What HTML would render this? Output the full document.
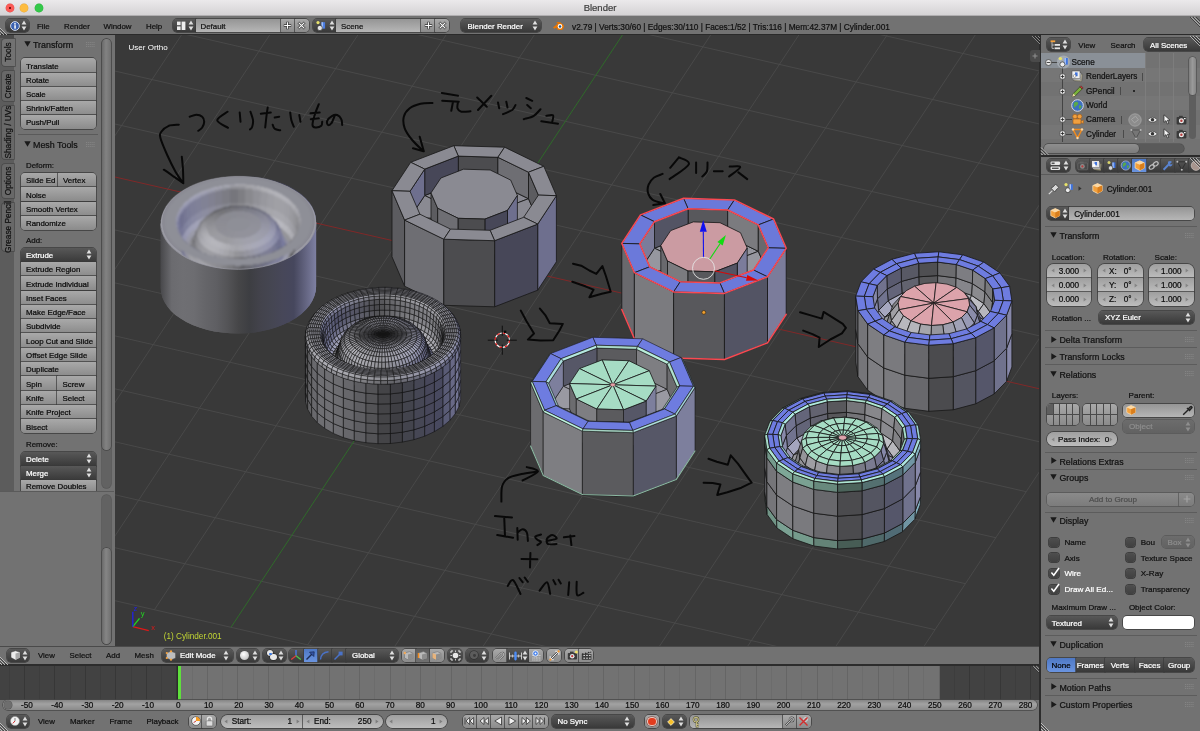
<!DOCTYPE html>
<html><head><meta charset="utf-8"><title>Blender</title>
<style>
html,body{margin:0;padding:0;}
body{width:1200px;height:731px;position:relative;overflow:hidden;background:#727272;font-family:"Liberation Sans", sans-serif;font-size:7.9px;-webkit-text-stroke:0.22px;}
div,svg{position:absolute;box-sizing:border-box;}
svg{overflow:visible;}
</style></head><body><div id="root" style="left:0;top:0;width:1200px;height:731px;will-change:transform;">
<div style="left:0px;top:0px;width:1200px;height:16px;background:linear-gradient(#ebe9eb,#d5d3d5);border-bottom:1px solid #b0aeb0;"></div>
<div style="left:5.9px;top:4.1px;width:8.2px;height:8.2px;background:#fc5b57;border-radius:50%;box-shadow:0 0 0 0.4px #df4744;"></div>
<div style="left:20.299999999999997px;top:4.1px;width:8.2px;height:8.2px;background:#fdbc40;border-radius:50%;box-shadow:0 0 0 0.4px #de9f34;"></div>
<div style="left:34.5px;top:4.1px;width:8.2px;height:8.2px;background:#34c84a;border-radius:50%;box-shadow:0 0 0 0.4px #27aa35;"></div>
<div style="left:8.7px;top:6.8999999999999995px;width:2.6px;height:2.6px;background:#4d0000;border-radius:50%;"></div>
<div style="left:0px;top:2.4000000000000004px;height:12px;line-height:12px;font-size:9.5px;color:#3e3e3e;white-space:pre;width:1200px;text-align:center;">Blender</div>
<div style="left:0px;top:16px;width:1200px;height:19px;background:#727272;border-bottom:1px solid #2a2a2a;"></div>
<div style="left:6.2px;top:19.1px;width:22.4px;height:13.4px;background:linear-gradient(#585858,#393939);box-shadow:0 0 0 0.7px #3a3a3a;border-radius:4px 4px 4px 4px;"></div>
<svg style="left:9.5px;top:20.8px" width="10" height="10" viewBox="0 0 10 10"><circle cx="5" cy="5" r="4.4" fill="#3b62b0" stroke="#dfe6f5" stroke-width="0.9"/><rect x="4.3" y="4.2" width="1.5" height="3.5" fill="#fff"/><circle cx="5" cy="2.8" r="0.9" fill="#fff"/></svg>
<svg style="left:21px;top:20.3px" width="6" height="11" viewBox="0 0 6 11"><path d="M3 0.6 L5.4 4.4 H0.6Z M3 10.4 L5.4 6.6 H0.6Z" fill="#ddd"/></svg>
<div style="left:37px;top:21.0px;height:12px;line-height:12px;font-size:7.9px;color:#111;white-space:pre;">File</div>
<div style="left:64px;top:21.0px;height:12px;line-height:12px;font-size:7.9px;color:#111;white-space:pre;">Render</div>
<div style="left:103.5px;top:21.0px;height:12px;line-height:12px;font-size:7.9px;color:#111;white-space:pre;">Window</div>
<div style="left:146px;top:21.0px;height:12px;line-height:12px;font-size:7.9px;color:#111;white-space:pre;">Help</div>
<div style="left:172.5px;top:19.1px;width:23px;height:13.4px;background:linear-gradient(#585858,#393939);box-shadow:0 0 0 0.7px #3a3a3a;border-radius:4px 0px 0px 4px;"></div>
<div style="left:195.5px;top:19.1px;width:85px;height:13.4px;background:linear-gradient(#959595,#b6b6b6);box-shadow:0 0 0 0.7px #3a3a3a;"></div>
<div style="left:280.5px;top:19.1px;width:14px;height:13.4px;background:linear-gradient(#a9a9a9,#8b8b8b);box-shadow:0 0 0 0.7px #3a3a3a;"></div>
<div style="left:294.5px;top:19.1px;width:14px;height:13.4px;background:linear-gradient(#a9a9a9,#8b8b8b);box-shadow:0 0 0 0.7px #3a3a3a;border-radius:0px 4px 4px 0px;"></div>
<svg style="left:188.0px;top:20.3px" width="6" height="11" viewBox="0 0 6 11"><path d="M3 0.6 L5.4 4.4 H0.6Z M3 10.4 L5.4 6.6 H0.6Z" fill="#ddd"/></svg>
<div style="left:200.5px;top:21.0px;height:12px;line-height:12px;font-size:7.9px;color:#111;white-space:pre;">Default</div>
<svg style="left:283.0px;top:21.3px" width="9" height="9" viewBox="0 0 9 9"><path d="M4.5 0.8V8.2M0.8 4.5H8.2" stroke="#333" stroke-width="2.4"/><path d="M4.5 1.2V7.8M1.2 4.5H7.8" stroke="#fff" stroke-width="1.1"/></svg>
<svg style="left:297.0px;top:21.3px" width="9" height="9" viewBox="0 0 9 9"><path d="M1.3 1.3L7.7 7.7M7.7 1.3L1.3 7.7" stroke="#333" stroke-width="2.4"/><path d="M1.6 1.6L7.4 7.4M7.4 1.6L1.6 7.4" stroke="#fff" stroke-width="1.1"/></svg>
<svg style="left:172.5px;top:19.1px" width="23" height="14" viewBox="0 0 23 14"><rect x="4" y="2.6" width="3.6" height="3.6" fill="#eee"/><rect x="4" y="7.4" width="3.6" height="3.6" fill="#eee"/><rect x="8.6" y="2.6" width="3.8" height="8.4" fill="#eee"/></svg>
<div style="left:313px;top:19.1px;width:23px;height:13.4px;background:linear-gradient(#585858,#393939);box-shadow:0 0 0 0.7px #3a3a3a;border-radius:4px 0px 0px 4px;"></div>
<div style="left:336px;top:19.1px;width:85px;height:13.4px;background:linear-gradient(#959595,#b6b6b6);box-shadow:0 0 0 0.7px #3a3a3a;"></div>
<div style="left:421px;top:19.1px;width:14px;height:13.4px;background:linear-gradient(#a9a9a9,#8b8b8b);box-shadow:0 0 0 0.7px #3a3a3a;"></div>
<div style="left:435px;top:19.1px;width:14px;height:13.4px;background:linear-gradient(#a9a9a9,#8b8b8b);box-shadow:0 0 0 0.7px #3a3a3a;border-radius:0px 4px 4px 0px;"></div>
<svg style="left:328.5px;top:20.3px" width="6" height="11" viewBox="0 0 6 11"><path d="M3 0.6 L5.4 4.4 H0.6Z M3 10.4 L5.4 6.6 H0.6Z" fill="#ddd"/></svg>
<div style="left:341px;top:21.0px;height:12px;line-height:12px;font-size:7.9px;color:#111;white-space:pre;">Scene</div>
<svg style="left:423.5px;top:21.3px" width="9" height="9" viewBox="0 0 9 9"><path d="M4.5 0.8V8.2M0.8 4.5H8.2" stroke="#333" stroke-width="2.4"/><path d="M4.5 1.2V7.8M1.2 4.5H7.8" stroke="#fff" stroke-width="1.1"/></svg>
<svg style="left:437.5px;top:21.3px" width="9" height="9" viewBox="0 0 9 9"><path d="M1.3 1.3L7.7 7.7M7.7 1.3L1.3 7.7" stroke="#333" stroke-width="2.4"/><path d="M1.6 1.6L7.4 7.4M7.4 1.6L1.6 7.4" stroke="#fff" stroke-width="1.1"/></svg>
<svg style="left:313px;top:19.1px" width="23" height="14" viewBox="0 0 23 14"><circle cx="5" cy="3.6" r="1.6" fill="#e8e36a"/><path d="M8.5 3.2h3.6v6.4h-3.6z" fill="#4a7be0"/><path d="M8.5 3.2h1.6v6.4h-1.6z" fill="#9dbcf5"/><circle cx="6.8" cy="9" r="2.6" fill="#e6e6e6" stroke="#222" stroke-width="0.6"/></svg>
<div style="left:461px;top:19.1px;width:80px;height:13.4px;background:linear-gradient(#585858,#393939);box-shadow:0 0 0 0.7px #3a3a3a;border-radius:4px 4px 4px 4px;"></div>
<div style="left:467.5px;top:20.8px;height:12px;line-height:12px;font-size:7.9px;color:#fff;white-space:pre;">Blender Render</div>
<svg style="left:531.5px;top:20.3px" width="6" height="11" viewBox="0 0 6 11"><path d="M3 0.6 L5.4 4.4 H0.6Z M3 10.4 L5.4 6.6 H0.6Z" fill="#e0e0e0"/></svg>
<svg style="left:552px;top:20px" width="13" height="12" viewBox="0 0 13 12"><path d="M1 7.5 L6.2 3.2 L4.2 3.2 L5.2 2 L8.2 2.2 L11.8 5.2 Q12.6 7.6 10.6 9.4 Q8 10.8 5.4 9.4 L4.4 7.5 L2.4 8.8Z" fill="#ea7600"/><circle cx="8" cy="6.4" r="2.3" fill="#fff"/><circle cx="8" cy="6.4" r="1.25" fill="#265787"/></svg>
<div style="left:572px;top:21.0px;height:12px;line-height:12px;font-size:8.3px;color:#111;white-space:pre;">v2.79 | Verts:30/60 | Edges:30/110 | Faces:1/52 | Tris:116 | Mem:42.37M | Cylinder.001</div>
<svg style="left:0px;top:26px" width="10" height="10" viewBox="0 0 10 10"><path d="M0 2L8 10M0 5L5 10M0 8L2 10" stroke="#c8c8c8" stroke-width="0.8"/><path d="M0 3.2L6.8 10M0 6.2L3.8 10" stroke="#333" stroke-width="0.8"/></svg>
<svg style="left:1188px;top:17px" width="12" height="10" viewBox="0 0 12 10"><path d="M2 0L12 10M5 0L12 7M8 0L12 4" stroke="#333" stroke-width="0.8"/><path d="M3.2 0L12 8.8M6.2 0L12 5.8" stroke="#c8c8c8" stroke-width="0.8"/></svg>
<div style="left:0px;top:35px;width:114px;height:611px;background:#727272;"></div>
<div style="left:0px;top:35px;width:14px;height:456px;background:#5c5c5c;"></div>
<div style="left:0px;top:35px;width:14px;height:3px;background:#4a4a4a;"></div>
<div style="left:2px;top:39px;width:13px;height:26.5px;background:#727272;border-radius:3px 0 0 3px;box-shadow:0 0 0 0.7px #474747;"></div>
<div style="left:12px;top:39px;width:3px;height:26.5px;background:#727272;"></div>
<div style="left:-32px;top:46.25px;width:80px;height:12px;line-height:12px;text-align:center;font-size:8.3px;color:#111;transform:rotate(-90deg);white-space:pre;">Tools</div>
<div style="left:2px;top:70.5px;width:12px;height:30.0px;background:#686868;border-radius:3px 0 0 3px;box-shadow:0 0 0 0.7px #474747;"></div>
<div style="left:-32px;top:79.5px;width:80px;height:12px;line-height:12px;text-align:center;font-size:8.3px;color:#111;transform:rotate(-90deg);white-space:pre;">Create</div>
<div style="left:2px;top:105.5px;width:12px;height:53.0px;background:#686868;border-radius:3px 0 0 3px;box-shadow:0 0 0 0.7px #474747;"></div>
<div style="left:-32px;top:126.0px;width:80px;height:12px;line-height:12px;text-align:center;font-size:8.3px;color:#111;transform:rotate(-90deg);white-space:pre;">Shading / UVs</div>
<div style="left:2px;top:164px;width:12px;height:33.5px;background:#686868;border-radius:3px 0 0 3px;box-shadow:0 0 0 0.7px #474747;"></div>
<div style="left:-32px;top:174.75px;width:80px;height:12px;line-height:12px;text-align:center;font-size:8.3px;color:#111;transform:rotate(-90deg);white-space:pre;">Options</div>
<div style="left:2px;top:203px;width:12px;height:48px;background:#686868;border-radius:3px 0 0 3px;box-shadow:0 0 0 0.7px #474747;"></div>
<div style="left:-32px;top:221.0px;width:80px;height:12px;line-height:12px;text-align:center;font-size:8.3px;color:#111;transform:rotate(-90deg);white-space:pre;">Grease Pencil</div>
<svg style="left:23.5px;top:41px" width="7" height="6" viewBox="0 0 7 6"><path d="M0.3 0.3H6.7L3.5 5.7Z" fill="#1a1a1a"/></svg>
<div style="left:33.0px;top:38.900000000000006px;height:12px;line-height:12px;font-size:8.9px;color:#111;white-space:pre;">Transform</div>
<svg style="left:85.5px;top:41.5px" width="9" height="5" viewBox="0 0 9 5"><path d="M0 0.5H9M0 2.5H9M0 4.5H9" stroke="#8c8c8c" stroke-width="0.7" stroke-dasharray="1.2 0.9"/></svg>
<div style="left:20.5px;top:58.4px;width:75px;height:14.15px;background:linear-gradient(#a9a9a9,#8b8b8b);box-shadow:0 0 0 0.7px #3a3a3a;border-radius:4px 4px 0px 0px;"></div>
<div style="left:26.0px;top:60.675px;height:12px;line-height:12px;font-size:7.9px;color:#0a0a0a;white-space:pre;">Translate</div>
<div style="left:20.5px;top:72.55px;width:75px;height:14.15px;background:linear-gradient(#a9a9a9,#8b8b8b);box-shadow:0 0 0 0.7px #3a3a3a;border-radius:0px 0px 0px 0px;"></div>
<div style="left:26.0px;top:74.825px;height:12px;line-height:12px;font-size:7.9px;color:#0a0a0a;white-space:pre;">Rotate</div>
<div style="left:20.5px;top:86.7px;width:75px;height:14.15px;background:linear-gradient(#a9a9a9,#8b8b8b);box-shadow:0 0 0 0.7px #3a3a3a;border-radius:0px 0px 0px 0px;"></div>
<div style="left:26.0px;top:88.97500000000001px;height:12px;line-height:12px;font-size:7.9px;color:#0a0a0a;white-space:pre;">Scale</div>
<div style="left:20.5px;top:100.85px;width:75px;height:14.15px;background:linear-gradient(#a9a9a9,#8b8b8b);box-shadow:0 0 0 0.7px #3a3a3a;border-radius:0px 0px 0px 0px;"></div>
<div style="left:26.0px;top:103.125px;height:12px;line-height:12px;font-size:7.9px;color:#0a0a0a;white-space:pre;">Shrink/Fatten</div>
<div style="left:20.5px;top:115.0px;width:75px;height:14.15px;background:linear-gradient(#a9a9a9,#8b8b8b);box-shadow:0 0 0 0.7px #3a3a3a;border-radius:0px 0px 4px 4px;"></div>
<div style="left:26.0px;top:117.275px;height:12px;line-height:12px;font-size:7.9px;color:#0a0a0a;white-space:pre;">Push/Pull</div>
<div style="left:18px;top:134.4px;width:80px;height:0.8px;background:#5a5a5a;"></div>
<svg style="left:23.5px;top:141px" width="7" height="6" viewBox="0 0 7 6"><path d="M0.3 0.3H6.7L3.5 5.7Z" fill="#1a1a1a"/></svg>
<div style="left:33.0px;top:138.89999999999998px;height:12px;line-height:12px;font-size:8.9px;color:#111;white-space:pre;">Mesh Tools</div>
<svg style="left:85.5px;top:141.5px" width="9" height="5" viewBox="0 0 9 5"><path d="M0 0.5H9M0 2.5H9M0 4.5H9" stroke="#8c8c8c" stroke-width="0.7" stroke-dasharray="1.2 0.9"/></svg>
<div style="left:26px;top:160.2px;height:12px;line-height:12px;font-size:7.9px;color:#111;white-space:pre;">Deform:</div>
<div style="left:20.5px;top:173.2px;width:37px;height:14.15px;background:linear-gradient(#a9a9a9,#8b8b8b);box-shadow:0 0 0 0.7px #3a3a3a;border-radius:4px 0px 0px 0px;"></div>
<div style="left:26.0px;top:175.47499999999997px;height:12px;line-height:12px;font-size:7.9px;color:#0a0a0a;white-space:pre;">Slide Ed</div>
<div style="left:57.5px;top:173.2px;width:38px;height:14.15px;background:linear-gradient(#a9a9a9,#8b8b8b);box-shadow:0 0 0 0.7px #3a3a3a;border-radius:0px 4px 0px 0px;"></div>
<div style="left:63.0px;top:175.47499999999997px;height:12px;line-height:12px;font-size:7.9px;color:#0a0a0a;white-space:pre;">Vertex</div>
<div style="left:20.5px;top:187.35px;width:75px;height:14.15px;background:linear-gradient(#a9a9a9,#8b8b8b);box-shadow:0 0 0 0.7px #3a3a3a;border-radius:0px 0px 0px 0px;"></div>
<div style="left:26.0px;top:189.62499999999997px;height:12px;line-height:12px;font-size:7.9px;color:#0a0a0a;white-space:pre;">Noise</div>
<div style="left:20.5px;top:201.5px;width:75px;height:14.15px;background:linear-gradient(#a9a9a9,#8b8b8b);box-shadow:0 0 0 0.7px #3a3a3a;border-radius:0px 0px 0px 0px;"></div>
<div style="left:26.0px;top:203.77499999999998px;height:12px;line-height:12px;font-size:7.9px;color:#0a0a0a;white-space:pre;">Smooth Vertex</div>
<div style="left:20.5px;top:215.64999999999998px;width:75px;height:14.15px;background:linear-gradient(#a9a9a9,#8b8b8b);box-shadow:0 0 0 0.7px #3a3a3a;border-radius:0px 0px 4px 4px;"></div>
<div style="left:26.0px;top:217.92499999999995px;height:12px;line-height:12px;font-size:7.9px;color:#0a0a0a;white-space:pre;">Randomize</div>
<div style="left:26px;top:235.2px;height:12px;line-height:12px;font-size:7.9px;color:#111;white-space:pre;">Add:</div>
<div style="left:20.5px;top:248px;width:75px;height:13.6px;background:linear-gradient(#585858,#393939);box-shadow:0 0 0 0.7px #3a3a3a;border-radius:4px 4px 0px 0px;"></div>
<div style="left:26.0px;top:249.8px;height:12px;line-height:12px;font-size:7.9px;color:#fff;white-space:pre;">Extrude</div>
<svg style="left:86.0px;top:249.3px" width="6" height="11" viewBox="0 0 6 11"><path d="M3 0.6 L5.4 4.4 H0.6Z M3 10.4 L5.4 6.6 H0.6Z" fill="#e0e0e0"/></svg>
<div style="left:20.5px;top:261.9px;width:75px;height:14.3px;background:linear-gradient(#a9a9a9,#8b8b8b);box-shadow:0 0 0 0.7px #3a3a3a;border-radius:0px 0px 0px 0px;"></div>
<div style="left:26.0px;top:264.24999999999994px;height:12px;line-height:12px;font-size:7.9px;color:#0a0a0a;white-space:pre;">Extrude Region</div>
<div style="left:20.5px;top:276.2px;width:75px;height:14.3px;background:linear-gradient(#a9a9a9,#8b8b8b);box-shadow:0 0 0 0.7px #3a3a3a;border-radius:0px 0px 0px 0px;"></div>
<div style="left:26.0px;top:278.54999999999995px;height:12px;line-height:12px;font-size:7.9px;color:#0a0a0a;white-space:pre;">Extrude Individual</div>
<div style="left:20.5px;top:290.5px;width:75px;height:14.3px;background:linear-gradient(#a9a9a9,#8b8b8b);box-shadow:0 0 0 0.7px #3a3a3a;border-radius:0px 0px 0px 0px;"></div>
<div style="left:26.0px;top:292.84999999999997px;height:12px;line-height:12px;font-size:7.9px;color:#0a0a0a;white-space:pre;">Inset Faces</div>
<div style="left:20.5px;top:304.79999999999995px;width:75px;height:14.3px;background:linear-gradient(#a9a9a9,#8b8b8b);box-shadow:0 0 0 0.7px #3a3a3a;border-radius:0px 0px 0px 0px;"></div>
<div style="left:26.0px;top:307.1499999999999px;height:12px;line-height:12px;font-size:7.9px;color:#0a0a0a;white-space:pre;">Make Edge/Face</div>
<div style="left:20.5px;top:319.09999999999997px;width:75px;height:14.3px;background:linear-gradient(#a9a9a9,#8b8b8b);box-shadow:0 0 0 0.7px #3a3a3a;border-radius:0px 0px 0px 0px;"></div>
<div style="left:26.0px;top:321.44999999999993px;height:12px;line-height:12px;font-size:7.9px;color:#0a0a0a;white-space:pre;">Subdivide</div>
<div style="left:20.5px;top:333.4px;width:75px;height:14.3px;background:linear-gradient(#a9a9a9,#8b8b8b);box-shadow:0 0 0 0.7px #3a3a3a;border-radius:0px 0px 0px 0px;"></div>
<div style="left:26.0px;top:335.74999999999994px;height:12px;line-height:12px;font-size:7.9px;color:#0a0a0a;white-space:pre;">Loop Cut and Slide</div>
<div style="left:20.5px;top:347.7px;width:75px;height:14.3px;background:linear-gradient(#a9a9a9,#8b8b8b);box-shadow:0 0 0 0.7px #3a3a3a;border-radius:0px 0px 0px 0px;"></div>
<div style="left:26.0px;top:350.04999999999995px;height:12px;line-height:12px;font-size:7.9px;color:#0a0a0a;white-space:pre;">Offset Edge Slide</div>
<div style="left:20.5px;top:362.0px;width:75px;height:14.3px;background:linear-gradient(#a9a9a9,#8b8b8b);box-shadow:0 0 0 0.7px #3a3a3a;border-radius:0px 0px 0px 0px;"></div>
<div style="left:26.0px;top:364.34999999999997px;height:12px;line-height:12px;font-size:7.9px;color:#0a0a0a;white-space:pre;">Duplicate</div>
<div style="left:20.5px;top:376.29999999999995px;width:36.5px;height:14.3px;background:linear-gradient(#a9a9a9,#8b8b8b);box-shadow:0 0 0 0.7px #3a3a3a;border-radius:0px 0px 0px 0px;"></div>
<div style="left:26.0px;top:378.6499999999999px;height:12px;line-height:12px;font-size:7.9px;color:#0a0a0a;white-space:pre;">Spin</div>
<div style="left:57.0px;top:376.29999999999995px;width:38.5px;height:14.3px;background:linear-gradient(#a9a9a9,#8b8b8b);box-shadow:0 0 0 0.7px #3a3a3a;border-radius:0px 0px 0px 0px;"></div>
<div style="left:62.5px;top:378.6499999999999px;height:12px;line-height:12px;font-size:7.9px;color:#0a0a0a;white-space:pre;">Screw</div>
<div style="left:20.5px;top:390.59999999999997px;width:36.5px;height:14.3px;background:linear-gradient(#a9a9a9,#8b8b8b);box-shadow:0 0 0 0.7px #3a3a3a;border-radius:0px 0px 0px 0px;"></div>
<div style="left:26.0px;top:392.94999999999993px;height:12px;line-height:12px;font-size:7.9px;color:#0a0a0a;white-space:pre;">Knife</div>
<div style="left:57.0px;top:390.59999999999997px;width:38.5px;height:14.3px;background:linear-gradient(#a9a9a9,#8b8b8b);box-shadow:0 0 0 0.7px #3a3a3a;border-radius:0px 0px 0px 0px;"></div>
<div style="left:62.5px;top:392.94999999999993px;height:12px;line-height:12px;font-size:7.9px;color:#0a0a0a;white-space:pre;">Select</div>
<div style="left:20.5px;top:404.9px;width:75px;height:14.3px;background:linear-gradient(#a9a9a9,#8b8b8b);box-shadow:0 0 0 0.7px #3a3a3a;border-radius:0px 0px 0px 0px;"></div>
<div style="left:26.0px;top:407.24999999999994px;height:12px;line-height:12px;font-size:7.9px;color:#0a0a0a;white-space:pre;">Knife Project</div>
<div style="left:20.5px;top:419.19999999999993px;width:75px;height:14.3px;background:linear-gradient(#a9a9a9,#8b8b8b);box-shadow:0 0 0 0.7px #3a3a3a;border-radius:0px 0px 4px 4px;"></div>
<div style="left:26.0px;top:421.5499999999999px;height:12px;line-height:12px;font-size:7.9px;color:#0a0a0a;white-space:pre;">Bisect</div>
<div style="left:26px;top:438.7px;height:12px;line-height:12px;font-size:7.9px;color:#111;white-space:pre;">Remove:</div>
<div style="left:20.5px;top:451.5px;width:75px;height:14px;background:linear-gradient(#585858,#393939);box-shadow:0 0 0 0.7px #3a3a3a;border-radius:4px 4px 0px 0px;"></div>
<div style="left:26.0px;top:453.5px;height:12px;line-height:12px;font-size:7.9px;color:#fff;white-space:pre;">Delete</div>
<svg style="left:86.0px;top:453.0px" width="6" height="11" viewBox="0 0 6 11"><path d="M3 0.6 L5.4 4.4 H0.6Z M3 10.4 L5.4 6.6 H0.6Z" fill="#e0e0e0"/></svg>
<div style="left:20.5px;top:465.8px;width:75px;height:14px;background:linear-gradient(#585858,#393939);box-shadow:0 0 0 0.7px #3a3a3a;border-radius:0px 0px 0px 0px;"></div>
<div style="left:26.0px;top:467.8px;height:12px;line-height:12px;font-size:7.9px;color:#fff;white-space:pre;">Merge</div>
<svg style="left:86.0px;top:467.3px" width="6" height="11" viewBox="0 0 6 11"><path d="M3 0.6 L5.4 4.4 H0.6Z M3 10.4 L5.4 6.6 H0.6Z" fill="#e0e0e0"/></svg>
<div style="left:20.5px;top:480px;width:75px;height:11.5px;background:linear-gradient(#a9a9a9,#8b8b8b);box-shadow:0 0 0 0.7px #3a3a3a;border-radius:0px 0px 0px 0px;"></div>
<div style="left:26.0px;top:480.95px;height:12px;line-height:12px;font-size:7.9px;color:#0a0a0a;white-space:pre;">Remove Doubles</div>
<div style="left:0px;top:491px;width:114px;height:155px;background:#727272;"></div>
<div style="left:0px;top:490.6px;width:114px;height:1px;background:#5a5a5a;"></div>
<div style="left:101.5px;top:39px;width:9.4px;height:449px;background:#626262;border-radius:4.7px;box-shadow:0 0 0 0.7px #575757;"></div>
<div style="left:101.5px;top:39px;width:9.4px;height:411px;background:linear-gradient(90deg,#6a6a6a,#828282 45%,#707070);border-radius:4.7px;box-shadow:0 0 0 0.7px #454545;"></div>
<div style="left:101.5px;top:495px;width:9.4px;height:149px;background:#626262;border-radius:4.7px;box-shadow:0 0 0 0.7px #575757;"></div>
<div style="left:101.5px;top:548px;width:9.4px;height:96px;background:linear-gradient(90deg,#6a6a6a,#858585 45%,#707070);border-radius:4.7px;box-shadow:0 0 0 0.7px #454545;"></div>
<svg style="left:114.5px;top:35px;overflow:hidden" width="925" height="611" viewBox="0 0 925 611"><rect x="0" y="0" width="925" height="611" fill="#393939"/><path d="M-496.8 451.9L-10.4 -284.1M-496.8 451.9L728.8 732.7M-420.2 469.4L66.2 -266.6M-466.4 405.9L759.2 686.7M-343.6 487.0L142.8 -249.0M-436.0 359.9L789.6 640.7M-267.0 504.5L219.4 -231.4M-405.6 313.9L820.0 594.7M-190.4 522.1L296.0 -213.9M-375.2 267.9L850.4 548.7M-113.8 539.6L372.6 -196.3M-344.8 221.9L880.8 502.7M-37.2 557.2L449.2 -178.8M-314.4 175.9L911.2 456.7M39.4 574.8L525.8 -161.2M-284.0 129.9L941.6 410.7M192.6 609.9L679.0 -126.1M-223.2 37.9L1002.4 318.7M269.2 627.4L755.6 -108.6M-192.8 -8.1L1032.8 272.7M345.8 645.0L832.2 -91.0M-162.4 -54.1L1063.2 226.7M422.4 662.5L908.8 -73.5M-132.0 -100.1L1093.6 180.7M499.0 680.0L985.4 -55.9M-101.6 -146.1L1124.0 134.7M575.6 697.6L1062.0 -38.4M-71.2 -192.1L1154.4 88.7M652.2 715.2L1138.6 -20.8M-40.8 -238.1L1184.8 42.7M728.8 732.7L1215.2 -3.3M-10.4 -284.1L1215.2 -3.3" stroke="#4c4c4c" stroke-width="0.85" fill="none"/><path d="M-253.6 83.9L972.0 364.7" stroke="#802828" stroke-width="1"/><path d="M116.0 592.3L602.4 -143.7" stroke="#2f6a2a" stroke-width="1"/><linearGradient id="gw1" gradientUnits="userSpaceOnUse" x1="45.7" y1="0" x2="201.1" y2="0"><stop offset="0.000" stop-color="#48484b"/><stop offset="0.071" stop-color="#6b6b6f"/><stop offset="0.143" stop-color="#6f6f73"/><stop offset="0.214" stop-color="#6d6d71"/><stop offset="0.286" stop-color="#656569"/><stop offset="0.357" stop-color="#5f5f63"/><stop offset="0.429" stop-color="#545457"/><stop offset="0.500" stop-color="#464648"/><stop offset="0.571" stop-color="#3d3e42"/><stop offset="0.643" stop-color="#43434c"/><stop offset="0.714" stop-color="#454652"/><stop offset="0.786" stop-color="#474759"/><stop offset="0.857" stop-color="#46475d"/><stop offset="0.929" stop-color="#62637f"/><stop offset="1.000" stop-color="#7e80a2"/></linearGradient><polygon points="201.1,186.4 200.7,181.5 199.4,176.7 197.3,172.0 194.4,167.5 190.7,163.2 186.3,159.2 181.1,155.5 175.4,152.1 169.1,149.1 162.2,146.5 155.0,144.3 147.4,142.6 139.5,141.5 131.5,140.8 123.4,140.6 115.3,140.9 107.2,141.7 99.4,143.0 91.8,144.8 84.5,147.1 77.7,149.8 71.4,152.9 65.6,156.4 60.5,160.2 56.1,164.3 52.4,168.7 49.5,173.2 47.4,178.0 46.1,182.8 45.7,187.6 45.7,252.7 46.1,257.6 47.4,262.4 49.5,267.0 52.4,271.6 56.1,275.9 60.5,279.9 65.7,283.6 71.4,287.0 77.7,290.0 84.6,292.6 91.8,294.8 99.4,296.4 107.3,297.6 115.3,298.3 123.4,298.5 131.5,298.2 139.6,297.4 147.4,296.1 155.0,294.3 162.3,292.0 169.1,289.3 175.4,286.2 181.2,282.7 186.3,278.9 190.7,274.8 194.4,270.4 197.3,265.8 199.4,261.1 200.7,256.3 201.1,251.5" fill="url(#gw1)"/><polygon points="152.1,144.5 159.5,146.4 166.5,148.9 173.0,151.7 179.0,155.0 184.3,158.6 189.1,162.5 193.0,166.7 196.3,171.1 198.7,175.7 200.3,180.5 201.0,185.3 201.0,190.2 200.0,195.0 198.2,199.8 195.6,204.4 192.2,208.8 188.1,213.1 183.2,217.0 177.7,220.6 171.6,223.9 165.0,226.7 157.9,229.2 150.4,231.2 142.7,232.7 134.7,233.7 126.6,234.2 118.5,234.2 110.4,233.7 102.4,232.7 94.7,231.2 87.3,229.3 80.3,226.8 73.8,224.0 67.8,220.7 62.5,217.1 57.7,213.2 53.8,209.0 50.5,204.6 48.1,200.0 46.5,195.2 45.8,190.4 45.8,185.5 46.8,180.7 48.6,175.9 51.2,171.3 54.6,166.9 58.7,162.6 63.6,158.7 69.1,155.1 75.2,151.8 81.8,149.0 88.9,146.5 96.4,144.5 104.1,143.0 112.1,142.0 120.2,141.5 128.3,141.5 136.4,142.0 144.4,143.0 152.1,144.5" fill="#9a9aa3"/><polygon points="151.5,144.1 158.8,146.0 165.6,148.4 172.0,151.2 177.9,154.4 183.2,157.9 187.8,161.8 191.7,165.9 194.9,170.3 197.3,174.8 198.8,179.4 199.6,184.2 199.5,189.0 198.6,193.7 196.8,198.4 194.3,202.9 190.9,207.3 186.9,211.4 182.1,215.2 176.7,218.8 170.7,222.0 164.2,224.8 157.2,227.2 149.9,229.1 142.3,230.6 134.5,231.6 126.5,232.1 118.6,232.1 110.6,231.7 102.8,230.7 95.3,229.2 88.0,227.3 81.2,224.9 74.8,222.1 68.9,218.9 63.6,215.4 59.0,211.5 55.1,207.4 51.9,203.1 49.5,198.5 48.0,193.9 47.2,189.1 47.3,184.4 48.2,179.6 50.0,175.0 52.5,170.4 55.9,166.1 59.9,161.9 64.7,158.1 70.1,154.5 76.1,151.3 82.6,148.5 89.6,146.1 96.9,144.2 104.5,142.7 112.3,141.7 120.3,141.2 128.2,141.2 136.2,141.7 144.0,142.6 151.5,144.1" fill="#8a8a93"/><filter id="bl" x="-5%" y="-5%" width="110%" height="110%"><feGaussianBlur stdDeviation="0.8"/></filter><g filter="url(#bl)"><g shape-rendering="crispEdges"><g stroke-linejoin="round"><path d="M122.5 175.3l7.6 0.2l-0.4 5.7l-7.1-0.2z" fill="#9f9fa5"/><path d="M115 175.8l7.5-0.5l0.1 5.7l-7.2 0.4z" fill="#a1a1a9"/><path d="M122.6 181l7.1 0.2l-0.4 3.5l-6.7-0.1z" fill="#9d9da5"/><path d="M130.1 175.5l7.4 0.8l-0.7 5.6l-7.1-0.7z" fill="#a8a8ad"/><path d="M115.4 181.4l7.2-0.4l0 3.6l-6.6 0.3z" fill="#9e9ea7"/><path d="M107.6 176.8l7.4-1l0.4 5.6l-7 1z" fill="#a3a4ae"/><path d="M129.7 181.2l7.1 0.7l-0.9 3.5l-6.6-0.7z" fill="#9c9ca3"/><path d="M108.4 182.4l7-1l0.6 3.5l-6.6 0.9z" fill="#9e9ea8"/><path d="M137.5 176.3l7.2 1.3l-1.1 5.6l-6.8-1.3z" fill="#afafb4"/><path d="M122.5 167.9l7.7 0.2l-0.1 7.4l-7.6-0.2z" fill="#88888d"/><path d="M114.8 168.3l7.7-0.4l0 7.4l-7.5 0.5z" fill="#828288"/><path d="M100.5 178.3l7.1-1.5l0.8 5.6l-6.7 1.5z" fill="#a5a5b2"/><path d="M136.8 181.9l6.8 1.3l-1.4 3.4l-6.3-1.2z" fill="#9b9ba1"/><path d="M130.2 168.1l7.6 0.7l-0.3 7.5l-7.4-0.8z" fill="#929297"/><path d="M101.7 183.9l6.7-1.5l1 3.4l-6.3 1.4z" fill="#9e9fa9"/><path d="M107.3 169.4l7.5-1.1l0.2 7.5l-7.4 1z" fill="#868790"/><path d="M122.6 184.6l6.7 0.1l-0.4 0.3l-6.2-0.1z" fill="#6a6a73"/><path d="M116 184.9l6.6-0.3l0.1 0.3l-6.2 0.3z" fill="#686870"/><path d="M129.3 184.7l6.6 0.7l-0.8 0.3l-6.2-0.7z" fill="#6d6d77"/><path d="M144.7 177.6l6.8 1.9l-1.4 5.5l-6.5-1.8z" fill="#b4b4ba"/><path d="M109.4 185.8l6.6-0.9l0.5 0.3l-6.2 0.9z" fill="#66666d"/><path d="M137.8 168.8l7.4 1.4l-0.5 7.4l-7.2-1.3z" fill="#9a9aa0"/><path d="M143.6 183.2l6.5 1.8l-1.8 3.2l-6.1-1.6z" fill="#99999f"/><path d="M100 171l7.3-1.6l0.3 7.4l-7.1 1.5z" fill="#8a8a97"/><path d="M93.8 180.4l6.7-2.1l1.2 5.6l-6.4 2z" fill="#a5a6b5"/><path d="M95.3 185.9l6.4-2l1.4 3.3l-5.9 1.9z" fill="#9e9ea9"/><path d="M135.9 185.4l6.3 1.2l-1.2 0.2l-5.9-1.1z" fill="#6f707b"/><path d="M103.1 187.2l6.3-1.4l0.9 0.3l-5.8 1.3z" fill="#65656a"/><path d="M122.5 160.2l7.8 0.2l-0.1 7.7l-7.7-0.2z" fill="#7e7e83"/><path d="M114.7 160.6l7.8-0.4l0 7.7l-7.7 0.4z" fill="#76767b"/><path d="M145.2 170.2l7 1.9l-0.7 7.4l-6.8-1.9z" fill="#a1a1a7"/><path d="M151.5 179.5l6.3 2.4l-1.7 5.3l-6-2.2z" fill="#b7b7bd"/><path d="M130.3 160.4l7.7 0.7l-0.2 7.7l-7.6-0.7z" fill="#89898e"/><path d="M93.1 173.1l6.9-2.1l0.5 7.3l-6.7 2.1z" fill="#8c8c9c"/><path d="M142.2 186.6l6.1 1.6l-1.6 0.1l-5.7-1.5z" fill="#73737f"/><path d="M150.1 185l6 2.2l-2.2 3.2l-5.6-2.2z" fill="#97979c"/><path d="M107.1 161.7l7.6-1.1l0.1 7.7l-7.5 1.1z" fill="#7b7b84"/><path d="M97.2 189.1l5.9-1.9l1.4 0.2l-5.6 1.7z" fill="#666669"/><path d="M87.6 183.1l6.2-2.7l1.5 5.5l-5.9 2.5z" fill="#a5a5b7"/><path d="M89.4 188.4l5.9-2.5l1.9 3.2l-5.5 2.3z" fill="#9e9ea9"/><path d="M138 161.1l7.5 1.4l-0.3 7.7l-7.4-1.4z" fill="#919197"/><path d="M99.7 163.3l7.4-1.6l0.2 7.7l-7.3 1.6z" fill="#7f7f8b"/><path d="M122.3 142.7l9.6 0.2l-1.3 6.6l-8.1-0.1z" fill="#8e8f97"/><path d="M112.7 143.3l9.6-0.6l0.2 6.7l-8.2 0.4z" fill="#8e8f97"/><path d="M152.2 172.1l6.5 2.5l-0.9 7.3l-6.3-2.4z" fill="#a6a6ab"/><path d="M148.3 188.2l5.6 2.2l-2-0.1l-5.2-2z" fill="#767784"/><path d="M131.9 142.9l9.5 1l-2.7 6.5l-8.1-0.9z" fill="#8e8f97"/><path d="M86.7 175.8l6.4-2.7l0.7 7.3l-6.2 2.7z" fill="#8c8da0"/><path d="M103.3 144.5l9.4-1.2l1.6 6.5l-8 1.1z" fill="#8e8f97"/><path d="M91.7 191.4l5.5-2.3l1.7 0l-5.2 2.2z" fill="#6b6b6f"/><path d="M157.8 181.9l5.8 2.8l-2 5.3l-5.5-2.8z" fill="#b9b9bf"/><path d="M156.1 187.2l5.5 2.8l-2.6 2.9l-5.1-2.5z" fill="#97979c"/><path d="M145.5 162.5l7 2l-0.3 7.6l-7-1.9z" fill="#98989e"/><path d="M122.5 153.7l7.9 0.1l-0.1 6.6l-7.8-0.2z" fill="#7e7e83"/><path d="M114.6 154.1l7.9-0.4l0 6.5l-7.8 0.4z" fill="#76767b"/><path d="M84.1 191.3l5.3-2.9l2.3 3l-5 2.7z" fill="#9d9da9"/><path d="M82 186.1l5.6-3l1.8 5.3l-5.3 2.9z" fill="#a3a4b7"/><path d="M92.7 165.5l7-2.2l0.3 7.7l-6.9 2.1z" fill="#818191"/><path d="M130.4 153.8l7.7 0.8l-0.1 6.5l-7.7-0.7z" fill="#89898e"/><path d="M141.4 143.9l9.1 1.7l-4.1 6.2l-7.7-1.4z" fill="#8e8f97"/><path d="M106.9 155.1l7.7-1l0.1 6.5l-7.6 1.1z" fill="#7b7b84"/><path d="M94.2 146.5l9.1-2l3 6.4l-7.7 1.7z" fill="#8e8f97"/><path d="M153.9 190.4l5.1 2.5l-2.3-0.2l-4.8-2.4z" fill="#7a7b89"/><path d="M158.7 174.6l5.9 2.9l-1 7.2l-5.8-2.8z" fill="#a8a8ae"/><path d="M138.1 154.6l7.5 1.4l-0.1 6.5l-7.5-1.4z" fill="#919197"/><path d="M86.7 194.1l5-2.7l2-0.1l-4.6 2.5z" fill="#717175"/><path d="M122.5 151.1l8 0.2l-0.1 2.5l-7.9-0.1z" fill="#929298"/><path d="M99.5 156.8l7.4-1.7l0.2 6.6l-7.4 1.6z" fill="#7f7f8b"/><path d="M114.5 151.5l8-0.4l0 2.6l-7.9 0.4z" fill="#909096"/><path d="M122.5 149.4l8.1 0.1l-0.1 1.8l-8-0.2z" fill="#a5a5ac"/><path d="M152.5 164.5l6.6 2.5l-0.4 7.6l-6.5-2.5z" fill="#9d9da3"/><path d="M114.3 149.8l8.2-0.4l0 1.7l-8 0.4z" fill="#a7a7b0"/><path d="M81 178.9l5.7-3.1l0.9 7.3l-5.6 3z" fill="#8b8ca2"/><path d="M150.5 145.6l8.7 2.4l-5.4 5.8l-7.4-2z" fill="#8e8f97"/><path d="M130.5 151.3l7.8 0.8l-0.2 2.5l-7.7-0.8z" fill="#9c9ca2"/><path d="M161.6 190l4.8 3.1l-2.9 2.7l-4.5-2.9z" fill="#97979c"/><path d="M163.6 184.7l5 3.4l-2.2 5l-4.8-3.1z" fill="#b8b8bf"/><path d="M130.6 149.5l8.1 0.9l-0.4 1.7l-7.8-0.8z" fill="#a8a8ad"/><path d="M106.7 152.6l7.8-1.1l0.1 2.6l-7.7 1z" fill="#93949d"/><path d="M86.3 168.2l6.4-2.7l0.4 7.6l-6.4 2.7z" fill="#818295"/><path d="M106.3 150.9l8-1.1l0.2 1.7l-7.8 1.1z" fill="#a8a9b3"/><path d="M85.7 149.2l8.5-2.7l4.4 6.1l-7.2 2.3z" fill="#8e8f97"/><path d="M79.4 194.6l4.7-3.3l2.6 2.8l-4.3 3.1z" fill="#9c9ca9"/><path d="M145.6 156l7.1 2l-0.2 6.5l-7-2z" fill="#98989e"/><path d="M77.1 189.6l4.9-3.5l2.1 5.2l-4.7 3.3z" fill="#a1a2b7"/><path d="M138.3 152.1l7.6 1.4l-0.3 2.5l-7.5-1.4z" fill="#a4a4aa"/><path d="M138.7 150.4l7.7 1.4l-0.5 1.7l-7.6-1.4z" fill="#adadb3"/><path d="M92.5 159l7-2.2l0.2 6.5l-7 2.2z" fill="#818191"/><path d="M159 192.9l4.5 2.9l-2.6-0.4l-4.2-2.7z" fill="#7e7e8e"/><path d="M99.2 154.3l7.5-1.7l0.2 2.5l-7.4 1.7z" fill="#9696a3"/><path d="M98.6 152.6l7.7-1.7l0.4 1.7l-7.5 1.7z" fill="#a9a9b5"/><path d="M82.4 197.2l4.3-3.1l2.4-0.3l-4.1 2.9z" fill="#77777c"/><path d="M164.6 177.5l5.1 3.4l-1.1 7.2l-5-3.4z" fill="#a8a8ae"/><path d="M159.1 167l6 2.9l-0.5 7.6l-5.9-2.9z" fill="#a0a0a5"/><path d="M159.2 148l8.1 3l-6.6 5.4l-6.9-2.6z" fill="#8e8f97"/><path d="M145.9 153.5l7.2 2l-0.4 2.5l-7.1-2z" fill="#ababb0"/><path d="M76 182.5l5-3.6l1 7.2l-4.9 3.5z" fill="#898aa3"/><path d="M146.4 151.8l7.4 2l-0.7 1.7l-7.2-2z" fill="#b2b2b7"/><path d="M152.7 158l6.7 2.5l-0.3 6.5l-6.6-2.5z" fill="#9d9da3"/><path d="M80.5 171.4l5.8-3.2l0.4 7.6l-5.7 3.1z" fill="#808198"/><path d="M77.7 152.5l8-3.3l5.7 5.7l-6.8 2.8z" fill="#8e8f97"/><path d="M166.4 193.1l4 3.5l-3.1 2.5l-3.8-3.3z" fill="#96969c"/><path d="M92.1 156.5l7.1-2.2l0.3 2.5l-7 2.2z" fill="#9798a8"/><path d="M168.6 188.1l4.3 3.6l-2.5 4.9l-4-3.5z" fill="#b6b6bc"/><path d="M91.4 154.9l7.2-2.3l0.6 1.7l-7.1 2.2z" fill="#a8a9b7"/><path d="M86 161.7l6.5-2.7l0.2 6.5l-6.4 2.7z" fill="#818295"/><path d="M75.5 198.2l3.9-3.6l3 2.6l-3.6 3.4z" fill="#9b9ba8"/><path d="M73 193.4l4.1-3.8l2.3 5l-3.9 3.6z" fill="#9fa0b6"/><path d="M163.5 195.8l3.8 3.3l-2.9-0.6l-3.5-3.1z" fill="#828393"/><path d="M153.1 155.5l6.7 2.5l-0.4 2.5l-6.7-2.5z" fill="#afafb5"/><path d="M78.8 200.6l3.6-3.4l2.6-0.5l-3.3 3.2z" fill="#7d7d82"/><path d="M153.8 153.8l6.9 2.6l-0.9 1.6l-6.7-2.5z" fill="#b4b4ba"/><path d="M165.1 169.9l5.2 3.5l-0.6 7.5l-5.1-3.4z" fill="#a0a0a6"/><path d="M167.3 151l7.4 3.7l-7.8 4.8l-6.2-3.1z" fill="#8e8f97"/><path d="M85.6 159.3l6.5-2.8l0.4 2.5l-6.5 2.7z" fill="#9899ab"/><path d="M169.7 180.9l4.4 3.8l-1.2 7l-4.3-3.6z" fill="#a6a6ac"/><path d="M159.4 160.5l6 3l-0.3 6.4l-6-2.9z" fill="#a0a0a5"/><path d="M84.6 157.7l6.8-2.8l0.7 1.6l-6.5 2.8z" fill="#a8a8b8"/><path d="M75.4 175l5.1-3.6l0.5 7.5l-5 3.6z" fill="#7e7f98"/><path d="M70.6 156.5l7.1-4l6.9 5.2l-6 3.3z" fill="#8e8f97"/><path d="M80.2 164.9l5.8-3.2l0.3 6.5l-5.8 3.2z" fill="#808198"/><path d="M71.8 186.4l4.2-3.9l1.1 7.1l-4.1 3.8z" fill="#8587a1"/><path d="M170.4 196.6l3.3 3.8l-3.4 2.2l-3-3.5z" fill="#95959a"/><path d="M172.9 191.7l3.5 4l-2.7 4.7l-3.3-3.8z" fill="#b2b2b8"/><path d="M72.5 202.1l3-3.9l3.3 2.4l-2.9 3.6z" fill="#999aa7"/><path d="M167.3 199.1l3 3.5l-3-0.8l-2.9-3.3z" fill="#868797"/><path d="M159.8 158l6.1 3l-0.5 2.5l-6-3z" fill="#b1b1b7"/><path d="M69.8 197.5l3.2-4.1l2.5 4.8l-3 3.9z" fill="#9b9cb4"/><path d="M160.7 156.4l6.2 3.1l-1 1.5l-6.1-3z" fill="#b5b5bb"/><path d="M75.9 204.2l2.9-3.6l2.9-0.7l-2.7 3.4z" fill="#838388"/><path d="M79.6 162.5l6-3.2l0.4 2.4l-5.8 3.2z" fill="#9798ad"/><path d="M78.6 161l6-3.3l1 1.6l-6 3.2z" fill="#a6a7b8"/><path d="M165.4 163.5l5.2 3.4l-0.3 6.5l-5.2-3.5z" fill="#a0a0a6"/><path d="M170.3 173.4l4.5 3.8l-0.7 7.5l-4.4-3.8z" fill="#9e9ea4"/><path d="M174.7 154.7l6.4 4.2l-8.7 4.2l-5.5-3.6z" fill="#8e8f97"/><path d="M174.1 184.7l3.5 4.1l-1.2 6.9l-3.5-4z" fill="#a2a2a8"/><path d="M75.1 168.5l5.1-3.6l0.3 6.5l-5.1 3.6z" fill="#7e7f98"/><path d="M71.1 178.9l4.3-3.9l0.6 7.5l-4.2 3.9z" fill="#7a7b97"/><path d="M64.4 160.9l6.2-4.4l8 4.5l-5.3 3.8z" fill="#8e8f97"/><path d="M173.7 200.4l2.4 4l-3.5 2l-2.3-3.8z" fill="#949499"/><path d="M68.5 190.6l3.3-4.2l1.2 7l-3.2 4.1z" fill="#80829e"/><path d="M165.9 161l5.3 3.5l-0.6 2.4l-5.2-3.4z" fill="#b1b1b7"/><path d="M170.3 202.6l2.3 3.8l-3.2-1.1l-2.1-3.5z" fill="#8a8b9c"/><path d="M176.4 195.7l2.5 4.2l-2.8 4.5l-2.4-4z" fill="#adadb3"/><path d="M70.3 206.2l2.2-4.1l3.4 2.1l-2 3.8z" fill="#9898a6"/><path d="M166.9 159.5l5.5 3.6l-1.2 1.4l-5.3-3.5z" fill="#b5b5bb"/><path d="M74.5 166.2l5.1-3.7l0.6 2.4l-5.1 3.6z" fill="#9596ad"/><path d="M73.9 208l2-3.8l3.1-0.9l-1.9 3.5z" fill="#89898e"/><path d="M67.5 201.8l2.3-4.3l2.7 4.6l-2.2 4.1z" fill="#9697b0"/><path d="M73.3 164.8l5.3-3.8l1 1.5l-5.1 3.7z" fill="#a4a5b8"/><path d="M122.8 170.6l5 0.1l-0.7 1.2l-4.2-0.1z" fill="#4f4f58"/><path d="M117.9 170.9l4.9-0.3l0.1 1.2l-4.2 0.2z" fill="#4c4c52"/><path d="M170.6 166.9l4.5 3.9l-0.3 6.4l-4.5-3.8z" fill="#9e9ea4"/><path d="M127.8 170.7l4.9 0.5l-1.4 1.1l-4.2-0.4z" fill="#53535e"/><path d="M113 171.6l4.9-0.7l0.8 1.1l-4.1 0.6z" fill="#49494d"/><path d="M174.8 177.2l3.5 4.1l-0.7 7.5l-3.5-4.1z" fill="#9a9a9f"/><path d="M167.3 201.8l2.1 3.5l-2-4l-2-3.3z" fill="#727393"/><path d="M181.1 158.9l5.5 4.7l-9.6 3.5l-4.6-4z" fill="#8e8f97"/><path d="M132.7 171.2l4.7 0.9l-2.1 0.9l-4-0.7z" fill="#585864"/><path d="M70.8 172.5l4.3-4l0.3 6.5l-4.3 3.9z" fill="#7a7b97"/><path d="M177.6 188.8l2.6 4.3l-1.3 6.8l-2.5-4.2z" fill="#9c9ca2"/><path d="M108.4 172.6l4.6-1l1.6 1l-3.9 0.8z" fill="#4a4a4d"/><path d="M67.8 183.2l3.3-4.3l0.7 7.5l-3.3 4.2z" fill="#757693"/><path d="M77.1 206.8l1.9-3.5l1.9-3.9l-1.9 3.4z" fill="#626266"/><path d="M176.1 204.4l1.5 4.2l-3.6 1.6l-1.4-3.8z" fill="#929297"/><path d="M59.1 165.8l5.3-4.9l8.9 3.9l-4.5 4.1z" fill="#8e8f97"/><path d="M137.4 172.1l4.5 1.2l-2.8 0.8l-3.8-1.1z" fill="#5d5d6b"/><path d="M66.1 195l2.4-4.4l1.3 6.9l-2.3 4.3z" fill="#7a7b99"/><path d="M104 174l4.4-1.4l2.3 0.8l-3.8 1.2z" fill="#525255"/><path d="M171.2 164.5l4.6 3.9l-0.7 2.4l-4.5-3.9z" fill="#afafb5"/><path d="M172.6 206.4l1.4 3.8l-3.3-1.3l-1.3-3.6z" fill="#8e8ea0"/><path d="M172.4 163.1l4.6 4l-1.2 1.3l-4.6-3.9z" fill="#b3b3b9"/><path d="M69 210.4l1.3-4.2l3.6 1.8l-1.3 4z" fill="#9696a4"/><path d="M178.9 199.9l1.6 4.4l-2.9 4.3l-1.5-4.2z" fill="#a6a6ac"/><path d="M70.1 170.2l4.4-4l0.6 2.3l-4.3 4z" fill="#9193ac"/><path d="M72.6 212l1.3-4l3.2-1.2l-1.2 3.7z" fill="#8f8f94"/><path d="M141.9 173.3l4.1 1.6l-3.4 0.5l-3.5-1.3z" fill="#626373"/><path d="M68.8 168.9l4.5-4.1l1.2 1.4l-4.4 4z" fill="#a2a3b6"/><path d="M99.9 175.7l4.1-1.7l2.9 0.6l-3.4 1.5z" fill="#5b5b5e"/><path d="M66.1 206.3l1.4-4.5l2.8 4.4l-1.3 4.2z" fill="#9192ac"/><path d="M175.1 170.8l3.6 4.1l-0.4 6.4l-3.5-4.1z" fill="#9a9a9f"/><path d="M169.4 205.3l1.3 3.6l-2-4.1l-1.3-3.5z" fill="#757797"/><path d="M178.3 181.3l2.7 4.4l-0.8 7.4l-2.6-4.3z" fill="#949499"/><path d="M146 174.9l3.8 1.9l-4 0.2l-3.2-1.6z" fill="#68697a"/><path d="M67.4 176.8l3.4-4.3l0.3 6.4l-3.3 4.3z" fill="#757693"/><path d="M75.9 210.5l1.2-3.7l1.9-4l-1 3.5z" fill="#707074"/><path d="M96.2 177.7l3.7-2l3.6 0.4l-3.2 1.7z" fill="#646467"/><path d="M186.6 163.6l4.4 5.1l-10.2 2.7l-3.8-4.3z" fill="#8e8f97"/><path d="M122.9 171.8l4.2 0.1l-1 4l-3 0z" fill="#777780"/><path d="M118.7 172l4.2-0.2l0.2 4.1l-3.1 0.1z" fill="#75757d"/><path d="M180.2 193.1l1.7 4.5l-1.4 6.7l-1.6-4.4z" fill="#94949a"/><path d="M156 181.6l3.1 2.6l-3.2-2.8l-2.8-2.4z" fill="#585a74"/><path d="M127.1 171.9l4.2 0.4l-2.3 3.9l-2.9-0.3z" fill="#787982"/><path d="M114.6 172.6l4.1-0.6l1.3 4l-2.9 0.4z" fill="#74747b"/><path d="M65.4 187.6l2.4-4.4l0.7 7.4l-2.4 4.4z" fill="#6e708e"/><path d="M177.6 208.6l0.6 4.2l-3.7 1.4l-0.5-4z" fill="#8f8f94"/><path d="M174 210.2l0.5 4l-3.3-1.6l-0.5-3.7z" fill="#9192a4"/><path d="M131.3 172.3l4 0.7l-3.4 3.8l-2.9-0.6z" fill="#7a7b85"/><path d="M87.1 185.4l2.9-2.7l3-2.7l-2.7 2.5z" fill="#5a5a5d"/><path d="M175.8 168.4l3.6 4.2l-0.7 2.3l-3.6-4.1z" fill="#ababb1"/><path d="M110.7 173.4l3.9-0.8l2.5 3.8l-2.8 0.7z" fill="#74747a"/><path d="M55 171l4.1-5.2l9.7 3.1l-3.5 4.5z" fill="#8e8f97"/><path d="M64.7 199.6l1.4-4.6l1.4 6.8l-1.4 4.5z" fill="#737493"/><path d="M149.8 176.8l3.3 2.2l-4.5-0.2l-2.8-1.8z" fill="#6e6f82"/><path d="M177 167.1l3.8 4.3l-1.4 1.2l-3.6-4.2z" fill="#b0b0b5"/><path d="M68.6 214.7l0.4-4.3l3.6 1.6l-0.3 3.9z" fill="#9494a2"/><path d="M135.3 173l3.8 1.1l-4.5 3.4l-2.7-0.7z" fill="#7c7d88"/><path d="M72.3 215.9l0.3-3.9l3.3-1.5l-0.3 3.7z" fill="#949499"/><path d="M106.9 174.6l3.8-1.2l3.6 3.7l-2.7 0.8z" fill="#737379"/><path d="M180.5 204.3l0.6 4.5l-2.9 4l-0.6-4.2z" fill="#9e9ea4"/><path d="M93 180l3.2-2.3l4.1 0.1l-2.7 1.9z" fill="#6d6d71"/><path d="M66.7 174.5l3.4-4.3l0.7 2.3l-3.4 4.3z" fill="#8d8ea9"/><path d="M167.4 201.3l1.3 3.5l-1.7-6.4l-1.2-3.4z" fill="#7d7fa1"/><path d="M65.3 173.4l3.5-4.5l1.3 1.3l-3.4 4.3z" fill="#9fa0b4"/><path d="M170.7 208.9l0.5 3.7l-2.1-4.2l-0.4-3.6z" fill="#767798"/><path d="M139.1 174.1l3.5 1.3l-5.4 3.1l-2.6-1z" fill="#7f7f8b"/><path d="M65.7 210.8l0.4-4.5l2.9 4.1l-0.4 4.3z" fill="#8b8ca6"/><path d="M159.1 184.2l2.5 2.9l-3.4-3.1l-2.3-2.6z" fill="#5f617c"/><path d="M103.5 176.1l3.4-1.5l4.7 3.3l-2.5 1z" fill="#747478"/><path d="M78 206.3l1-3.5l1.6-6.4l-1 3.4z" fill="#5a5a5e"/><path d="M178.7 174.9l2.7 4.4l-0.4 6.4l-2.7-4.4z" fill="#949499"/><path d="M75.6 214.2l0.3-3.7l2.1-4.2l-0.3 3.6z" fill="#7c7c81"/><path d="M84.7 188.4l2.4-3l3.2-2.9l-2.1 2.7z" fill="#67676b"/><path d="M153.1 179l2.8 2.4l-4.9-0.5l-2.4-2.1z" fill="#747589"/><path d="M181 185.7l1.6 4.6l-0.7 7.3l-1.7-4.5z" fill="#8c8c91"/><path d="M142.6 175.4l3.2 1.6l-6.3 2.6l-2.3-1.1z" fill="#81828f"/><path d="M65 181.3l2.4-4.5l0.4 6.4l-2.4 4.4z" fill="#6e708e"/><path d="M90.3 182.5l2.7-2.5l4.6-0.3l-2.3 2.1z" fill="#76767a"/><path d="M100.3 177.8l3.2-1.7l5.6 2.8l-2.3 1.3z" fill="#76767b"/><path d="M174.5 214.2l-0.3 4l-3.3-1.8l0.3-3.8z" fill="#9596a7"/><path d="M178.2 212.8l-0.4 4.3l-3.6 1.1l0.3-4z" fill="#8c8c91"/><path d="M181.9 197.6l0.6 4.6l-1.4 6.6l-0.6-4.5z" fill="#8b8b90"/><path d="M191 168.7l3.2 5.4l-10.7 1.9l-2.7-4.6z" fill="#8e8f97"/><path d="M64 192.3l1.4-4.7l0.7 7.4l-1.4 4.6z" fill="#737595"/><path d="M179.4 172.6l2.7 4.5l-0.7 2.2l-2.7-4.4z" fill="#a5a5ab"/><path d="M145.8 177l2.8 1.8l-7.1 2.1l-2-1.3z" fill="#848592"/><path d="M72.8 219.9l-0.5-4l3.3-1.7l0.5 3.8z" fill="#99999e"/><path d="M69.2 218.9l-0.6-4.2l3.7 1.2l0.5 4z" fill="#9292a0"/><path d="M168.7 204.8l0.4 3.6l-1.6-6.6l-0.5-3.4z" fill="#7e80a2"/><path d="M64.3 204.2l0.4-4.6l1.4 6.7l-0.4 4.5z" fill="#727393"/><path d="M161.6 187.1l1.8 3l-3.5-3.3l-1.7-2.8z" fill="#646582"/><path d="M165.8 195l1.2 3.4l-2.4-5.1l-1.2-3.2z" fill="#797b9c"/><path d="M97.6 179.7l2.7-1.9l6.5 2.4l-1.9 1.4z" fill="#7b7b7f"/><path d="M180.8 171.4l2.7 4.6l-1.4 1.1l-2.7-4.5z" fill="#ababb1"/><path d="M155.9 181.4l2.3 2.6l-5.3-0.9l-1.9-2.2z" fill="#7b7c91"/><path d="M52 176.5l3-5.5l10.3 2.4l-2.5 4.6z" fill="#8e8f97"/><path d="M171.2 212.6l-0.3 3.8l-2.1-4.5l0.3-3.5z" fill="#747696"/><path d="M181.1 208.8l-0.4 4.5l-2.9 3.8l0.4-4.3z" fill="#95959b"/><path d="M64.3 179.1l2.4-4.6l0.7 2.3l-2.4 4.5z" fill="#8788a5"/><path d="M83 191.5l1.7-3.1l3.5-3.2l-1.6 2.8z" fill="#747479"/><path d="M77.7 209.9l0.3-3.6l1.6-6.5l-0.3 3.5z" fill="#68686c"/><path d="M88.2 185.2l2.1-2.7l5-0.7l-1.8 2.3z" fill="#7f7f83"/><path d="M79.6 199.8l1-3.4l2.4-4.9l-0.9 3.2z" fill="#66666a"/><path d="M123.1 175.9l3 0l-1.4 6.5l-1.5 0z" fill="#8b8b93"/><path d="M120 176l3.1-0.1l0.1 6.5l-1.5 0.1z" fill="#8b8b93"/><path d="M126.1 175.9l2.9 0.3l-2.8 6.4l-1.5-0.2z" fill="#8b8b94"/><path d="M117.1 176.4l2.9-0.4l1.7 6.5l-1.5 0.2z" fill="#8a8b93"/><path d="M62.8 178l2.5-4.6l1.4 1.1l-2.4 4.6z" fill="#9b9cb1"/><path d="M76.1 218l-0.5-3.8l2.1-4.3l0.4 3.6z" fill="#87878c"/><path d="M129 176.2l2.9 0.6l-4.2 6.1l-1.5-0.3z" fill="#8b8c94"/><path d="M148.6 178.8l2.4 2.1l-7.8 1.5l-1.7-1.5z" fill="#878795"/><path d="M114.3 177.1l2.8-0.7l3.1 6.3l-1.4 0.3z" fill="#8a8b93"/><path d="M66.3 215.3l-0.6-4.5l2.9 3.9l0.6 4.2z" fill="#84869f"/><path d="M95.3 181.8l2.3-2.1l7.3 1.9l-1.7 1.5z" fill="#7f7f84"/><path d="M181.4 179.3l1.6 4.6l-0.4 6.4l-1.6-4.6z" fill="#8c8c91"/><path d="M131.9 176.8l2.7 0.7l-5.6 5.7l-1.3-0.3z" fill="#8c8c95"/><path d="M111.6 177.9l2.7-0.8l4.5 5.9l-1.3 0.4z" fill="#8a8b92"/><path d="M134.6 177.5l2.6 1l-6.9 5.2l-1.3-0.5z" fill="#8c8c95"/><path d="M109.1 178.9l2.5-1l5.9 5.5l-1.3 0.6z" fill="#8a8b92"/><path d="M158.2 184l1.7 2.8l-5.6-1.3l-1.4-2.4z" fill="#818298"/><path d="M174.2 218.2l-1.3 3.9l-3.2-2.1l1.2-3.6z" fill="#9899aa"/><path d="M182.6 190.3l0.6 4.6l-0.7 7.3l-0.6-4.6z" fill="#828287"/><path d="M63.6 185.9l1.4-4.6l0.4 6.3l-1.4 4.7z" fill="#737595"/><path d="M163.4 190.1l1.2 3.2l-3.7-3.6l-1-2.9z" fill="#6a6b88"/><path d="M177.8 217.1l-1.3 4.2l-3.6 0.8l1.3-3.9z" fill="#89898e"/><path d="M151 180.9l1.9 2.2l-8.3 0.9l-1.4-1.6z" fill="#8a8a98"/><path d="M86.6 188l1.6-2.8l5.3-1.1l-1.3 2.4z" fill="#87878c"/><path d="M137.2 178.5l2.3 1.1l-8.1 4.7l-1.1-0.6z" fill="#8d8d96"/><path d="M167 198.4l0.5 3.4l-2.5-5.3l-0.4-3.2z" fill="#7a7c9d"/><path d="M169.1 208.4l-0.3 3.5l-1.6-6.7l0.3-3.4z" fill="#7c7ea0"/><path d="M182.5 202.2l-0.4 4.6l-1.4 6.5l0.4-4.5z" fill="#808085"/><path d="M106.8 180.2l2.3-1.3l7.1 5.1l-1.1 0.6z" fill="#8b8b92"/><path d="M74.2 223.8l-1.4-3.9l3.3-1.9l1.3 3.6z" fill="#9e9ea3"/><path d="M93.5 184.1l1.8-2.3l7.9 1.3l-1.2 1.6z" fill="#838388"/><path d="M82.1 194.7l0.9-3.2l3.6-3.5l-0.9 2.9z" fill="#808085"/><path d="M63.6 196.9l0.4-4.6l0.7 7.3l-0.4 4.6z" fill="#77799a"/><path d="M70.7 223.1l-1.5-4.2l3.6 1l1.4 3.9z" fill="#90909e"/><path d="M170.9 216.4l-1.2 3.6l-1.9-4.5l1-3.6z" fill="#707291"/><path d="M182.1 177.1l1.6 4.6l-0.7 2.2l-1.6-4.6z" fill="#9d9da3"/><path d="M79.3 203.3l0.3-3.5l2.5-5.1l-0.3 3.2z" fill="#747478"/><path d="M194.2 174.1l2 5.6l-11 1l-1.7-4.7z" fill="#8e8f97"/><path d="M78.1 213.5l-0.4-3.6l1.6-6.6l0.5 3.4z" fill="#747478"/><path d="M139.5 179.6l2 1.3l-9.1 4.1l-1-0.7z" fill="#8d8d96"/><path d="M104.9 181.6l1.9-1.4l8.3 4.4l-1 0.7z" fill="#8b8b92"/><path d="M64.9 208.8l-0.6-4.6l1.4 6.6l0.6 4.5z" fill="#737595"/><path d="M183.5 176l1.7 4.7l-1.5 1l-1.6-4.6z" fill="#a5a5ab"/><path d="M180.7 213.3l-1.4 4.5l-2.8 3.5l1.3-4.2z" fill="#8c8c91"/><path d="M77.4 221.6l-1.3-3.6l2-4.5l1.3 3.4z" fill="#919196"/><path d="M62.8 183.8l1.5-4.7l0.7 2.2l-1.4 4.6z" fill="#80829f"/><path d="M152.9 183.1l1.4 2.4l-8.7 0.2l-1-1.7z" fill="#8d8d9c"/><path d="M141.5 180.9l1.7 1.5l-9.9 3.3l-0.9-0.7z" fill="#8d8e97"/><path d="M159.9 186.8l1 2.9l-5.7-1.8l-0.9-2.4z" fill="#87889e"/><path d="M50.3 182.2l1.7-5.7l10.8 1.5l-1.4 4.8z" fill="#8e8f97"/><path d="M103.2 183.1l1.7-1.5l9.2 3.7l-0.8 0.7z" fill="#8b8b93"/><path d="M92.2 186.5l1.3-2.4l8.5 0.6l-1 1.7z" fill="#87878c"/><path d="M67.9 219.7l-1.6-4.4l2.9 3.6l1.5 4.2z" fill="#7d7e98"/><path d="M61.4 182.8l1.4-4.8l1.5 1.1l-1.5 4.7z" fill="#9798ae"/><path d="M85.7 190.9l0.9-2.9l5.6-1.5l-0.7 2.5z" fill="#909095"/><path d="M164.6 193.3l0.4 3.2l-3.7-3.9l-0.4-2.9z" fill="#727491"/><path d="M172.9 222.1l-2 3.9l-3.1-2.4l1.9-3.6z" fill="#9b9cad"/><path d="M183 183.9l0.6 4.7l-0.4 6.3l-0.6-4.6z" fill="#828287"/><path d="M143.2 182.4l1.4 1.6l-10.6 2.5l-0.7-0.8z" fill="#8e8e98"/><path d="M167.5 201.8l-0.3 3.4l-2.5-5.4l0.3-3.3z" fill="#797a9b"/><path d="M123.2 182.4l1.5 0l-1.3 6.9z" fill="#8e8f97"/><path d="M121.7 182.5l1.5-0.1l0.2 6.9z" fill="#8e8f97"/><path d="M102 184.7l1.2-1.6l10.1 2.9l-0.6 0.8z" fill="#8b8b93"/><path d="M124.7 182.4l1.5 0.2l-2.8 6.7z" fill="#8e8f97"/><path d="M81.8 197.9l0.3-3.2l3.6-3.8l-0.2 3z" fill="#8b8b91"/><path d="M120.2 182.7l1.5-0.2l1.7 6.8z" fill="#8e8f97"/><path d="M126.2 182.6l1.5 0.3l-4.3 6.4z" fill="#8e8f97"/><path d="M168.8 211.9l-1 3.6l-1.6-6.9l1-3.4z" fill="#787a9b"/><path d="M118.8 183l1.4-0.3l3.2 6.6z" fill="#8e8f97"/><path d="M176.5 221.3l-2.2 4.1l-3.4 0.6l2-3.9z" fill="#86868b"/><path d="M127.7 182.9l1.3 0.3l-5.6 6.1z" fill="#8e8f97"/><path d="M117.5 183.4l1.3-0.4l4.6 6.3z" fill="#8e8f97"/><path d="M154.3 185.5l0.9 2.4l-9-0.4l-0.6-1.8z" fill="#8f909f"/><path d="M76.5 227.6l-2.3-3.8l3.2-2.2l2.1 3.5z" fill="#a1a1a7"/><path d="M183.2 194.9l-0.4 4.7l-0.7 7.2l0.4-4.6z" fill="#76767b"/><path d="M129 183.2l1.3 0.5l-6.9 5.6z" fill="#8e8f97"/><path d="M79.8 206.7l-0.5-3.4l2.5-5.4l0.4 3.3z" fill="#7f7f84"/><path d="M116.2 184l1.3-0.6l5.9 5.9z" fill="#8e8f97"/><path d="M63.2 190.7l0.4-4.8l0.4 6.4l-0.4 4.6z" fill="#77799a"/><path d="M169.7 220l-1.9 3.6l-1.9-4.7l1.9-3.4z" fill="#757795"/><path d="M79.4 216.9l-1.3-3.4l1.7-6.8l1.2 3.4z" fill="#7e7e83"/><path d="M144.6 184l1 1.7l-11.1 1.6l-0.5-0.8z" fill="#8e8f98"/><path d="M91.5 189l0.7-2.5l8.8-0.1l-0.5 1.8z" fill="#8b8b90"/><path d="M130.3 183.7l1.1 0.6l-8 5z" fill="#8e8f97"/><path d="M115.1 184.6l1.1-0.6l7.2 5.3z" fill="#8e8f97"/><path d="M73.1 227.1l-2.4-4l3.5 0.7l2.3 3.8z" fill="#8d8e9b"/><path d="M182.1 206.8l-1.4 4.6l-1.4 6.4l1.4-4.5z" fill="#747478"/><path d="M101 186.4l1-1.7l10.7 2.1l-0.5 0.9z" fill="#8c8c93"/><path d="M160.9 189.7l0.4 2.9l-5.8-2.2l-0.3-2.5z" fill="#8c8da4"/><path d="M131.4 184.3l1 0.7l-9 4.3z" fill="#8e8f97"/><path d="M114.1 185.3l1-0.7l8.3 4.7z" fill="#8e8f97"/><path d="M79.5 225.1l-2.1-3.5l2-4.7l2 3.4z" fill="#99999e"/><path d="M64.2 201.6l-0.6-4.7l0.7 7.3l0.6 4.6z" fill="#797b9c"/><path d="M85.5 193.9l0.2-3l5.8-1.9l-0.2 2.5z" fill="#98989d"/><path d="M132.4 185l0.9 0.7l-9.9 3.6z" fill="#8e8f97"/><path d="M183.7 181.7l0.7 4.8l-0.8 2.1l-0.6-4.7z" fill="#94949a"/><path d="M113.3 186l0.8-0.7l9.3 4z" fill="#8e8f97"/><path d="M145.6 185.7l0.6 1.8l-11.4 0.7l-0.3-0.9z" fill="#8f8f99"/><path d="M66.6 213.3l-1.7-4.5l1.4 6.5l1.6 4.4z" fill="#727494"/><path d="M179.3 217.8l-2.3 4.3l-2.7 3.3l2.2-4.1z" fill="#828286"/><path d="M165 196.5l-0.3 3.3l-3.6-4.2l0.2-3z" fill="#7b7c9a"/><path d="M133.3 185.7l0.7 0.8l-10.6 2.8z" fill="#8e8f97"/><path d="M112.7 186.8l0.6-0.8l10.1 3.3z" fill="#8e8f97"/><path d="M100.5 188.2l0.5-1.8l11.2 1.3l-0.3 0.9z" fill="#8c8c94"/><path d="M155.2 187.9l0.3 2.5l-9-1.2l-0.3-1.7z" fill="#9293a1"/><path d="M196.2 179.7l0.8 5.7l-11.1 0.2l-0.7-4.9z" fill="#8e8f97"/><path d="M185.2 180.7l0.7 4.9l-1.5 0.9l-0.7-4.8z" fill="#9f9fa4"/><path d="M134 186.5l0.5 0.8l-11.1 2z" fill="#8e8f97"/><path d="M62.4 188.5l0.4-4.7l0.8 2.1l-0.4 4.8z" fill="#797a98"/><path d="M112.2 187.7l0.5-0.9l10.7 2.5z" fill="#8e8f97"/><path d="M82.2 201.2l-0.4-3.3l3.7-4l0.4 3z" fill="#96969b"/><path d="M91.3 191.5l0.2-2.5l9-0.8l-0.2 1.8z" fill="#8f8f94"/><path d="M167.2 205.2l-1 3.4l-2.4-5.6l0.9-3.2z" fill="#757696"/><path d="M170.9 226l-2.9 3.6l-2.9-2.6l2.7-3.4z" fill="#9e9faf"/><path d="M70.4 223.9l-2.5-4.2l2.8 3.4l2.4 4z" fill="#767790"/><path d="M134.5 187.3l0.3 0.9l-11.4 1.1z" fill="#8e8f97"/><path d="M167.8 215.5l-1.9 3.4l-1.5-7l1.8-3.3z" fill="#717392"/><path d="M146.2 187.5l0.3 1.7l-11.6-0.1l-0.1-0.9z" fill="#8f9099"/><path d="M111.9 188.6l0.3-0.9l11.2 1.6z" fill="#8e8f97"/><path d="M60.9 187.7l0.5-4.9l1.4 1l-0.4 4.7z" fill="#9293a9"/><path d="M100.3 190l0.2-1.8l11.4 0.4l0 0.9z" fill="#8d8d94"/><path d="M49.8 187.9l0.5-5.7l11.1 0.6l-0.5 4.9z" fill="#8e8f97"/><path d="M81 210.1l-1.2-3.4l2.4-5.5l1.2 3.1z" fill="#89898e"/><path d="M161.3 192.6l-0.2 3l-5.8-2.7l0.2-2.5z" fill="#9293a9"/><path d="M79.5 231.1l-3-3.5l3-2.5l2.9 3.3z" fill="#a4a4aa"/><path d="M174.3 225.4l-3 3.9l-3.3 0.3l2.9-3.6z" fill="#838387"/><path d="M134.8 188.2l0.1 0.9l-11.5 0.2z" fill="#8e8f97"/><path d="M167.8 223.6l-2.7 3.4l-1.8-4.9l2.6-3.2z" fill="#7c7d9a"/><path d="M111.9 189.5l0-0.9l11.5 0.7z" fill="#8e8f97"/><path d="M81.4 220.3l-2-3.4l1.6-6.8l1.9 3.2z" fill="#86868b"/><path d="M183.6 188.6l-0.4 4.7l-0.4 6.3l0.4-4.7z" fill="#76767b"/><path d="M85.9 196.9l-0.4-3l5.8-2.4l0.3 2.5z" fill="#9f9fa5"/><path d="M134.9 189.1l0 0.9l-11.5-0.7z" fill="#8e8f97"/><path d="M155.5 190.4l-0.2 2.5l-9-1.9l0.2-1.8z" fill="#9495a4"/><path d="M112 190.4l-0.1-0.9l11.5-0.2z" fill="#8e8f97"/><path d="M146.5 189.2l-0.2 1.8l-11.4-1l0-0.9z" fill="#90909a"/><path d="M76.4 230.9l-3.3-3.8l3.4 0.5l3 3.5z" fill="#8b8b99"/><path d="M82.4 228.4l-2.9-3.3l1.9-4.8l2.7 3.2z" fill="#9f9fa5"/><path d="M182.8 199.6l-1.4 4.6l-0.7 7.2l1.4-4.6z" fill="#6a6a6e"/><path d="M100.6 191.8l-0.3-1.8l11.6-0.5l0.1 0.9z" fill="#8d8d94"/><path d="M91.6 194l-0.3-2.5l9-1.5l0.3 1.8z" fill="#939398"/><path d="M134.9 190l-0.3 0.9l-11.2-1.6z" fill="#8e8f97"/><path d="M63.8 195.3l-0.6-4.6l0.4 6.2l0.6 4.7z" fill="#797b9c"/><path d="M112.3 191.3l-0.3-0.9l11.4-1.1z" fill="#8e8f97"/><path d="M164.7 199.8l-0.9 3.2l-3.6-4.5l0.9-2.9z" fill="#8284a1"/><path d="M180.7 211.4l-2.4 4.4l-1.3 6.3l2.3-4.3z" fill="#66666a"/><path d="M134.6 190.9l-0.5 0.9l-10.7-2.5z" fill="#8e8f97"/><path d="M112.8 192.1l-0.5-0.8l11.1-2z" fill="#8e8f97"/><path d="M83.4 204.3l-1.2-3.1l3.7-4.3l1 2.8z" fill="#9e9ea4"/><path d="M65.8 206.1l-1.6-4.5l0.7 7.2l1.7 4.5z" fill="#787a9b"/><path d="M146.3 191l-0.5 1.8l-11.2-1.9l0.3-0.9z" fill="#90919a"/><path d="M177 222.1l-3.2 4.1l-2.5 3.1l3-3.9z" fill="#77777c"/><path d="M134.1 191.8l-0.6 0.8l-10.1-3.3z" fill="#8e8f97"/><path d="M166.2 208.6l-1.8 3.3l-2.3-5.8l1.7-3.1z" fill="#6e708e"/><path d="M101.2 193.6l-0.6-1.8l11.4-1.4l0.3 0.9z" fill="#8e8e95"/><path d="M113.5 192.9l-0.7-0.8l10.6-2.8z" fill="#8e8f97"/><path d="M69.2 217.6l-2.6-4.3l1.3 6.4l2.5 4.2z" fill="#6f7190"/><path d="M168 229.6l-3.6 3.4l-2.6-2.8l3.3-3.2z" fill="#a0a1b1"/><path d="M161.1 195.6l-0.9 2.9l-5.6-3.1l0.7-2.5z" fill="#9798ae"/><path d="M184.4 186.5l-0.4 4.8l-0.8 2l0.4-4.7z" fill="#8a8a8f"/><path d="M165.9 218.9l-2.6 3.2l-1.4-7.1l2.5-3.1z" fill="#686a87"/><path d="M155.3 192.9l-0.7 2.5l-8.8-2.6l0.5-1.8z" fill="#9797a6"/><path d="M133.5 192.6l-0.8 0.7l-9.3-4z" fill="#8e8f97"/><path d="M114.4 193.7l-0.9-0.8l9.9-3.6z" fill="#8e8f97"/><path d="M82.9 213.3l-1.9-3.2l2.4-5.8l1.8 3.1z" fill="#919196"/><path d="M73.9 227.9l-3.5-4l2.7 3.2l3.3 3.8z" fill="#6e6f87"/><path d="M86.9 199.7l-1-2.8l5.7-2.9l0.9 2.4z" fill="#a6a6ab"/><path d="M83.3 234.3l-3.8-3.2l2.9-2.7l3.5 3z" fill="#a7a7ac"/><path d="M92.5 196.4l-0.9-2.4l9-2.2l0.6 1.8z" fill="#96969b"/><path d="M165.1 227l-3.3 3.2l-1.7-5l3.2-3.1z" fill="#81829d"/><path d="M132.7 193.3l-1 0.7l-8.3-4.7z" fill="#8e8f97"/><path d="M84.1 223.5l-2.7-3.2l1.5-7l2.6 3z" fill="#8d8d92"/><path d="M115.4 194.3l-1-0.6l9-4.4z" fill="#8e8f97"/><path d="M145.8 192.8l-1 1.7l-10.7-2.7l0.5-0.9z" fill="#91919a"/><path d="M185.9 185.6l-0.5 4.9l-1.4 0.8l0.4-4.8z" fill="#98989d"/><path d="M171.3 229.3l-3.9 3.7l-3 0l3.6-3.4z" fill="#7f7f84"/><path d="M63.1 193.3l-0.7-4.8l0.8 2.2l0.6 4.6z" fill="#70728f"/><path d="M102.2 195.3l-1-1.7l11.1-2.3l0.5 0.8z" fill="#8e8e95"/><path d="M131.7 194l-1.1 0.7l-7.2-5.4z" fill="#8e8f97"/><path d="M116.5 194.9l-1.1-0.6l8-5z" fill="#8e8f97"/><path d="M197 185.4l-0.5 5.8l-11.1-0.7l0.5-4.9z" fill="#8e8f97"/><path d="M85.9 231.4l-3.5-3l1.7-4.9l3.4 2.9z" fill="#a3a3a9"/><path d="M130.6 194.7l-1.3 0.5l-5.9-5.9z" fill="#8e8f97"/><path d="M117.8 195.4l-1.3-0.5l6.9-5.6z" fill="#8e8f97"/><path d="M163.8 203l-1.7 3.1l-3.5-4.8l1.6-2.8z" fill="#898aa6"/><path d="M80.4 234.4l-4-3.5l3.1 0.2l3.8 3.2z" fill="#898996"/><path d="M129.3 195.2l-1.3 0.4l-4.6-6.3z" fill="#8e8f97"/><path d="M119.1 195.7l-1.3-0.3l5.6-6.1z" fill="#8e8f97"/><path d="M61.6 192.6l-0.7-4.9l1.5 0.8l0.7 4.8z" fill="#8d8ea4"/><path d="M128 195.6l-1.4 0.3l-3.2-6.6z" fill="#8e8f97"/><path d="M144.8 194.5l-1.2 1.7l-10.1-3.6l0.6-0.8z" fill="#91919b"/><path d="M120.6 196l-1.5-0.3l4.3-6.4z" fill="#8e8f97"/><path d="M126.6 195.9l-1.5 0.2l-1.7-6.8z" fill="#8e8f97"/><path d="M154.6 195.4l-1.3 2.4l-8.5-3.3l1-1.7z" fill="#999aa8"/><path d="M122.1 196.2l-1.5-0.2l2.8-6.7z" fill="#8e8f97"/><path d="M183.2 193.3l-1.4 4.7l-0.4 6.2l1.4-4.6z" fill="#6a6a6e"/><path d="M125.1 196.1l-1.5 0.1l-0.2-6.9z" fill="#8e8f97"/><path d="M123.6 196.2l-1.5 0l1.3-6.9z" fill="#8e8f97"/><path d="M103.6 196.9l-1.4-1.6l10.6-3.2l0.7 0.8z" fill="#8f8f96"/><path d="M85.2 207.4l-1.8-3.1l3.5-4.6l1.7 2.8z" fill="#a6a6ac"/><path d="M50.6 193.6l-0.8-5.7l11.1-0.2l0.7 4.9z" fill="#8e8f97"/><path d="M160.2 198.5l-1.6 2.8l-5.3-3.5l1.3-2.4z" fill="#9b9cb2"/><path d="M93.9 198.8l-1.4-2.4l8.7-2.8l1 1.7z" fill="#98989d"/><path d="M164.4 211.9l-2.5 3.1l-2.2-5.9l2.4-3z" fill="#717390"/><path d="M181.4 204.2l-2.4 4.5l-0.7 7.1l2.4-4.4z" fill="#5b5b5f"/><path d="M164.4 233l-4.3 3.1l-2.4-3.1l4.1-2.8z" fill="#a2a3b2"/><path d="M163.3 222.1l-3.2 3.1l-1.3-7.2l3.1-3z" fill="#696a86"/><path d="M178.3 215.8l-3.3 4.2l-1.2 6.2l3.2-4.1z" fill="#58585b"/><path d="M88.6 202.5l-1.7-2.8l5.6-3.3l1.4 2.4z" fill="#acacb1"/><path d="M143.6 196.2l-1.7 1.5l-9.2-4.4l0.8-0.7z" fill="#91929b"/><path d="M65.4 199.9l-1.6-4.6l0.4 6.3l1.6 4.5z" fill="#787a9b"/><path d="M173.8 226.2l-4.1 3.8l-2.3 3l3.9-3.7z" fill="#6c6c70"/><path d="M105.3 198.3l-1.7-1.4l9.9-4l0.9 0.8z" fill="#8f8f97"/><path d="M85.5 216.3l-2.6-3l2.3-5.9l2.5 2.9z" fill="#97979d"/><path d="M161.8 230.2l-4.1 2.8l-1.5-5.1l3.9-2.7z" fill="#85869e"/><path d="M87.8 237.3l-4.5-3l2.6-2.9l4.2 2.8z" fill="#a8a8ad"/><path d="M87.5 226.4l-3.4-2.9l1.4-7.2l3.3 2.8z" fill="#919196"/><path d="M90.1 234.2l-4.2-2.8l1.6-5l4 2.6z" fill="#a5a5ab"/><path d="M167.4 233l-4.7 3.3l-2.6-0.2l4.3-3.1z" fill="#7c7c80"/><path d="M153.3 197.8l-1.8 2.3l-7.9-3.9l1.2-1.7z" fill="#9b9caa"/><path d="M78.2 231.5l-4.3-3.6l2.5 3l4 3.5z" fill="#66677e"/><path d="M141.9 197.7l-1.9 1.4l-8.3-5.1l1-0.7z" fill="#92929b"/><path d="M107.3 199.7l-2-1.4l9.1-4.6l1 0.6z" fill="#909097"/><path d="M162.1 206.1l-2.4 3l-3.2-5.1l2.1-2.7z" fill="#8e90ab"/><path d="M184 191.3l-1.5 4.7l-0.7 2l1.4-4.7z" fill="#7f7f83"/><path d="M95.8 201l-1.9-2.2l8.3-3.5l1.4 1.6z" fill="#9a9a9f"/><path d="M85.2 237.6l-4.8-3.2l2.9-0.1l4.5 3z" fill="#868793"/><path d="M158.6 201.3l-2.1 2.7l-5-3.9l1.8-2.3z" fill="#9fa0b4"/><path d="M87.7 210.3l-2.5-2.9l3.4-4.9l2.3 2.6z" fill="#acacb2"/><path d="M140 199.1l-2.3 1.2l-7.1-5.6l1.1-0.7z" fill="#92929b"/><path d="M109.6 200.8l-2.3-1.1l8.1-5.4l1.1 0.6z" fill="#909098"/><path d="M185.4 190.5l-1.4 4.8l-1.5 0.7l1.5-4.7z" fill="#909095"/><path d="M90.9 205.1l-2.3-2.6l5.3-3.7l1.9 2.2z" fill="#b0b0b6"/><path d="M64.7 197.9l-1.6-4.6l0.7 2l1.6 4.6z" fill="#686a87"/><path d="M161.9 215l-3.1 3l-2-6.2l2.9-2.7z" fill="#777893"/><path d="M160.1 236.1l-5 2.7l-2-3.2l4.6-2.6z" fill="#a4a4b3"/><path d="M160.1 225.2l-3.9 2.7l-1.2-7.3l3.8-2.6z" fill="#6d6e87"/><path d="M151.5 200.1l-2.3 2.1l-7.3-4.5l1.7-1.5z" fill="#9d9dab"/><path d="M137.7 200.3l-2.5 1.1l-5.9-6.2l1.3-0.5z" fill="#92929b"/><path d="M157.7 233l-4.6 2.6l-1.3-5.3l4.4-2.4z" fill="#87889e"/><path d="M112.2 201.8l-2.6-1l6.9-5.9l1.3 0.5z" fill="#909198"/><path d="M92.9 239.8l-5.1-2.5l2.3-3.1l4.8 2.4z" fill="#a8a8ae"/><path d="M88.8 219.1l-3.3-2.8l2.2-6l3.1 2.6z" fill="#9b9ba1"/><path d="M91.5 229l-4-2.6l1.3-7.3l3.9 2.6z" fill="#939398"/><path d="M196.5 191.2l-1.7 5.6l-10.8-1.5l1.4-4.8z" fill="#8e8f97"/><path d="M98.2 203.1l-2.4-2.1l7.8-4.1l1.7 1.4z" fill="#9b9ba1"/><path d="M63.3 197.3l-1.7-4.7l1.5 0.7l1.6 4.6z" fill="#88899e"/><path d="M94.9 236.6l-4.8-2.4l1.4-5.2l4.6 2.3z" fill="#a5a5ab"/><path d="M181.8 198l-2.4 4.5l-0.4 6.2l2.4-4.5z" fill="#5b5b5f"/><path d="M135.2 201.4l-2.7 0.8l-4.5-6.6l1.3-0.4z" fill="#92929b"/><path d="M114.9 202.5l-2.7-0.7l5.6-6.4l1.3 0.3z" fill="#919199"/><path d="M169.7 230l-4.9 3.5l-2.1 2.8l4.7-3.3z" fill="#616165"/><path d="M162.7 236.3l-5.3 2.9l-2.3-0.4l5-2.7z" fill="#7a7a7e"/><path d="M159.7 209.1l-2.9 2.7l-3-5.3l2.7-2.5z" fill="#9394ae"/><path d="M132.5 202.2l-2.8 0.6l-3.1-6.9l1.4-0.3z" fill="#92929b"/><path d="M117.8 203l-2.9-0.5l4.2-6.8l1.5 0.3z" fill="#919199"/><path d="M156.5 204l-2.7 2.5l-4.6-4.3l2.3-2.1z" fill="#a2a3b7"/><path d="M52.6 199.2l-2-5.6l11-1l1.7 4.7z" fill="#8e8f97"/><path d="M129.7 202.8l-2.9 0.4l-1.7-7.1l1.5-0.2z" fill="#92929b"/><path d="M83.2 234.8l-5-3.3l2.2 2.9l4.8 3.2z" fill="#5e5f74"/><path d="M120.7 203.3l-2.9-0.3l2.8-7l1.5 0.2z" fill="#92929a"/><path d="M90.7 240.3l-5.5-2.7l2.6-0.3l5.1 2.5z" fill="#848590"/><path d="M149.2 202.2l-2.7 1.9l-6.5-5l1.9-1.4z" fill="#9e9fac"/><path d="M90.8 212.9l-3.1-2.6l3.2-5.2l2.8 2.5z" fill="#b0b0b6"/><path d="M126.8 203.2l-3.1 0.2l-0.1-7.2l1.5-0.1z" fill="#92929b"/><path d="M123.7 203.4l-3-0.1l1.4-7.1l1.5 0z" fill="#92929a"/><path d="M93.7 207.6l-2.8-2.5l4.9-4.1l2.4 2.1z" fill="#b4b4ba"/><path d="M155.1 238.8l-5.5 2.3l-1.7-3.4l5.2-2.1z" fill="#a5a5b3"/><path d="M101 204.9l-2.8-1.8l7.1-4.8l2 1.4z" fill="#9c9ca2"/><path d="M158.8 218l-3.8 2.6l-1.7-6.3l3.5-2.5z" fill="#7b7c95"/><path d="M156.2 227.9l-4.4 2.4l-1-7.3l4.2-2.4z" fill="#6f7187"/><path d="M153.1 235.6l-5.2 2.1l-1-5.3l4.9-2.1z" fill="#88899c"/><path d="M98.5 241.9l-5.6-2.1l2-3.2l5.2 2z" fill="#a7a7ad"/><path d="M100.1 238.6l-5.2-2l1.2-5.3l5 1.9z" fill="#a2a2a8"/><path d="M96.1 231.3l-4.6-2.3l1.2-7.3l4.4 2.2z" fill="#929297"/><path d="M92.7 221.7l-3.9-2.6l2-6.2l3.6 2.4z" fill="#9d9da3"/><path d="M182.5 196l-2.4 4.5l-0.7 2l2.4-4.5z" fill="#727277"/><path d="M146.5 204.1l-3.2 1.8l-5.6-5.6l2.3-1.2z" fill="#9fa0ac"/><path d="M153.8 206.5l-3.2 2.3l-4.1-4.7l2.7-1.9z" fill="#a4a5b8"/><path d="M104.2 206.5l-3.2-1.6l6.3-5.2l2.3 1.1z" fill="#9c9ca2"/><path d="M157.4 239.2l-5.9 2.4l-1.9-0.5l5.5-2.3z" fill="#79797e"/><path d="M156.8 211.8l-3.5 2.5l-2.7-5.5l3.2-2.3z" fill="#9697af"/><path d="M149.6 241.1l-5.9 1.8l-1.4-3.4l5.6-1.8z" fill="#a6a6b2"/><path d="M164.8 233.5l-5.6 3l-1.8 2.7l5.3-2.9z" fill="#565659"/><path d="M97 209.7l-3.3-2.1l4.5-4.5l2.8 1.8z" fill="#b6b6bc"/><path d="M184 195.3l-2.5 4.7l-1.4 0.5l2.4-4.5z" fill="#88888d"/><path d="M67.4 202.4l-2.7-4.5l0.7 2l2.7 4.4z" fill="#666784"/><path d="M96.7 242.6l-6-2.3l2.2-0.5l5.6 2.1z" fill="#82828e"/><path d="M94.4 215.3l-3.6-2.4l2.9-5.3l3.3 2.1z" fill="#b2b2b8"/><path d="M147.9 237.7l-5.6 1.8l-0.8-5.4l5.4-1.7z" fill="#878898"/><path d="M104.6 243.6l-6.1-1.7l1.6-3.3l5.7 1.5z" fill="#a6a6ab"/><path d="M151.8 230.3l-4.9 2.1l-0.9-7.4l4.8-2z" fill="#707184"/><path d="M105.8 240.1l-5.7-1.5l1-5.4l5.4 1.5z" fill="#9e9ea3"/><path d="M143.3 205.9l-3.4 1.4l-4.7-5.9l2.5-1.1z" fill="#a0a1ac"/><path d="M89 237.7l-5.8-2.9l2 2.8l5.5 2.7z" fill="#57576b"/><path d="M155 220.6l-4.2 2.4l-1.6-6.5l4.1-2.2z" fill="#7d7e94"/><path d="M107.7 207.9l-3.5-1.4l5.4-5.7l2.6 1z" fill="#9c9ca1"/><path d="M101.1 233.2l-5-1.9l1-7.4l4.8 1.8z" fill="#8f8f95"/><path d="M97.1 223.9l-4.4-2.2l1.7-6.4l4.2 2.1z" fill="#9d9da3"/><path d="M66 201.9l-2.7-4.6l1.4 0.6l2.7 4.5z" fill="#828398"/><path d="M143.7 242.9l-6.3 1.4l-0.9-3.5l5.8-1.3z" fill="#a6a6b1"/><path d="M194.8 196.8l-3 5.5l-10.3-2.3l2.5-4.7z" fill="#8e8f97"/><path d="M150.6 208.8l-3.7 2l-3.6-4.9l3.2-1.8z" fill="#a6a7b8"/><path d="M142.3 239.5l-5.8 1.3l-0.6-5.5l5.6-1.2z" fill="#858692"/><path d="M139.9 207.3l-3.8 1.2l-3.6-6.3l2.7-0.8z" fill="#a1a1ac"/><path d="M151.5 241.6l-6.4 2l-1.4-0.7l5.9-1.8z" fill="#79797f"/><path d="M110.9 244.8l-6.3-1.2l1.2-3.5l5.9 1.1z" fill="#a3a3a8"/><path d="M153.3 214.3l-4.1 2.2l-2.3-5.7l3.7-2z" fill="#9899af"/><path d="M111.5 208.9l-3.8-1l4.5-6.1l2.7 0.7z" fill="#9b9ba0"/><path d="M111.7 241.2l-5.9-1.1l0.7-5.4l5.7 1z" fill="#97979c"/><path d="M100.8 211.6l-3.8-1.9l4-4.8l3.2 1.6z" fill="#b6b6bc"/><path d="M103.2 244.4l-6.5-1.8l1.8-0.7l6.1 1.7z" fill="#80808b"/><path d="M146.9 232.4l-5.4 1.7l-0.6-7.5l5.1-1.6z" fill="#707080"/><path d="M98.6 217.4l-4.2-2.1l2.6-5.6l3.8 1.9z" fill="#b2b2b8"/><path d="M136.1 208.5l-3.9 0.9l-2.5-6.6l2.8-0.6z" fill="#a1a1ac"/><path d="M137.4 244.3l-6.6 0.9l-0.5-3.6l6.2-0.8z" fill="#a6a6b0"/><path d="M106.5 234.7l-5.4-1.5l0.8-7.5l5.2 1.4z" fill="#8b8b90"/><path d="M136.5 240.8l-6.2 0.8l-0.3-5.5l5.9-0.8z" fill="#82828b"/><path d="M55.8 204.6l-3.2-5.4l10.7-1.9l2.7 4.6z" fill="#8e8f97"/><path d="M159.2 236.5l-6.2 2.6l-1.5 2.5l5.9-2.4z" fill="#4b4b4e"/><path d="M115.5 209.6l-4-0.7l3.4-6.4l2.9 0.5z" fill="#9d9da3"/><path d="M117.5 245.4l-6.6-0.6l0.8-3.6l6.2 0.6z" fill="#a2a2a9"/><path d="M150.8 223l-4.8 2l-1.3-6.6l4.5-1.9z" fill="#7e7f92"/><path d="M117.9 241.8l-6.2-0.6l0.5-5.5l5.9 0.6z" fill="#8e8e93"/><path d="M130.8 245.2l-6.6 0.4l-0.1-3.6l6.2-0.4z" fill="#a5a5ae"/><path d="M132.2 209.4l-4.1 0.5l-1.3-6.7l2.9-0.4z" fill="#a1a1ab"/><path d="M124.2 245.6l-6.7-0.2l0.4-3.6l6.2 0.2z" fill="#a4a4ac"/><path d="M101.9 225.7l-4.8-1.8l1.5-6.5l4.5 1.7z" fill="#9a9aa0"/><path d="M130.3 241.6l-6.2 0.4l0-5.6l5.9-0.3z" fill="#7d7d83"/><path d="M146.9 210.8l-4.1 1.8l-2.9-5.3l3.4-1.4z" fill="#a8a8b8"/><path d="M124.1 242l-6.2-0.2l0.2-5.5l6 0.1z" fill="#848489"/><path d="M119.7 210.1l-4.2-0.5l2.3-6.6l2.9 0.3z" fill="#9e9ea5"/><path d="M95.3 240.1l-6.3-2.4l1.7 2.6l6 2.3z" fill="#4f5061"/><path d="M145.1 243.6l-6.7 1.5l-1-0.8l6.3-1.4z" fill="#797980"/><path d="M128.1 209.9l-4.2 0.3l-0.2-6.8l3.1-0.2z" fill="#a0a1a9"/><path d="M123.9 210.2l-4.2-0.1l1-6.8l3 0.1z" fill="#a0a0a7"/><path d="M180.1 200.5l-3.4 4.3l-0.7 1.9l3.4-4.2z" fill="#656569"/><path d="M104.9 213.2l-4.1-1.6l3.4-5.1l3.5 1.4z" fill="#b5b5bb"/><path d="M141.5 234.1l-5.6 1.2l-0.5-7.5l5.5-1.2z" fill="#6d6e7a"/><path d="M110 245.6l-6.8-1.2l1.4-0.8l6.3 1.2z" fill="#7e7f89"/><path d="M149.2 216.5l-4.5 1.9l-1.9-5.8l4.1-1.8z" fill="#999aad"/><path d="M112.2 235.7l-5.7-1l0.6-7.6l5.5 1.1z" fill="#838388"/><path d="M103.1 219.1l-4.5-1.7l2.2-5.8l4.1 1.6z" fill="#b0b0b6"/><path d="M146 225l-5.1 1.6l-1-6.7l4.8-1.5z" fill="#7d7e8e"/><path d="M71 206.6l-3.6-4.2l0.7 1.9l3.6 4.2z" fill="#61627e"/><path d="M138.4 245.1l-7 1l-0.6-0.9l6.6-0.9z" fill="#7a7a81"/><path d="M135.9 235.3l-5.9 0.8l-0.2-7.6l5.6-0.7z" fill="#6a6a72"/><path d="M181.5 200l-3.5 4.4l-1.3 0.4l3.4-4.3z" fill="#7f7f84"/><path d="M142.8 212.6l-4.4 1.3l-2.3-5.4l3.8-1.2z" fill="#a8a9b7"/><path d="M117.1 246.3l-7.1-0.7l0.9-0.8l6.6 0.6z" fill="#7d7d86"/><path d="M118.1 236.3l-5.9-0.6l0.4-7.5l5.7 0.5z" fill="#7a7a7f"/><path d="M107.1 227.1l-5.2-1.4l1.2-6.6l4.9 1.4z" fill="#96969b"/><path d="M109.4 214.4l-4.5-1.2l2.8-5.3l3.8 1z" fill="#b2b2b8"/><path d="M153 239.1l-6.7 2.2l-1.2 2.3l6.4-2z" fill="#404042"/><path d="M130 236.1l-5.9 0.3l0-7.5l5.7-0.4z" fill="#646469"/><path d="M131.4 246.1l-7.2 0.4l0-0.9l6.6-0.4z" fill="#7a7b82"/><path d="M124.1 236.4l-6-0.1l0.2-7.6l5.8 0.2z" fill="#6f6f74"/><path d="M124.2 246.5l-7.1-0.2l0.4-0.9l6.7 0.2z" fill="#7b7c84"/><path d="M144.7 218.4l-4.8 1.5l-1.5-6l4.4-1.3z" fill="#999aaa"/><path d="M102.1 242l-6.8-1.9l1.4 2.5l6.5 1.8z" fill="#484958"/><path d="M69.8 206.2l-3.8-4.3l1.4 0.5l3.6 4.2z" fill="#7c7d92"/><path d="M138.4 213.9l-4.6 1.1l-1.6-5.6l3.9-0.9z" fill="#a9a9b5"/><path d="M108 220.5l-4.9-1.4l1.8-5.9l4.5 1.2z" fill="#acacb2"/><path d="M140.9 226.6l-5.5 1.2l-0.6-6.7l5.1-1.2z" fill="#7b7c88"/><path d="M114.1 215.3l-4.7-0.9l2.1-5.5l4 0.7z" fill="#aeaeb4"/><path d="M112.6 228.2l-5.5-1.1l0.9-6.6l5.2 0.9z" fill="#8f8f94"/><path d="M191.8 202.3l-4.1 5.3l-9.7-3.2l3.5-4.4z" fill="#8e8f97"/><path d="M133.8 215l-4.9 0.6l-0.8-5.7l4.1-0.5z" fill="#a8a8b3"/><path d="M119 215.8l-4.9-0.5l1.4-5.7l4.2 0.5z" fill="#a8a8ae"/><path d="M139.9 219.9l-5.1 1.2l-1-6.1l4.6-1.1z" fill="#9898a5"/><path d="M146.3 241.3l-7.1 1.5l-0.8 2.3l6.7-1.5z" fill="#353538"/><path d="M135.4 227.8l-5.6 0.7l-0.4-6.7l5.4-0.7z" fill="#777880"/><path d="M128.9 215.6l-4.9 0.3l-0.1-5.7l4.2-0.3z" fill="#a7a7af"/><path d="M118.3 228.7l-5.7-0.5l0.6-6.8l5.4 0.6z" fill="#86868b"/><path d="M113.2 221.4l-5.2-0.9l1.4-6.1l4.7 0.9z" fill="#a6a6ab"/><path d="M124 215.9l-5-0.1l0.7-5.7l4.2 0.1z" fill="#a5a5ab"/><path d="M109.3 243.3l-7.2-1.3l1.1 2.4l6.8 1.2z" fill="#42424f"/><path d="M129.8 228.5l-5.7 0.4l-0.1-6.8l5.4-0.3z" fill="#727277"/><path d="M124.1 228.9l-5.8-0.2l0.3-6.7l5.4 0.1z" fill="#7b7b80"/><path d="M134.8 221.1l-5.4 0.7l-0.5-6.2l4.9-0.6z" fill="#95959f"/><path d="M60.2 209.7l-4.4-5.1l10.2-2.7l3.8 4.3z" fill="#8e8f97"/><path d="M118.6 222l-5.4-0.6l0.9-6.1l4.9 0.5z" fill="#9e9ea3"/><path d="M176.7 204.8l-4.4 4.1l-0.6 1.8l4.3-4z" fill="#58585b"/><path d="M129.4 221.8l-5.4 0.3l0-6.2l4.9-0.3z" fill="#929299"/><path d="M124 222.1l-5.4-0.1l0.4-6.2l5 0.1z" fill="#949499"/><path d="M75.6 210.5l-4.6-3.9l0.7 1.9l4.5 3.8z" fill="#5a5c76"/><path d="M178 204.4l-4.5 4.1l-1.2 0.4l4.4-4.1z" fill="#77777b"/><path d="M74.4 210.2l-4.6-4l1.2 0.4l4.6 3.9z" fill="#76778a"/><path d="M187.7 207.6l-5.3 4.8l-8.9-3.9l4.5-4.1z" fill="#8e8f97"/><path d="M65.7 214.4l-5.5-4.7l9.6-3.5l4.6 4z" fill="#8e8f97"/><path d="M173.5 208.5l-5.3 3.8l-1 0.2l5.1-3.6z" fill="#6e6e72"/><path d="M79.9 213.8l-5.5-3.6l1.2 0.3l5.3 3.5z" fill="#707183"/><path d="M182.4 212.4l-6.2 4.5l-8-4.6l5.3-3.8z" fill="#8e8f97"/><path d="M168.2 212.3l-6 3.3l-1 0.2l6-3.3z" fill="#656569"/><path d="M72.1 218.6l-6.4-4.2l8.7-4.2l5.5 3.6z" fill="#8e8f97"/><path d="M86.1 216.9l-6.2-3.1l1 0.2l6.1 3z" fill="#6a6b7c"/><path d="M162.2 215.6l-6.8 2.8l-0.7 0.1l6.5-2.7z" fill="#5c5c60"/><path d="M176.2 216.9l-7.1 3.9l-6.9-5.2l6-3.3z" fill="#8e8f97"/><path d="M93 219.5l-6.9-2.6l0.9 0.1l6.7 2.6z" fill="#646575"/><path d="M79.5 222.3l-7.4-3.7l7.8-4.8l6.2 3.1z" fill="#8e8f97"/><path d="M155.4 218.4l-7.2 2.3l-0.6 0.1l7.1-2.3z" fill="#545457"/><path d="M100.4 221.5l-7.4-2l0.7 0.1l7.2 2z" fill="#5f606e"/><path d="M169.1 220.8l-8 3.3l-5.7-5.7l6.8-2.8z" fill="#8e8f97"/><path d="M87.6 225.3l-8.1-3l6.6-5.4l6.9 2.6z" fill="#8e8f97"/><path d="M148.2 220.7l-7.7 1.7l-0.4 0l7.5-1.6z" fill="#4c4c4f"/><path d="M108.1 223l-7.7-1.5l0.5 0.1l7.6 1.4z" fill="#5a5b67"/><path d="M140.5 222.4l-8 1.1l-0.2 0l7.8-1.1z" fill="#4c4c51"/><path d="M116.2 223.8l-8.1-0.8l0.4 0l7.8 0.8z" fill="#565660"/><path d="M161.1 224.1l-8.5 2.7l-4.4-6.1l7.2-2.3z" fill="#8e8f97"/><path d="M132.5 223.5l-8.2 0.5l0-0.1l8-0.4z" fill="#4e4f55"/><path d="M124.3 224l-8.1-0.2l0.1 0l8 0.1z" fill="#52525a"/><path d="M96.3 227.7l-8.7-2.4l5.4-5.8l7.4 2z" fill="#8e8f97"/><path d="M152.6 226.8l-9.1 2l-3-6.4l7.7-1.7z" fill="#8e8f97"/><path d="M105.4 229.4l-9.1-1.7l4.1-6.2l7.7 1.5z" fill="#8e8f97"/><path d="M143.5 228.8l-9.4 1.3l-1.6-6.6l8-1.1z" fill="#8e8f97"/><path d="M114.9 230.4l-9.5-1l2.7-6.4l8.1 0.8z" fill="#8e8f97"/><path d="M134.1 230.1l-9.6 0.5l-0.2-6.6l8.2-0.5z" fill="#8e8f97"/><path d="M124.5 230.6l-9.6-0.2l1.3-6.6l8.1 0.2z" fill="#8e8f97"/></g></g></g><polygon points="45.7,188.5 46.1,193.3 47.4,198.1 49.5,202.8 52.4,207.3 56.1,211.6 60.5,215.6 65.7,219.4 71.4,222.8 77.7,225.8 84.6,228.4 91.8,230.5 99.4,232.2 107.3,233.4 115.3,234.1 123.4,234.3 131.5,234.0 139.6,233.1 147.4,231.8 155.0,230.0 162.3,227.7 169.1,225.0 175.4,221.9 181.2,218.4 186.3,214.6 190.7,210.5 194.4,206.2 197.3,201.6 199.4,196.9 200.7,192.1 201.1,187.2 201.1,251.5 200.7,256.3 199.4,261.1 197.3,265.8 194.4,270.4 190.7,274.8 186.3,278.9 181.2,282.7 175.4,286.2 169.1,289.3 162.3,292.0 155.0,294.3 147.4,296.1 139.6,297.4 131.5,298.2 123.4,298.5 115.3,298.3 107.3,297.6 99.4,296.4 91.8,294.8 84.6,292.6 77.7,290.0 71.4,287.0 65.7,283.6 60.5,279.9 56.1,275.9 52.4,271.6 49.5,267.0 47.4,262.4 46.1,257.6 45.7,252.7" fill="url(#gw1)"/><polyline points="45.7,188.5 46.1,193.3 47.4,198.1 49.5,202.8 52.4,207.3 56.1,211.6 60.5,215.6 65.7,219.4 71.4,222.8 77.7,225.8 84.6,228.4 91.8,230.5 99.4,232.2 107.3,233.4 115.3,234.1 123.4,234.3 131.5,234.0 139.6,233.1 147.4,231.8 155.0,230.0 162.3,227.7 169.1,225.0 175.4,221.9 181.2,218.4 186.3,214.6 190.7,210.5 194.4,206.2 197.3,201.6 199.4,196.9 200.7,192.1 201.1,187.2" fill="none" stroke="#9a9aa4" stroke-width="1" opacity="0.7"/><g stroke-linejoin="round" stroke="#161616" stroke-width="0.8"><path d="M343.3 147.6l39.6 1.2l-7.7 11.7l-26.7-0.8z" fill="#8a8a92"/><path d="M343.3 121.1l39.6 1.2l0 26.5l-39.6-1.2z" fill="#4c4c4f"/><path d="M338.8 110.7l50.8 1.5l-6.7 10.1l-39.6-1.2z" fill="#8a8a92"/><path d="M309.7 160.5l33.6-12.9l5.2 12.1l-22.6 8.7z" fill="#8a8a92"/><path d="M382.9 148.8l30.6 14.9l-17.8 6.8l-20.5-10z" fill="#8a8a92"/><path d="M309.7 134.1l33.6-13l0 26.5l-33.6 12.9z" fill="#474758"/><path d="M382.9 122.3l30.6 14.9l0 26.5l-30.6-14.9z" fill="#6e6e73"/><path d="M295.7 127.3l43.1-16.6l4.5 10.4l-33.6 13z" fill="#8a8a92"/><path d="M389.6 112.2l39.2 19.1l-15.3 5.9l-30.6-14.9z" fill="#8a8a92"/><path d="M295 182.7l14.7-22.2l16.2 7.9l-9.9 14.9z" fill="#8a8a92"/><path d="M413.5 163.7l9.9 22.9l-21-0.7l-6.7-15.4z" fill="#8a8a92"/><path d="M295 156.3l14.7-22.2l0 26.4l-14.7 22.2z" fill="#6e6f8e"/><path d="M413.5 137.2l9.9 22.9l0 26.5l-9.9-22.9z" fill="#5c5c60"/><path d="M277 155.7l18.7-28.4l14 6.8l-14.7 22.2z" fill="#8a8a92"/><path d="M428.8 131.3l12.6 29.4l-18-0.6l-9.9-22.9z" fill="#8a8a92"/><path d="M304.9 205.6l-9.9-22.9l21 0.6l6.7 15.5z" fill="#8a8a92"/><path d="M289.6 251.2l-12.6-29.4l0-66.1l12.6 29.4z" fill="#5c5c60"/><path d="M423.4 186.6l-14.7 22.1l-16.2-7.8l9.9-15z" fill="#8a8a92"/><path d="M322.7 198.8l-6.7-15.5l0-25.4l6.7 15.4z" fill="#5c5c60"/><path d="M441.4 226.8l-18.7 28.4l0-66.1l18.7-28.4z" fill="#6e6f8e"/><path d="M375.2 135l20.5 10.1l6.7 15.4l-9.9 14.9l-22.6 8.7l-26.7-0.8l-20.5-10l-6.7-15.4l9.9-14.9l22.6-8.8z" fill="#8a8a92"/><path d="M402.4 185.9l-9.9 15l0-25.5l9.9-14.9z" fill="#6e6f8e"/><path d="M335.5 220.5l-30.6-14.9l17.8-6.8l20.5 10z" fill="#8a8a92"/><path d="M289.6 185.1l-12.6-29.4l18 0.6l9.9 22.9z" fill="#8a8a92"/><path d="M408.7 208.7l-33.6 13l-5.2-12.1l22.6-8.7z" fill="#8a8a92"/><path d="M343.2 208.8l-20.5-10l0-25.5l20.5 10z" fill="#6e6e73"/><path d="M392.5 200.9l-22.6 8.7l0-25.5l22.6-8.7z" fill="#474758"/><path d="M441.4 160.7l-18.7 28.4l-14-6.8l14.7-22.2z" fill="#8a8a92"/><path d="M375.1 221.7l-39.6-1.2l7.7-11.7l26.7 0.8z" fill="#8a8a92"/><path d="M369.9 209.6l-26.7-0.8l0-25.5l26.7 0.8z" fill="#4c4c4f"/><path d="M328.8 270.3l-39.2-19.1l0-66.1l39.2 19.1z" fill="#6e6e73"/><path d="M422.7 255.2l-43.1 16.6l0-66.1l43.1-16.6z" fill="#474758"/><path d="M379.6 271.8l-50.8-1.5l0-66.1l50.8 1.5z" fill="#4c4c4f"/><path d="M328.8 204.2l-39.2-19.1l15.3-5.9l30.6 14.9z" fill="#8a8a92"/><path d="M422.7 189.1l-43.1 16.6l-4.5-10.4l33.6-13z" fill="#8a8a92"/><path d="M379.6 205.7l-50.8-1.5l6.7-10.1l39.6 1.2z" fill="#8a8a92"/></g><g stroke-linejoin="round" stroke="#161616" stroke-width="0.8"><path d="M573.1 200.2l39.6 1.2l-7.7 11.7l-26.7-0.8z" fill="#96979f"/><path d="M573.1 173.8l39.6 1.2l0 26.4l-39.6-1.2z" fill="#58585c"/><path d="M568.6 163.3l50.8 1.5l-6.7 10.2l-39.6-1.2z" fill="#6b79da"/><path d="M539.5 213.2l33.6-13l5.2 12.1l-22.6 8.8z" fill="#96979f"/><path d="M612.7 201.4l30.6 14.9l-17.8 6.9l-20.5-10.1z" fill="#96979f"/><path d="M539.5 186.7l33.6-12.9l0 26.4l-33.6 13z" fill="#535464"/><path d="M612.7 175l30.6 14.9l0 26.4l-30.6-14.9z" fill="#7b7b7f"/><path d="M525.5 179.9l43.1-16.6l4.5 10.5l-33.6 12.9z" fill="#6b79da"/><path d="M619.4 164.9l39.2 19.1l-15.3 5.9l-30.6-14.9z" fill="#6b79da"/><path d="M524.8 235.4l14.7-22.2l16.2 7.9l-9.9 14.9z" fill="#96979f"/><path d="M643.3 216.3l9.9 22.9l-21-0.6l-6.7-15.4z" fill="#96979f"/><path d="M524.8 208.9l14.7-22.2l0 26.5l-14.7 22.2z" fill="#7b7c9b"/><path d="M643.3 189.9l9.9 22.9l0 26.4l-9.9-22.9z" fill="#69696d"/><path d="M506.8 208.4l18.7-28.5l14 6.8l-14.7 22.2z" fill="#6b79da"/><path d="M658.6 184l12.6 29.3l-18-0.5l-9.9-22.9z" fill="#6b79da"/><path d="M534.7 258.3l-9.9-22.9l21 0.6l6.7 15.4z" fill="#96979f"/><path d="M519.4 303.8l-12.6-29.3l0-66.1l12.6 29.3z" fill="#69696d"/><path d="M653.2 239.2l-14.7 22.2l-16.2-7.9l9.9-14.9z" fill="#96979f"/><path d="M552.5 251.4l-6.7-15.4l0-25.5l6.7 15.5z" fill="#69696d"/><path d="M671.2 279.4l-18.7 28.5l0-66.1l18.7-28.5z" fill="#7b7c9b"/><path d="M605 187.7l20.5 10l6.7 15.4l-9.9 15l-22.6 8.7l-26.7-0.8l-20.5-10l-6.7-15.5l9.9-14.9l22.6-8.7z" fill="#cb9ba2"/><path d="M632.2 238.6l-9.9 14.9l0-25.4l9.9-15z" fill="#7b7c9b"/><path d="M565.3 273.2l-30.6-14.9l17.8-6.9l20.5 10z" fill="#96979f"/><path d="M519.4 237.7l-12.6-29.3l18 0.5l9.9 22.9z" fill="#6b79da"/><path d="M638.5 261.4l-33.6 13l-5.2-12.2l22.6-8.7z" fill="#96979f"/><path d="M573 261.4l-20.5-10l0-25.4l20.5 10z" fill="#7b7b7f"/><path d="M622.3 253.5l-22.6 8.7l0-25.4l22.6-8.7z" fill="#535464"/><path d="M671.2 213.3l-18.7 28.5l-14-6.8l14.7-22.2z" fill="#6b79da"/><path d="M604.9 274.4l-39.6-1.2l7.7-11.8l26.7 0.8z" fill="#96979f"/><path d="M599.7 262.2l-26.7-0.8l0-25.4l26.7 0.8z" fill="#58585c"/><path d="M558.6 323l-39.2-19.2l0-66.1l39.2 19.2z" fill="#7b7b7f"/><path d="M652.5 307.9l-43.1 16.6l0-66.1l43.1-16.6z" fill="#535464"/><path d="M609.4 324.5l-50.8-1.5l0-66.1l50.8 1.5z" fill="#58585c"/><path d="M558.6 256.9l-39.2-19.2l15.3-5.9l30.6 14.9z" fill="#6b79da"/><path d="M652.5 241.8l-43.1 16.6l-4.5-10.5l33.6-12.9z" fill="#6b79da"/><path d="M609.4 258.4l-50.8-1.5l6.7-10.2l39.6 1.2z" fill="#6b79da"/></g><polygon points="619.4,164.9 658.6,184.0 671.2,213.3 652.5,241.8 609.4,258.4 558.6,256.9 519.4,237.7 506.8,208.4 525.5,179.9 568.6,163.3" fill="none" stroke="#fa4a52" stroke-width="1.5" stroke-linejoin="round"/><polygon points="612.7,175.0 643.3,189.9 653.2,212.8 638.5,235.0 604.9,247.9 565.3,246.7 534.7,231.8 524.8,208.9 539.5,186.7 573.1,173.8" fill="none" stroke="#fa4a52" stroke-width="1.5" stroke-linejoin="round"/><path d="M671.2 279.4L652.5 307.9M652.5 307.9L609.4 324.5M609.4 324.5L558.6 323.0M558.6 323.0L519.4 303.8M519.4 303.8L506.8 274.5" stroke="#fa4a52" stroke-width="1.5" fill="none" stroke-linecap="round"/><g stroke-linejoin="round" stroke="#161616" stroke-width="0.8"><path d="M804.1 253.7l18.5-1.1l-0.4 9.5l-16.5 1.1z" fill="#a4a4ab"/><path d="M822.6 252.6l18.1 2.2l-2.4 9.3l-16.1-2z" fill="#aeaeb3"/><path d="M803.8 241.8l18.9-1.2l-0.1 12l-18.5 1.1z" fill="#58585b"/><path d="M787 258.3l17.1-4.6l1.6 9.5l-15.1 4z" fill="#abacba"/><path d="M822.7 240.6l18.4 2.3l-0.4 11.9l-18.1-2.2z" fill="#757579"/><path d="M840.7 254.8l16 5.6l-4.2 8.6l-14.2-4.9z" fill="#babac0"/><path d="M799.4 218.3l24.4-1.5l-0.6 5.1l-21.7 1.4z" fill="#6e7ce0"/><path d="M786.4 246.4l17.4-4.6l0.3 11.9l-17.1 4.6z" fill="#62636f"/><path d="M823.8 216.8l23.9 3l-3.2 4.8l-21.3-2.7z" fill="#6e7ce0"/><path d="M838.3 264.1l14.2 4.9l-3.5-1.1l-12.7-4.4z" fill="#575869"/><path d="M841.1 242.9l16.3 5.7l-0.7 11.8l-16-5.6z" fill="#86868b"/><path d="M776.9 224.3l22.5-6l2.1 5l-20 5.4z" fill="#6e7ce0"/><path d="M773.1 265.7l13.9-7.4l3.6 8.9l-12.4 6.6z" fill="#acadc1"/><path d="M803.7 228.3l19-1.2l0 13.5l-18.9 1.2z" fill="#4f4f52"/><path d="M822.7 227.1l18.6 2.4l-0.2 13.4l-18.4-2.3z" fill="#6c6c6f"/><path d="M801.5 223.3l21.7-1.4l-0.5 5.2l-19 1.2z" fill="#6e7ce0"/><path d="M778.2 273.8l12.4-6.6l2.8-1l-11.1 6z" fill="#606063"/><path d="M823.2 221.9l21.3 2.7l-3.2 4.9l-18.6-2.4z" fill="#6e7ce0"/><path d="M847.7 219.8l21.1 7.3l-5.6 4l-18.7-6.5z" fill="#6e7ce0"/><path d="M772.2 254l14.2-7.6l0.6 11.9l-13.9 7.4z" fill="#636479"/><path d="M856.7 260.4l12.2 8.2l-5.5 7.8l-10.9-7.4z" fill="#bebec4"/><path d="M786.2 233l17.5-4.7l0.1 13.5l-17.4 4.6z" fill="#585965"/><path d="M781.5 228.7l20-5.4l2.2 5l-17.5 4.7z" fill="#6e7ce0"/><path d="M852.5 269l10.9 7.4l-4.6-1.9l-9.8-6.6z" fill="#6a6b81"/><path d="M841.3 229.5l16.4 5.6l-0.3 13.5l-16.3-5.7z" fill="#7d7d82"/><path d="M857.4 248.6l12.6 8.3l-1.1 11.7l-12.2-8.2z" fill="#8b8b8f"/><path d="M844.5 224.6l18.7 6.5l-5.5 4l-16.4-5.6z" fill="#6e7ce0"/><path d="M758.5 234.1l18.4-9.8l4.6 4.4l-16.3 8.7z" fill="#6e7ce0"/><path d="M763.6 275.3l9.5-9.6l5.1 8.1l-8.4 8.5z" fill="#a6a7c0"/><path d="M769.8 282.3l8.4-8.5l4.1-1.6l-7.5 7.6z" fill="#7c7c80"/><path d="M771.8 240.6l14.4-7.6l0.2 13.4l-14.2 7.6z" fill="#595a6f"/><path d="M765.2 237.4l16.3-8.7l4.7 4.3l-14.4 7.6z" fill="#6e7ce0"/><path d="M868.8 227.1l16.1 10.8l-7.3 2.9l-14.4-9.7z" fill="#6e7ce0"/><path d="M762.5 263.8l9.7-9.8l0.9 11.7l-9.5 9.6z" fill="#71738f"/><path d="M868.9 268.6l7.4 10.1l-6.4 6.7l-6.5-9z" fill="#b7b7bd"/><path d="M863.4 276.4l6.5 9l-5.2-2.8l-5.9-8.1z" fill="#7e7f98"/><path d="M857.7 235.1l12.6 8.5l-0.3 13.3l-12.6-8.3z" fill="#828286"/><path d="M863.2 231.1l14.4 9.7l-7.3 2.8l-12.6-8.5z" fill="#6e7ce0"/><path d="M870 256.9l7.5 10.4l-1.2 11.4l-7.4-10.1z" fill="#828286"/><path d="M743 341.8l-2.3-14.6l0-33l2.3 14.5z" fill="#5f5f63"/><path d="M759.6 286.2l4-10.9l6.2 7l-3.6 9.7z" fill="#999ab6"/><path d="M746 246.8l12.5-12.7l6.7 3.3l-11.1 11.3z" fill="#6e7ce0"/><path d="M766.2 292l3.6-9.7l5-2.5l-3.3 8.7z" fill="#95959a"/><path d="M762.1 250.5l9.7-9.9l0.4 13.4l-9.7 9.8z" fill="#71728e"/><path d="M754.1 248.7l11.1-11.3l6.6 3.2l-9.7 9.9z" fill="#6e7ce0"/><path d="M869.9 285.4l1.5 9.8l-5.3-3.8l-1.4-8.8z" fill="#9092ac"/><path d="M876.3 278.7l1.7 11l-6.6 5.5l-1.5-9.8z" fill="#a7a7ad"/><path d="M758.3 274.9l4.2-11.1l1.1 11.5l-4 10.9z" fill="#8789aa"/><path d="M818.8 268.1l-19.2-16.9l10.3-2.8l11.2-0.7z" fill="#dca3ab"/><path d="M870.3 243.6l7.6 10.4l-0.4 13.3l-7.5-10.4z" fill="#79797d"/><path d="M896.9 332l-5.3 14.3l0-33.1l5.3-14.3z" fill="#8788a9"/><path d="M818.8 268.1l2.3-20.4l10.9 1.4l9.7 3.3z" fill="#dca3ab"/><path d="M884.9 237.9l9.7 13.4l-8.3 1.4l-8.7-11.9z" fill="#6e7ce0"/><path d="M877.6 240.8l8.7 11.9l-8.4 1.3l-7.6-10.4z" fill="#6e7ce0"/><path d="M855.7 264.4l5.4 7.5l-7.6-8.4l-4.4-6.1z" fill="#797a98"/><path d="M864.7 282.6l1.4 8.8l-3.7-11.4l-1.3-8.1z" fill="#8e90b2"/><path d="M877.5 267.3l1.8 11.2l-1.3 11.2l-1.7-11z" fill="#6c6c70"/><path d="M767.7 301.8l-1.5-9.8l5.3-3.5l1.4 8.8z" fill="#aaaab0"/><path d="M818.8 268.1l-33.3-6.6l5.7-5.8l8.4-4.5z" fill="#dca3ab"/><path d="M761.3 297.2l-1.7-11l6.6 5.8l1.5 9.8z" fill="#8789a5"/><path d="M757.9 261.7l4.2-11.2l0.4 13.3l-4.2 11.1z" fill="#8789a9"/><path d="M818.8 268.1l22.9-15.7l7.4 5l4.4 6.1z" fill="#dca3ab"/><path d="M775.2 277.4l3-8l7.3-7.9l-2.5 6.5z" fill="#848488"/><path d="M740.7 261.1l5.3-14.3l8.1 1.9l-4.8 12.7z" fill="#6e7ce0"/><path d="M871.4 295.2l-3.6 9.6l-5-4.8l3.3-8.6z" fill="#a0a1bb"/><path d="M752.7 355.2l-9.7-13.4l0-33.1l9.7 13.4z" fill="#757579"/><path d="M772.9 297.3l-1.4-8.8l3.7-11.1l1.3 8.1z" fill="#828286"/><path d="M749.3 261.4l4.8-12.7l8 1.8l-4.2 11.2z" fill="#6e7ce0"/><path d="M861.1 271.9l1.3 8.1l-7.8-9.8l-1.1-6.7z" fill="#7f809f"/><path d="M878 289.7l-4 10.9l-6.2 4.2l3.6-9.6z" fill="#909095"/><path d="M877.9 254l1.8 11.3l-0.4 13.2l-1.8-11.2z" fill="#636367"/><path d="M866.1 291.4l-3.3 8.6l-3.4-12l3-8z" fill="#8688a8"/><path d="M743 308.7l-2.3-14.5l0-33.1l2.3 14.6z" fill="#5f5f63"/><path d="M894.6 251.3l2.3 14.6l-8.6-0.3l-2-12.9z" fill="#6e7ce0"/><path d="M891.6 346.3l-12.5 12.7l0-33.1l12.5-12.7z" fill="#70728d"/><path d="M774.2 310.8l-6.5-9l5.2-4.5l5.9 8.1z" fill="#b8b8be"/><path d="M818.8 268.1l-34.7 6.6l-1.1-6.7l2.5-6.5z" fill="#dca3ab"/><path d="M886.3 252.7l2 12.9l-8.6-0.3l-1.8-11.3z" fill="#6e7ce0"/><path d="M776.5 285.5l-1.3-8.1l7.8-9.4l1.1 6.7z" fill="#9f9fa4"/><path d="M768.7 307.3l-7.4-10.1l6.4 4.6l6.5 9z" fill="#72748e"/><path d="M818.8 268.1l34.7-4.6l1.1 6.7l-2.5 6.6z" fill="#dca3ab"/><path d="M778.8 305.4l-5.9-8.1l3.6-11.8l5.4 7.5z" fill="#97979c"/><path d="M862.4 280l-3 8l-7.3-11.2l2.5-6.6z" fill="#8a8caa"/><path d="M867.8 304.8l-8.4 8.6l-4.1-5.7l7.5-7.7z" fill="#abacc4"/><path d="M896.9 298.9l-5.3 14.3l0-33l5.3-14.3z" fill="#8788a9"/><path d="M874 300.6l-9.5 9.6l-5.1 3.2l8.4-8.6z" fill="#737377"/><path d="M862.8 300l-7.5 7.7l-2.9-12.6l7-7.1z" fill="#747591"/><path d="M768.8 366l-16.1-10.8l0-33.1l16.1 10.9z" fill="#7e7e82"/><path d="M781.9 293l-5.4-7.5l7.6-10.8l4.4 6.1z" fill="#b1b1b7"/><path d="M751.3 274.3l-2-12.9l8.6 0.3l1.8 11.3z" fill="#6e7ce0"/><path d="M785.1 318.1l-10.9-7.3l4.6-5.4l9.8 6.6z" fill="#bebec4"/><path d="M743 275.7l-2.3-14.6l8.6 0.3l2 12.9z" fill="#6e7ce0"/><path d="M818.8 268.1l-22.9 17.7l-7.4-5l-4.4-6.1z" fill="#dca3ab"/><path d="M859.4 288l-7 7.1l-6-12.5l5.7-5.8z" fill="#989ab5"/><path d="M788.6 312l-9.8-6.6l3.1-12.4l9 6z" fill="#9f9fa5"/><path d="M859.4 313.4l-12.4 6.6l-2.8-6.3l11.1-6z" fill="#b1b1c5"/><path d="M780.9 315.6l-12.2-8.3l5.5 3.5l10.9 7.3z" fill="#5c5d74"/><path d="M818.8 268.1l33.3 8.7l-5.7 5.8l-8.4 4.5z" fill="#dca3ab"/><path d="M879.1 359l-18.4 9.8l0-33.1l18.4-9.8z" fill="#55566a"/><path d="M888.3 265.6l-4.8 12.7l-8-1.8l4.2-11.2z" fill="#6e7ce0"/><path d="M855.3 307.7l-11.1 6l-2-13.1l10.2-5.5z" fill="#7c7d93"/><path d="M752.7 322.1l-9.7-13.4l0-33l9.7 13.4z" fill="#757579"/><path d="M896.9 265.9l-5.3 14.3l-8.1-1.9l4.8-12.7z" fill="#6e7ce0"/><path d="M799.3 323l-14.2-4.9l3.5-6.1l12.7 4.4z" fill="#bbbbc1"/><path d="M790.9 299l-9-6l6.6-12.2l7.4 5z" fill="#b8b8be"/><path d="M847 320l-15.1 4l-1.4-6.7l13.7-3.6z" fill="#b0b1bf"/><path d="M818.8 268.1l-2.3 22.4l-10.9-1.4l-9.7-3.3z" fill="#dca3ab"/><path d="M801.3 316.4l-12.7-4.4l2.3-13l11.8 4.1z" fill="#9b9ba0"/><path d="M852.4 295.1l-10.2 5.5l-4.2-13.5l8.4-4.5z" fill="#a0a1b6"/><path d="M818.8 268.1l19.2 19l-10.3 2.7l-11.2 0.7z" fill="#dca3ab"/><path d="M789.9 373.3l-21.1-7.3l0-33l21.1 7.2z" fill="#7a7a7e"/><path d="M844.2 313.7l-13.7 3.6l-0.9-13.4l12.6-3.3z" fill="#7b7c89"/><path d="M815.4 325l-16.1-2l2-6.6l14.5 1.8z" fill="#b0b0b5"/><path d="M831.9 324l-16.5 1l0.4-6.8l14.7-0.9z" fill="#a9aab1"/><path d="M891.6 313.2l-12.5 12.7l0-33l12.5-12.7z" fill="#70728d"/><path d="M802.7 303.1l-11.8-4.1l5-13.2l9.7 3.3z" fill="#b5b5bb"/><path d="M815.8 318.2l-14.5-1.8l1.4-13.3l13.3 1.7z" fill="#8a8a8f"/><path d="M860.7 368.8l-22.5 6l0-33.1l22.5-6z" fill="#545561"/><path d="M830.5 317.3l-14.7 0.9l0.2-13.4l13.6-0.9z" fill="#717176"/><path d="M760 286.2l-8.7-11.9l8.4-1.3l7.6 10.4z" fill="#6e7ce0"/><path d="M842.2 300.6l-12.6 3.3l-1.9-14.1l10.3-2.7z" fill="#9f9fae"/><path d="M816 304.8l-13.3-1.7l2.9-14l10.9 1.4z" fill="#a6a6ab"/><path d="M752.7 289.1l-9.7-13.4l8.3-1.4l8.7 11.9z" fill="#6e7ce0"/><path d="M813.8 376.3l-23.9-3l0-33.1l23.9 3.1z" fill="#68686c"/><path d="M829.6 303.9l-13.6 0.9l0.5-14.3l11.2-0.7z" fill="#96969d"/><path d="M838.2 374.8l-24.4 1.5l0-33l24.4-1.6z" fill="#4b4b4e"/><path d="M883.5 278.3l-11.1 11.3l-6.6-3.2l9.7-9.9z" fill="#6e7ce0"/><path d="M768.8 333l-16.1-10.9l0-33l16.1 10.8z" fill="#7e7e82"/><path d="M891.6 280.2l-12.5 12.7l-6.7-3.3l11.1-11.3z" fill="#6e7ce0"/><path d="M774.4 295.9l-14.4-9.7l7.3-2.8l12.6 8.5z" fill="#6e7ce0"/><path d="M879.1 325.9l-18.4 9.8l0-33l18.4-9.8z" fill="#55566a"/><path d="M768.8 299.9l-16.1-10.8l7.3-2.9l14.4 9.7z" fill="#6e7ce0"/><path d="M872.4 289.6l-16.3 8.7l-4.7-4.3l14.4-7.6z" fill="#6e7ce0"/><path d="M789.9 340.2l-21.1-7.2l0-33.1l21.1 7.3z" fill="#7a7a7e"/><path d="M879.1 292.9l-18.4 9.8l-4.6-4.4l16.3-8.7z" fill="#6e7ce0"/><path d="M793.1 302.4l-18.7-6.5l5.5-4l16.4 5.6z" fill="#6e7ce0"/><path d="M860.7 335.7l-22.5 6l0-33l22.5-6z" fill="#545561"/><path d="M856.1 298.3l-20 5.4l-2.2-5l17.5-4.7z" fill="#6e7ce0"/><path d="M813.8 343.3l-23.9-3.1l0-33l23.9 3z" fill="#68686c"/><path d="M838.2 341.7l-24.4 1.6l0-33.1l24.4-1.5z" fill="#4b4b4e"/><path d="M789.9 307.2l-21.1-7.3l5.6-4l18.7 6.5z" fill="#6e7ce0"/><path d="M814.4 305.1l-21.3-2.7l3.2-4.9l18.6 2.4z" fill="#6e7ce0"/><path d="M836.1 303.7l-21.7 1.4l0.5-5.2l19-1.2z" fill="#6e7ce0"/><path d="M860.7 302.7l-22.5 6l-2.1-5l20-5.4z" fill="#6e7ce0"/><path d="M813.8 310.2l-23.9-3l3.2-4.8l21.3 2.7z" fill="#6e7ce0"/><path d="M838.2 308.7l-24.4 1.5l0.6-5.1l21.7-1.4z" fill="#6e7ce0"/></g><g stroke-linejoin="round" stroke="#0c0c0c" stroke-width="0.5"><path d="M264.6 286.5l5-0.1l0 4.5l-4.8 0.1z" fill="#89898e"/><path d="M269.6 286.4l5 0.2l-0.3 4.5l-4.7-0.2z" fill="#909095"/><path d="M259.7 286.9l4.9-0.4l0.2 4.5l-4.8 0.3z" fill="#8c8c93"/><path d="M274.6 286.6l5 0.5l-0.5 4.4l-4.8-0.4z" fill="#96969b"/><path d="M264.8 291l4.8-0.1l-0.1 3.7l-4.5 0.1z" fill="#9a9aa1"/><path d="M254.8 287.5l4.9-0.6l0.3 4.4l-4.7 0.6z" fill="#8f8f98"/><path d="M269.6 290.9l4.7 0.2l-0.4 3.7l-4.4-0.2z" fill="#99999e"/><path d="M260 291.3l4.8-0.3l0.2 3.7l-4.4 0.3z" fill="#9d9da5"/><path d="M264.6 281l5.1-0.1l-0.1 5.5l-5 0.1z" fill="#6d6d71"/><path d="M274.3 291.1l4.8 0.4l-0.8 3.7l-4.4-0.4z" fill="#9d9da3"/><path d="M269.7 280.9l5.1 0.2l-0.2 5.5l-5-0.2z" fill="#757579"/><path d="M279.6 287.1l4.8 0.6l-0.7 4.4l-4.6-0.6z" fill="#9b9ba1"/><path d="M259.5 281.3l5.1-0.3l0 5.5l-4.9 0.4z" fill="#6a6a6f"/><path d="M255.3 291.9l4.7-0.6l0.6 3.7l-4.4 0.5z" fill="#9f9fa9"/><path d="M250 288.3l4.8-0.8l0.5 4.4l-4.6 0.8z" fill="#91929d"/><path d="M274.8 281.1l5.1 0.4l-0.3 5.6l-5-0.5z" fill="#7c7c81"/><path d="M254.4 281.9l5.1-0.6l0.2 5.6l-4.9 0.6z" fill="#6d6d75"/><path d="M279.1 291.5l4.6 0.6l-1.1 3.7l-4.3-0.6z" fill="#a2a2a7"/><path d="M250.7 292.7l4.6-0.8l0.9 3.6l-4.3 0.8z" fill="#a1a1ac"/><path d="M284.4 287.7l4.7 1l-0.9 4.3l-4.5-0.9z" fill="#a0a0a6"/><path d="M279.9 281.5l5 0.7l-0.5 5.5l-4.8-0.6z" fill="#828287"/><path d="M245.3 289.4l4.7-1.1l0.7 4.4l-4.4 1z" fill="#9394a1"/><path d="M249.5 282.8l4.9-0.9l0.4 5.6l-4.8 0.8z" fill="#70707b"/><path d="M283.7 292.1l4.5 0.9l-1.4 3.6l-4.2-0.8z" fill="#a5a5ab"/><path d="M246.3 293.7l4.4-1l1.2 3.6l-4.2 1z" fill="#a2a2af"/><path d="M284.9 282.2l4.8 1l-0.6 5.5l-4.7-1z" fill="#88888d"/><path d="M289.1 288.7l4.6 1.2l-1.1 4.3l-4.4-1.2z" fill="#a4a4aa"/><path d="M264.5 275.1l5.2 0l0 5.8l-5.1 0.1z" fill="#5a5a5d"/><path d="M269.7 275.1l5.2 0.1l-0.1 5.9l-5.1-0.2z" fill="#626266"/><path d="M259.3 275.5l5.2-0.4l0.1 5.9l-5.1 0.3z" fill="#545458"/><path d="M263.6 252.4l6.6-0.2l-0.1 0.9l-6.4 0.2z" fill="#66666e"/><path d="M244.7 283.9l4.8-1.1l0.5 5.5l-4.7 1.1z" fill="#72737f"/><path d="M270.2 252.2l6.5 0.3l-0.2 0.9l-6.4-0.3z" fill="#686871"/><path d="M257.1 252.8l6.5-0.4l0.1 0.9l-6.3 0.4z" fill="#64656c"/><path d="M240.8 290.8l4.5-1.4l1 4.3l-4.3 1.3z" fill="#9495a5"/><path d="M288.2 293l4.4 1.2l-1.7 3.5l-4.1-1.1z" fill="#a8a8ae"/><path d="M274.9 275.2l5.2 0.5l-0.2 5.8l-5.1-0.4z" fill="#6a6a6e"/><path d="M254.2 276.1l5.1-0.6l0.2 5.8l-5.1 0.6z" fill="#57575e"/><path d="M276.7 252.5l6.5 0.5l-0.4 0.9l-6.3-0.5z" fill="#696a73"/><path d="M242 295l4.3-1.3l1.4 3.6l-4 1.2z" fill="#a3a3b2"/><path d="M250.6 253.6l6.5-0.8l0.3 0.9l-6.3 0.8z" fill="#63636a"/><path d="M289.7 283.2l4.7 1.2l-0.7 5.5l-4.6-1.2z" fill="#8d8d92"/><path d="M280.1 275.7l5 0.7l-0.2 5.8l-5-0.7z" fill="#707075"/><path d="M293.7 289.9l4.4 1.4l-1.3 4.2l-4.2-1.3z" fill="#a7a7ad"/><path d="M249.2 277l5-0.9l0.2 5.8l-4.9 0.9z" fill="#5a5b64"/><path d="M240.1 285.3l4.6-1.4l0.6 5.5l-4.5 1.4z" fill="#747483"/><path d="M263.7 253.3l6.4-0.2l-0.1 1.2l-6.2 0.1z" fill="#8a8a92"/><path d="M283.2 253l6.4 1l-0.6 0.8l-6.2-0.9z" fill="#6b6c76"/><path d="M270.1 253.1l6.4 0.3l-0.3 1.1l-6.2-0.2z" fill="#8a8a92"/><path d="M292.6 294.2l4.2 1.3l-2 3.5l-3.9-1.3z" fill="#aaaab0"/><path d="M257.4 253.7l6.3-0.4l0.1 1.1l-6.1 0.5z" fill="#8a8a92"/><path d="M236.5 292.3l4.3-1.5l1.2 4.2l-4.1 1.5z" fill="#9596a7"/><path d="M244.3 254.7l6.3-1.1l0.5 0.9l-6.1 1.1z" fill="#626268"/><path d="M285.1 276.4l4.9 1l-0.3 5.8l-4.8-1z" fill="#76767a"/><path d="M276.5 253.4l6.3 0.5l-0.4 1.2l-6.2-0.6z" fill="#8a8a92"/><path d="M237.9 296.5l4.1-1.5l1.7 3.5l-3.8 1.4z" fill="#a3a4b4"/><path d="M251.1 254.5l6.3-0.8l0.3 1.2l-6.1 0.7z" fill="#8a8a92"/><path d="M244.3 278.2l4.9-1.2l0.3 5.8l-4.8 1.1z" fill="#5d5d69"/><path d="M294.4 284.4l4.5 1.5l-0.8 5.4l-4.4-1.4z" fill="#909096"/><path d="M264.5 269.5l5.2-0.1l0 5.7l-5.2 0z" fill="#525255"/><path d="M269.7 269.4l5.3 0.2l-0.1 5.6l-5.2-0.1z" fill="#5a5a5d"/><path d="M289.6 254l6.2 1.2l-0.8 0.8l-6-1.2z" fill="#6d6e79"/><path d="M263.8 254.4l6.2-0.1l0 1.2l-6 0.1z" fill="#8a8a92"/><path d="M259.2 269.9l5.3-0.4l0 5.6l-5.2 0.4z" fill="#4a4a4e"/><path d="M270 254.3l6.2 0.2l-0.2 1.2l-6-0.2z" fill="#8a8a92"/><path d="M282.8 253.9l6.2 0.9l-0.6 1.1l-6-0.8z" fill="#8a8a92"/><path d="M298.1 291.3l4.1 1.6l-1.5 4.2l-3.9-1.6z" fill="#a9a9af"/><path d="M257.7 254.9l6.1-0.5l0.2 1.2l-6.1 0.4z" fill="#8a8a92"/><path d="M235.6 286.9l4.5-1.6l0.7 5.5l-4.3 1.5z" fill="#757587"/><path d="M275 269.6l5.2 0.5l-0.1 5.6l-5.2-0.5z" fill="#616165"/><path d="M238.2 256.2l6.1-1.5l0.7 0.9l-6 1.4z" fill="#626266"/><path d="M290 277.4l4.8 1.2l-0.4 5.8l-4.7-1.2z" fill="#7b7b7f"/><path d="M296.8 295.5l3.9 1.6l-2.2 3.3l-3.7-1.4z" fill="#acacb2"/><path d="M245 255.6l6.1-1.1l0.5 1.1l-6 1.1z" fill="#8a8a92"/><path d="M254.1 270.5l5.1-0.6l0.1 5.6l-5.1 0.6z" fill="#4e4e54"/><path d="M276.2 254.5l6.2 0.6l-0.4 1.1l-6-0.5z" fill="#8a8a92"/><path d="M251.6 255.6l6.1-0.7l0.2 1.1l-5.9 0.8z" fill="#8a8a92"/><path d="M232.5 294.1l4-1.8l1.4 4.2l-3.9 1.7z" fill="#9596a9"/><path d="M239.6 279.6l4.7-1.4l0.4 5.7l-4.6 1.4z" fill="#5e5f6d"/><path d="M280.2 270.1l5.1 0.7l-0.2 5.6l-5-0.7z" fill="#68686c"/><path d="M234 298.2l3.9-1.7l2 3.4l-3.6 1.6z" fill="#a3a4b6"/><path d="M264 255.6l6-0.1l-0.1 1.2l-5.8 0.1z" fill="#8a8a92"/><path d="M249 271.4l5.1-0.9l0.1 5.6l-5 0.9z" fill="#51515a"/><path d="M289 254.8l6 1.2l-0.7 1.1l-5.9-1.2z" fill="#8a8a92"/><path d="M282.4 255.1l6 0.8l-0.6 1.2l-5.8-0.9z" fill="#8a8a92"/><path d="M270 255.5l6 0.2l-0.2 1.2l-5.9-0.2z" fill="#8a8a92"/><path d="M298.9 285.9l4.2 1.6l-0.9 5.4l-4.1-1.6z" fill="#939398"/><path d="M295.8 255.2l5.9 1.5l-0.9 0.8l-5.8-1.5z" fill="#70707d"/><path d="M257.9 256l6.1-0.4l0.1 1.2l-5.9 0.4z" fill="#8a8a92"/><path d="M245.6 256.7l6-1.1l0.4 1.2l-5.8 1z" fill="#8a8a92"/><path d="M239 257l6-1.4l0.6 1.1l-5.8 1.3z" fill="#8a8a92"/><path d="M276 255.7l6 0.5l-0.4 1.2l-5.8-0.5z" fill="#8a8a92"/><path d="M285.3 270.8l5 1l-0.3 5.6l-4.9-1z" fill="#6e6e72"/><path d="M294.8 278.6l4.5 1.5l-0.4 5.8l-4.5-1.5z" fill="#7f7f83"/><path d="M231.5 288.8l4.1-1.9l0.9 5.4l-4 1.8z" fill="#757689"/><path d="M252 256.8l5.9-0.8l0.3 1.2l-5.7 0.7z" fill="#8a8a92"/><path d="M302.2 292.9l3.9 1.9l-1.7 4.1l-3.7-1.8z" fill="#ababb1"/><path d="M232.3 257.9l5.9-1.7l0.8 0.8l-5.8 1.7z" fill="#626266"/><path d="M300.7 297.1l3.7 1.8l-2.4 3.2l-3.5-1.7z" fill="#adadb3"/><path d="M244.1 272.6l4.9-1.2l0.2 5.6l-4.9 1.2z" fill="#53545f"/><path d="M288.4 255.9l5.9 1.2l-0.8 1.1l-5.7-1.1z" fill="#8a8a92"/><path d="M235.2 281.2l4.4-1.6l0.5 5.7l-4.5 1.6z" fill="#5f6070"/><path d="M264.1 256.8l5.8-0.1l0 1.2l-5.7 0.1z" fill="#8a8a92"/><path d="M264.4 264.3l5.3-0.1l0 5.2l-5.2 0.1z" fill="#58585c"/><path d="M282 256.2l5.8 0.9l-0.5 1.1l-5.7-0.8z" fill="#8a8a92"/><path d="M269.9 256.7l5.9 0.2l-0.2 1.2l-5.7-0.2z" fill="#8a8a92"/><path d="M269.7 264.2l5.3 0.2l0 5.2l-5.3-0.2z" fill="#616164"/><path d="M228.7 296.1l3.8-2l1.5 4.1l-3.6 1.9z" fill="#9596ab"/><path d="M258.2 257.2l5.9-0.4l0.1 1.2l-5.7 0.4z" fill="#8a8a92"/><path d="M259.2 264.7l5.2-0.4l0.1 5.2l-5.3 0.4z" fill="#525256"/><path d="M295 256l5.8 1.5l-0.9 1.1l-5.6-1.5z" fill="#8a8a92"/><path d="M230.4 300.1l3.6-1.9l2.3 3.3l-3.4 1.7z" fill="#a3a4b7"/><path d="M246.2 257.8l5.8-1l0.5 1.1l-5.7 1z" fill="#8a8a92"/><path d="M239.8 258l5.8-1.3l0.6 1.1l-5.6 1.3z" fill="#8a8a92"/><path d="M275 264.4l5.3 0.5l-0.1 5.2l-5.2-0.5z" fill="#68686c"/><path d="M275.8 256.9l5.8 0.5l-0.4 1.2l-5.6-0.5z" fill="#8a8a92"/><path d="M290.3 271.8l4.8 1.2l-0.3 5.6l-4.8-1.2z" fill="#737377"/><path d="M254 265.3l5.2-0.6l0 5.2l-5.1 0.6z" fill="#56565c"/><path d="M252.5 257.9l5.7-0.7l0.3 1.2l-5.6 0.6z" fill="#8a8a92"/><path d="M303.1 287.5l4 2l-1 5.3l-3.9-1.9z" fill="#95959a"/><path d="M301.7 256.7l5.8 1.9l-1.1 0.7l-5.6-1.8z" fill="#727380"/><path d="M233.2 258.7l5.8-1.7l0.8 1l-5.6 1.7z" fill="#8a8a92"/><path d="M239.4 274l4.7-1.4l0.2 5.6l-4.7 1.4z" fill="#555563"/><path d="M287.8 257.1l5.7 1.1l-0.7 1.1l-5.5-1.1z" fill="#8a8a92"/><path d="M299.3 280.1l4.4 1.7l-0.6 5.7l-4.2-1.6z" fill="#828286"/><path d="M280.3 264.9l5.1 0.7l-0.1 5.2l-5.1-0.7z" fill="#6f6f73"/><path d="M264.2 258l5.7-0.1l-0.1 1.2l-5.5 0z" fill="#8a8a92"/><path d="M281.6 257.4l5.7 0.8l-0.6 1.2l-5.5-0.8z" fill="#8a8a92"/><path d="M269.9 257.9l5.7 0.2l-0.3 1.1l-5.5-0.1z" fill="#8a8a92"/><path d="M294.3 257.1l5.6 1.5l-0.9 1.1l-5.5-1.5z" fill="#8a8a92"/><path d="M258.5 258.4l5.7-0.4l0.1 1.1l-5.5 0.4z" fill="#8a8a92"/><path d="M248.9 266.2l5.1-0.9l0.1 5.2l-5.1 0.9z" fill="#595962"/><path d="M227.6 290.8l3.9-2l1 5.3l-3.8 2z" fill="#74758b"/><path d="M226.6 260l5.7-2.1l0.9 0.8l-5.4 2z" fill="#666669"/><path d="M240.6 259.1l5.6-1.3l0.6 1.1l-5.5 1.3z" fill="#8a8a92"/><path d="M306.1 294.8l3.5 2l-1.8 4l-3.4-1.9z" fill="#ababb2"/><path d="M246.8 258.9l5.7-1l0.4 1.1l-5.5 1z" fill="#8a8a92"/><path d="M304.4 298.9l3.4 1.9l-2.6 3.1l-3.2-1.8z" fill="#aeaeb4"/><path d="M264.4 260.9l5.4-0.1l-0.1 3.4l-5.3 0.1z" fill="#76767a"/><path d="M275.6 258.1l5.6 0.5l-0.4 1.1l-5.5-0.5z" fill="#8a8a92"/><path d="M230.9 283l4.3-1.8l0.4 5.7l-4.1 1.9z" fill="#5f6073"/><path d="M269.8 260.8l5.4 0.2l-0.2 3.4l-5.3-0.2z" fill="#7e7e82"/><path d="M259 261.3l5.4-0.4l0 3.4l-5.2 0.4z" fill="#74747a"/><path d="M234.2 259.7l5.6-1.7l0.8 1.1l-5.5 1.6z" fill="#8a8a92"/><path d="M252.9 259l5.6-0.6l0.3 1.1l-5.4 0.7z" fill="#8a8a92"/><path d="M264.3 259.1l5.5 0l0 1.7l-5.4 0.1z" fill="#98989f"/><path d="M300.8 257.5l5.6 1.8l-1 1.1l-5.5-1.8z" fill="#8a8a92"/><path d="M269.8 259.1l5.5 0.1l-0.1 1.8l-5.4-0.2z" fill="#99999e"/><path d="M295.1 273l4.6 1.5l-0.4 5.6l-4.5-1.5z" fill="#77777b"/><path d="M285.4 265.6l5 1l-0.1 5.2l-5-1z" fill="#757579"/><path d="M258.8 259.5l5.5-0.4l0.1 1.8l-5.4 0.4z" fill="#9b9ba3"/><path d="M275.2 261l5.3 0.5l-0.2 3.4l-5.3-0.5z" fill="#858589"/><path d="M287.3 258.2l5.5 1.1l-0.7 1.1l-5.4-1z" fill="#8a8a92"/><path d="M225.2 298.3l3.5-2.2l1.7 4l-3.4 2.1z" fill="#9495ab"/><path d="M227 302.2l3.4-2.1l2.5 3.1l-3.1 2z" fill="#a2a3b7"/><path d="M253.7 261.9l5.3-0.6l0.2 3.4l-5.2 0.6z" fill="#787880"/><path d="M281.2 258.6l5.5 0.8l-0.6 1.1l-5.3-0.8z" fill="#8a8a92"/><path d="M275.3 259.2l5.5 0.5l-0.3 1.8l-5.3-0.5z" fill="#9d9da3"/><path d="M293.5 258.2l5.5 1.5l-0.8 1l-5.4-1.4z" fill="#8a8a92"/><path d="M243.9 267.4l5-1.2l0.1 5.2l-4.9 1.2z" fill="#5b5b67"/><path d="M234.8 275.6l4.6-1.6l0.2 5.6l-4.4 1.6z" fill="#565667"/><path d="M253.4 260.2l5.4-0.7l0.2 1.8l-5.3 0.6z" fill="#9d9ea7"/><path d="M227.8 260.7l5.4-2l1 1l-5.3 1.9z" fill="#8a8a92"/><path d="M241.3 260.2l5.5-1.3l0.6 1.1l-5.3 1.3z" fill="#8a8a92"/><path d="M247.4 260l5.5-1l0.5 1.2l-5.3 0.9z" fill="#8a8a92"/><path d="M307.1 289.5l3.7 2.1l-1.2 5.2l-3.5-2z" fill="#96969b"/><path d="M280.5 261.5l5.3 0.7l-0.4 3.4l-5.1-0.7z" fill="#8b8b90"/><path d="M307.5 258.6l5.4 2.2l-1.2 0.6l-5.3-2.1z" fill="#757583"/><path d="M235.1 260.7l5.5-1.6l0.7 1.1l-5.2 1.6z" fill="#8a8a92"/><path d="M303.7 281.8l4 2l-0.6 5.7l-4-2z" fill="#838388"/><path d="M299.9 258.6l5.5 1.8l-1.1 1l-5.3-1.7z" fill="#8a8a92"/><path d="M280.8 259.7l5.3 0.8l-0.3 1.7l-5.3-0.7z" fill="#a2a2a7"/><path d="M248.5 262.9l5.2-1l0.3 3.4l-5.1 0.9z" fill="#7a7b85"/><path d="M302 302.1l3.2 1.8l-2.4-0.3l-3-1.8z" fill="#4b4c61"/><path d="M290.4 266.6l4.8 1.3l-0.1 5.1l-4.8-1.2z" fill="#79797e"/><path d="M286.7 259.4l5.4 1l-0.8 1.1l-5.2-1z" fill="#8a8a92"/><path d="M248.1 261.1l5.3-0.9l0.3 1.7l-5.2 1z" fill="#9fa0ab"/><path d="M292.8 259.3l5.4 1.4l-0.9 1.1l-5.2-1.4z" fill="#8a8a92"/><path d="M224 293l3.6-2.2l1.1 5.3l-3.5 2.2z" fill="#73748b"/><path d="M221.3 262.3l5.3-2.3l1.2 0.7l-5.2 2.2z" fill="#69696d"/><path d="M307.8 300.8l3.2 2.2l-2.9 2.9l-2.9-2z" fill="#adadb4"/><path d="M228.9 261.6l5.3-1.9l0.9 1l-5.2 1.9z" fill="#8a8a92"/><path d="M227 285.1l3.9-2.1l0.6 5.8l-3.9 2z" fill="#5e5f75"/><path d="M309.6 296.8l3.3 2.3l-1.9 3.9l-3.2-2.2z" fill="#ababb1"/><path d="M239.2 268.8l4.7-1.4l0.2 5.2l-4.7 1.4z" fill="#5c5d6b"/><path d="M299.7 274.5l4.3 1.8l-0.3 5.5l-4.4-1.7z" fill="#7a7a7e"/><path d="M285.8 262.2l5.1 1.1l-0.5 3.3l-5-1z" fill="#909095"/><path d="M242.1 261.3l5.3-1.3l0.7 1.1l-5.2 1.2z" fill="#8a8a92"/><path d="M229.8 305.2l3.1-2l2.3-0.3l-2.9 1.8z" fill="#4f4f52"/><path d="M306.4 259.3l5.3 2.1l-1.2 1l-5.1-2z" fill="#8a8a92"/><path d="M286.1 260.5l5.2 1l-0.4 1.8l-5.1-1.1z" fill="#a5a5ab"/><path d="M236.1 261.8l5.2-1.6l0.8 1.1l-5.1 1.5z" fill="#8a8a92"/><path d="M299 259.7l5.3 1.7l-1 1l-5.1-1.7z" fill="#8a8a92"/><path d="M243.4 264.1l5.1-1.2l0.4 3.3l-5 1.2z" fill="#7d7d8a"/><path d="M230.6 277.5l4.2-1.9l0.4 5.6l-4.3 1.8z" fill="#565769"/><path d="M224 304.4l3-2.2l2.8 3l-2.8 2.1z" fill="#a1a2b7"/><path d="M242.9 262.3l5.2-1.2l0.4 1.8l-5.1 1.2z" fill="#a1a1ae"/><path d="M222 300.6l3.2-2.3l1.8 3.9l-3 2.2z" fill="#9293ab"/><path d="M292.1 260.4l5.2 1.4l-0.9 1l-5.1-1.3z" fill="#8a8a92"/><path d="M229.9 262.6l5.2-1.9l1 1.1l-5.1 1.8z" fill="#8a8a92"/><path d="M295.2 267.9l4.7 1.5l-0.2 5.1l-4.6-1.5z" fill="#7d7d82"/><path d="M222.6 262.9l5.2-2.2l1.1 0.9l-5.1 2.3z" fill="#8a8a92"/><path d="M290.9 263.3l4.9 1.2l-0.6 3.4l-4.8-1.3z" fill="#95959a"/><path d="M305.4 260.4l5.1 2l-1.2 1l-5-2z" fill="#8a8a92"/><path d="M310.8 291.6l3.3 2.3l-1.2 5.2l-3.3-2.3z" fill="#96969b"/><path d="M307.7 283.8l3.7 2.1l-0.6 5.7l-3.7-2.1z" fill="#848489"/><path d="M305.2 303.9l2.9 2l-2.6-0.5l-2.7-1.8z" fill="#515269"/><path d="M298.2 260.7l5.1 1.7l-1.1 1l-4.9-1.6z" fill="#8a8a92"/><path d="M237 262.8l5.1-1.5l0.8 1l-5 1.5z" fill="#8a8a92"/><path d="M312.9 260.8l5.1 2.4l-1.4 0.6l-4.9-2.4z" fill="#777886"/><path d="M234.6 270.5l4.6-1.7l0.2 5.2l-4.6 1.6z" fill="#5d5e6f"/><path d="M291.3 261.5l5.1 1.3l-0.6 1.7l-4.9-1.2z" fill="#a8a8ae"/><path d="M238.6 265.5l4.8-1.4l0.5 3.3l-4.7 1.4z" fill="#7e7f8e"/><path d="M304 276.3l4.1 1.9l-0.4 5.6l-4-2z" fill="#7c7c80"/><path d="M223.8 263.9l5.1-2.3l1 1l-4.9 2.2z" fill="#8a8a92"/><path d="M231 263.6l5.1-1.8l0.9 1l-4.9 1.8z" fill="#8a8a92"/><path d="M237.9 263.8l5-1.5l0.5 1.8l-4.8 1.4z" fill="#a2a2b1"/><path d="M227 307.3l2.8-2.1l2.5-0.5l-2.7 2z" fill="#58585b"/><path d="M223.4 287.4l3.6-2.3l0.6 5.7l-3.6 2.2z" fill="#5d5e75"/><path d="M311 303l2.8 2.3l-3.1 2.7l-2.6-2.1z" fill="#adadb3"/><path d="M220.8 295.4l3.2-2.4l1.2 5.3l-3.2 2.3z" fill="#71728b"/><path d="M304.3 261.4l5 2l-1.2 0.9l-4.8-1.9z" fill="#8a8a92"/><path d="M312.9 299.1l2.9 2.4l-2 3.8l-2.8-2.3z" fill="#aaaab0"/><path d="M216.3 264.9l5-2.6l1.3 0.6l-4.8 2.6z" fill="#6d6d71"/><path d="M297.3 261.8l4.9 1.6l-1 1l-4.8-1.6z" fill="#8a8a92"/><path d="M311.7 261.4l4.9 2.4l-1.3 0.9l-4.8-2.3z" fill="#8a8a92"/><path d="M226.6 279.6l4-2.1l0.3 5.5l-3.9 2.1z" fill="#55566b"/><path d="M299.9 269.4l4.4 1.7l-0.3 5.2l-4.3-1.8z" fill="#808085"/><path d="M295.8 264.5l4.7 1.6l-0.6 3.3l-4.7-1.5z" fill="#98989e"/><path d="M221.3 306.8l2.7-2.4l3 2.9l-2.5 2.2z" fill="#9fa0b6"/><path d="M225 264.8l4.9-2.2l1.1 1l-4.7 2.1z" fill="#8a8a92"/><path d="M232.1 264.6l4.9-1.8l0.9 1l-4.7 1.8z" fill="#8a8a92"/><path d="M296.4 262.8l4.8 1.6l-0.7 1.7l-4.7-1.6z" fill="#ababb1"/><path d="M190.6 367.2l-0.2-7.2l0-10l0.2 7.3z" fill="#49494c" stroke="#0c0c0c" stroke-width="0.55"/><path d="M219.2 303.1l2.8-2.5l2 3.8l-2.7 2.4z" fill="#9091aa"/><path d="M303.3 262.4l4.8 1.9l-1.1 1l-4.8-1.9z" fill="#8a8a92"/><path d="M233.9 267.2l4.7-1.7l0.6 3.3l-4.6 1.7z" fill="#7f8091"/><path d="M230.3 272.3l4.3-1.8l0.2 5.1l-4.2 1.9z" fill="#5d5e71"/><path d="M217.8 265.5l4.8-2.6l1.2 1l-4.7 2.4z" fill="#8a8a92"/><path d="M308.1 305.9l2.6 2.1l-2.8-0.6l-2.4-2z" fill="#575870"/><path d="M310.5 262.4l4.8 2.3l-1.3 0.9l-4.7-2.2z" fill="#8a8a92"/><path d="M233.2 265.6l4.7-1.8l0.7 1.7l-4.7 1.7z" fill="#a2a3b3"/><path d="M311.4 285.9l3.5 2.3l-0.8 5.7l-3.3-2.3z" fill="#848489"/><path d="M314.1 293.9l3.1 2.4l-1.4 5.2l-2.9-2.4z" fill="#94949a"/><path d="M226.3 265.7l4.7-2.1l1.1 1l-4.6 2z" fill="#8a8a92"/><path d="M308.1 278.2l3.8 2.2l-0.5 5.5l-3.7-2.1z" fill="#7c7c81"/><path d="M318 263.2l4.7 2.7l-1.5 0.5l-4.6-2.6z" fill="#7a7b8a"/><path d="M224.5 309.5l2.5-2.2l2.6-0.6l-2.3 2.1z" fill="#606064"/><path d="M302.2 263.4l4.8 1.9l-1.2 0.9l-4.6-1.8z" fill="#8a8a92"/><path d="M219.1 266.3l4.7-2.4l1.2 0.9l-4.5 2.4z" fill="#8a8a92"/><path d="M300.5 266.1l4.5 1.8l-0.7 3.2l-4.4-1.7z" fill="#9b9ba1"/><path d="M309.3 263.4l4.7 2.2l-1.3 0.9l-4.6-2.2z" fill="#8a8a92"/><path d="M220.1 289.8l3.3-2.4l0.6 5.6l-3.2 2.4z" fill="#5b5c75"/><path d="M313.8 305.3l2.4 2.4l-3.2 2.6l-2.3-2.3z" fill="#ababb1"/><path d="M304.3 271.1l4.1 2l-0.3 5.1l-4.1-1.9z" fill="#828287"/><path d="M217.9 298l2.9-2.6l1.2 5.2l-2.8 2.5z" fill="#6e6f8a"/><path d="M301.2 264.4l4.6 1.8l-0.8 1.7l-4.5-1.8z" fill="#adadb3"/><path d="M315.8 301.5l2.6 2.5l-2.2 3.7l-2.4-2.4z" fill="#a8a8ae"/><path d="M222.9 281.9l3.7-2.3l0.4 5.5l-3.6 2.3z" fill="#54556c"/><path d="M227.5 266.6l4.6-2l1.1 1l-4.5 1.9z" fill="#8a8a92"/><path d="M229.5 269.1l4.4-1.9l0.7 3.3l-4.3 1.8z" fill="#7f8094"/><path d="M211.8 267.8l4.5-2.9l1.5 0.6l-4.5 2.7z" fill="#717176"/><path d="M316.6 263.8l4.6 2.6l-1.4 0.8l-4.5-2.5z" fill="#8a8a92"/><path d="M220.5 267.2l4.5-2.4l1.3 0.9l-4.5 2.3z" fill="#8a8a92"/><path d="M226.3 274.4l4-2.1l0.3 5.2l-4 2.1z" fill="#5d5e73"/><path d="M219 309.3l2.3-2.5l3.2 2.7l-2.2 2.3z" fill="#9d9eb5"/><path d="M308.1 264.3l4.6 2.2l-1.3 0.9l-4.4-2.1z" fill="#8a8a92"/><path d="M228.7 267.5l4.5-1.9l0.7 1.6l-4.4 1.9z" fill="#a2a3b5"/><path d="M310.7 308l2.3 2.3l-2.9-0.8l-2.2-2.1z" fill="#5d5e77"/><path d="M216.8 305.7l2.4-2.6l2.1 3.7l-2.3 2.5z" fill="#8d8ea9"/><path d="M315.3 264.7l4.5 2.5l-1.5 0.9l-4.3-2.5z" fill="#8a8a92"/><path d="M213.3 268.2l4.5-2.7l1.3 0.8l-4.3 2.7z" fill="#8a8a92"/><path d="M314.9 288.2l3 2.5l-0.7 5.6l-3.1-2.4z" fill="#838388"/><path d="M221.8 268l4.5-2.3l1.2 0.9l-4.3 2.3z" fill="#8a8a92"/><path d="M307 265.3l4.4 2.1l-1.3 0.9l-4.3-2.1z" fill="#8a8a92"/><path d="M317.2 296.3l2.6 2.6l-1.4 5.1l-2.6-2.5z" fill="#929297"/><path d="M305 267.9l4.2 2l-0.8 3.2l-4.1-2z" fill="#9d9da2"/><path d="M311.9 280.4l3.4 2.3l-0.4 5.5l-3.5-2.3z" fill="#7c7c81"/><path d="M222.3 311.8l2.2-2.3l2.8-0.7l-2 2.2z" fill="#68686c"/><path d="M308.4 273.1l3.8 2.1l-0.3 5.2l-3.8-2.2z" fill="#838388"/><path d="M305.8 266.2l4.3 2.1l-0.9 1.6l-4.2-2z" fill="#aeaeb4"/><path d="M314 265.6l4.3 2.5l-1.4 0.8l-4.2-2.4z" fill="#8a8a92"/><path d="M214.8 269l4.3-2.7l1.4 0.9l-4.2 2.6z" fill="#8a8a92"/><path d="M316.2 307.7l2.1 2.6l-3.4 2.4l-1.9-2.4z" fill="#a9a9af"/><path d="M322.7 265.9l4.3 2.9l-1.6 0.5l-4.2-2.9z" fill="#7d7d8d"/><path d="M217.1 292.4l3-2.6l0.7 5.6l-2.9 2.6z" fill="#5c5e78"/><path d="M223.2 268.9l4.3-2.3l1.2 0.9l-4.2 2.2z" fill="#8a8a92"/><path d="M225.5 271.3l4-2.2l0.8 3.2l-4 2.1z" fill="#7e7f95"/><path d="M219.6 284.3l3.3-2.4l0.5 5.5l-3.3 2.4z" fill="#53546d"/><path d="M215.4 300.7l2.5-2.7l1.3 5.1l-2.4 2.6z" fill="#6b6c88"/><path d="M318.4 304l2.2 2.7l-2.3 3.6l-2.1-2.6z" fill="#a6a6ac"/><path d="M222.6 276.7l3.7-2.3l0.3 5.2l-3.7 2.3z" fill="#5b5c73"/><path d="M224.5 269.7l4.2-2.2l0.8 1.6l-4 2.2z" fill="#a2a3b6"/><path d="M312.7 266.5l4.2 2.4l-1.4 0.8l-4.1-2.3z" fill="#8a8a92"/><path d="M216.3 269.8l4.2-2.6l1.3 0.8l-4.1 2.6z" fill="#8a8a92"/><path d="M217.1 312l1.9-2.7l3.3 2.5l-1.8 2.5z" fill="#9b9cb3"/><path d="M321.2 266.4l4.2 2.9l-1.6 0.7l-4-2.8z" fill="#8a8a92"/><path d="M313 310.3l1.9 2.4l-3-0.9l-1.8-2.3z" fill="#63647e"/><path d="M207.6 270.8l4.2-3l1.5 0.4l-4 3z" fill="#75757a"/><path d="M214.8 308.5l2-2.8l2.2 3.6l-1.9 2.7z" fill="#898ba6"/><path d="M309.2 269.9l3.9 2.2l-0.9 3.1l-3.8-2.1z" fill="#9d9da3"/><path d="M311.4 267.4l4.1 2.3l-1.5 0.8l-3.9-2.2z" fill="#8a8a92"/><path d="M217.7 270.6l4.1-2.6l1.4 0.9l-4 2.4z" fill="#8a8a92"/><path d="M328.6 270.4l3.9 3.2l-1.7-1.6l-3.8-3.2z" fill="#595a74"/><path d="M319.8 267.2l4 2.8l-1.5 0.8l-4-2.7z" fill="#8a8a92"/><path d="M190.6 357.3l-0.2-7.3l0-9.9l0.2 7.3z" fill="#49494c" stroke="#0c0c0c" stroke-width="0.55"/><path d="M317.9 290.7l2.7 2.7l-0.8 5.5l-2.6-2.6z" fill="#818185"/><path d="M220.5 314.3l1.8-2.5l3-0.8l-1.7 2.3z" fill="#707075"/><path d="M315.3 282.7l3.1 2.5l-0.5 5.5l-3-2.5z" fill="#7b7b7f"/><path d="M209.3 271.2l4-3l1.5 0.8l-3.9 2.9z" fill="#8a8a92"/><path d="M310.1 268.3l3.9 2.2l-0.9 1.6l-3.9-2.2z" fill="#aeaeb5"/><path d="M345.6 364.6l-1.8 7.3l0-10l1.8-7.2z" fill="#7b7c9e" stroke="#0c0c0c" stroke-width="0.55"/><path d="M319.8 298.9l2.2 2.8l-1.4 5l-2.2-2.7z" fill="#8f8f94"/><path d="M312.2 275.2l3.4 2.4l-0.3 5.1l-3.4-2.3z" fill="#838387"/><path d="M221.7 273.6l3.8-2.3l0.8 3.1l-3.7 2.3z" fill="#7d7e96"/><path d="M219.2 271.3l4-2.4l1.3 0.8l-3.8 2.4z" fill="#8a8a92"/><path d="M318.3 268.1l4 2.7l-1.6 0.7l-3.8-2.6z" fill="#8a8a92"/><path d="M318.3 310.3l1.7 2.6l-3.5 2.3l-1.6-2.5z" fill="#a7a7ad"/><path d="M210.9 271.9l3.9-2.9l1.5 0.8l-3.8 2.8z" fill="#8a8a92"/><path d="M214.6 295.2l2.5-2.8l0.8 5.6l-2.5 2.7z" fill="#646682"/><path d="M202.3 275.8l3.7-3.3l1.6-1.7l-3.7 3.3z" fill="#555559"/><path d="M216.6 287l3-2.7l0.5 5.5l-3 2.6z" fill="#5c5e78"/><path d="M220.7 272.1l3.8-2.4l1 1.6l-3.8 2.3z" fill="#a1a2b6"/><path d="M219.3 279.2l3.3-2.5l0.3 5.2l-3.3 2.4z" fill="#595a73"/><path d="M213.3 303.5l2.1-2.8l1.4 5l-2 2.8z" fill="#696b88"/><path d="M327 268.8l3.8 3.2l-1.7 0.3l-3.7-3z" fill="#808091"/><path d="M320.6 306.7l1.8 2.8l-2.4 3.4l-1.7-2.6z" fill="#a2a2a8"/><path d="M316.9 268.9l3.8 2.6l-1.5 0.8l-3.7-2.6z" fill="#8a8a92"/><path d="M314.9 312.7l1.6 2.5l-3.1-1.1l-1.5-2.3z" fill="#696a85"/><path d="M212.5 272.6l3.8-2.8l1.4 0.8l-3.7 2.7z" fill="#8a8a92"/><path d="M192.7 374.4l-2.1-7.2l0-9.9l2.1 7.2z" fill="#57575a" stroke="#0c0c0c" stroke-width="0.55"/><path d="M215.5 314.7l1.6-2.7l3.4 2.3l-1.5 2.5z" fill="#9899b1"/><path d="M313.1 272.1l3.5 2.4l-1 3.1l-3.4-2.4z" fill="#9d9da3"/><path d="M325.4 269.3l3.7 3l-1.6 0.7l-3.7-3z" fill="#8a8a92"/><path d="M315.5 269.7l3.7 2.6l-1.6 0.7l-3.6-2.5z" fill="#8a8a92"/><path d="M213.1 311.3l1.7-2.8l2.3 3.5l-1.6 2.7z" fill="#8587a3"/><path d="M265.7 281.1l3.4-0.1l-0.1 0.4l-3 0.1z" fill="#3f3f46"/><path d="M214 273.3l3.7-2.7l1.5 0.7l-3.6 2.7z" fill="#8a8a92"/><path d="M203.9 274.1l3.7-3.3l1.7 0.4l-3.6 3.2z" fill="#79797e"/><path d="M269.1 281l3.4 0.1l-0.6 0.4l-2.9-0.1z" fill="#42424b"/><path d="M219 316.8l1.5-2.5l3.1-1l-1.4 2.3z" fill="#78787d"/><path d="M262.4 281.3l3.3-0.2l0.3 0.4l-2.9 0.2z" fill="#3d3d42"/><path d="M314 270.5l3.6 2.5l-1 1.5l-3.5-2.4z" fill="#aeaeb4"/><path d="M272.5 281.1l3.3 0.3l-1 0.4l-2.9-0.3z" fill="#454650"/><path d="M318.4 285.2l2.7 2.7l-0.5 5.5l-2.7-2.7z" fill="#79797d"/><path d="M320.6 293.4l2.3 2.8l-0.9 5.5l-2.2-2.8z" fill="#7d7d82"/><path d="M259.1 281.7l3.3-0.4l0.7 0.4l-2.9 0.3z" fill="#3b3b3f"/><path d="M315.6 277.6l3.1 2.5l-0.3 5.1l-3.1-2.5z" fill="#818186"/><path d="M323.8 270l3.7 3l-1.7 0.7l-3.5-2.9z" fill="#8a8a92"/><path d="M218.3 276.2l3.4-2.6l0.9 3.1l-3.3 2.5z" fill="#7b7c96"/><path d="M275.8 281.4l3.3 0.5l-1.4 0.3l-2.9-0.4z" fill="#494955"/><path d="M322 301.7l1.8 2.8l-1.4 5l-1.8-2.8z" fill="#8b8b90"/><path d="M215.6 274l3.6-2.7l1.5 0.8l-3.5 2.6z" fill="#8a8a92"/><path d="M205.7 274.4l3.6-3.2l1.6 0.7l-3.5 3.1z" fill="#8a8a92"/><path d="M332.5 273.6l3.5 3.5l-1.8-1.8l-3.4-3.3z" fill="#5e5f7a"/><path d="M255.8 282.3l3.3-0.6l1.1 0.3l-2.8 0.5z" fill="#3a3a3c"/><path d="M320 312.9l1.3 2.7l-3.6 2.1l-1.2-2.5z" fill="#a4a4a9"/><path d="M217.2 274.7l3.5-2.6l1 1.5l-3.4 2.6z" fill="#a0a1b6"/><path d="M322.3 270.8l3.5 2.9l-1.6 0.6l-3.5-2.8z" fill="#8a8a92"/><path d="M279.1 281.9l3.2 0.6l-1.8 0.3l-2.8-0.6z" fill="#4c4d5a"/><path d="M214.1 289.7l2.5-2.7l0.5 5.4l-2.5 2.8z" fill="#646682"/><path d="M216.3 281.9l3-2.7l0.3 5.1l-3 2.7z" fill="#5c5e78"/><path d="M212.5 298l2.1-2.8l0.8 5.5l-2.1 2.8z" fill="#6c6d8b"/><path d="M252.6 283l3.2-0.7l1.6 0.2l-2.8 0.7z" fill="#404042"/><path d="M207.4 275l3.5-3.1l1.6 0.7l-3.4 3z" fill="#8a8a92"/><path d="M311.9 311.8l1.5 2.3l-1.9-4.1l-1.4-2.2z" fill="#727393"/><path d="M316.5 315.2l1.2 2.5l-3.2-1.2l-1.1-2.4z" fill="#6f708b"/><path d="M211.6 306.4l1.7-2.9l1.5 5l-1.7 2.8z" fill="#6f7190"/><path d="M322.4 309.5l1.3 2.8l-2.4 3.3l-1.3-2.7z" fill="#9e9ea4"/><path d="M320.7 271.5l3.5 2.8l-1.7 0.7l-3.3-2.7z" fill="#8a8a92"/><path d="M282.3 282.5l3.1 0.8l-2.2 0.2l-2.7-0.7z" fill="#50515f"/><path d="M214.3 317.4l1.2-2.7l3.5 2.1l-1 2.6z" fill="#9596ae"/><path d="M199 279.4l3.3-3.6l1.6-1.7l-3.2 3.5z" fill="#5f5f62"/><path d="M209.1 275.6l3.4-3l1.5 0.7l-3.2 2.9z" fill="#8a8a92"/><path d="M330.8 272l3.4 3.3l-1.8 0.3l-3.3-3.3z" fill="#828394"/><path d="M249.6 283.9l3-0.9l2 0.2l-2.6 0.8z" fill="#464649"/><path d="M316.6 274.5l3.2 2.6l-1.1 3l-3.1-2.5z" fill="#9c9ca2"/><path d="M222.2 315.6l1.4-2.3l1.8-4.1l-1.3 2.3z" fill="#5e5e62"/><path d="M319.2 272.3l3.3 2.7l-1.6 0.7l-3.3-2.7z" fill="#8a8a92"/><path d="M218 319.4l1-2.6l3.2-1.2l-1 2.4z" fill="#808085"/><path d="M285.4 283.3l2.9 1l-2.6 0l-2.5-0.8z" fill="#545565"/><path d="M211.9 314.2l1.2-2.9l2.4 3.4l-1.2 2.7z" fill="#8183a0"/><path d="M210.8 276.2l3.2-2.9l1.6 0.7l-3.2 2.8z" fill="#8a8a92"/><path d="M317.6 273l3.3 2.7l-1.1 1.4l-3.2-2.6z" fill="#aeaeb4"/><path d="M329.1 272.3l3.3 3.3l-1.7 0.6l-3.2-3.2z" fill="#8a8a92"/><path d="M318.7 280.1l2.8 2.7l-0.4 5.1l-2.7-2.7z" fill="#7f7f84"/><path d="M246.7 285l2.9-1.1l2.4 0.1l-2.6 0.9z" fill="#4d4d50"/><path d="M190.6 347.4l-0.2-7.3l0-9.9l0.2 7.3z" fill="#49494c" stroke="#0c0c0c" stroke-width="0.55"/><path d="M321.1 287.9l2.3 2.8l-0.5 5.5l-2.3-2.8z" fill="#75757a"/><path d="M215.2 278.8l3.1-2.6l1 3l-3 2.7z" fill="#797a95"/><path d="M322.9 296.2l1.8 2.9l-0.9 5.4l-1.8-2.8z" fill="#79797e"/><path d="M200.7 277.6l3.2-3.5l1.8 0.3l-3.1 3.4z" fill="#7d7d82"/><path d="M345.6 354.7l-1.8 7.2l0-9.9l1.8-7.2z" fill="#7b7c9e" stroke="#0c0c0c" stroke-width="0.55"/><path d="M212.4 276.8l3.2-2.8l1.6 0.7l-3.1 2.8z" fill="#8a8a92"/><path d="M327.5 273l3.2 3.2l-1.8 0.5l-3.1-3z" fill="#8a8a92"/><path d="M323.8 304.5l1.5 3l-1.6 4.8l-1.3-2.8z" fill="#86868b"/><path d="M288.3 284.3l2.8 1.1l-2.9-0.1l-2.5-1z" fill="#595a6b"/><path d="M321.3 315.6l0.9 2.8l-3.6 1.9l-0.9-2.6z" fill="#a0a0a6"/><path d="M214.1 277.5l3.1-2.8l1.1 1.5l-3.1 2.6z" fill="#9e9fb6"/><path d="M313.4 314.1l1.1 2.4l-1.9-4.2l-1.1-2.3z" fill="#747696"/><path d="M213.7 284.7l2.6-2.8l0.3 5.1l-2.5 2.7z" fill="#646682"/><path d="M202.6 277.8l3.1-3.4l1.7 0.6l-3 3.3z" fill="#8a8a92"/><path d="M325.8 273.7l3.1 3l-1.7 0.6l-3-3z" fill="#8a8a92"/><path d="M211.9 292.6l2.2-2.9l0.5 5.5l-2.1 2.8z" fill="#6c6d8b"/><path d="M244 286.2l2.7-1.2l2.7-0.1l-2.4 1.1z" fill="#535357"/><path d="M266 281.5l3-0.1l-0.2 1.9l-2.5 0.1z" fill="#67676f"/><path d="M317.7 317.7l0.9 2.6l-3.3-1.4l-0.8-2.4z" fill="#747691"/><path d="M269 281.4l2.9 0.1l-0.6 1.9l-2.5-0.1z" fill="#686871"/><path d="M210.8 301l1.7-3l0.8 5.5l-1.7 2.9z" fill="#727393"/><path d="M263.1 281.7l2.9-0.2l0.3 1.9l-2.4 0.1z" fill="#65656c"/><path d="M336 277.1l2.9 3.6l-1.8-1.9l-2.9-3.5z" fill="#62637f"/><path d="M271.9 281.5l2.9 0.3l-1.1 1.8l-2.4-0.2z" fill="#6a6a74"/><path d="M260.2 282l2.9-0.3l0.8 1.8l-2.5 0.3z" fill="#64646a"/><path d="M204.4 278.3l3-3.3l1.7 0.6l-3 3.2z" fill="#8a8a92"/><path d="M210.4 309.4l1.2-3l1.5 4.9l-1.2 2.9z" fill="#747696"/><path d="M323.7 312.3l1 2.9l-2.5 3.2l-0.9-2.8z" fill="#99999e"/><path d="M221.2 318l1-2.4l1.9-4.1l-1 2.3z" fill="#68686c"/><path d="M213.6 320.3l0.7-2.9l3.7 2l-0.8 2.6z" fill="#9192ab"/><path d="M324.2 274.3l3 3l-1.8 0.6l-2.9-2.9z" fill="#8a8a92"/><path d="M274.8 281.8l2.9 0.4l-1.6 1.8l-2.4-0.4z" fill="#6c6c77"/><path d="M192.7 364.5l-2.1-7.2l0-9.9l2.1 7.2z" fill="#57575a" stroke="#0c0c0c" stroke-width="0.55"/><path d="M257.4 282.5l2.8-0.5l1.2 1.8l-2.4 0.4z" fill="#636368"/><path d="M291.1 285.4l2.6 1.2l-3.2-0.2l-2.3-1.1z" fill="#5d5e70"/><path d="M319.8 277.1l2.7 2.7l-1 3l-2.8-2.7z" fill="#9a9a9f"/><path d="M343.8 371.9l-3.6 6.9l0-9.9l3.6-7z" fill="#737594" stroke="#0c0c0c" stroke-width="0.55"/><path d="M217.2 322l0.8-2.6l3.2-1.4l-0.7 2.5z" fill="#87878c"/><path d="M206.1 278.8l3-3.2l1.7 0.6l-2.9 3.1z" fill="#8a8a92"/><path d="M277.7 282.2l2.8 0.6l-2 1.6l-2.4-0.4z" fill="#6e6e7a"/><path d="M241.4 287.5l2.6-1.3l3-0.2l-2.2 1.1z" fill="#5a5a5e"/><path d="M322.5 275l2.9 2.9l-1.7 0.6l-2.8-2.8z" fill="#8a8a92"/><path d="M254.6 283.2l2.8-0.7l1.6 1.7l-2.3 0.6z" fill="#626267"/><path d="M320.9 275.7l2.8 2.8l-1.2 1.3l-2.7-2.7z" fill="#acacb2"/><path d="M196.2 283.1l2.8-3.7l1.7-1.8l-2.6 3.6z" fill="#68686c"/><path d="M334.2 275.3l2.9 3.5l-1.9 0.2l-2.8-3.4z" fill="#858697"/><path d="M211.1 317.1l0.8-2.9l2.4 3.2l-0.7 2.9z" fill="#7c7e9c"/><path d="M207.9 279.3l2.9-3.1l1.6 0.6l-2.7 3z" fill="#8a8a92"/><path d="M280.5 282.8l2.7 0.7l-2.4 1.5l-2.3-0.6z" fill="#70717d"/><path d="M321.5 282.8l2.3 2.9l-0.4 5l-2.3-2.8z" fill="#7c7c80"/><path d="M212.6 281.7l2.6-2.9l1.1 3.1l-2.6 2.8z" fill="#757793"/><path d="M323.4 290.7l1.9 3l-0.6 5.4l-1.8-2.9z" fill="#717175"/><path d="M252 284l2.6-0.8l2.1 1.6l-2.2 0.7z" fill="#626266"/><path d="M293.7 286.6l2.5 1.4l-3.6-0.4l-2.1-1.2z" fill="#626376"/><path d="M324.7 299.1l1.4 2.9l-0.8 5.5l-1.5-3z" fill="#747478"/><path d="M314.5 316.5l0.8 2.4l-2-4.2l-0.7-2.4z" fill="#767898"/><path d="M332.4 275.6l2.8 3.4l-1.8 0.5l-2.7-3.3z" fill="#8a8a92"/><path d="M209.7 279.8l2.7-3l1.7 0.7l-2.7 2.9z" fill="#8a8a92"/><path d="M196.7 381.3l-4-6.9l0-9.9l4 6.9z" fill="#626265" stroke="#0c0c0c" stroke-width="0.55"/><path d="M322.2 318.4l0.5 2.9l-3.7 1.7l-0.4-2.7z" fill="#9c9ca1"/><path d="M283.2 283.5l2.5 0.8l-2.8 1.4l-2.1-0.7z" fill="#737380"/><path d="M211.4 280.4l2.7-2.9l1.1 1.3l-2.6 2.9z" fill="#9c9db4"/><path d="M325.3 307.5l0.9 3l-1.5 4.7l-1-2.9z" fill="#808085"/><path d="M239.1 289l2.3-1.5l3.4-0.4l-2 1.3z" fill="#616165"/><path d="M330.7 276.2l2.7 3.3l-1.8 0.5l-2.7-3.3z" fill="#8a8a92"/><path d="M318.6 320.3l0.4 2.7l-3.3-1.6l-0.4-2.5z" fill="#7a7b97"/><path d="M249.4 284.9l2.6-0.9l2.5 1.5l-2.1 0.7z" fill="#66666a"/><path d="M198.1 281.2l2.6-3.6l1.9 0.2l-2.6 3.5z" fill="#818185"/><path d="M211.5 287.6l2.2-2.9l0.4 5l-2.2 2.9z" fill="#6c6d8b"/><path d="M210.2 295.6l1.7-3l0.6 5.4l-1.7 3z" fill="#727393"/><path d="M220.5 320.5l0.7-2.5l1.9-4.2l-0.6 2.4z" fill="#717175"/><path d="M209.5 304l1.3-3l0.8 5.4l-1.2 3z" fill="#777999"/><path d="M328.9 276.7l2.7 3.3l-1.9 0.4l-2.5-3.1z" fill="#8a8a92"/><path d="M285.7 284.3l2.5 1l-3.2 1.2l-2.1-0.8z" fill="#757683"/><path d="M200 281.3l2.6-3.5l1.8 0.5l-2.6 3.4z" fill="#8a8a92"/><path d="M213.2 323.1l0.4-2.8l3.6 1.7l-0.3 2.7z" fill="#8d8ea8"/><path d="M303.2 294l1.9 1.8l-3-2.9l-1.7-1.7z" fill="#60617d"/><path d="M296.2 288l2.2 1.5l-3.9-0.6l-1.9-1.3z" fill="#67687c"/><path d="M324.7 315.2l0.5 3l-2.5 3.1l-0.5-2.9z" fill="#939399"/><path d="M209.6 312.4l0.8-3l1.5 4.8l-0.8 2.9z" fill="#787a9b"/><path d="M216.9 324.7l0.3-2.7l3.3-1.5l-0.3 2.5z" fill="#8e8e93"/><path d="M247 286l2.4-1.1l3 1.3l-2 0.9z" fill="#6a6a6e"/><path d="M322.5 279.8l2.4 2.9l-1.1 3l-2.3-2.9z" fill="#97979c"/><path d="M327.2 277.3l2.5 3.1l-1.8 0.5l-2.5-3z" fill="#8a8a92"/><path d="M266.3 283.4l2.5-0.1l-0.1 2.4l-2.1 0z" fill="#7a7a83"/><path d="M268.8 283.3l2.5 0.1l-0.6 2.3l-2 0z" fill="#7b7b84"/><path d="M263.9 283.5l2.4-0.1l0.3 2.3l-2 0.1z" fill="#797a82"/><path d="M201.8 281.7l2.6-3.4l1.7 0.5l-2.4 3.3z" fill="#8a8a92"/><path d="M271.3 283.4l2.4 0.2l-1 2.3l-2-0.2z" fill="#7c7c85"/><path d="M338.9 280.7l2.4 3.7l-1.9-1.9l-2.3-3.7z" fill="#656683"/><path d="M236.9 290.6l2.2-1.6l3.7-0.6l-1.9 1.4z" fill="#67676b"/><path d="M261.4 283.8l2.5-0.3l0.7 2.3l-2 0.3z" fill="#797980"/><path d="M230.3 297.1l1.8-1.9l2.9-2.9l-1.6 1.7z" fill="#5c5c5f"/><path d="M273.7 283.6l2.4 0.4l-1.4 2.2l-2-0.3z" fill="#7d7d87"/><path d="M325.4 277.9l2.5 3l-1.8 0.5l-2.4-2.9z" fill="#8a8a92"/><path d="M288.2 285.3l2.3 1.1l-3.6 1.1l-1.9-1z" fill="#787887"/><path d="M203.7 282.1l2.4-3.3l1.8 0.5l-2.4 3.2z" fill="#8a8a92"/><path d="M259 284.2l2.4-0.4l1.2 2.3l-2 0.3z" fill="#787980"/><path d="M323.7 278.5l2.4 2.9l-1.2 1.3l-2.4-2.9z" fill="#aaaab0"/><path d="M210.7 320.1l0.4-3l2.5 3.2l-0.4 2.8z" fill="#777997"/><path d="M315.3 318.9l0.4 2.5l-2-4.4l-0.4-2.3z" fill="#767899"/><path d="M276.1 284l2.4 0.4l-1.8 2.2l-2-0.4z" fill="#7e7e88"/><path d="M190.6 337.5l-0.2-7.3l0-9.9l0.2 7.3z" fill="#49494c" stroke="#0c0c0c" stroke-width="0.55"/><path d="M244.8 287.1l2.2-1.1l3.4 1.1l-1.9 1z" fill="#6e6e72"/><path d="M323.8 285.7l1.8 2.9l-0.3 5.1l-1.9-3z" fill="#77777c"/><path d="M210.4 284.7l2.2-3l1.1 3l-2.2 2.9z" fill="#717390"/><path d="M256.7 284.8l2.3-0.6l1.6 2.2l-1.9 0.5z" fill="#78787f"/><path d="M205.5 282.5l2.4-3.2l1.8 0.5l-2.4 3.2z" fill="#8a8a92"/><path d="M325.3 293.7l1.4 3l-0.6 5.3l-1.4-2.9z" fill="#6c6c70"/><path d="M345.6 344.8l-1.8 7.2l0-9.9l1.8-7.2z" fill="#7b7c9e" stroke="#0c0c0c" stroke-width="0.55"/><path d="M298.4 289.5l2 1.7l-4.2-0.9l-1.7-1.4z" fill="#6b6d82"/><path d="M278.5 284.4l2.3 0.6l-2.3 2.1l-1.8-0.5z" fill="#7f7f8a"/><path d="M337.1 278.8l2.3 3.7l-1.9 0l-2.3-3.5z" fill="#88899a"/><path d="M326.1 302l1 3.1l-0.9 5.4l-0.9-3z" fill="#6e6e72"/><path d="M312.6 312.3l0.7 2.4l-1.4-5.5l-0.8-2.3z" fill="#7e7fa2"/><path d="M322.7 321.3l0.1 2.8l-3.7 1.5l-0.1-2.6z" fill="#97979c"/><path d="M194 286.9l2.2-3.8l1.9-1.9l-2.2 3.7z" fill="#707075"/><path d="M319 323l0.1 2.6l-3.3-1.7l-0.1-2.5z" fill="#7f809c"/><path d="M254.5 285.5l2.2-0.7l2 2.1l-1.9 0.5z" fill="#78787e"/><path d="M207.3 283l2.4-3.2l1.7 0.6l-2.2 3z" fill="#8a8a92"/><path d="M305.1 295.8l1.6 2l-3.1-3.1l-1.5-1.8z" fill="#646582"/><path d="M290.5 286.4l2.1 1.2l-3.9 0.9l-1.8-1z" fill="#7a7b8a"/><path d="M209.2 283.4l2.2-3l1.2 1.3l-2.2 3z" fill="#999ab3"/><path d="M220.2 323l0.3-2.5l2-4.3l-0.3 2.4z" fill="#79797d"/><path d="M235 292.3l1.9-1.7l4-0.8l-1.7 1.5z" fill="#6e6e72"/><path d="M326.2 310.5l0.5 3l-1.5 4.7l-0.5-3z" fill="#79797e"/><path d="M335.2 279l2.3 3.5l-1.9 0.4l-2.2-3.4z" fill="#8a8a92"/><path d="M280.8 285l2.1 0.7l-2.6 2l-1.8-0.6z" fill="#80818b"/><path d="M209.8 290.6l1.7-3l0.4 5l-1.7 3z" fill="#727393"/><path d="M242.8 288.4l2-1.3l3.7 1l-1.7 1.1z" fill="#717176"/><path d="M252.4 286.2l2.1-0.7l2.3 1.9l-1.7 0.7z" fill="#78787d"/><path d="M228.8 299.1l1.5-2l3.1-3.1l-1.4 1.9z" fill="#656569"/><path d="M222.5 316.2l0.6-2.4l1.5-5.4l-0.6 2.3z" fill="#5b5b5f"/><path d="M208.9 298.6l1.3-3l0.6 5.4l-1.3 3z" fill="#777999"/><path d="M333.4 279.5l2.2 3.4l-1.9 0.4l-2.1-3.3z" fill="#8a8a92"/><path d="M213.3 326l-0.1-2.9l3.7 1.6l0.1 2.6z" fill="#898aa4"/><path d="M208.7 307.1l0.8-3.1l0.9 5.4l-0.8 3z" fill="#7b7d9e"/><path d="M217 327.3l-0.1-2.6l3.3-1.7l0.1 2.5z" fill="#949499"/><path d="M310.1 304.7l1 2.2l-2-5l-1.1-2.1z" fill="#797b9c"/><path d="M192.7 354.6l-2.1-7.2l0-9.9l2.1 7.2z" fill="#57575a" stroke="#0c0c0c" stroke-width="0.55"/><path d="M195.9 284.9l2.2-3.7l1.9 0.1l-2.1 3.6z" fill="#848489"/><path d="M282.9 285.7l2.1 0.8l-3 1.8l-1.7-0.6z" fill="#82828d"/><path d="M325.2 318.2l0.1 3l-2.5 2.9l-0.1-2.8z" fill="#8d8d92"/><path d="M331.6 280l2.1 3.3l-1.9 0.4l-2.1-3.3z" fill="#8a8a92"/><path d="M343.8 361.9l-3.6 7l0-9.9l3.6-7z" fill="#737594" stroke="#0c0c0c" stroke-width="0.55"/><path d="M300.4 291.2l1.7 1.7l-4.4-1.1l-1.5-1.5z" fill="#707187"/><path d="M209.2 315.5l0.4-3.1l1.5 4.7l-0.4 3z" fill="#7b7d9e"/><path d="M292.6 287.6l1.9 1.3l-4.2 0.7l-1.6-1.1z" fill="#7d7e8d"/><path d="M324.9 282.7l1.9 3l-1.2 2.9l-1.8-2.9z" fill="#939398"/><path d="M250.4 287.1l2-0.9l2.7 1.9l-1.7 0.7z" fill="#78787d"/><path d="M266.6 285.7l2.1 0l-0.2 2.5l-1.6 0z" fill="#84848d"/><path d="M268.7 285.7l2 0l-0.5 2.5l-1.7 0z" fill="#84858d"/><path d="M264.6 285.8l2-0.1l0.3 2.5l-1.7 0.1z" fill="#84848c"/><path d="M197.9 284.9l2.1-3.6l1.8 0.4l-2 3.5z" fill="#8a8a92"/><path d="M329.7 280.4l2.1 3.3l-1.8 0.4l-2.1-3.2z" fill="#8a8a92"/><path d="M270.7 285.7l2 0.2l-0.9 2.5l-1.6-0.2z" fill="#85858e"/><path d="M224.6 308.4l0.9-2.3l2.1-4.9l-0.9 2.1z" fill="#5c5c60"/><path d="M240.9 289.8l1.9-1.4l4 0.8l-1.6 1.1z" fill="#75757a"/><path d="M262.6 286.1l2-0.3l0.6 2.5l-1.6 0.2z" fill="#83848c"/><path d="M315.7 321.4l0.1 2.5l-2-4.5l-0.1-2.4z" fill="#767898"/><path d="M233.4 294l1.6-1.7l4.2-1l-1.4 1.5z" fill="#757579"/><path d="M272.7 285.9l2 0.3l-1.3 2.4l-1.6-0.2z" fill="#85858e"/><path d="M285 286.5l1.9 1l-3.3 1.6l-1.6-0.8z" fill="#83838f"/><path d="M306.7 297.8l1.3 2l-3.2-3.2l-1.2-1.9z" fill="#676986"/><path d="M199.8 285.2l2-3.5l1.9 0.4l-2 3.4z" fill="#8a8a92"/><path d="M260.6 286.4l2-0.3l1 2.4l-1.6 0.3z" fill="#83838b"/><path d="M327.9 280.9l2.1 3.2l-1.9 0.4l-2-3.1z" fill="#8a8a92"/><path d="M326.1 281.4l2 3.1l-1.3 1.2l-1.9-3z" fill="#a7a7ad"/><path d="M210.8 323.1l-0.1-3l2.5 3l0.1 2.9z" fill="#717391"/><path d="M313.3 314.7l0.4 2.3l-1.4-5.5l-0.4-2.3z" fill="#7e80a2"/><path d="M274.7 286.2l2 0.4l-1.7 2.3l-1.6-0.3z" fill="#86868f"/><path d="M248.5 288.1l1.9-1l3 1.7l-1.5 0.8z" fill="#78787d"/><path d="M258.7 286.9l1.9-0.5l1.4 2.4l-1.5 0.4z" fill="#83838b"/><path d="M201.7 285.5l2-3.4l1.8 0.4l-1.9 3.4z" fill="#8a8a92"/><path d="M208.6 287.7l1.8-3l1.1 2.9l-1.7 3z" fill="#6d6f8d"/><path d="M325.6 288.6l1.5 3l-0.4 5.1l-1.4-3z" fill="#727277"/><path d="M341.3 284.4l1.8 3.9l-1.9-2.1l-1.8-3.7z" fill="#676986"/><path d="M340.2 378.8l-5.3 6.6l0-9.9l5.3-6.6z" fill="#686986" stroke="#0c0c0c" stroke-width="0.55"/><path d="M294.5 288.9l1.7 1.4l-4.5 0.5l-1.4-1.2z" fill="#808191"/><path d="M196.7 371.4l-4-6.9l0-9.9l4 6.8z" fill="#626265" stroke="#0c0c0c" stroke-width="0.55"/><path d="M319.1 325.6l-0.3 2.7l-3.3-1.9l0.3-2.5z" fill="#8485a1"/><path d="M220.3 325.5l-0.1-2.5l2-4.4l0.1 2.4z" fill="#818185"/><path d="M276.7 286.6l1.8 0.5l-2 2.2l-1.5-0.4z" fill="#86868f"/><path d="M227.6 301.2l1.2-2.1l3.2-3.2l-1.1 1.9z" fill="#6e6e72"/><path d="M322.8 324.1l-0.4 2.9l-3.6 1.3l0.3-2.7z" fill="#929297"/><path d="M326.7 296.7l1 3l-0.6 5.4l-1-3.1z" fill="#656569"/><path d="M203.6 285.9l1.9-3.4l1.8 0.5l-1.8 3.2z" fill="#8a8a92"/><path d="M256.8 287.4l1.9-0.5l1.8 2.3l-1.5 0.4z" fill="#83838b"/><path d="M286.9 287.5l1.8 1l-3.6 1.4l-1.5-0.8z" fill="#848590"/><path d="M327.1 305.1l0.5 3.1l-0.9 5.3l-0.5-3z" fill="#67676b"/><path d="M302.1 292.9l1.5 1.8l-4.6-1.3l-1.3-1.6z" fill="#75768d"/><path d="M239.2 291.3l1.7-1.5l4.3 0.5l-1.4 1.3z" fill="#79797e"/><path d="M222.2 318.6l0.3-2.4l1.5-5.5l-0.3 2.3z" fill="#646468"/><path d="M278.5 287.1l1.8 0.6l-2.4 2.1l-1.4-0.5z" fill="#868790"/><path d="M311.1 306.9l0.8 2.3l-2.2-5.1l-0.6-2.2z" fill="#7b7d9e"/><path d="M205.5 286.2l1.8-3.2l1.9 0.4l-1.8 3.1z" fill="#8a8a92"/><path d="M246.8 289.2l1.7-1.1l3.4 1.5l-1.5 0.9z" fill="#78787d"/><path d="M207.4 286.5l1.8-3.1l1.2 1.3l-1.8 3z" fill="#9697b0"/><path d="M326.7 313.5l0.1 3.1l-1.5 4.6l-0.1-3z" fill="#727276"/><path d="M255.1 288.1l1.7-0.7l2.2 2.2l-1.4 0.5z" fill="#83838b"/><path d="M217.4 330l-0.4-2.7l3.3-1.8l0.4 2.5z" fill="#99999f"/><path d="M208.5 293.6l1.3-3l0.4 5l-1.3 3z" fill="#777999"/><path d="M339.4 282.5l1.8 3.7l-2 0l-1.7-3.7z" fill="#8b8b9d"/><path d="M232 295.9l1.4-1.9l4.4-1.2l-1.2 1.6z" fill="#7b7b80"/><path d="M213.8 328.8l-0.5-2.8l3.7 1.3l0.4 2.7z" fill="#85869f"/><path d="M280.3 287.7l1.7 0.6l-2.7 2l-1.4-0.5z" fill="#878791"/><path d="M202.3 387.7l-5.6-6.4l0-9.9l5.6 6.4z" fill="#69696d" stroke="#0c0c0c" stroke-width="0.55"/><path d="M192.4 290.8l1.6-3.9l1.9-2l-1.6 3.8z" fill="#79797d"/><path d="M208.1 301.8l0.8-3.2l0.6 5.4l-0.8 3.1z" fill="#7b7d9e"/><path d="M288.7 288.5l1.6 1.1l-3.9 1.3l-1.3-1z" fill="#868692"/><path d="M224 310.7l0.6-2.3l2.1-5.1l-0.6 2.2z" fill="#66666a"/><path d="M296.2 290.3l1.5 1.5l-4.7 0.2l-1.3-1.2z" fill="#838394"/><path d="M253.4 288.8l1.7-0.7l2.5 2l-1.4 0.6z" fill="#83838a"/><path d="M337.5 282.5l1.7 3.7l-1.9 0.3l-1.7-3.6z" fill="#8a8a92"/><path d="M308 299.8l1.1 2.1l-3.4-3.4l-0.9-1.9z" fill="#6a6b89"/><path d="M208.3 310.2l0.4-3.1l0.9 5.3l-0.4 3.1z" fill="#7e7fa2"/><path d="M325.3 321.2l-0.4 3l-2.5 2.8l0.4-2.9z" fill="#86868b"/><path d="M266.9 288.2l1.6 0l-0.1 2.4l-1.3 0.1z" fill="#8a8a92"/><path d="M268.5 288.2l1.7 0l-0.5 2.5l-1.3-0.1z" fill="#8a8a92"/><path d="M245.2 290.3l1.6-1.1l3.6 1.3l-1.2 1z" fill="#79797d"/><path d="M315.8 323.9l-0.3 2.5l-2-4.6l0.3-2.4z" fill="#747696"/><path d="M265.2 288.3l1.7-0.1l0.2 2.5l-1.3 0.1z" fill="#8a8a92"/><path d="M335.6 282.9l1.7 3.6l-1.9 0.3l-1.7-3.5z" fill="#8a8a92"/><path d="M270.2 288.2l1.6 0.2l-0.8 2.4l-1.3-0.1z" fill="#8a8a92"/><path d="M209.3 318.6l-0.1-3.1l1.5 4.6l0.1 3z" fill="#7d7ea0"/><path d="M263.6 288.5l1.6-0.2l0.6 2.5l-1.2 0.1z" fill="#8a8a92"/><path d="M282 288.3l1.6 0.8l-3 1.8l-1.3-0.6z" fill="#878891"/><path d="M237.8 292.8l1.4-1.5l4.6 0.3l-1.2 1.3z" fill="#7d7d82"/><path d="M326.8 285.7l1.5 3.1l-1.2 2.8l-1.5-3z" fill="#8e8e93"/><path d="M271.8 288.4l1.6 0.2l-1.2 2.4l-1.2-0.2z" fill="#8a8a92"/><path d="M262 288.8l1.6-0.3l1 2.4l-1.3 0.2z" fill="#8a8a92"/><path d="M313.7 317l0.1 2.4l-1.5-5.6l0-2.3z" fill="#7e7fa2"/><path d="M333.7 283.3l1.7 3.5l-2 0.3l-1.6-3.4z" fill="#8a8a92"/><path d="M343.6 291.5l1.3 4l-0.5-3.3l-1.3-3.9z" fill="#7d7fa1"/><path d="M251.9 289.6l1.5-0.8l2.8 1.9l-1.2 0.7z" fill="#83838a"/><path d="M303.6 294.7l1.2 1.9l-4.7-1.6l-1.1-1.6z" fill="#7a7b92"/><path d="M226.7 303.3l0.9-2.1l3.3-3.4l-0.8 2z" fill="#76767b"/><path d="M273.4 288.6l1.6 0.3l-1.5 2.3l-1.3-0.2z" fill="#8a8a92"/><path d="M194.3 288.7l1.6-3.8l2 0l-1.6 3.7z" fill="#88888d"/><path d="M260.5 289.2l1.5-0.4l1.3 2.3l-1.2 0.3z" fill="#8a8a92"/><path d="M190.6 327.6l-0.2-7.3l0-9.9l0.2 7.3z" fill="#49494c" stroke="#0c0c0c" stroke-width="0.55"/><path d="M290.3 289.6l1.4 1.2l-4.1 1l-1.2-0.9z" fill="#878794"/><path d="M331.8 283.7l1.6 3.4l-1.9 0.3l-1.5-3.3z" fill="#8a8a92"/><path d="M220.7 328l-0.4-2.5l2-4.5l0.4 2.3z" fill="#88888d"/><path d="M275 288.9l1.5 0.4l-1.8 2.2l-1.2-0.3z" fill="#8a8a92"/><path d="M211.3 326.1l-0.5-3l2.5 2.9l0.5 2.8z" fill="#6c6d8b"/><path d="M283.6 289.1l1.5 0.8l-3.3 1.7l-1.2-0.7z" fill="#888892"/><path d="M318.8 328.3l-0.8 2.6l-3.2-2.1l0.7-2.4z" fill="#888aa6"/><path d="M259 289.6l1.5-0.4l1.6 2.2l-1.1 0.4z" fill="#8a8a92"/><path d="M345.6 334.9l-1.8 7.2l0-9.9l1.8-7.2z" fill="#7b7c9e" stroke="#0c0c0c" stroke-width="0.55"/><path d="M196.3 288.6l1.6-3.7l1.9 0.3l-1.5 3.6z" fill="#8a8a92"/><path d="M328.1 284.5l1.5 3.1l-1.3 1.2l-1.5-3.1z" fill="#a4a4aa"/><path d="M330 284.1l1.5 3.3l-1.9 0.2l-1.5-3.1z" fill="#8a8a92"/><path d="M243.8 291.6l1.4-1.3l4 1.2l-1.2 1z" fill="#7b7b7f"/><path d="M230.9 297.8l1.1-1.9l4.6-1.5l-1 1.7z" fill="#818186"/><path d="M297.7 291.8l1.3 1.6l-4.9 0l-1.1-1.4z" fill="#858697"/><path d="M311.9 309.2l0.4 2.3l-2.2-5.2l-0.4-2.2z" fill="#7b7d9f"/><path d="M250.4 290.5l1.5-0.9l3.1 1.8l-1.2 0.7z" fill="#83838a"/><path d="M222.3 321l-0.1-2.4l1.5-5.6l0 2.3z" fill="#6d6d71"/><path d="M322.4 327l-0.7 2.8l-3.7 1.1l0.8-2.6z" fill="#8c8c91"/><path d="M276.5 289.3l1.4 0.5l-2.1 2.1l-1.1-0.4z" fill="#8a8a92"/><path d="M198.3 288.8l1.5-3.6l1.9 0.3l-1.5 3.6z" fill="#8a8a92"/><path d="M207.3 290.9l1.3-3.2l1.2 2.9l-1.3 3z" fill="#717392"/><path d="M327.1 291.6l1 3.1l-0.4 5l-1-3z" fill="#6c6c70"/><path d="M257.6 290.1l1.4-0.5l2 2.2l-1.2 0.4z" fill="#8a8a92"/><path d="M200.2 289.1l1.5-3.6l1.9 0.4l-1.5 3.4z" fill="#8a8a92"/><path d="M327.7 299.7l0.5 3.2l-0.6 5.3l-0.5-3.1z" fill="#5e5e62"/><path d="M236.6 294.4l1.2-1.6l4.8 0.1l-1 1.3z" fill="#818185"/><path d="M277.9 289.8l1.4 0.5l-2.4 2l-1.1-0.4z" fill="#8a8a92"/><path d="M285.1 289.9l1.3 1l-3.5 1.5l-1.1-0.8z" fill="#898993"/><path d="M190.8 298.1l1.1-4.1l0.5-3.2l-1.1 4z" fill="#5c5c60"/><path d="M327.6 308.2l0.1 3.1l-0.9 5.3l-0.1-3.1z" fill="#5f5f62"/><path d="M309.1 301.9l0.6 2.2l-3.4-3.6l-0.6-2z" fill="#6b6d8a"/><path d="M291.7 290.8l1.3 1.2l-4.3 0.9l-1.1-1.1z" fill="#888995"/><path d="M218.3 332.6l-0.9-2.6l3.3-2l0.8 2.4z" fill="#9e9ea4"/><path d="M202.1 289.3l1.5-3.4l1.9 0.3l-1.4 3.3z" fill="#8a8a92"/><path d="M256.2 290.7l1.4-0.6l2.2 2.1l-1 0.4z" fill="#8a8a92"/><path d="M223.7 313l0.3-2.3l2.1-5.2l-0.3 2.2z" fill="#6f6f73"/><path d="M249.2 291.5l1.2-1l3.4 1.6l-1 0.8z" fill="#83838a"/><path d="M326.8 316.6l-0.4 3l-1.5 4.6l0.4-3z" fill="#69696d"/><path d="M343.1 288.3l1.3 3.9l-2-2.1l-1.2-3.9z" fill="#696a88"/><path d="M206 289.7l1.4-3.2l1.2 1.2l-1.3 3.2z" fill="#9394ad"/><path d="M204.1 289.5l1.4-3.3l1.9 0.3l-1.4 3.2z" fill="#8a8a92"/><path d="M267.1 290.7l1.3-0.1l-0.1 2l-1 0z" fill="#8a8a92"/><path d="M214.7 331.6l-0.9-2.8l3.6 1.2l0.9 2.6z" fill="#80819a"/><path d="M268.4 290.6l1.3 0.1l-0.4 1.9l-1 0z" fill="#8a8a92"/><path d="M265.8 290.8l1.3-0.1l0.2 1.9l-1 0.1z" fill="#8a8a92"/><path d="M279.3 290.3l1.3 0.6l-2.7 1.9l-1-0.5z" fill="#8a8a92"/><path d="M242.6 292.9l1.2-1.3l4.2 0.9l-1 1.1z" fill="#7d7d81"/><path d="M304.8 296.6l0.9 1.9l-4.8-1.8l-0.8-1.7z" fill="#7e8097"/><path d="M269.7 290.7l1.3 0.1l-0.7 1.9l-1-0.1z" fill="#8a8a92"/><path d="M264.6 290.9l1.2-0.1l0.5 1.9l-1 0.1z" fill="#8a8a92"/><path d="M192.7 344.7l-2.1-7.2l0-9.9l2.1 7.1z" fill="#57575a" stroke="#0c0c0c" stroke-width="0.55"/><path d="M207.7 296.8l0.8-3.2l0.4 5l-0.8 3.2z" fill="#7b7d9e"/><path d="M271 290.8l1.2 0.2l-0.9 1.9l-1-0.2z" fill="#8a8a92"/><path d="M315.5 326.4l-0.7 2.4l-1.9-4.6l0.6-2.4z" fill="#727393"/><path d="M255 291.4l1.2-0.7l2.6 1.9l-1 0.5z" fill="#8a8a92"/><path d="M263.3 291.1l1.3-0.2l0.7 1.9l-0.9 0.2z" fill="#8a8a92"/><path d="M226.1 305.5l0.6-2.2l3.4-3.5l-0.6 2z" fill="#7e7e83"/><path d="M343.8 352l-3.6 7l0-9.9l3.6-7z" fill="#737594" stroke="#0c0c0c" stroke-width="0.55"/><path d="M286.4 290.9l1.2 0.9l-3.8 1.4l-0.9-0.8z" fill="#898993"/><path d="M272.2 291l1.3 0.2l-1.2 1.9l-1-0.2z" fill="#8a8a92"/><path d="M299 293.4l1.1 1.6l-5.1-0.3l-0.9-1.3z" fill="#88899a"/><path d="M207.7 304.9l0.4-3.1l0.6 5.3l-0.4 3.1z" fill="#7e80a2"/><path d="M262.1 291.4l1.2-0.3l1.1 1.9l-1 0.2z" fill="#8a8a92"/><path d="M313.8 319.4l-0.3 2.4l-1.5-5.7l0.3-2.3z" fill="#7c7e9f"/><path d="M324.9 324.2l-0.8 2.9l-2.4 2.7l0.7-2.8z" fill="#7e7e83"/><path d="M280.6 290.9l1.2 0.7l-3 1.7l-0.9-0.5z" fill="#8a8a92"/><path d="M273.5 291.2l1.2 0.3l-1.5 1.8l-0.9-0.2z" fill="#8a8a92"/><path d="M208.4 313.3l-0.1-3.1l0.9 5.3l0.1 3.1z" fill="#7f81a4"/><path d="M248 292.5l1.2-1l3.6 1.4l-0.9 0.8z" fill="#83848a"/><path d="M230.1 299.8l0.8-2l4.7-1.7l-0.7 1.7z" fill="#87878c"/><path d="M261 291.8l1.1-0.4l1.3 1.8l-0.9 0.3z" fill="#8a8a92"/><path d="M293 292l1.1 1.4l-4.5 0.6l-0.9-1.1z" fill="#8a8a97"/><path d="M253.8 292.1l1.2-0.7l2.8 1.7l-0.9 0.6z" fill="#8a8a92"/><path d="M341.2 286.2l1.2 3.9l-2-0.2l-1.2-3.7z" fill="#8d8ea0"/><path d="M209.8 321.6l-0.5-3l1.5 4.5l0.5 3z" fill="#7d7fa1"/><path d="M235.6 296.1l1-1.7l5-0.2l-0.8 1.4z" fill="#848489"/><path d="M274.7 291.5l1.1 0.4l-1.7 1.7l-0.9-0.3z" fill="#8a8a92"/><path d="M221.5 330.4l-0.8-2.4l2-4.7l0.7 2.4z" fill="#8e8e93"/><path d="M259.8 292.2l1.2-0.4l1.5 1.7l-0.8 0.3z" fill="#8a8a92"/><path d="M328.3 288.8l1 3.2l-1.2 2.7l-1-3.1z" fill="#88888d"/><path d="M339.2 286.2l1.2 3.7l-2 0.2l-1.1-3.6z" fill="#8a8a92"/><path d="M312.3 311.5l0 2.3l-2.1-5.3l-0.1-2.2z" fill="#7b7d9e"/><path d="M241.6 294.2l1-1.3l4.4 0.7l-0.8 1.1z" fill="#7e7e83"/><path d="M281.8 291.6l1.1 0.8l-3.3 1.5l-0.8-0.6z" fill="#8a8a92"/><path d="M191.3 294.8l1.1-4l1.9-2.1l-1 3.9z" fill="#808085"/><path d="M318 330.9l-1 2.6l-3.2-2.3l1-2.4z" fill="#8d8ea9"/><path d="M287.6 291.8l1.1 1.1l-4 1.1l-0.9-0.8z" fill="#8a8a94"/><path d="M222.7 323.3l-0.4-2.3l1.4-5.7l0.4 2.3z" fill="#747479"/><path d="M275.8 291.9l1.1 0.4l-2 1.6l-0.8-0.3z" fill="#8a8a92"/><path d="M337.3 286.5l1.1 3.6l-1.9 0.2l-1.1-3.5z" fill="#8a8a92"/><path d="M258.8 292.6l1-0.4l1.9 1.6l-0.9 0.4z" fill="#8a8a92"/><path d="M252.8 292.9l1-0.8l3.1 1.6l-0.8 0.6z" fill="#8a8a92"/><path d="M212.3 329l-1-2.9l2.5 2.7l0.9 2.8z" fill="#6b6d8b"/><path d="M340.2 368.9l-5.3 6.6l0-9.9l5.3-6.6z" fill="#686986" stroke="#0c0c0c" stroke-width="0.55"/><path d="M247 293.6l1-1.1l3.9 1.2l-0.8 0.9z" fill="#84848a"/><path d="M335.4 286.8l1.1 3.5l-2 0.2l-1.1-3.4z" fill="#8a8a92"/><path d="M196.7 361.4l-4-6.8l0-9.9l4 6.8z" fill="#626265" stroke="#0c0c0c" stroke-width="0.55"/><path d="M309.7 304.1l0.4 2.2l-3.4-3.8l-0.4-2z" fill="#6c6d8b"/><path d="M321.7 329.8l-1.2 2.8l-3.5 0.9l1-2.6z" fill="#86868b"/><path d="M276.9 292.3l1 0.5l-2.2 1.5l-0.8-0.4z" fill="#8a8a92"/><path d="M267.3 292.6l1 0l-0.1 1.7l-0.7 0z" fill="#8a8a92"/><path d="M268.3 292.6l1 0l-0.3 1.8l-0.8-0.1z" fill="#8a8a92"/><path d="M266.3 292.7l1-0.1l0.2 1.7l-0.8 0.1z" fill="#8a8a92"/><path d="M333.4 287.1l1.1 3.4l-1.9 0.2l-1.1-3.3z" fill="#8a8a92"/><path d="M305.7 298.5l0.6 2l-4.9-2.1l-0.5-1.7z" fill="#83849c"/><path d="M257.8 293.1l1-0.5l2 1.6l-0.7 0.4z" fill="#8a8a92"/><path d="M269.3 292.6l1 0.1l-0.6 1.7l-0.7 0z" fill="#8a8a92"/><path d="M265.3 292.8l1-0.1l0.4 1.7l-0.7 0.1z" fill="#8a8a92"/><path d="M282.9 292.4l0.9 0.8l-3.4 1.3l-0.8-0.6z" fill="#8a8a92"/><path d="M300.1 295l0.8 1.7l-5.2-0.5l-0.7-1.5z" fill="#8b8b9d"/><path d="M329.6 287.6l1 3.3l-1.3 1.1l-1-3.2z" fill="#a0a0a6"/><path d="M223.7 315.3l0-2.3l2.1-5.3l0.1 2.2z" fill="#77777b"/><path d="M270.3 292.7l1 0.2l-0.8 1.6l-0.8-0.1z" fill="#8a8a92"/><path d="M264.4 293l0.9-0.2l0.7 1.7l-0.7 0.1z" fill="#8a8a92"/><path d="M294.1 293.4l0.9 1.3l-4.7 0.4l-0.7-1.1z" fill="#8b8c99"/><path d="M331.5 287.4l1.1 3.3l-2 0.2l-1-3.3z" fill="#8a8a92"/><path d="M219.5 335.1l-1.2-2.5l3.2-2.2l1.1 2.4z" fill="#a3a3a9"/><path d="M271.3 292.9l1 0.2l-1.1 1.6l-0.7-0.2z" fill="#8a8a92"/><path d="M251.9 293.7l0.9-0.8l3.3 1.4l-0.7 0.7z" fill="#8a8a92"/><path d="M193.3 292.6l1-3.9l2-0.1l-1 3.8z" fill="#8b8b90"/><path d="M277.9 292.8l0.9 0.5l-2.4 1.4l-0.7-0.4z" fill="#8a8a92"/><path d="M344.9 295.5l0.7 4l-0.5-3.3l-0.7-4z" fill="#7e80a2"/><path d="M263.4 293.2l1-0.2l0.9 1.6l-0.7 0.2z" fill="#8a8a92"/><path d="M206.4 294.1l0.9-3.2l1.2 2.7l-0.8 3.2z" fill="#757797"/><path d="M328.1 294.7l0.5 3.2l-0.4 5l-0.5-3.2z" fill="#656569"/><path d="M288.7 292.9l0.9 1.1l-4.2 0.9l-0.7-0.9z" fill="#8a8a95"/><path d="M272.3 293.1l0.9 0.2l-1.3 1.6l-0.7-0.2z" fill="#8a8a92"/><path d="M334.9 385.4l-7.1 6l0-9.9l7.1-6z" fill="#595b75" stroke="#0c0c0c" stroke-width="0.55"/><path d="M256.9 293.7l0.9-0.6l2.3 1.5l-0.7 0.4z" fill="#8a8a92"/><path d="M262.5 293.5l0.9-0.3l1.2 1.6l-0.7 0.2z" fill="#8a8a92"/><path d="M225.8 307.7l0.3-2.2l3.4-3.7l-0.2 2z" fill="#86868b"/><path d="M195.3 292.4l1-3.8l2 0.2l-1 3.7z" fill="#8a8a92"/><path d="M240.8 295.6l0.8-1.4l4.6 0.5l-0.7 1.2z" fill="#808085"/><path d="M234.9 297.8l0.7-1.7l5.2-0.5l-0.6 1.5z" fill="#88888d"/><path d="M328.2 302.9l0.1 3.1l-0.6 5.3l-0.1-3.1z" fill="#56565a"/><path d="M229.5 301.8l0.6-2l4.8-2l-0.5 1.8z" fill="#8d8d92"/><path d="M273.2 293.3l0.9 0.3l-1.6 1.5l-0.6-0.2z" fill="#8a8a92"/><path d="M314.8 328.8l-1 2.4l-1.9-4.7l1-2.3z" fill="#707290"/><path d="M246.2 294.7l0.8-1.1l4.1 1l-0.7 0.9z" fill="#84848b"/><path d="M216 334.4l-1.3-2.8l3.6 1l1.2 2.5z" fill="#7b7c95"/><path d="M197.3 292.5l1-3.7l1.9 0.3l-1 3.5z" fill="#8a8a92"/><path d="M283.8 293.2l0.9 0.8l-3.6 1.2l-0.7-0.7z" fill="#8a8a92"/><path d="M261.7 293.8l0.8-0.3l1.4 1.5l-0.7 0.2z" fill="#8a8a92"/><path d="M327.7 311.3l-0.4 3.1l-0.9 5.2l0.4-3z" fill="#56565a"/><path d="M278.8 293.3l0.8 0.6l-2.6 1.3l-0.6-0.5z" fill="#8a8a92"/><path d="M313.5 321.8l-0.6 2.4l-1.5-5.8l0.6-2.3z" fill="#797b9c"/><path d="M199.2 292.6l1-3.5l1.9 0.2l-0.9 3.4z" fill="#8a8a92"/><path d="M202.3 377.8l-5.6-6.4l0-10l5.6 6.4z" fill="#69696d" stroke="#0c0c0c" stroke-width="0.55"/><path d="M274.1 293.6l0.8 0.3l-1.7 1.4l-0.7-0.2z" fill="#8a8a92"/><path d="M326.4 319.6l-0.8 3.1l-1.5 4.4l0.8-2.9z" fill="#606064"/><path d="M256.1 294.3l0.8-0.6l2.5 1.3l-0.7 0.5z" fill="#8a8a92"/><path d="M251.1 294.6l0.8-0.9l3.5 1.3l-0.7 0.6z" fill="#8a8a92"/><path d="M260.8 294.2l0.9-0.4l1.5 1.4l-0.6 0.3z" fill="#8a8a92"/><path d="M201.2 292.7l0.9-3.4l2 0.2l-0.9 3.4z" fill="#8a8a92"/><path d="M205.1 293l0.9-3.3l1.3 1.2l-0.9 3.2z" fill="#8f90aa"/><path d="M274.9 293.9l0.8 0.4l-1.9 1.3l-0.6-0.3z" fill="#8a8a92"/><path d="M203.2 292.9l0.9-3.4l1.9 0.2l-0.9 3.3z" fill="#8a8a92"/><path d="M279.6 293.9l0.8 0.6l-2.8 1.1l-0.6-0.4z" fill="#8a8a92"/><path d="M289.6 294l0.7 1.1l-4.3 0.7l-0.6-0.9z" fill="#8b8b95"/><path d="M260.1 294.6l0.7-0.4l1.8 1.3l-0.5 0.3z" fill="#8a8a92"/><path d="M207.3 299.9l0.4-3.1l0.4 5l-0.4 3.1z" fill="#7e80a2"/><path d="M295 294.7l0.7 1.5l-4.8 0.1l-0.6-1.2z" fill="#8c8d9a"/><path d="M267.5 294.3l0.7 0l0 1.5l-0.6 0z" fill="#8a8a92"/><path d="M222.6 332.8l-1.1-2.4l1.9-4.7l1.1 2.3z" fill="#949499"/><path d="M255.4 295l0.7-0.7l2.6 1.2l-0.5 0.5z" fill="#8a8a92"/><path d="M268.2 294.3l0.8 0.1l-0.3 1.4l-0.5 0z" fill="#8a8a92"/><path d="M324.1 327.1l-1.2 2.9l-2.4 2.6l1.2-2.8z" fill="#76767b"/><path d="M266.7 294.4l0.8-0.1l0.1 1.5l-0.5 0.1z" fill="#8a8a92"/><path d="M284.7 294l0.7 0.9l-3.8 1l-0.5-0.7z" fill="#8a8a92"/><path d="M312.3 313.8l-0.3 2.3l-2.1-5.4l0.3-2.2z" fill="#797b9c"/><path d="M269 294.4l0.7 0l-0.5 1.5l-0.5-0.1z" fill="#8a8a92"/><path d="M209.7 393.4l-7.4-5.7l0-9.9l7.4 5.7z" fill="#6e6e72" stroke="#0c0c0c" stroke-width="0.55"/><path d="M266 294.5l0.7-0.1l0.4 1.5l-0.5 0z" fill="#8a8a92"/><path d="M275.7 294.3l0.7 0.4l-2.1 1.2l-0.5-0.3z" fill="#8a8a92"/><path d="M300.9 296.7l0.5 1.7l-5.3-0.8l-0.4-1.4z" fill="#8d8ea0"/><path d="M269.7 294.4l0.8 0.1l-0.7 1.5l-0.6-0.1z" fill="#8a8a92"/><path d="M265.3 294.6l0.7-0.1l0.6 1.4l-0.5 0.1z" fill="#8a8a92"/><path d="M190.3 302.1l0.5-4l0.5-3.3l-0.5 4z" fill="#656569"/><path d="M207.8 308l-0.1-3.1l0.6 5.3l0.1 3.1z" fill="#8081a4"/><path d="M245.5 295.9l0.7-1.2l4.2 0.8l-0.6 0.9z" fill="#84848b"/><path d="M223.4 325.7l-0.7-2.4l1.4-5.7l0.8 2.2z" fill="#7b7b80"/><path d="M259.4 295l0.7-0.4l2 1.2l-0.6 0.3z" fill="#8a8a92"/><path d="M270.5 294.5l0.7 0.2l-0.9 1.4l-0.5-0.1z" fill="#8a8a92"/><path d="M264.6 294.8l0.7-0.2l0.8 1.4l-0.6 0.1z" fill="#8a8a92"/><path d="M250.4 295.5l0.7-0.9l3.6 1l-0.5 0.7z" fill="#8a8a92"/><path d="M317 333.5l-1.5 2.5l-3.1-2.4l1.4-2.4z" fill="#9192ad"/><path d="M208.9 316.4l-0.5-3.1l0.9 5.3l0.5 3z" fill="#8082a4"/><path d="M306.3 300.5l0.4 2l-5-2.3l-0.3-1.8z" fill="#8788a1"/><path d="M240.2 297.1l0.6-1.5l4.7 0.3l-0.5 1.2z" fill="#828287"/><path d="M271.2 294.7l0.7 0.2l-1.1 1.3l-0.5-0.1z" fill="#8a8a92"/><path d="M310.1 306.3l0.1 2.2l-3.5-4l0-2z" fill="#727391"/><path d="M280.4 294.5l0.7 0.7l-2.9 1l-0.6-0.6z" fill="#8a8a92"/><path d="M344.4 292.2l0.7 4l-2-2.2l-0.7-3.9z" fill="#6f718e"/><path d="M263.9 295l0.7-0.2l0.9 1.3l-0.4 0.2z" fill="#8a8a92"/><path d="M276.4 294.7l0.6 0.5l-2.2 1l-0.5-0.3z" fill="#8a8a92"/><path d="M210.7 324.6l-0.9-3l1.5 4.5l1 2.9z" fill="#7c7ea0"/><path d="M190.6 317.7l-0.2-7.3l0-9.9l0.2 7.3z" fill="#49494c" stroke="#0c0c0c" stroke-width="0.55"/><path d="M271.9 294.9l0.6 0.2l-1.3 1.2l-0.4-0.1z" fill="#8a8a92"/><path d="M254.7 295.6l0.7-0.6l2.8 1l-0.5 0.5z" fill="#8a8a92"/><path d="M258.7 295.5l0.7-0.5l2.1 1.1l-0.4 0.4z" fill="#8a8a92"/><path d="M263.2 295.2l0.7-0.2l1.2 1.3l-0.5 0.1z" fill="#8a8a92"/><path d="M234.4 299.6l0.5-1.8l5.3-0.7l-0.4 1.5z" fill="#8b8b90"/><path d="M272.5 295.1l0.7 0.2l-1.5 1.2l-0.5-0.2z" fill="#8a8a92"/><path d="M224.1 317.6l-0.4-2.3l2.2-5.4l0.4 2.2z" fill="#7e7e83"/><path d="M285.4 294.9l0.6 0.9l-3.9 0.8l-0.5-0.7z" fill="#8a8a92"/><path d="M262.6 295.5l0.6-0.3l1.4 1.2l-0.4 0.2z" fill="#8a8a92"/><path d="M329.3 292l0.6 3.2l-1.3 2.7l-0.5-3.2z" fill="#828287"/><path d="M345.6 325l-1.8 7.2l0-9.9l1.8-7.2z" fill="#7b7c9e" stroke="#0c0c0c" stroke-width="0.55"/><path d="M277 295.2l0.6 0.4l-2.4 1l-0.4-0.4z" fill="#8a8a92"/><path d="M290.3 295.1l0.6 1.2l-4.5 0.4l-0.4-0.9z" fill="#8b8c96"/><path d="M320.5 332.6l-1.6 2.7l-3.4 0.7l1.5-2.5z" fill="#808085"/><path d="M273.2 295.3l0.6 0.3l-1.7 1.1l-0.4-0.2z" fill="#8a8a92"/><path d="M281.1 295.2l0.5 0.7l-3 0.8l-0.4-0.5z" fill="#8a8a92"/><path d="M229.3 303.8l0.2-2l4.9-2.2l-0.2 1.7z" fill="#929297"/><path d="M213.6 331.9l-1.3-2.9l2.4 2.6l1.3 2.8z" fill="#6a6b89"/><path d="M258.2 296l0.5-0.5l2.4 1l-0.5 0.4z" fill="#8a8a92"/><path d="M262.1 295.8l0.5-0.3l1.6 1.1l-0.4 0.3z" fill="#8a8a92"/><path d="M225.9 309.9l-0.1-2.2l3.5-3.9l0 2z" fill="#8d8d92"/><path d="M249.8 296.4l0.6-0.9l3.8 0.8l-0.4 0.8z" fill="#8a8a92"/><path d="M221.1 337.6l-1.6-2.5l3.1-2.3l1.5 2.3z" fill="#a7a7ad"/><path d="M254.2 296.3l0.5-0.7l3 0.9l-0.4 0.5z" fill="#8a8a92"/><path d="M295.7 296.2l0.4 1.4l-4.9-0.1l-0.3-1.2z" fill="#8e8e9b"/><path d="M273.8 295.6l0.5 0.3l-1.8 1l-0.4-0.2z" fill="#8a8a92"/><path d="M342.4 290.1l0.7 3.9l-2-0.3l-0.7-3.8z" fill="#9090a3"/><path d="M245 297.1l0.5-1.2l4.3 0.5l-0.4 1z" fill="#85858b"/><path d="M277.6 295.6l0.6 0.6l-2.6 0.8l-0.4-0.4z" fill="#8a8a92"/><path d="M261.5 296.1l0.6-0.3l1.7 1.1l-0.4 0.2z" fill="#8a8a92"/><path d="M267.6 295.8l0.6 0l-0.1 1.5l-0.3 0z" fill="#8a8a92"/><path d="M268.2 295.8l0.5 0l-0.3 1.5l-0.3 0z" fill="#8a8a92"/><path d="M340.4 289.9l0.7 3.8l-2 0.1l-0.7-3.7z" fill="#8a8a92"/><path d="M267.1 295.9l0.5-0.1l0.2 1.5l-0.3 0z" fill="#8a8a92"/><path d="M257.7 296.5l0.5-0.5l2.4 0.9l-0.3 0.3z" fill="#8a8a92"/><path d="M268.7 295.8l0.5 0.1l-0.5 1.4l-0.3 0z" fill="#8a8a92"/><path d="M313.8 331.2l-1.4 2.4l-1.8-4.8l1.3-2.3z" fill="#757795"/><path d="M266.6 295.9l0.5 0l0.4 1.4l-0.4 0.1z" fill="#8a8a92"/><path d="M274.3 295.9l0.5 0.3l-2 1l-0.3-0.3z" fill="#8a8a92"/><path d="M269.2 295.9l0.6 0.1l-0.7 1.4l-0.4-0.1z" fill="#8a8a92"/><path d="M266.1 296l0.5-0.1l0.5 1.5l-0.3 0z" fill="#8a8a92"/><path d="M338.4 290.1l0.7 3.7l-2 0.1l-0.6-3.6z" fill="#8a8a92"/><path d="M281.6 295.9l0.5 0.7l-3.1 0.6l-0.4-0.5z" fill="#8a8a92"/><path d="M261.1 296.5l0.4-0.4l1.9 1l-0.4 0.2z" fill="#8a8a92"/><path d="M269.8 296l0.5 0.1l-0.9 1.3l-0.3 0z" fill="#8a8a92"/><path d="M265.5 296.1l0.6-0.1l0.7 1.4l-0.3 0.1z" fill="#8a8a92"/><path d="M286 295.8l0.4 0.9l-4 0.6l-0.3-0.7z" fill="#8a8a92"/><path d="M239.8 298.6l0.4-1.5l4.8 0l-0.3 1.2z" fill="#848488"/><path d="M301.4 298.4l0.3 1.8l-5.3-1.1l-0.3-1.5z" fill="#9091a2"/><path d="M312.9 324.2l-1 2.3l-1.4-5.9l0.9-2.2z" fill="#757797"/><path d="M336.5 290.3l0.6 3.6l-2 0.1l-0.6-3.5z" fill="#8a8a92"/><path d="M270.3 296.1l0.5 0.1l-1.1 1.3l-0.3-0.1z" fill="#8a8a92"/><path d="M265.1 296.3l0.4-0.2l1 1.4l-0.3 0.1z" fill="#8a8a92"/><path d="M190.8 298.8l0.5-4l2-2.2l-0.5 3.9z" fill="#88888d"/><path d="M330.6 290.9l0.6 3.2l-1.3 1.1l-0.6-3.2z" fill="#9b9ba1"/><path d="M278.2 296.2l0.4 0.5l-2.7 0.7l-0.3-0.4z" fill="#8a8a92"/><path d="M274.8 296.2l0.4 0.4l-2 0.8l-0.4-0.2z" fill="#8a8a92"/><path d="M253.8 297.1l0.4-0.8l3.1 0.7l-0.4 0.6z" fill="#8a8a92"/><path d="M270.8 296.2l0.4 0.1l-1.3 1.3l-0.2-0.1z" fill="#8a8a92"/><path d="M334.5 290.5l0.6 3.5l-1.9 0.1l-0.6-3.4z" fill="#8a8a92"/><path d="M217.7 337l-1.7-2.6l3.5 0.7l1.6 2.5z" fill="#767790"/><path d="M264.6 296.4l0.5-0.1l1.1 1.3l-0.2 0.1z" fill="#8a8a92"/><path d="M260.6 296.9l0.5-0.4l1.9 0.8l-0.3 0.3z" fill="#8a8a92"/><path d="M328.6 297.9l0.1 3.2l-0.4 4.9l-0.1-3.1z" fill="#5d5d61"/><path d="M257.3 297l0.4-0.5l2.6 0.7l-0.3 0.5z" fill="#8a8a92"/><path d="M249.4 297.4l0.4-1l4 0.7l-0.3 0.7z" fill="#8a8a92"/><path d="M206.1 297.3l0.3-3.2l1.3 2.7l-0.4 3.1z" fill="#78799a"/><path d="M332.6 290.7l0.6 3.4l-2 0l-0.6-3.2z" fill="#8a8a92"/><path d="M290.9 296.3l0.3 1.2l-4.4 0.2l-0.4-1z" fill="#8c8c96"/><path d="M271.2 296.3l0.5 0.2l-1.5 1.2l-0.3-0.1z" fill="#8a8a92"/><path d="M264.2 296.6l0.4-0.2l1.4 1.3l-0.3 0.1z" fill="#8a8a92"/><path d="M271.7 296.5l0.4 0.2l-1.6 1.1l-0.3-0.1z" fill="#8a8a92"/><path d="M275.2 296.6l0.4 0.4l-2.2 0.7l-0.2-0.3z" fill="#8a8a92"/><path d="M263.8 296.9l0.4-0.3l1.5 1.2l-0.2 0.1z" fill="#8a8a92"/><path d="M306.7 302.5l0 2l-4.9-2.6l-0.1-1.7z" fill="#8b8ca5"/><path d="M192.7 334.7l-2.1-7.1l0-9.9l2.1 7.1z" fill="#57575a" stroke="#0c0c0c" stroke-width="0.55"/><path d="M260.3 297.2l0.3-0.3l2.1 0.7l-0.2 0.3z" fill="#8a8a92"/><path d="M282.1 296.6l0.3 0.7l-3.2 0.5l-0.2-0.6z" fill="#8a8a92"/><path d="M278.6 296.7l0.4 0.5l-2.8 0.6l-0.3-0.4z" fill="#8a8a92"/><path d="M234.2 301.3l0.2-1.7l5.4-1l-0.2 1.4z" fill="#8e8e93"/><path d="M312 316.1l-0.6 2.3l-2.1-5.5l0.6-2.2z" fill="#767899"/><path d="M272.1 296.7l0.4 0.2l-1.8 1.1l-0.2-0.2z" fill="#8a8a92"/><path d="M224.1 335.1l-1.5-2.3l1.9-4.8l1.4 2.2z" fill="#98989e"/><path d="M244.7 298.3l0.3-1.2l4.4 0.3l-0.2 0.9z" fill="#85858b"/><path d="M263.4 297.1l0.4-0.2l1.7 1l-0.3 0.2z" fill="#8a8a92"/><path d="M256.9 297.6l0.4-0.6l2.7 0.7l-0.3 0.4z" fill="#8a8a92"/><path d="M343.8 342.1l-3.6 7l0-9.9l3.6-7z" fill="#737594" stroke="#0c0c0c" stroke-width="0.55"/><path d="M310.2 308.5l-0.3 2.2l-3.4-4.2l0.2-2z" fill="#777997"/><path d="M275.6 297l0.3 0.4l-2.2 0.6l-0.3-0.3z" fill="#8a8a92"/><path d="M272.5 296.9l0.3 0.3l-1.9 0.9l-0.2-0.1z" fill="#8a8a92"/><path d="M253.5 297.8l0.3-0.7l3.1 0.5l-0.2 0.6z" fill="#8a8a92"/><path d="M224.5 328l-1.1-2.3l1.5-5.9l1 2.3z" fill="#818186"/><path d="M286.4 296.7l0.4 1l-4.1 0.4l-0.3-0.8z" fill="#8a8a92"/><path d="M263 297.3l0.4-0.2l1.8 1l-0.2 0.1z" fill="#8a8a92"/><path d="M296.1 297.6l0.3 1.5l-5-0.4l-0.2-1.2z" fill="#8f8f9d"/><path d="M192.8 296.5l0.5-3.9l2-0.2l-0.5 3.8z" fill="#8e8e93"/><path d="M260 297.7l0.3-0.5l2.2 0.7l-0.2 0.3z" fill="#8a8a92"/><path d="M272.8 297.2l0.4 0.2l-2.1 0.9l-0.2-0.2z" fill="#8a8a92"/><path d="M315.5 336l-1.8 2.5l-3-2.6l1.7-2.3z" fill="#9495af"/><path d="M262.7 297.6l0.3-0.3l2 0.9l-0.2 0.2z" fill="#8a8a92"/><path d="M279 297.2l0.2 0.6l-2.8 0.4l-0.2-0.4z" fill="#8a8a92"/><path d="M194.8 296.2l0.5-3.8l2 0.1l-0.5 3.7z" fill="#8a8a92"/><path d="M345.6 299.5l0.1 4l-0.5-3.3l-0.1-4z" fill="#7d7fa1"/><path d="M322.9 330l-1.7 2.9l-2.3 2.4l1.6-2.7z" fill="#6e6e72"/><path d="M249.2 298.3l0.2-0.9l4.1 0.4l-0.2 0.8z" fill="#8a8a92"/><path d="M275.9 297.4l0.3 0.4l-2.3 0.5l-0.2-0.3z" fill="#8a8a92"/><path d="M196.8 296.2l0.5-3.7l1.9 0.1l-0.4 3.6z" fill="#8a8a92"/><path d="M229.3 305.8l0-2l4.9-2.5l0.1 1.8z" fill="#97979c"/><path d="M273.2 297.4l0.2 0.3l-2.1 0.7l-0.2-0.1z" fill="#8a8a92"/><path d="M204.7 296.3l0.4-3.3l1.3 1.1l-0.3 3.2z" fill="#8b8ca6"/><path d="M282.4 297.3l0.3 0.8l-3.3 0.3l-0.2-0.6z" fill="#8a8a92"/><path d="M267.8 297.3l0.3 0l-0.1 2.2z" fill="#8a8a92"/><path d="M268.1 297.3l0.3 0l-0.4 2.2z" fill="#8a8a92"/><path d="M256.7 298.2l0.2-0.6l2.8 0.5l-0.2 0.4z" fill="#8a8a92"/><path d="M267.5 297.3l0.3 0l0.2 2.2z" fill="#8a8a92"/><path d="M198.8 296.2l0.4-3.6l2 0.1l-0.4 3.5z" fill="#8a8a92"/><path d="M268.4 297.3l0.3 0l-0.7 2.2z" fill="#8a8a92"/><path d="M259.7 298.1l0.3-0.4l2.3 0.5l-0.2 0.3z" fill="#8a8a92"/><path d="M267.1 297.4l0.4-0.1l0.5 2.2z" fill="#8a8a92"/><path d="M262.5 297.9l0.2-0.3l2.1 0.8l-0.1 0.1z" fill="#8a8a92"/><path d="M268.7 297.3l0.4 0.1l-1.1 2.1z" fill="#8a8a92"/><path d="M266.8 297.4l0.3 0l0.9 2.1z" fill="#8a8a92"/><path d="M269.1 297.4l0.3 0l-1.4 2.1z" fill="#8a8a92"/><path d="M239.6 300l0.2-1.4l4.9-0.3l-0.2 1.2z" fill="#85858a"/><path d="M207.4 303.1l-0.1-3.2l0.4 5l0.1 3.1z" fill="#8081a4"/><path d="M200.8 296.2l0.4-3.5l2 0.2l-0.4 3.4z" fill="#8a8a92"/><path d="M266.5 297.5l0.3-0.1l1.2 2.1z" fill="#8a8a92"/><path d="M224.9 319.8l-0.8-2.2l2.2-5.5l0.6 2.1z" fill="#85858a"/><path d="M291.2 297.5l0.2 1.2l-4.5 0l-0.1-1z" fill="#8c8d97"/><path d="M269.4 297.4l0.3 0.1l-1.7 2z" fill="#8a8a92"/><path d="M266.2 297.6l0.3-0.1l1.5 2z" fill="#8a8a92"/><path d="M202.8 296.3l0.4-3.4l1.9 0.1l-0.4 3.3z" fill="#8a8a92"/><path d="M269.7 297.5l0.2 0.1l-1.9 1.9z" fill="#8a8a92"/><path d="M273.4 297.7l0.3 0.3l-2.3 0.6l-0.1-0.2z" fill="#8a8a92"/><path d="M266 297.7l0.2-0.1l1.8 1.9z" fill="#8a8a92"/><path d="M253.3 298.6l0.2-0.8l3.2 0.4l-0.2 0.6z" fill="#8a8a92"/><path d="M269.9 297.6l0.3 0.1l-2.2 1.8z" fill="#8a8a92"/><path d="M276.2 297.8l0.2 0.4l-2.4 0.4l-0.1-0.3z" fill="#8a8a92"/><path d="M262.3 298.2l0.2-0.3l2.2 0.6l-0.1 0.2z" fill="#8a8a92"/><path d="M226.3 312.1l-0.4-2.2l3.4-4.1l0.4 2z" fill="#939399"/><path d="M265.7 297.8l0.3-0.1l2 1.8z" fill="#8a8a92"/><path d="M270.2 297.7l0.3 0.1l-2.5 1.7z" fill="#8a8a92"/><path d="M279.2 297.8l0.2 0.6l-2.8 0.3l-0.2-0.5z" fill="#8a8a92"/><path d="M265.5 297.9l0.2-0.1l2.3 1.7z" fill="#8a8a92"/><path d="M301.7 300.2l0.1 1.7l-5.4-1.3l0-1.5z" fill="#9293a5"/><path d="M259.5 298.5l0.2-0.4l2.4 0.4l-0.2 0.3z" fill="#8a8a92"/><path d="M270.5 297.8l0.2 0.2l-2.7 1.5z" fill="#8a8a92"/><path d="M273.7 298l0.2 0.3l-2.4 0.5l-0.1-0.2z" fill="#8a8a92"/><path d="M286.8 297.7l0.1 1l-4.1 0.2l-0.1-0.8z" fill="#8a8a92"/><path d="M265.2 298.1l0.3-0.2l2.5 1.6z" fill="#8a8a92"/><path d="M244.5 299.5l0.2-1.2l4.5 0l-0.1 1z" fill="#85858c"/><path d="M262.1 298.5l0.2-0.3l2.3 0.5l-0.2 0.2z" fill="#8a8a92"/><path d="M270.7 298l0.2 0.1l-2.9 1.4z" fill="#8a8a92"/><path d="M256.5 298.8l0.2-0.6l2.8 0.3l-0.1 0.5z" fill="#8a8a92"/><path d="M265 298.2l0.2-0.1l2.8 1.4z" fill="#8a8a92"/><path d="M318.9 335.3l-1.9 2.6l-3.3 0.6l1.8-2.5z" fill="#79797e"/><path d="M223 340l-1.9-2.4l3-2.5l1.8 2.2z" fill="#aaaab0"/><path d="M270.9 298.1l0.2 0.2l-3.1 1.2z" fill="#8a8a92"/><path d="M276.4 298.2l0.2 0.5l-2.5 0.2l-0.1-0.3z" fill="#8a8a92"/><path d="M264.8 298.4l0.2-0.2l3 1.3z" fill="#8a8a92"/><path d="M273.9 298.3l0.1 0.3l-2.4 0.4l-0.1-0.2z" fill="#8a8a92"/><path d="M282.7 298.1l0.1 0.8l-3.3 0.1l-0.1-0.6z" fill="#8a8a92"/><path d="M271.1 298.3l0.2 0.1l-3.3 1.1z" fill="#8a8a92"/><path d="M340.2 359l-5.3 6.6l0-9.9l5.3-6.6z" fill="#686986" stroke="#0c0c0c" stroke-width="0.55"/><path d="M249.1 299.3l0.1-1l4.1 0.3l-0.1 0.8z" fill="#8a8a92"/><path d="M261.9 298.8l0.2-0.3l2.3 0.4l0 0.2z" fill="#8a8a92"/><path d="M264.7 298.5l0.1-0.1l3.2 1.1z" fill="#8a8a92"/><path d="M259.4 299l0.1-0.5l2.4 0.3l0 0.3z" fill="#8a8a92"/><path d="M215.4 334.6l-1.8-2.7l2.4 2.5l1.7 2.6z" fill="#676986"/><path d="M271.3 298.4l0.1 0.2l-3.4 0.9z" fill="#8a8a92"/><path d="M312.4 333.6l-1.7 2.3l-1.7-4.9l1.6-2.2z" fill="#797b98"/><path d="M196.7 351.5l-4-6.8l0-10l4 6.9z" fill="#626265" stroke="#0c0c0c" stroke-width="0.55"/><path d="M279.4 298.4l0.1 0.6l-2.9 0.1l0-0.4z" fill="#8a8a92"/><path d="M264.6 298.7l0.1-0.2l3.3 1z" fill="#8a8a92"/><path d="M253.2 299.4l0.1-0.8l3.2 0.2l0 0.6z" fill="#8a8a92"/><path d="M274 298.6l0.1 0.3l-2.4 0.3l-0.1-0.2z" fill="#8a8a92"/><path d="M234.3 303.1l-0.1-1.8l5.4-1.3l0 1.5z" fill="#919196"/><path d="M271.4 298.6l0.1 0.2l-3.5 0.7z" fill="#8a8a92"/><path d="M296.4 299.1l0 1.5l-4.9-0.7l-0.1-1.2z" fill="#90919e"/><path d="M264.4 298.9l0.2-0.2l3.4 0.8z" fill="#8a8a92"/><path d="M261.9 299.1l0-0.3l2.5 0.3l-0.1 0.2z" fill="#8a8a92"/><path d="M311.9 326.5l-1.3 2.3l-1.4-6l1.3-2.2z" fill="#707291"/><path d="M276.6 298.7l0 0.4l-2.4 0.1l-0.1-0.3z" fill="#8a8a92"/><path d="M256.5 299.4l0-0.6l2.9 0.2l0 0.4z" fill="#8a8a92"/><path d="M271.5 298.8l0.1 0.2l-3.6 0.5z" fill="#8a8a92"/><path d="M329.9 295.2l0 3.2l-1.2 2.7l-0.1-3.2z" fill="#7a7a7f"/><path d="M264.4 299.1l0-0.2l3.6 0.6z" fill="#8a8a92"/><path d="M259.4 299.4l0-0.4l2.5 0.1l-0.1 0.3z" fill="#8a8a92"/><path d="M306.7 304.5l-0.2 2l-4.9-2.8l0.2-1.8z" fill="#8f90a9"/><path d="M274.1 298.9l0.1 0.3l-2.5 0.1l0-0.1z" fill="#8a8a92"/><path d="M271.6 299l0.1 0.2l-3.7 0.3z" fill="#8a8a92"/><path d="M291.4 298.7l0.1 1.2l-4.6-0.2l0-1z" fill="#8d8d97"/><path d="M264.3 299.3l0.1-0.2l3.6 0.4z" fill="#8a8a92"/><path d="M190.4 306.1l-0.1-4l0.5-3.3l0.1 4z" fill="#6e6e72"/><path d="M261.8 299.4l0.1-0.3l2.4 0.2l0 0.2z" fill="#8a8a92"/><path d="M286.9 298.7l0 1l-4.1-0.1l0-0.7z" fill="#8a8a92"/><path d="M271.7 299.2l0 0.1l-3.7 0.2z" fill="#8a8a92"/><path d="M282.8 298.9l0 0.7l-3.3 0l0-0.6z" fill="#8a8a92"/><path d="M264.3 299.5l0-0.2l3.7 0.2z" fill="#8a8a92"/><path d="M279.5 299l0 0.6l-2.9 0l0-0.5z" fill="#8a8a92"/><path d="M276.6 299.1l0 0.5l-2.4 0l0-0.4z" fill="#8a8a92"/><path d="M345.1 296.2l0.1 4l-2-2.3l-0.1-3.9z" fill="#757694"/><path d="M274.2 299.2l0 0.4l-2.5-0.1l0-0.2z" fill="#8a8a92"/><path d="M239.6 301.5l0-1.5l4.9-0.5l0.1 1.2z" fill="#86868b"/><path d="M219.8 339.6l-2.1-2.6l3.4 0.6l1.9 2.4z" fill="#71728a"/><path d="M271.7 299.3l0 0.2l-3.7 0z" fill="#8a8a92"/><path d="M334.9 375.5l-7.1 6l0-9.9l7.1-6z" fill="#595b75" stroke="#0c0c0c" stroke-width="0.55"/><path d="M264.3 299.7l0-0.2l3.7 0z" fill="#8a8a92"/><path d="M261.8 299.8l0-0.4l2.5 0.1l0 0.2z" fill="#8a8a92"/><path d="M311.4 318.4l-0.9 2.2l-2.1-5.6l0.9-2.1z" fill="#737494"/><path d="M259.4 299.9l0-0.5l2.4 0l0 0.4z" fill="#8a8a92"/><path d="M256.5 300l0-0.6l2.9 0l0 0.5z" fill="#8a8a92"/><path d="M327.8 391.4l-8.5 5.3l0-9.9l8.5-5.3z" fill="#48495f" stroke="#0c0c0c" stroke-width="0.55"/><path d="M271.7 299.5l0 0.2l-3.7-0.2z" fill="#8a8a92"/><path d="M253.2 300.1l0-0.7l3.3 0l0 0.6z" fill="#8a8a92"/><path d="M225.9 337.3l-1.8-2.2l1.8-4.9l1.8 2.1z" fill="#9c9ca2"/><path d="M244.6 300.7l-0.1-1.2l4.6-0.2l0 1z" fill="#86868c"/><path d="M264.3 299.9l0-0.2l3.7-0.2z" fill="#8a8a92"/><path d="M249.1 300.3l0-1l4.1 0.1l0 0.7z" fill="#8a8a92"/><path d="M309.9 310.7l-0.6 2.2l-3.4-4.4l0.6-2z" fill="#7c7e9c"/><path d="M274.2 299.6l-0.1 0.3l-2.4-0.2l0-0.2z" fill="#8a8a92"/><path d="M271.7 299.7l-0.1 0.2l-3.6-0.4z" fill="#8a8a92"/><path d="M264.4 300l-0.1-0.1l3.7-0.4z" fill="#8a8a92"/><path d="M261.9 300.1l-0.1-0.3l2.5-0.1l0 0.2z" fill="#8a8a92"/><path d="M225.9 330.2l-1.4-2.2l1.4-5.9l1.4 2.1z" fill="#86868b"/><path d="M276.6 299.6l0 0.4l-2.5-0.1l0.1-0.3z" fill="#8a8a92"/><path d="M229.7 307.8l-0.4-2l5-2.7l0.3 1.7z" fill="#9c9ca1"/><path d="M271.6 299.9l0 0.2l-3.6-0.6z" fill="#8a8a92"/><path d="M264.5 300.2l-0.1-0.2l3.6-0.5z" fill="#8a8a92"/><path d="M279.5 299.6l0 0.6l-2.9-0.2l0-0.4z" fill="#8a8a92"/><path d="M259.4 300.3l0-0.4l2.4-0.1l0.1 0.3z" fill="#8a8a92"/><path d="M274.1 299.9l0 0.3l-2.5-0.3l0.1-0.2z" fill="#8a8a92"/><path d="M271.6 300.1l-0.2 0.2l-3.4-0.8z" fill="#8a8a92"/><path d="M202.3 367.8l-5.6-6.4l0-9.9l5.6 6.4z" fill="#69696d" stroke="#0c0c0c" stroke-width="0.55"/><path d="M264.6 300.4l-0.1-0.2l3.5-0.7z" fill="#8a8a92"/><path d="M301.8 301.9l-0.2 1.8l-5.4-1.7l0.2-1.4z" fill="#9495a7"/><path d="M262 300.4l-0.1-0.3l2.4-0.2l0.1 0.1z" fill="#8a8a92"/><path d="M282.8 299.6l-0.1 0.8l-3.2-0.2l0-0.6z" fill="#8a8a92"/><path d="M313.7 338.5l-2.2 2.3l-2.8-2.7l2-2.2z" fill="#9798b1"/><path d="M271.4 300.3l-0.1 0.2l-3.3-1z" fill="#8a8a92"/><path d="M256.6 300.6l-0.1-0.6l2.9-0.1l0 0.4z" fill="#8a8a92"/><path d="M331.2 294.1l0.1 3.3l-1.4 1l0-3.2z" fill="#96969c"/><path d="M264.7 300.6l-0.1-0.2l3.4-0.9z" fill="#8a8a92"/><path d="M328.7 301.1l-0.4 3.1l-0.4 4.9l0.4-3.1z" fill="#555558"/><path d="M276.6 300l-0.1 0.5l-2.4-0.3l0-0.3z" fill="#8a8a92"/><path d="M343.1 294l0.1 3.9l-2-0.4l-0.1-3.8z" fill="#9293a5"/><path d="M271.3 300.5l-0.1 0.1l-3.2-1.1z" fill="#8a8a92"/><path d="M274.1 300.2l-0.2 0.3l-2.3-0.4l0-0.2z" fill="#8a8a92"/><path d="M286.9 299.7l-0.1 1l-4.1-0.3l0.1-0.8z" fill="#8a8a92"/><path d="M206.1 300.5l0-3.2l1.2 2.6l0.1 3.2z" fill="#797b9c"/><path d="M264.9 300.7l-0.2-0.1l3.3-1.1z" fill="#8a8a92"/><path d="M253.3 300.9l-0.1-0.8l3.3-0.1l0.1 0.6z" fill="#8a8a92"/><path d="M262.1 300.7l-0.1-0.3l2.4-0.4l0.1 0.2z" fill="#8a8a92"/><path d="M341.1 293.7l0.1 3.8l-2 0l-0.1-3.7z" fill="#8a8a92"/><path d="M225.9 322.1l-1-2.3l2-5.6l1.1 2.2z" fill="#8b8b90"/><path d="M271.2 300.6l-0.2 0.2l-3-1.3z" fill="#8a8a92"/><path d="M339.1 293.8l0.1 3.7l-2 0l-0.1-3.6z" fill="#8a8a92"/><path d="M259.6 300.8l-0.2-0.5l2.5-0.2l0.1 0.3z" fill="#8a8a92"/><path d="M296.4 300.6l-0.2 1.4l-4.9-0.9l0.2-1.2z" fill="#91929f"/><path d="M337.1 293.9l0.1 3.6l-2 0l-0.1-3.5z" fill="#8a8a92"/><path d="M291.5 299.9l-0.2 1.2l-4.5-0.4l0.1-1z" fill="#8d8e98"/><path d="M265.1 300.9l-0.2-0.2l3.1-1.2z" fill="#8a8a92"/><path d="M335.1 294l0.1 3.5l-2 0l0-3.4z" fill="#8a8a92"/><path d="M226.9 314.2l-0.6-2.1l3.4-4.3l0.6 2z" fill="#99999f"/><path d="M333.2 294.1l0 3.4l-1.9-0.1l-0.1-3.3z" fill="#8a8a92"/><path d="M271 300.8l-0.2 0.2l-2.8-1.5z" fill="#8a8a92"/><path d="M279.5 300.2l-0.2 0.6l-2.8-0.3l0.1-0.5z" fill="#8a8a92"/><path d="M265.3 301l-0.2-0.1l2.9-1.4z" fill="#8a8a92"/><path d="M273.9 300.5l-0.2 0.3l-2.3-0.5l0.2-0.2z" fill="#8a8a92"/><path d="M270.8 301l-0.3 0.1l-2.5-1.6z" fill="#8a8a92"/><path d="M249.2 301.3l-0.1-1l4.1-0.2l0.1 0.8z" fill="#8a8a92"/><path d="M262.3 301l-0.2-0.3l2.4-0.5l0.1 0.2z" fill="#8a8a92"/><path d="M265.5 301.2l-0.2-0.2l2.7-1.5z" fill="#8a8a92"/><path d="M276.5 300.5l-0.2 0.4l-2.4-0.4l0.2-0.3z" fill="#8a8a92"/><path d="M218.4 398.4l-8.7-5l0-9.9l8.7 5z" fill="#6f6f73" stroke="#0c0c0c" stroke-width="0.55"/><path d="M234.6 304.8l-0.3-1.7l5.3-1.6l0.3 1.5z" fill="#939398"/><path d="M321.2 332.9l-2 2.7l-2.2 2.3l1.9-2.6z" fill="#656569"/><path d="M270.5 301.1l-0.2 0.1l-2.3-1.7z" fill="#8a8a92"/><path d="M256.8 301.2l-0.2-0.6l2.8-0.3l0.2 0.5z" fill="#8a8a92"/><path d="M265.8 301.3l-0.3-0.1l2.5-1.7z" fill="#8a8a92"/><path d="M209.7 383.5l-7.4-5.7l0-10l7.4 5.8z" fill="#6e6e72" stroke="#0c0c0c" stroke-width="0.55"/><path d="M270.3 301.2l-0.3 0.1l-2-1.8z" fill="#8a8a92"/><path d="M273.7 300.8l-0.2 0.3l-2.2-0.6l0.1-0.2z" fill="#8a8a92"/><path d="M259.8 301.2l-0.2-0.4l2.4-0.4l0.1 0.3z" fill="#8a8a92"/><path d="M266.1 301.4l-0.3-0.1l2.2-1.8z" fill="#8a8a92"/><path d="M244.8 301.9l-0.2-1.2l4.5-0.4l0.1 1z" fill="#86868d"/><path d="M282.7 300.4l-0.2 0.8l-3.2-0.4l0.2-0.6z" fill="#8a8a92"/><path d="M270 301.3l-0.2 0.1l-1.8-1.9z" fill="#8a8a92"/><path d="M262.6 301.3l-0.3-0.3l2.3-0.6l0.1 0.2z" fill="#8a8a92"/><path d="M266.3 301.5l-0.2-0.1l1.9-1.9z" fill="#8a8a92"/><path d="M239.9 303l-0.3-1.5l5-0.8l0.2 1.2z" fill="#88888d"/><path d="M269.8 301.4l-0.3 0.1l-1.5-2z" fill="#8a8a92"/><path d="M190.9 302.8l-0.1-4l2-2.3l0.1 3.9z" fill="#8f8f94"/><path d="M266.6 301.6l-0.3-0.1l1.7-2z" fill="#8a8a92"/><path d="M225.3 342.3l-2.3-2.3l2.9-2.7l2.2 2.1z" fill="#acacb2"/><path d="M269.5 301.5l-0.3 0.1l-1.2-2.1z" fill="#8a8a92"/><path d="M266.9 301.6l-0.3 0l1.4-2.1z" fill="#8a8a92"/><path d="M269.2 301.6l-0.3 0.1l-0.9-2.2z" fill="#8a8a92"/><path d="M267.3 301.7l-0.4-0.1l1.1-2.1z" fill="#8a8a92"/><path d="M273.5 301.1l-0.2 0.3l-2.1-0.8l0.1-0.1z" fill="#8a8a92"/><path d="M268.9 301.7l-0.4 0l-0.5-2.2z" fill="#8a8a92"/><path d="M276.3 300.9l-0.3 0.4l-2.3-0.5l0.2-0.3z" fill="#8a8a92"/><path d="M267.6 301.7l-0.3 0l0.7-2.2z" fill="#8a8a92"/><path d="M268.5 301.7l-0.3 0l-0.2-2.2z" fill="#8a8a92"/><path d="M279.3 300.8l-0.2 0.6l-2.8-0.5l0.2-0.4z" fill="#8a8a92"/><path d="M267.9 301.7l-0.3 0l0.4-2.2z" fill="#8a8a92"/><path d="M268.2 301.7l-0.3 0l0.1-2.2z" fill="#8a8a92"/><path d="M253.6 301.7l-0.3-0.8l3.3-0.3l0.2 0.6z" fill="#8a8a92"/><path d="M262.8 301.6l-0.2-0.3l2.1-0.7l0.2 0.1z" fill="#8a8a92"/><path d="M310.7 335.9l-2 2.2l-1.7-5l2-2.1z" fill="#7d7e9a"/><path d="M317 337.9l-2.3 2.5l-3.2 0.4l2.2-2.3z" fill="#727277"/><path d="M306.5 306.5l-0.6 2l-4.8-3.1l0.5-1.7z" fill="#9394ac"/><path d="M260.1 301.6l-0.3-0.4l2.3-0.5l0.2 0.3z" fill="#8a8a92"/><path d="M286.8 300.7l-0.2 0.9l-4.1-0.4l0.2-0.8z" fill="#8a8a92"/><path d="M257 301.8l-0.2-0.6l2.8-0.4l0.2 0.4z" fill="#8a8a92"/><path d="M273.3 301.4l-0.3 0.3l-2-0.9l0.2-0.2z" fill="#8a8a92"/><path d="M310.6 328.8l-1.6 2.2l-1.4-6.1l1.6-2.1z" fill="#6a6c8a"/><path d="M263.2 301.8l-0.4-0.2l2.1-0.9l0.2 0.2z" fill="#8a8a92"/><path d="M204.8 299.6l-0.1-3.3l1.4 1l0 3.2z" fill="#8688a2"/><path d="M207.9 306.2l-0.5-3.1l0.4 4.9l0.5 3.2z" fill="#8082a5"/><path d="M276 301.3l-0.3 0.5l-2.2-0.7l0.2-0.3z" fill="#8a8a92"/><path d="M273 301.7l-0.4 0.2l-1.8-0.9l0.2-0.2z" fill="#8a8a92"/><path d="M249.6 302.3l-0.4-1l4.1-0.4l0.3 0.8z" fill="#8a8a92"/><path d="M282.5 301.2l-0.3 0.7l-3.1-0.5l0.2-0.6z" fill="#8a8a92"/><path d="M263.5 302.1l-0.3-0.3l1.9-0.9l0.2 0.1z" fill="#8a8a92"/><path d="M260.4 302l-0.3-0.4l2.2-0.6l0.3 0.3z" fill="#8a8a92"/><path d="M291.3 301.1l-0.3 1.3l-4.4-0.8l0.2-0.9z" fill="#8e8e98"/><path d="M345.6 315.1l-1.8 7.2l0-9.9l1.8-7.3z" fill="#7b7c9e" stroke="#0c0c0c" stroke-width="0.55"/><path d="M279.1 301.4l-0.4 0.6l-2.7-0.7l0.3-0.4z" fill="#8a8a92"/><path d="M217.6 337.3l-2.2-2.7l2.3 2.4l2.1 2.6z" fill="#646682"/><path d="M192.9 300.4l-0.1-3.9l2-0.3l0.1 3.8z" fill="#919196"/><path d="M202.8 299.7l0-3.4l1.9 0l0.1 3.3z" fill="#8a8a92"/><path d="M272.6 301.9l-0.4 0.3l-1.7-1.1l0.3-0.1z" fill="#8a8a92"/><path d="M200.9 299.7l-0.1-3.5l2 0.1l0 3.4z" fill="#8a8a92"/><path d="M198.9 299.8l-0.1-3.6l2 0l0.1 3.5z" fill="#8a8a92"/><path d="M196.9 299.9l-0.1-3.7l2 0l0.1 3.6z" fill="#8a8a92"/><path d="M263.9 302.3l-0.4-0.2l1.8-1.1l0.2 0.2z" fill="#8a8a92"/><path d="M194.9 300l-0.1-3.8l2 0l0.1 3.7z" fill="#8a8a92"/><path d="M301.6 303.7l-0.5 1.7l-5.3-1.9l0.4-1.5z" fill="#9697a9"/><path d="M257.4 302.3l-0.4-0.5l2.8-0.6l0.3 0.4z" fill="#8a8a92"/><path d="M253.9 302.4l-0.3-0.7l3.2-0.5l0.2 0.6z" fill="#8a8a92"/><path d="M275.7 301.8l-0.3 0.4l-2.1-0.8l0.2-0.3z" fill="#8a8a92"/><path d="M296.2 302l-0.4 1.5l-4.8-1.1l0.3-1.3z" fill="#9293a0"/><path d="M230.3 309.8l-0.6-2l4.9-3l0.5 1.7z" fill="#9f9fa5"/><path d="M310.5 320.6l-1.3 2.2l-2-5.7l1.2-2.1z" fill="#6e6f8e"/><path d="M309.3 312.9l-0.9 2.1l-3.3-4.5l0.8-2z" fill="#8183a0"/><path d="M272.2 302.2l-0.4 0.2l-1.5-1.2l0.2-0.1z" fill="#8a8a92"/><path d="M228.1 339.4l-2.2-2.1l1.8-5l2 2.1z" fill="#9f9fa5"/><path d="M260.8 302.4l-0.4-0.4l2.2-0.7l0.2 0.3z" fill="#8a8a92"/><path d="M264.3 302.5l-0.4-0.2l1.6-1.1l0.3 0.1z" fill="#8a8a92"/><path d="M245.1 303.1l-0.3-1.2l4.4-0.6l0.4 1z" fill="#87878d"/><path d="M222.2 342l-2.4-2.4l3.2 0.4l2.3 2.3z" fill="#6c6d84"/><path d="M271.8 302.4l-0.4 0.2l-1.4-1.3l0.3-0.1z" fill="#8a8a92"/><path d="M345.7 303.5l-0.5 4.1l-0.5-3.4l0.5-4z" fill="#7c7e9f"/><path d="M264.8 302.7l-0.5-0.2l1.5-1.2l0.3 0.1z" fill="#8a8a92"/><path d="M286.6 301.6l-0.4 1l-4-0.7l0.3-0.7z" fill="#8a8a92"/><path d="M278.7 302l-0.4 0.5l-2.6-0.7l0.3-0.5z" fill="#8a8a92"/><path d="M227.7 332.3l-1.8-2.1l1.4-6l1.7 2.1z" fill="#8a8a8f"/><path d="M275.4 302.2l-0.5 0.3l-1.9-0.8l0.3-0.3z" fill="#8a8a92"/><path d="M271.4 302.6l-0.5 0.1l-1.1-1.3l0.2-0.1z" fill="#8a8a92"/><path d="M265.2 302.8l-0.4-0.1l1.3-1.3l0.2 0.1z" fill="#8a8a92"/><path d="M282.2 301.9l-0.4 0.8l-3.1-0.7l0.4-0.6z" fill="#8a8a92"/><path d="M261.2 302.8l-0.4-0.4l2-0.8l0.4 0.2z" fill="#8a8a92"/><path d="M257.8 302.9l-0.4-0.6l2.7-0.7l0.3 0.4z" fill="#8a8a92"/><path d="M240.3 304.4l-0.4-1.4l4.9-1.1l0.3 1.2z" fill="#89898e"/><path d="M270.9 302.7l-0.4 0.2l-1-1.4l0.3-0.1z" fill="#8a8a92"/><path d="M265.7 303l-0.5-0.2l1.1-1.3l0.3 0.1z" fill="#8a8a92"/><path d="M235.1 306.5l-0.5-1.7l5.3-1.8l0.4 1.4z" fill="#95959b"/><path d="M250 303.2l-0.4-0.9l4-0.6l0.3 0.7z" fill="#8a8a92"/><path d="M270.5 302.9l-0.6 0.1l-0.7-1.4l0.3-0.1z" fill="#8a8a92"/><path d="M311.5 340.8l-2.5 2.2l-2.6-2.8l2.3-2.1z" fill="#999bb3"/><path d="M266.2 303.1l-0.5-0.1l0.9-1.4l0.3 0z" fill="#8a8a92"/><path d="M274.9 302.5l-0.4 0.4l-1.9-1l0.4-0.2z" fill="#8a8a92"/><path d="M254.4 303.1l-0.5-0.7l3.1-0.6l0.4 0.5z" fill="#8a8a92"/><path d="M329.9 298.4l-0.3 3.2l-1.3 2.6l0.4-3.1z" fill="#727277"/><path d="M269.9 303l-0.5 0.1l-0.5-1.4l0.3-0.1z" fill="#8a8a92"/><path d="M266.8 303.1l-0.6 0l0.7-1.5l0.4 0.1z" fill="#8a8a92"/><path d="M261.7 303.1l-0.5-0.3l2-1l0.3 0.3z" fill="#8a8a92"/><path d="M269.4 303.1l-0.5 0.1l-0.4-1.5l0.4 0z" fill="#8a8a92"/><path d="M267.3 303.2l-0.5-0.1l0.5-1.4l0.3 0z" fill="#8a8a92"/><path d="M228 316.4l-1.1-2.2l3.4-4.4l0.9 1.9z" fill="#9e9ea4"/><path d="M278.3 302.5l-0.5 0.5l-2.4-0.8l0.3-0.4z" fill="#8a8a92"/><path d="M268.9 303.2l-0.5 0l-0.2-1.5l0.3 0z" fill="#8a8a92"/><path d="M267.8 303.2l-0.5 0l0.3-1.5l0.3 0z" fill="#8a8a92"/><path d="M268.4 303.2l-0.6 0l0.1-1.5l0.3 0z" fill="#8a8a92"/><path d="M227.3 324.2l-1.4-2.1l2.1-5.7l1.3 2z" fill="#909095"/><path d="M291 302.4l-0.5 1.1l-4.3-0.9l0.4-1z" fill="#8e8e99"/><path d="M274.5 302.9l-0.6 0.3l-1.7-1l0.4-0.3z" fill="#8a8a92"/><path d="M258.4 303.4l-0.6-0.5l2.6-0.9l0.4 0.4z" fill="#8a8a92"/><path d="M262.2 303.4l-0.5-0.3l1.8-1l0.4 0.2z" fill="#8a8a92"/><path d="M281.8 302.7l-0.5 0.7l-3-0.9l0.4-0.5z" fill="#8a8a92"/><path d="M286.2 302.6l-0.6 0.9l-3.8-0.8l0.4-0.8z" fill="#8a8a92"/><path d="M192.7 324.8l-2.1-7.1l0-9.9l2.1 7.1z" fill="#57575a" stroke="#0c0c0c" stroke-width="0.55"/><path d="M273.9 303.2l-0.5 0.3l-1.6-1.1l0.4-0.2z" fill="#8a8a92"/><path d="M277.8 303l-0.5 0.5l-2.4-1l0.5-0.3z" fill="#8a8a92"/><path d="M245.7 304.3l-0.6-1.2l4.5-0.8l0.4 0.9z" fill="#87878e"/><path d="M305.9 308.5l-0.8 2l-4.7-3.4l0.7-1.7z" fill="#9697af"/><path d="M254.9 303.8l-0.5-0.7l3-0.8l0.4 0.6z" fill="#8a8a92"/><path d="M262.8 303.7l-0.6-0.3l1.7-1.1l0.4 0.2z" fill="#8a8a92"/><path d="M295.8 303.5l-0.6 1.4l-4.7-1.4l0.5-1.1z" fill="#9394a1"/><path d="M227.9 344.4l-2.6-2.1l2.8-2.9l2.4 2z" fill="#aeaeb4"/><path d="M259 303.9l-0.6-0.5l2.4-1l0.4 0.4z" fill="#8a8a92"/><path d="M343.8 332.2l-3.6 7l0-9.9l3.6-7z" fill="#737594" stroke="#0c0c0c" stroke-width="0.55"/><path d="M273.4 303.5l-0.6 0.3l-1.4-1.2l0.4-0.2z" fill="#8a8a92"/><path d="M250.6 304.1l-0.6-0.9l3.9-0.8l0.5 0.7z" fill="#8a8a92"/><path d="M308.7 338.1l-2.3 2.1l-1.6-5.2l2.2-1.9z" fill="#80829c"/><path d="M263.5 303.9l-0.7-0.2l1.5-1.2l0.5 0.2z" fill="#8a8a92"/><path d="M319.2 335.6l-2.4 2.6l-2.1 2.2l2.3-2.5z" fill="#5c5c5f"/><path d="M301.1 305.4l-0.7 1.7l-5.2-2.2l0.6-1.4z" fill="#9899ab"/><path d="M272.8 303.8l-0.7 0.2l-1.2-1.3l0.5-0.1z" fill="#8a8a92"/><path d="M277.3 303.5l-0.7 0.5l-2.1-1.1l0.4-0.4z" fill="#8a8a92"/><path d="M191.1 310.2l-0.7-4.1l0.5-3.3l0.7 4z" fill="#75757a"/><path d="M309 331l-2 2.1l-1.3-6.1l1.9-2.1z" fill="#656683"/><path d="M281.3 303.4l-0.7 0.7l-2.8-1.1l0.5-0.5z" fill="#8a8a92"/><path d="M264.1 304.2l-0.6-0.3l1.3-1.2l0.4 0.1z" fill="#8a8a92"/><path d="M331.3 297.4l-0.4 3.3l-1.3 0.9l0.3-3.2z" fill="#919196"/><path d="M314.7 340.4l-2.7 2.4l-3 0.2l2.5-2.2z" fill="#6b6b6f"/><path d="M345.2 300.2l-0.5 4l-2-2.4l0.5-3.9z" fill="#7a7c99"/><path d="M206.7 303.7l-0.6-3.2l1.3 2.6l0.5 3.1z" fill="#7a7c9d"/><path d="M259.6 304.3l-0.6-0.4l2.2-1.1l0.5 0.3z" fill="#8a8a92"/><path d="M241 305.9l-0.7-1.5l4.8-1.3l0.6 1.2z" fill="#8a8a8f"/><path d="M272.1 304l-0.7 0.2l-0.9-1.3l0.4-0.2z" fill="#8a8a92"/><path d="M255.6 304.5l-0.7-0.7l2.9-0.9l0.6 0.5z" fill="#8a8a92"/><path d="M264.8 304.3l-0.7-0.1l1.1-1.4l0.5 0.2z" fill="#8a8a92"/><path d="M231.2 311.7l-0.9-1.9l4.8-3.3l0.8 1.7z" fill="#a3a3a9"/><path d="M290.5 303.5l-0.7 1.2l-4.2-1.2l0.6-0.9z" fill="#8e8f99"/><path d="M285.6 303.5l-0.7 0.9l-3.6-1l0.5-0.7z" fill="#8a8a92"/><path d="M271.4 304.2l-0.7 0.2l-0.8-1.4l0.6-0.1z" fill="#8a8a92"/><path d="M265.5 304.5l-0.7-0.2l0.9-1.3l0.5 0.1z" fill="#8a8a92"/><path d="M276.6 304l-0.7 0.5l-2-1.3l0.6-0.3z" fill="#8a8a92"/><path d="M333.2 297.5l-0.4 3.4l-1.9-0.2l0.4-3.3z" fill="#8a8a92"/><path d="M308.4 315l-1.2 2.1l-3.2-4.7l1.1-1.9z" fill="#8687a4"/><path d="M270.7 304.4l-0.7 0.1l-0.6-1.4l0.5-0.1z" fill="#8a8a92"/><path d="M235.9 308.2l-0.8-1.7l5.2-2.1l0.7 1.5z" fill="#97979d"/><path d="M266.3 304.6l-0.8-0.1l0.7-1.4l0.6 0z" fill="#8a8a92"/><path d="M230.5 341.4l-2.4-2l1.6-5l2.4 1.9z" fill="#a1a1a7"/><path d="M309.2 322.8l-1.6 2.1l-1.9-5.8l1.5-2z" fill="#6d6e8c"/><path d="M335.2 297.5l-0.4 3.5l-2-0.1l0.4-3.4z" fill="#8a8a92"/><path d="M260.3 304.7l-0.7-0.4l2.1-1.2l0.5 0.3z" fill="#8a8a92"/><path d="M270 304.5l-0.7 0.1l-0.4-1.4l0.5-0.1z" fill="#8a8a92"/><path d="M267 304.6l-0.7 0l0.5-1.5l0.5 0.1z" fill="#8a8a92"/><path d="M251.3 305l-0.7-0.9l3.8-1l0.5 0.7z" fill="#8a8a92"/><path d="M337.2 297.5l-0.4 3.6l-2-0.1l0.4-3.5z" fill="#8a8a92"/><path d="M269.3 304.6l-0.8 0.1l-0.1-1.5l0.5 0z" fill="#8a8a92"/><path d="M267.8 304.7l-0.8-0.1l0.3-1.4l0.5 0z" fill="#8a8a92"/><path d="M280.6 304.1l-0.7 0.6l-2.6-1.2l0.5-0.5z" fill="#8a8a92"/><path d="M268.5 304.7l-0.7 0l0-1.5l0.6 0z" fill="#8a8a92"/><path d="M246.4 305.4l-0.7-1.1l4.3-1.1l0.6 0.9z" fill="#88888e"/><path d="M339.2 297.5l-0.5 3.7l-1.9-0.1l0.4-3.6z" fill="#8a8a92"/><path d="M229.7 334.4l-2-2.1l1.3-6l2 1.9z" fill="#8e8e93"/><path d="M275.9 304.5l-0.7 0.4l-1.8-1.4l0.5-0.3z" fill="#8a8a92"/><path d="M343.2 297.9l-0.5 3.9l-2-0.5l0.5-3.8z" fill="#9495a7"/><path d="M341.2 297.5l-0.5 3.8l-2-0.1l0.5-3.7z" fill="#8a8a92"/><path d="M220.2 339.8l-2.6-2.5l2.2 2.3l2.4 2.4z" fill="#60617d"/><path d="M256.4 305.1l-0.8-0.6l2.8-1.1l0.6 0.5z" fill="#8a8a92"/><path d="M261.1 305.1l-0.8-0.4l1.9-1.3l0.6 0.3z" fill="#8a8a92"/><path d="M225 344.3l-2.8-2.3l3.1 0.3l2.6 2.1z" fill="#67687e"/><path d="M340.2 349.1l-5.3 6.6l0-9.9l5.3-6.6z" fill="#686986" stroke="#0c0c0c" stroke-width="0.55"/><path d="M295.2 304.9l-0.8 1.5l-4.6-1.7l0.7-1.2z" fill="#9495a2"/><path d="M309 343l-2.8 2.1l-2.5-3l2.7-1.9z" fill="#9b9cb3"/><path d="M196.7 341.6l-4-6.9l0-9.9l4 6.9z" fill="#626265" stroke="#0c0c0c" stroke-width="0.55"/><path d="M275.2 304.9l-0.9 0.3l-1.5-1.4l0.6-0.3z" fill="#8a8a92"/><path d="M319.3 396.7l-9.7 4.5l0-9.9l9.7-4.5z" fill="#47475a" stroke="#0c0c0c" stroke-width="0.55"/><path d="M284.9 304.4l-0.8 0.9l-3.5-1.2l0.7-0.7z" fill="#8a8a92"/><path d="M229.3 318.4l-1.3-2l3.2-4.7l1.2 1.9z" fill="#a2a2a8"/><path d="M279.9 304.7l-0.8 0.6l-2.5-1.3l0.7-0.5z" fill="#8a8a92"/><path d="M261.9 305.4l-0.8-0.3l1.7-1.4l0.7 0.2z" fill="#8a8a92"/><path d="M205.4 302.9l-0.6-3.3l1.3 0.9l0.6 3.2z" fill="#82839d"/><path d="M229 326.3l-1.7-2.1l2-5.8l1.6 2z" fill="#949499"/><path d="M289.8 304.7l-0.8 1.1l-4.1-1.4l0.7-0.9z" fill="#8f8f99"/><path d="M257.2 305.7l-0.8-0.6l2.6-1.2l0.6 0.4z" fill="#8a8a92"/><path d="M274.3 305.2l-0.8 0.3l-1.4-1.5l0.7-0.2z" fill="#8a8a92"/><path d="M252.2 305.9l-0.9-0.9l3.6-1.2l0.7 0.7z" fill="#8a8a92"/><path d="M305.1 310.5l-1.1 1.9l-4.6-3.6l1-1.7z" fill="#999ab2"/><path d="M241.9 307.2l-0.9-1.3l4.7-1.6l0.7 1.1z" fill="#8b8b90"/><path d="M262.8 305.7l-0.9-0.3l1.6-1.5l0.6 0.3z" fill="#8a8a92"/><path d="M300.4 307.1l-1 1.7l-5-2.4l0.8-1.5z" fill="#9a9bac"/><path d="M191.6 306.8l-0.7-4l2-2.4l0.7 3.9z" fill="#95959a"/><path d="M203.4 303l-0.6-3.3l2-0.1l0.6 3.3z" fill="#8a8a92"/><path d="M273.5 305.5l-0.9 0.3l-1.2-1.6l0.7-0.2z" fill="#8a8a92"/><path d="M247.3 306.5l-0.9-1.1l4.2-1.3l0.7 0.9z" fill="#88888f"/><path d="M279.1 305.3l-0.9 0.6l-2.3-1.4l0.7-0.5z" fill="#8a8a92"/><path d="M263.7 305.9l-0.9-0.2l1.3-1.5l0.7 0.1z" fill="#8a8a92"/><path d="M201.5 303.2l-0.6-3.5l1.9 0l0.6 3.3z" fill="#8a8a92"/><path d="M334.9 365.6l-7.1 6l0-9.9l7.1-6z" fill="#595b75" stroke="#0c0c0c" stroke-width="0.55"/><path d="M230.8 346.4l-2.9-2l2.6-3l2.7 1.9z" fill="#afafb5"/><path d="M306.4 340.2l-2.7 1.9l-1.5-5.2l2.6-1.9z" fill="#83849d"/><path d="M327.8 381.5l-8.5 5.3l0-9.9l8.5-5.3z" fill="#48495f" stroke="#0c0c0c" stroke-width="0.55"/><path d="M272.6 305.8l-1 0.2l-0.9-1.6l0.7-0.2z" fill="#8a8a92"/><path d="M199.5 303.4l-0.6-3.6l2-0.1l0.6 3.5z" fill="#8a8a92"/><path d="M258.1 306.2l-0.9-0.5l2.4-1.4l0.7 0.4z" fill="#8a8a92"/><path d="M284.1 305.3l-0.9 0.8l-3.3-1.4l0.7-0.6z" fill="#8a8a92"/><path d="M264.7 306.1l-1-0.2l1.1-1.6l0.7 0.2z" fill="#8a8a92"/><path d="M228.4 402.6l-10-4.2l0-9.9l10 4.1z" fill="#6d6d71" stroke="#0c0c0c" stroke-width="0.55"/><path d="M197.6 303.6l-0.7-3.7l2-0.1l0.6 3.6z" fill="#8a8a92"/><path d="M271.6 306l-0.9 0.2l-0.7-1.7l0.7-0.1z" fill="#8a8a92"/><path d="M237 309.9l-1.1-1.7l5.1-2.3l0.9 1.3z" fill="#99999f"/><path d="M307 333.1l-2.2 1.9l-1.2-6.1l2.1-1.9z" fill="#686a84"/><path d="M232.4 313.6l-1.2-1.9l4.7-3.5l1.1 1.7z" fill="#a6a6ac"/><path d="M265.7 306.3l-1-0.2l0.8-1.6l0.8 0.1z" fill="#8a8a92"/><path d="M195.6 303.8l-0.7-3.8l2-0.1l0.7 3.7z" fill="#8a8a92"/><path d="M193.6 304.3l-0.7-3.9l2-0.4l0.7 3.8z" fill="#939399"/><path d="M253.1 306.6l-0.9-0.7l3.4-1.4l0.8 0.6z" fill="#8a8a92"/><path d="M270.7 306.2l-1 0.1l-0.4-1.7l0.7-0.1z" fill="#8a8a92"/><path d="M266.7 306.4l-1-0.1l0.6-1.7l0.7 0z" fill="#8a8a92"/><path d="M278.2 305.9l-1 0.5l-2-1.5l0.7-0.4z" fill="#8a8a92"/><path d="M269.7 306.3l-1 0.1l-0.2-1.7l0.8-0.1z" fill="#8a8a92"/><path d="M329.6 301.6l-0.9 3.2l-1.2 2.5l0.8-3.1z" fill="#6a6a6e"/><path d="M267.7 306.4l-1 0l0.3-1.8l0.8 0.1z" fill="#8a8a92"/><path d="M268.7 306.4l-1 0l0.1-1.7l0.7 0z" fill="#8a8a92"/><path d="M202.3 357.9l-5.6-6.4l0-9.9l5.6 6.4z" fill="#69696d" stroke="#0c0c0c" stroke-width="0.55"/><path d="M294.4 306.4l-1 1.3l-4.4-1.9l0.8-1.1z" fill="#9595a2"/><path d="M259.1 306.7l-1-0.5l2.2-1.5l0.8 0.4z" fill="#8a8a92"/><path d="M289 305.8l-1 1.1l-3.9-1.6l0.8-0.9z" fill="#8f8f99"/><path d="M312 342.8l-3 2.3l-2.8 0l2.8-2.1z" fill="#646468"/><path d="M307.2 317.1l-1.5 2l-3.1-4.9l1.4-1.8z" fill="#8a8ba7"/><path d="M233.2 343.3l-2.7-1.9l1.6-5.1l2.6 1.8z" fill="#a2a2a8"/><path d="M307.6 324.9l-1.9 2.1l-1.8-6l1.8-1.9z" fill="#71728e"/><path d="M283.2 306.1l-1 0.8l-3.1-1.6l0.8-0.6z" fill="#8a8a92"/><path d="M277.2 306.4l-1 0.4l-1.9-1.6l0.9-0.3z" fill="#8a8a92"/><path d="M345.2 307.6l-1.1 4l-0.5-3.4l1.1-4z" fill="#797b9c"/><path d="M248.4 307.6l-1.1-1.1l4-1.5l0.9 0.9z" fill="#898990"/><path d="M243 308.6l-1.1-1.4l4.5-1.8l0.9 1.1z" fill="#8b8b91"/><path d="M232.1 336.3l-2.4-1.9l1.3-6.2l2.2 1.9z" fill="#909095"/><path d="M260.2 307.1l-1.1-0.4l2-1.6l0.8 0.3z" fill="#8a8a92"/><path d="M218.4 388.5l-8.7-5l0-9.9l8.7 5z" fill="#6f6f73" stroke="#0c0c0c" stroke-width="0.55"/><path d="M254.2 307.4l-1.1-0.8l3.3-1.5l0.8 0.6z" fill="#8a8a92"/><path d="M209.7 373.6l-7.4-5.8l0-9.9l7.4 5.8z" fill="#6e6e72" stroke="#0c0c0c" stroke-width="0.55"/><path d="M276.2 306.8l-1.2 0.4l-1.5-1.7l0.8-0.3z" fill="#8a8a92"/><path d="M306.2 345.1l-3.1 2l-2.3-3.2l2.9-1.8z" fill="#9d9eb3"/><path d="M299.4 308.8l-1.2 1.6l-4.8-2.7l1-1.3z" fill="#9c9cad"/><path d="M228.2 346.4l-3.2-2.1l2.9 0.1l2.9 2z" fill="#626378"/><path d="M230.9 320.4l-1.6-2l3.1-4.8l1.5 1.8z" fill="#a6a6ac"/><path d="M261.3 307.5l-1.1-0.4l1.7-1.7l0.9 0.3z" fill="#8a8a92"/><path d="M304 312.4l-1.4 1.8l-4.4-3.8l1.2-1.6z" fill="#9c9db4"/><path d="M231 328.2l-2-1.9l1.9-5.9l1.9 1.8z" fill="#97979c"/><path d="M282.2 306.9l-1.2 0.7l-2.8-1.7l0.9-0.6z" fill="#8a8a92"/><path d="M288 306.9l-1.2 1l-3.6-1.8l0.9-0.8z" fill="#8f8f99"/><path d="M275 307.2l-1.1 0.4l-1.3-1.8l0.9-0.3z" fill="#8a8a92"/><path d="M207.7 306.9l-1-3.2l1.2 2.5l1 3.1z" fill="#797b9c"/><path d="M330.9 300.7l-0.9 3.3l-1.3 0.8l0.9-3.2z" fill="#8b8b90"/><path d="M262.5 307.8l-1.2-0.3l1.5-1.8l0.9 0.2z" fill="#8a8a92"/><path d="M255.4 308.1l-1.2-0.7l3-1.7l0.9 0.5z" fill="#8a8a92"/><path d="M293.4 307.7l-1.2 1.3l-4.2-2.1l1-1.1z" fill="#9696a3"/><path d="M238.3 311.4l-1.3-1.5l4.9-2.7l1.1 1.4z" fill="#9b9ba0"/><path d="M273.9 307.6l-1.2 0.3l-1.1-1.9l1-0.2z" fill="#8a8a92"/><path d="M249.6 308.6l-1.2-1l3.8-1.7l0.9 0.7z" fill="#898a90"/><path d="M303.7 342.1l-2.9 1.8l-1.3-5.2l2.7-1.8z" fill="#85869d"/><path d="M234 348.2l-3.2-1.8l2.4-3.1l3 1.7z" fill="#afafb5"/><path d="M263.8 308l-1.3-0.2l1.2-1.9l1 0.2z" fill="#8a8a92"/><path d="M332.8 300.9l-0.9 3.3l-1.9-0.2l0.9-3.3z" fill="#8a8a92"/><path d="M272.7 307.9l-1.3 0.2l-0.7-1.9l0.9-0.2z" fill="#8a8a92"/><path d="M233.9 315.4l-1.5-1.8l4.6-3.7l1.3 1.5z" fill="#a8a8ae"/><path d="M281 307.6l-1.2 0.7l-2.6-1.9l1-0.5z" fill="#8a8a92"/><path d="M265 308.2l-1.2-0.2l0.9-1.9l1 0.2z" fill="#8a8a92"/><path d="M244.3 309.8l-1.3-1.2l4.3-2.1l1.1 1.1z" fill="#8c8c91"/><path d="M304.8 335l-2.6 1.9l-1.1-6.2l2.5-1.8z" fill="#6b6c85"/><path d="M271.4 308.1l-1.2 0.2l-0.5-2l1-0.1z" fill="#8a8a92"/><path d="M334.8 301l-0.9 3.4l-2-0.2l0.9-3.3z" fill="#8a8a92"/><path d="M266.3 308.3l-1.3-0.1l0.7-1.9l1 0.1z" fill="#8a8a92"/><path d="M192.4 314.1l-1.3-3.9l0.5-3.4l1.3 4z" fill="#7c7c81"/><path d="M256.7 308.7l-1.3-0.6l2.7-1.9l1 0.5z" fill="#8a8a92"/><path d="M270.2 308.3l-1.3 0l-0.2-1.9l1-0.1z" fill="#8a8a92"/><path d="M267.6 308.4l-1.3-0.1l0.4-1.9l1 0z" fill="#8a8a92"/><path d="M344.7 304.2l-1.1 4l-1.9-2.5l1-3.9z" fill="#7f819e"/><path d="M268.9 308.3l-1.3 0.1l0.1-2l1 0z" fill="#8a8a92"/><path d="M336.8 301.1l-1 3.6l-1.9-0.3l0.9-3.4z" fill="#8a8a92"/><path d="M286.8 307.9l-1.2 1l-3.4-2l1-0.8z" fill="#8f909a"/><path d="M236.2 345l-3-1.7l1.5-5.2l2.9 1.6z" fill="#a3a3a8"/><path d="M305.7 319.1l-1.8 1.9l-2.9-5l1.6-1.8z" fill="#8d8ea9"/><path d="M338.7 301.2l-1 3.7l-1.9-0.2l1-3.6z" fill="#8a8a92"/><path d="M279.8 308.3l-1.4 0.6l-2.2-2.1l1-0.4z" fill="#8a8a92"/><path d="M309 345.1l-3.4 2l-2.5 0l3.1-2z" fill="#5d5d61"/><path d="M298.2 310.4l-1.4 1.6l-4.6-3l1.2-1.3z" fill="#9d9eae"/><path d="M250.9 309.5l-1.3-0.9l3.5-2l1.1 0.8z" fill="#8a8a91"/><path d="M206.4 306.1l-1-3.2l1.3 0.8l1 3.2z" fill="#7d7e98"/><path d="M305.7 327l-2.1 1.9l-1.7-6l2-1.9z" fill="#747590"/><path d="M340.7 301.3l-1 3.8l-2-0.2l1-3.7z" fill="#8a8a92"/><path d="M234.7 338.1l-2.6-1.8l1.1-6.2l2.6 1.7z" fill="#919196"/><path d="M258.1 309.2l-1.4-0.5l2.4-2l1.1 0.4z" fill="#8a8a92"/><path d="M342.7 301.8l-1 3.9l-2-0.6l1-3.8z" fill="#9697a9"/><path d="M292.2 309l-1.4 1.3l-4-2.4l1.2-1z" fill="#9697a3"/><path d="M303.1 347.1l-3.4 1.7l-2-3.2l3.1-1.7z" fill="#9e9fb3"/><path d="M278.4 308.9l-1.4 0.5l-2-2.2l1.2-0.4z" fill="#8a8a92"/><path d="M302.6 314.2l-1.6 1.8l-4.2-4l1.4-1.6z" fill="#9e9fb5"/><path d="M204.5 306.4l-1.1-3.4l2-0.1l1 3.2z" fill="#8a8a92"/><path d="M239.8 312.9l-1.5-1.5l4.7-2.8l1.3 1.2z" fill="#9c9ca1"/><path d="M232.8 322.2l-1.9-1.8l3-5l1.7 1.7z" fill="#a8a8ae"/><path d="M285.6 308.9l-1.5 0.9l-3.1-2.2l1.2-0.7z" fill="#8f909a"/><path d="M309.6 401.2l-10.8 3.5l0-9.9l10.8-3.5z" fill="#464755" stroke="#0c0c0c" stroke-width="0.55"/><path d="M245.7 311l-1.4-1.2l4.1-2.2l1.2 1z" fill="#8c8c92"/><path d="M259.5 309.7l-1.4-0.5l2.1-2.1l1.1 0.4z" fill="#8a8a92"/><path d="M231.6 348.4l-3.4-2l2.6 0l3.2 1.8z" fill="#5d5e72"/><path d="M233.2 330.1l-2.2-1.9l1.8-6l2.1 1.8z" fill="#99999e"/><path d="M202.6 306.7l-1.1-3.5l1.9-0.2l1.1 3.4z" fill="#8a8a92"/><path d="M252.4 310.3l-1.5-0.8l3.3-2.1l1.2 0.7z" fill="#8b8b92"/><path d="M343.8 322.3l-3.6 7l0-9.9l3.6-7z" fill="#737594" stroke="#0c0c0c" stroke-width="0.55"/><path d="M300.8 343.9l-3.1 1.7l-1.3-5.4l3.1-1.5z" fill="#86879c"/><path d="M277 309.4l-1.5 0.4l-1.6-2.2l1.1-0.4z" fill="#8a8a92"/><path d="M237.5 349.9l-3.5-1.7l2.2-3.2l3.3 1.6z" fill="#aeaeb4"/><path d="M328.7 304.8l-1.3 3.2l-1.2 2.4l1.3-3.1z" fill="#616164"/><path d="M200.6 306.9l-1.1-3.5l2-0.2l1.1 3.5z" fill="#8a8a92"/><path d="M261 310.1l-1.5-0.4l1.8-2.2l1.2 0.3z" fill="#8a8a92"/><path d="M192.9 310.8l-1.3-4l2-2.5l1.2 3.9z" fill="#9b9ba0"/><path d="M235.6 317.1l-1.7-1.7l4.4-4l1.5 1.5z" fill="#aaaab0"/><path d="M198.7 307.2l-1.1-3.6l1.9-0.2l1.1 3.5z" fill="#8a8a92"/><path d="M239.3 405.7l-10.9-3.1l0-10l10.9 3.2z" fill="#67676b" stroke="#0c0c0c" stroke-width="0.55"/><path d="M275.5 309.8l-1.5 0.4l-1.3-2.3l1.2-0.3z" fill="#8a8a92"/><path d="M302.2 336.9l-2.7 1.8l-1.1-6.3l2.7-1.7z" fill="#6d6e86"/><path d="M290.8 310.3l-1.6 1.1l-3.6-2.5l1.2-1z" fill="#9797a3"/><path d="M284.1 309.8l-1.5 0.8l-2.8-2.3l1.2-0.7z" fill="#909099"/><path d="M262.6 310.4l-1.6-0.3l1.5-2.3l1.3 0.2z" fill="#8a8a92"/><path d="M196.8 307.5l-1.2-3.7l2-0.2l1.1 3.6z" fill="#8a8a92"/><path d="M239.5 346.6l-3.3-1.6l1.4-5.3l3.1 1.5z" fill="#a2a2a8"/><path d="M296.8 312l-1.7 1.5l-4.3-3.2l1.4-1.3z" fill="#9e9faf"/><path d="M274 310.2l-1.6 0.3l-1-2.4l1.3-0.2z" fill="#8a8a92"/><path d="M194.8 308.2l-1.2-3.9l2-0.5l1.2 3.7z" fill="#96969b"/><path d="M254 311.1l-1.6-0.8l3-2.2l1.3 0.6z" fill="#8b8b92"/><path d="M264.2 310.6l-1.6-0.2l1.2-2.4l1.2 0.2z" fill="#8a8a92"/><path d="M247.3 312.1l-1.6-1.1l3.9-2.4l1.3 0.9z" fill="#8d8d92"/><path d="M303.9 321l-2 1.9l-2.8-5.2l1.9-1.7z" fill="#9091aa"/><path d="M272.4 310.5l-1.6 0.2l-0.6-2.4l1.2-0.2z" fill="#8a8a92"/><path d="M265.8 310.8l-1.6-0.2l0.8-2.4l1.3 0.1z" fill="#8a8a92"/><path d="M270.8 310.7l-1.7 0.1l-0.2-2.5l1.3 0z" fill="#8a8a92"/><path d="M237.6 339.7l-2.9-1.6l1.1-6.3l2.7 1.6z" fill="#919197"/><path d="M303.6 328.9l-2.5 1.8l-1.6-6.1l2.4-1.7z" fill="#777891"/><path d="M267.5 310.8l-1.7 0l0.5-2.5l1.3 0.1z" fill="#8a8a92"/><path d="M241.5 314.4l-1.7-1.5l4.5-3.1l1.4 1.2z" fill="#9c9ca2"/><path d="M305.6 347.1l-3.6 1.9l-2.3-0.2l3.4-1.7z" fill="#565659"/><path d="M269.1 310.8l-1.6 0l0.1-2.4l1.3-0.1z" fill="#8a8a92"/><path d="M299.7 348.8l-3.6 1.6l-1.8-3.3l3.4-1.5z" fill="#9e9fb2"/><path d="M209.2 310l-1.5-3.1l1.2 2.4l1.5 3.1z" fill="#78799a"/><path d="M282.6 310.6l-1.7 0.7l-2.5-2.4l1.4-0.6z" fill="#909099"/><path d="M301 316l-1.9 1.7l-4-4.2l1.7-1.5z" fill="#a0a1b6"/><path d="M340.2 339.2l-5.3 6.6l0-9.9l5.3-6.6z" fill="#686986" stroke="#0c0c0c" stroke-width="0.55"/><path d="M330 304l-1.4 3.2l-1.2 0.8l1.3-3.2z" fill="#858589"/><path d="M344.1 311.6l-1.6 3.9l-0.5-3.4l1.6-3.9z" fill="#757797"/><path d="M196.7 331.7l-4-6.9l0-9.9l4 6.9z" fill="#626265" stroke="#0c0c0c" stroke-width="0.55"/><path d="M319.3 386.8l-9.7 4.5l0-9.9l9.7-4.5z" fill="#47475a" stroke="#0c0c0c" stroke-width="0.55"/><path d="M255.7 311.7l-1.7-0.6l2.7-2.4l1.4 0.5z" fill="#8c8c93"/><path d="M234.9 324l-2.1-1.8l2.8-5.1l2 1.6z" fill="#aaaab0"/><path d="M289.2 311.4l-1.7 1.1l-3.4-2.7l1.5-0.9z" fill="#9797a3"/><path d="M297.7 345.6l-3.4 1.5l-1.1-5.4l3.2-1.5z" fill="#86879b"/><path d="M235.8 331.8l-2.6-1.7l1.7-6.1l2.4 1.6z" fill="#9a9aa0"/><path d="M241.2 351.3l-3.7-1.4l2-3.3l3.4 1.3z" fill="#adadb3"/><path d="M235.3 350.2l-3.7-1.8l2.4-0.2l3.5 1.7z" fill="#58596c"/><path d="M237.6 318.7l-2-1.6l4.2-4.2l1.7 1.5z" fill="#acacb2"/><path d="M280.9 311.3l-1.7 0.7l-2.2-2.6l1.4-0.5z" fill="#909099"/><path d="M331.9 304.2l-1.4 3.3l-1.9-0.3l1.4-3.2z" fill="#8a8a92"/><path d="M249.1 313.1l-1.8-1l3.6-2.6l1.5 0.8z" fill="#8d8d92"/><path d="M295.1 313.5l-1.9 1.3l-4-3.4l1.6-1.1z" fill="#9fa0af"/><path d="M257.5 312.3l-1.8-0.6l2.4-2.5l1.4 0.5z" fill="#8c8c94"/><path d="M334.9 355.7l-7.1 6l0-9.9l7.1-6z" fill="#595b75" stroke="#0c0c0c" stroke-width="0.55"/><path d="M242.9 347.9l-3.4-1.3l1.2-5.4l3.3 1.3z" fill="#a0a0a6"/><path d="M299.5 338.7l-3.1 1.5l-0.9-6.3l2.9-1.5z" fill="#6e6f85"/><path d="M327.8 371.6l-8.5 5.3l0-9.9l8.5-5.3z" fill="#48495f" stroke="#0c0c0c" stroke-width="0.55"/><path d="M333.9 304.4l-1.5 3.5l-1.9-0.4l1.4-3.3z" fill="#8a8a92"/><path d="M228.4 392.6l-10-4.1l0-9.9l10 4.1z" fill="#6d6d71" stroke="#0c0c0c" stroke-width="0.55"/><path d="M279.2 312l-1.9 0.5l-1.8-2.7l1.5-0.4z" fill="#909099"/><path d="M243.4 315.7l-1.9-1.3l4.2-3.4l1.6 1.1z" fill="#9d9da2"/><path d="M335.8 304.7l-1.5 3.5l-1.9-0.3l1.5-3.5z" fill="#8a8a92"/><path d="M207.9 309.2l-1.5-3.1l1.3 0.8l1.5 3.1z" fill="#787993"/><path d="M287.5 312.5l-1.9 1l-3-2.9l1.5-0.8z" fill="#9798a3"/><path d="M259.3 312.8l-1.8-0.5l2-2.6l1.5 0.4z" fill="#8d8d94"/><path d="M202.3 348l-5.6-6.4l0-9.9l5.6 6.4z" fill="#69696d" stroke="#0c0c0c" stroke-width="0.55"/><path d="M296.1 350.4l-3.8 1.4l-1.6-3.4l3.6-1.3z" fill="#9e9fb0"/><path d="M301.9 322.9l-2.4 1.7l-2.6-5.3l2.2-1.6z" fill="#9293ab"/><path d="M240.7 341.2l-3.1-1.5l0.9-6.3l3 1.4z" fill="#909096"/><path d="M298.8 404.7l-11.5 2.4l0-9.9l11.5-2.4z" fill="#43444d" stroke="#0c0c0c" stroke-width="0.55"/><path d="M337.7 304.9l-1.5 3.6l-1.9-0.3l1.5-3.5z" fill="#8a8a92"/><path d="M194.2 318l-1.8-3.9l0.5-3.3l1.8 3.8z" fill="#828287"/><path d="M301.1 330.7l-2.7 1.7l-1.4-6.2l2.5-1.6z" fill="#797a91"/><path d="M251 314.1l-1.9-1l3.3-2.8l1.6 0.8z" fill="#8d8d92"/><path d="M343.6 308.2l-1.6 3.9l-1.9-2.6l1.6-3.8z" fill="#8485a2"/><path d="M277.3 312.5l-1.9 0.5l-1.4-2.8l1.5-0.4z" fill="#8f9099"/><path d="M302 349l-3.9 1.7l-2-0.3l3.6-1.6z" fill="#4f4f52"/><path d="M299.1 317.7l-2.2 1.6l-3.7-4.5l1.9-1.3z" fill="#a2a3b7"/><path d="M261.3 313.2l-2-0.4l1.7-2.7l1.6 0.3z" fill="#8d8d95"/><path d="M294.3 347.1l-3.6 1.3l-0.9-5.5l3.4-1.2z" fill="#868799"/><path d="M206 309.6l-1.5-3.2l1.9-0.3l1.5 3.1z" fill="#8a8a92"/><path d="M339.7 305.1l-1.6 3.7l-1.9-0.3l1.5-3.6z" fill="#8a8a92"/><path d="M245.1 352.6l-3.9-1.3l1.7-3.4l3.7 1.2z" fill="#ababb1"/><path d="M251 407.7l-11.7-2l0-9.9l11.7 2z" fill="#5e5e62" stroke="#0c0c0c" stroke-width="0.55"/><path d="M218.4 378.6l-8.7-5l0-9.9l8.7 5z" fill="#6f6f73" stroke="#0c0c0c" stroke-width="0.55"/><path d="M293.2 314.8l-2 1.3l-3.7-3.6l1.7-1.1z" fill="#a0a0af"/><path d="M275.4 313l-2 0.3l-1-2.8l1.6-0.3z" fill="#8f9098"/><path d="M237.3 325.6l-2.4-1.6l2.7-5.3l2.2 1.5z" fill="#ababb1"/><path d="M209.7 363.7l-7.4-5.8l0-9.9l7.4 5.8z" fill="#6e6e72" stroke="#0c0c0c" stroke-width="0.55"/><path d="M341.7 305.7l-1.6 3.8l-2-0.7l1.6-3.7z" fill="#9899ab"/><path d="M263.3 313.5l-2-0.3l1.3-2.8l1.6 0.2z" fill="#8d8e96"/><path d="M285.6 313.5l-2 0.9l-2.7-3.1l1.7-0.7z" fill="#9798a3"/><path d="M204.2 310l-1.6-3.3l1.9-0.3l1.5 3.2z" fill="#8a8a92"/><path d="M239.8 320.2l-2.2-1.5l3.9-4.3l1.9 1.3z" fill="#acacb2"/><path d="M238.5 333.4l-2.7-1.6l1.5-6.2l2.7 1.6z" fill="#9a9aa0"/><path d="M239.2 351.7l-3.9-1.5l2.2-0.3l3.7 1.4z" fill="#535465"/><path d="M246.6 349.1l-3.7-1.2l1.1-5.4l3.4 1.1z" fill="#9e9ea3"/><path d="M273.4 313.3l-2 0.3l-0.6-2.9l1.6-0.2z" fill="#8f8f98"/><path d="M265.3 313.7l-2-0.2l0.9-2.9l1.6 0.2z" fill="#8e8e96"/><path d="M245.5 316.9l-2.1-1.2l3.9-3.6l1.8 1z" fill="#9d9da2"/><path d="M296.4 340.2l-3.2 1.5l-0.8-6.4l3.1-1.4z" fill="#6f7083"/><path d="M271.4 313.6l-2 0.1l-0.3-2.9l1.7-0.1z" fill="#8f8f98"/><path d="M253.1 314.9l-2.1-0.8l3-3l1.7 0.6z" fill="#8d8d93"/><path d="M267.3 313.7l-2 0l0.5-2.9l1.7 0z" fill="#8e8e97"/><path d="M202.3 310.4l-1.7-3.5l2-0.2l1.6 3.3z" fill="#8a8a92"/><path d="M269.4 313.7l-2.1 0l0.2-2.9l1.6 0z" fill="#8f8f97"/><path d="M292.3 351.8l-4 1.2l-1.4-3.5l3.8-1.1z" fill="#9e9ead"/><path d="M200.4 310.8l-1.7-3.6l1.9-0.3l1.7 3.5z" fill="#8a8a92"/><path d="M244 342.5l-3.3-1.3l0.8-6.4l3.2 1.3z" fill="#8f8f94"/><path d="M283.6 314.4l-2.1 0.7l-2.3-3.1l1.7-0.7z" fill="#9798a2"/><path d="M290.7 348.4l-3.8 1.1l-0.7-5.5l3.6-1.1z" fill="#868696"/><path d="M194.7 314.6l-1.8-3.8l1.9-2.6l1.8 3.7z" fill="#9f9fa5"/><path d="M299.5 324.6l-2.5 1.6l-2.4-5.5l2.3-1.4z" fill="#9495ab"/><path d="M249.2 353.7l-4.1-1.1l1.5-3.5l3.8 1z" fill="#a8a8ae"/><path d="M296.9 319.3l-2.3 1.4l-3.4-4.6l2-1.3z" fill="#a3a4b7"/><path d="M291.2 316.1l-2.2 1.2l-3.4-3.8l1.9-1z" fill="#a0a1af"/><path d="M198.5 311.2l-1.7-3.7l1.9-0.3l1.7 3.6z" fill="#8a8a92"/><path d="M255.2 315.6l-2.1-0.7l2.6-3.2l1.8 0.6z" fill="#8f8f94"/><path d="M298.4 332.4l-2.9 1.5l-1.3-6.2l2.8-1.5z" fill="#7a7b91"/><path d="M298.1 350.7l-4.1 1.5l-1.7-0.4l3.8-1.4z" fill="#48484b"/><path d="M250.4 350.1l-3.8-1l0.8-5.5l3.7 1z" fill="#9a9aa0"/><path d="M328.6 307.2l-1.8 3.1l-1.2 0.8l1.8-3.1z" fill="#7e7e83"/><path d="M287.3 407.1l-12 1.4l0-10l12-1.3z" fill="#3e3e43" stroke="#0c0c0c" stroke-width="0.55"/><path d="M196.6 311.9l-1.8-3.7l2-0.7l1.7 3.7z" fill="#98989d"/><path d="M247.8 318l-2.3-1.1l3.6-3.8l1.9 1z" fill="#9d9da2"/><path d="M242.3 321.6l-2.5-1.4l3.6-4.5l2.1 1.2z" fill="#acacb3"/><path d="M240 327.2l-2.7-1.6l2.5-5.4l2.5 1.4z" fill="#acacb2"/><path d="M281.5 315.1l-2.2 0.7l-2-3.3l1.9-0.5z" fill="#9797a2"/><path d="M263.1 408.7l-12.1-1l0-9.9l12.1 1z" fill="#535356" stroke="#0c0c0c" stroke-width="0.55"/><path d="M243.4 353.1l-4.2-1.4l2-0.4l3.9 1.3z" fill="#4f4f5f"/><path d="M241.5 334.8l-3-1.4l1.5-6.2l2.8 1.3z" fill="#99999f"/><path d="M288.3 353l-4.2 1l-1-3.6l3.8-0.9z" fill="#9d9daa"/><path d="M293.2 341.7l-3.4 1.2l-0.7-6.4l3.3-1.2z" fill="#6f7081"/><path d="M257.5 316.2l-2.3-0.6l2.3-3.3l1.8 0.5z" fill="#909096"/><path d="M286.9 349.5l-3.8 0.9l-0.7-5.5l3.8-0.9z" fill="#848592"/><path d="M330.5 307.5l-1.8 3.3l-1.9-0.5l1.8-3.1z" fill="#8a8a92"/><path d="M253.4 354.5l-4.2-0.8l1.2-3.6l3.9 0.8z" fill="#a5a5aa"/><path d="M275.3 408.5l-12.2 0.2l0-9.9l12.2-0.3z" fill="#444447" stroke="#0c0c0c" stroke-width="0.55"/><path d="M279.3 315.8l-2.3 0.5l-1.6-3.3l1.9-0.5z" fill="#9797a1"/><path d="M247.4 343.6l-3.4-1.1l0.7-6.4l3.4 1.1z" fill="#8c8c91"/><path d="M342.5 315.5l-2.3 3.9l-0.4-3.5l2.2-3.8z" fill="#707291"/><path d="M289 317.3l-2.4 1l-3-3.9l2-0.9z" fill="#a0a1af"/><path d="M309.6 391.3l-10.8 3.5l0-10l10.8-3.4z" fill="#464755" stroke="#0c0c0c" stroke-width="0.55"/><path d="M254.3 350.9l-3.9-0.8l0.7-5.5l3.8 0.7z" fill="#96969b"/><path d="M259.9 316.6l-2.4-0.4l1.8-3.4l2 0.4z" fill="#919198"/><path d="M332.4 307.9l-1.9 3.3l-1.8-0.4l1.8-3.3z" fill="#8a8a92"/><path d="M294.6 320.7l-2.6 1.4l-3-4.8l2.2-1.2z" fill="#a4a5b7"/><path d="M209.9 312.3l-2-3.1l1.3 0.8l1.9 3z" fill="#72748d"/><path d="M250.3 318.9l-2.5-0.9l3.2-3.9l2.1 0.8z" fill="#9c9ca2"/><path d="M297 326.2l-2.8 1.5l-2.2-5.6l2.6-1.4z" fill="#9596ab"/><path d="M294 352.2l-4.3 1.3l-1.4-0.5l4-1.2z" fill="#414143"/><path d="M284.1 354l-4.3 0.8l-0.8-3.7l4.1-0.7z" fill="#9b9ba7"/><path d="M277 316.3l-2.4 0.5l-1.2-3.5l2-0.3z" fill="#9797a0"/><path d="M295.5 333.9l-3.1 1.4l-1.2-6.3l3-1.3z" fill="#7b7b8f"/><path d="M262.3 317l-2.4-0.4l1.4-3.4l2 0.3z" fill="#929299"/><path d="M283.1 350.4l-4.1 0.7l-0.4-5.5l3.8-0.7z" fill="#82828d"/><path d="M334.3 308.2l-2 3.4l-1.8-0.4l1.9-3.3z" fill="#8a8a92"/><path d="M257.7 355.1l-4.3-0.6l0.9-3.6l4.1 0.6z" fill="#a0a0a6"/><path d="M244.9 322.9l-2.6-1.3l3.2-4.7l2.3 1.1z" fill="#acacb2"/><path d="M239.3 395.8l-10.9-3.2l0-9.9l10.9 3.1z" fill="#67676b" stroke="#0c0c0c" stroke-width="0.55"/><path d="M289.8 342.9l-3.6 1.1l-0.6-6.4l3.5-1.1z" fill="#6e6f7d"/><path d="M274.6 316.8l-2.5 0.3l-0.7-3.5l2-0.3z" fill="#96969f"/><path d="M247.8 354.2l-4.4-1.1l1.7-0.5l4.1 1.1z" fill="#4a4b59"/><path d="M264.7 317.2l-2.4-0.2l1-3.5l2 0.2z" fill="#93939b"/><path d="M258.4 351.5l-4.1-0.6l0.6-5.6l3.8 0.6z" fill="#919196"/><path d="M242.8 328.5l-2.8-1.3l2.3-5.6l2.6 1.3z" fill="#ababb1"/><path d="M286.6 318.3l-2.6 1l-2.5-4.2l2.1-0.7z" fill="#a0a1ae"/><path d="M244.7 336.1l-3.2-1.3l1.3-6.3l3.1 1.2z" fill="#98989d"/><path d="M208.1 312.8l-2.1-3.2l1.9-0.4l2 3.1z" fill="#8a8a92"/><path d="M272.1 317.1l-2.4 0.1l-0.3-3.5l2-0.1z" fill="#95969e"/><path d="M267.2 317.3l-2.5-0.1l0.6-3.5l2 0z" fill="#94949c"/><path d="M336.2 308.5l-2 3.5l-1.9-0.4l2-3.4z" fill="#8a8a92"/><path d="M279.8 354.8l-4.4 0.5l-0.5-3.7l4.1-0.5z" fill="#9999a3"/><path d="M269.7 317.2l-2.5 0.1l0.1-3.6l2.1 0z" fill="#95959d"/><path d="M251.1 344.6l-3.7-1l0.7-6.4l3.5 0.9z" fill="#88888d"/><path d="M262.1 355.5l-4.4-0.4l0.7-3.6l4.1 0.3z" fill="#9c9ca1"/><path d="M279 351.1l-4.1 0.5l-0.2-5.6l3.9-0.4z" fill="#7f8088"/><path d="M252.8 319.8l-2.5-0.9l2.8-4l2.1 0.7z" fill="#9b9ba1"/><path d="M262.5 351.8l-4.1-0.3l0.3-5.6l4 0.3z" fill="#8b8b90"/><path d="M196.7 321.8l-2.5-3.8l0.5-3.4l2.4 3.8z" fill="#87878c"/><path d="M342 312.1l-2.2 3.8l-1.9-2.7l2.2-3.7z" fill="#888aa6"/><path d="M206.3 313.3l-2.1-3.3l1.8-0.4l2.1 3.2z" fill="#8a8a92"/><path d="M275.4 355.3l-4.4 0.3l-0.2-3.7l4.1-0.3z" fill="#96969e"/><path d="M338.1 308.8l-2.1 3.6l-1.8-0.4l2-3.5z" fill="#8a8a92"/><path d="M266.5 355.7l-4.4-0.2l0.4-3.7l4.1 0.2z" fill="#96969c"/><path d="M292 322.1l-2.7 1.2l-2.7-5l2.4-1z" fill="#a4a5b6"/><path d="M289.7 353.5l-4.4 1.1l-1.2-0.6l4.2-1z" fill="#3a3a3c"/><path d="M274.9 351.6l-4.1 0.3l-0.1-5.6l4-0.3z" fill="#7c7c82"/><path d="M271 355.6l-4.5 0.1l0.1-3.7l4.2-0.1z" fill="#939399"/><path d="M340.2 329.3l-5.3 6.6l0-10l5.3-6.5z" fill="#686986" stroke="#0c0c0c" stroke-width="0.55"/><path d="M266.6 352l-4.1-0.2l0.2-5.6l4 0.2z" fill="#848489"/><path d="M286.2 344l-3.8 0.9l-0.4-6.5l3.6-0.8z" fill="#6c6d79"/><path d="M270.8 351.9l-4.2 0.1l0.1-5.6l4-0.1z" fill="#7c7c81"/><path d="M340.1 309.5l-2.2 3.7l-1.9-0.8l2.1-3.6z" fill="#9a9bac"/><path d="M294.2 327.7l-3 1.3l-1.9-5.7l2.7-1.2z" fill="#9596a9"/><path d="M284 319.3l-2.6 0.7l-2.1-4.2l2.2-0.7z" fill="#a0a0ad"/><path d="M319.3 376.9l-9.7 4.5l0-10l9.7-4.4z" fill="#47475a" stroke="#0c0c0c" stroke-width="0.55"/><path d="M292.4 335.3l-3.3 1.2l-1.1-6.4l3.2-1.1z" fill="#7a7b8d"/><path d="M204.4 313.8l-2.1-3.4l1.9-0.4l2.1 3.3z" fill="#8a8a92"/><path d="M252.3 355.1l-4.5-0.9l1.4-0.5l4.2 0.8z" fill="#464654"/><path d="M247.7 324l-2.8-1.1l2.9-4.9l2.5 0.9z" fill="#ababb1"/><path d="M255.5 320.5l-2.7-0.7l2.4-4.2l2.3 0.6z" fill="#9a9a9f"/><path d="M254.9 345.3l-3.8-0.7l0.5-6.5l3.7 0.8z" fill="#838388"/><path d="M248.1 337.2l-3.4-1.1l1.2-6.4l3.2 1.1z" fill="#95959a"/><path d="M245.9 329.7l-3.1-1.2l2.1-5.6l2.8 1.1z" fill="#a9a9af"/><path d="M202.6 314.2l-2.2-3.4l1.9-0.4l2.1 3.4z" fill="#8a8a92"/><path d="M326.8 310.3l-2.2 3.1l-1.2 0.6l2.2-2.9z" fill="#77777b"/><path d="M334.9 345.8l-7.1 6l0-9.9l7.1-6z" fill="#595b75" stroke="#0c0c0c" stroke-width="0.55"/><path d="M281.4 320l-2.8 0.7l-1.6-4.4l2.3-0.5z" fill="#a0a0ab"/><path d="M285.3 354.6l-4.6 0.8l-0.9-0.6l4.3-0.8z" fill="#333336"/><path d="M282.4 344.9l-3.8 0.7l-0.4-6.5l3.8-0.7z" fill="#6a6b75"/><path d="M327.8 361.7l-8.5 5.3l0-9.9l8.5-5.3z" fill="#48495f" stroke="#0c0c0c" stroke-width="0.55"/><path d="M289.3 323.3l-2.9 1l-2.4-5l2.6-1z" fill="#a4a5b4"/><path d="M258.3 321l-2.8-0.5l2-4.3l2.4 0.4z" fill="#98989e"/><path d="M228.4 382.7l-10-4.1l0-9.9l10 4.1z" fill="#6d6d71" stroke="#0c0c0c" stroke-width="0.55"/><path d="M200.8 314.7l-2.3-3.5l1.9-0.4l2.2 3.4z" fill="#8a8a92"/><path d="M258.7 345.9l-3.8-0.6l0.4-6.4l3.7 0.5z" fill="#7e7e82"/><path d="M256.9 355.8l-4.6-0.7l1.1-0.6l4.3 0.6z" fill="#42424e"/><path d="M197.1 318.4l-2.4-3.8l1.9-2.7l2.3 3.7z" fill="#a4a4a9"/><path d="M289.1 336.5l-3.5 1.1l-0.9-6.5l3.3-1z" fill="#7a7a8a"/><path d="M250.6 325l-2.9-1l2.6-5.1l2.5 0.9z" fill="#a9a9af"/><path d="M202.3 338.1l-5.6-6.4l0-9.9l5.6 6.4z" fill="#69696d" stroke="#0c0c0c" stroke-width="0.55"/><path d="M278.6 320.7l-2.8 0.5l-1.2-4.4l2.4-0.5z" fill="#9f9faa"/><path d="M291.2 329l-3.2 1.1l-1.6-5.8l2.9-1z" fill="#9596a7"/><path d="M278.6 345.6l-3.9 0.4l-0.3-6.5l3.8-0.4z" fill="#67686f"/><path d="M328.7 310.8l-2.4 3.1l-1.7-0.5l2.2-3.1z" fill="#8a8a92"/><path d="M198.9 315.6l-2.3-3.7l1.9-0.7l2.3 3.5z" fill="#99999f"/><path d="M298.8 394.8l-11.5 2.4l0-9.9l11.5-2.5z" fill="#43444d" stroke="#0c0c0c" stroke-width="0.55"/><path d="M261.2 321.4l-2.9-0.4l1.6-4.4l2.4 0.4z" fill="#96969c"/><path d="M280.7 355.4l-4.7 0.6l-0.6-0.7l4.4-0.5z" fill="#333337"/><path d="M262.7 346.2l-4-0.3l0.3-6.5l3.9 0.3z" fill="#77777c"/><path d="M251.6 338.1l-3.5-0.9l1-6.4l3.3 0.8z" fill="#919197"/><path d="M261.7 356.2l-4.8-0.4l0.8-0.7l4.4 0.4z" fill="#3e3f49"/><path d="M249.1 330.8l-3.2-1.1l1.8-5.7l2.9 1z" fill="#a7a7ad"/><path d="M275.8 321.2l-2.9 0.4l-0.8-4.5l2.5-0.3z" fill="#9e9ea8"/><path d="M274.7 346l-4 0.3l-0.1-6.5l3.8-0.3z" fill="#646469"/><path d="M212.3 315.3l-2.4-3l1.2 0.7l2.4 2.9z" fill="#6d6e87"/><path d="M264.1 321.7l-2.9-0.3l1.1-4.4l2.4 0.2z" fill="#98989e"/><path d="M266.7 346.4l-4-0.2l0.2-6.5l3.8 0.2z" fill="#707074"/><path d="M286.4 324.3l-3 1l-2-5.3l2.6-0.7z" fill="#a4a4b2"/><path d="M251 397.8l-11.7-2l0-10l11.7 2.1z" fill="#5e5e62" stroke="#0c0c0c" stroke-width="0.55"/><path d="M276 356l-4.8 0.3l-0.2-0.7l4.4-0.3z" fill="#35353b"/><path d="M218.4 368.7l-8.7-5l0-9.9l8.7 5z" fill="#6f6f73" stroke="#0c0c0c" stroke-width="0.55"/><path d="M270.7 346.3l-4 0.1l0-6.5l3.9-0.1z" fill="#68686c"/><path d="M330.5 311.2l-2.4 3.2l-1.8-0.5l2.4-3.1z" fill="#8a8a92"/><path d="M272.9 321.6l-2.9 0.2l-0.3-4.6l2.4-0.1z" fill="#9d9da6"/><path d="M209.7 353.8l-7.4-5.8l0-9.9l7.4 5.8z" fill="#6e6e72" stroke="#0c0c0c" stroke-width="0.55"/><path d="M266.4 356.4l-4.7-0.2l0.4-0.7l4.4 0.2z" fill="#3b3b44"/><path d="M267 321.8l-2.9-0.1l0.6-4.5l2.5 0.1z" fill="#9a9aa1"/><path d="M270 321.8l-3 0l0.2-4.5l2.5-0.1z" fill="#9b9ba3"/><path d="M253.7 325.8l-3.1-0.8l2.2-5.2l2.7 0.7z" fill="#a7a7ad"/><path d="M285.6 337.6l-3.6 0.8l-0.7-6.5l3.4-0.8z" fill="#787986"/><path d="M340.2 319.4l-2.7 3.7l-0.5-3.5l2.8-3.7z" fill="#6a6c89"/><path d="M288 330.1l-3.3 1l-1.3-5.8l3-1z" fill="#9595a5"/><path d="M332.3 311.6l-2.4 3.3l-1.8-0.5l2.4-3.2z" fill="#8a8a92"/><path d="M255.3 338.9l-3.7-0.8l0.8-6.5l3.5 0.7z" fill="#8d8d92"/><path d="M210.6 315.8l-2.5-3l1.8-0.5l2.4 3z" fill="#8a8a92"/><path d="M283.4 325.3l-3.2 0.7l-1.6-5.3l2.8-0.7z" fill="#a3a3b0"/><path d="M252.4 331.6l-3.3-0.8l1.5-5.8l3.1 0.8z" fill="#a4a4aa"/><path d="M256.9 326.4l-3.2-0.6l1.8-5.3l2.8 0.5z" fill="#a4a4aa"/><path d="M282 338.4l-3.8 0.7l-0.5-6.6l3.6-0.6z" fill="#767681"/><path d="M334.2 312l-2.6 3.4l-1.7-0.5l2.4-3.3z" fill="#8a8a92"/><path d="M208.8 316.4l-2.5-3.1l1.8-0.5l2.5 3z" fill="#8a8a92"/><path d="M259 339.4l-3.7-0.5l0.6-6.6l3.6 0.6z" fill="#87878c"/><path d="M284.7 331.1l-3.4 0.8l-1.1-5.9l3.2-0.7z" fill="#9394a1"/><path d="M280.2 326l-3.3 0.6l-1.1-5.4l2.8-0.5z" fill="#a1a2ad"/><path d="M287.3 397.2l-12 1.3l0-9.9l12-1.3z" fill="#3e3e43" stroke="#0c0c0c" stroke-width="0.55"/><path d="M336 312.4l-2.6 3.5l-1.8-0.5l2.6-3.4z" fill="#8a8a92"/><path d="M260.2 326.9l-3.3-0.5l1.4-5.4l2.9 0.4z" fill="#a1a1a7"/><path d="M278.2 339.1l-3.8 0.4l-0.3-6.5l3.6-0.5z" fill="#73737b"/><path d="M255.9 332.3l-3.5-0.7l1.3-5.8l3.2 0.6z" fill="#a0a0a6"/><path d="M263.1 398.8l-12.1-1l0-9.9l12.1 0.9z" fill="#535356" stroke="#0c0c0c" stroke-width="0.55"/><path d="M207.1 317l-2.7-3.2l1.9-0.5l2.5 3.1z" fill="#8a8a92"/><path d="M339.8 315.9l-2.8 3.7l-1.7-2.8l2.6-3.6z" fill="#8c8da9"/><path d="M262.9 339.7l-3.9-0.3l0.5-6.5l3.6 0.3z" fill="#818186"/><path d="M199.6 325.4l-2.9-3.6l0.4-3.4l2.9 3.6z" fill="#8b8b90"/><path d="M276.9 326.6l-3.3 0.4l-0.7-5.4l2.9-0.4z" fill="#a0a0aa"/><path d="M324.6 313.4l-2.7 2.9l-1.1 0.6l2.6-2.9z" fill="#707074"/><path d="M274.4 339.5l-3.8 0.3l-0.1-6.6l3.6-0.2z" fill="#707075"/><path d="M337.9 313.2l-2.6 3.6l-1.9-0.9l2.6-3.5z" fill="#9c9cae"/><path d="M263.5 327.2l-3.3-0.3l1-5.5l2.9 0.3z" fill="#9d9da3"/><path d="M266.7 339.9l-3.8-0.2l0.2-6.5l3.7 0.1z" fill="#7a7a7e"/><path d="M281.3 331.9l-3.6 0.6l-0.8-5.9l3.3-0.6z" fill="#91929d"/><path d="M270.6 339.8l-3.9 0.1l0.1-6.6l3.7-0.1z" fill="#727276"/><path d="M275.3 398.5l-12.2 0.3l0-10l12.2-0.2z" fill="#444447" stroke="#0c0c0c" stroke-width="0.55"/><path d="M273.6 327l-3.3 0.2l-0.3-5.4l2.9-0.2z" fill="#9e9ea6"/><path d="M266.9 327.3l-3.4-0.1l0.6-5.5l2.9 0.1z" fill="#99999e"/><path d="M259.5 332.9l-3.6-0.6l1-5.9l3.3 0.5z" fill="#9b9ba1"/><path d="M205.3 317.6l-2.7-3.4l1.8-0.4l2.7 3.2z" fill="#8a8a92"/><path d="M270.3 327.2l-3.4 0.1l0.1-5.5l3 0z" fill="#9b9ba2"/><path d="M309.6 381.4l-10.8 3.4l0-9.9l10.8-3.5z" fill="#464755" stroke="#0c0c0c" stroke-width="0.55"/><path d="M277.7 332.5l-3.6 0.5l-0.5-6l3.3-0.4z" fill="#8f8f99"/><path d="M326.3 313.9l-2.7 3l-1.7-0.6l2.7-2.9z" fill="#8a8a92"/><path d="M263.1 333.2l-3.6-0.3l0.7-6l3.3 0.3z" fill="#96969b"/><path d="M203.6 318.1l-2.8-3.4l1.8-0.5l2.7 3.4z" fill="#8a8a92"/><path d="M274.1 333l-3.6 0.2l-0.2-6l3.3-0.2z" fill="#8c8c93"/><path d="M215.1 318.1l-2.8-2.8l1.2 0.6l2.7 2.7z" fill="#686981"/><path d="M266.8 333.3l-3.7-0.1l0.4-6l3.4 0.1z" fill="#909095"/><path d="M239.3 385.8l-10.9-3.1l0-9.9l10.9 3.1z" fill="#67676b" stroke="#0c0c0c" stroke-width="0.55"/><path d="M270.5 333.2l-3.7 0.1l0.1-6l3.4-0.1z" fill="#89898e"/><path d="M200 322l-2.9-3.6l1.8-2.8l2.9 3.5z" fill="#a7a7ad"/><path d="M201.8 319.1l-2.9-3.5l1.9-0.9l2.8 3.4z" fill="#9b9ba0"/><path d="M328.1 314.4l-2.9 3.1l-1.6-0.6l2.7-3z" fill="#8a8a92"/><path d="M213.5 318.7l-2.9-2.9l1.7-0.5l2.8 2.8z" fill="#8a8a92"/><path d="M329.9 314.9l-3 3.2l-1.7-0.6l2.9-3.1z" fill="#8a8a92"/><path d="M319.3 367l-9.7 4.4l0-9.9l9.7-4.4z" fill="#47475a" stroke="#0c0c0c" stroke-width="0.55"/><path d="M337.5 323.1l-3.3 3.5l-0.5-3.4l3.3-3.6z" fill="#666884"/><path d="M211.8 319.4l-3-3l1.8-0.6l2.9 2.9z" fill="#8a8a92"/><path d="M331.6 315.4l-3 3.3l-1.7-0.6l3-3.2z" fill="#8a8a92"/><path d="M334.9 335.9l-7.1 6l0-9.9l7.1-6.1z" fill="#595b75" stroke="#0c0c0c" stroke-width="0.55"/><path d="M327.8 351.8l-8.5 5.3l0-9.9l8.5-5.3z" fill="#48495f" stroke="#0c0c0c" stroke-width="0.55"/><path d="M321.9 316.3l-3.1 2.7l-1.1 0.6l3.1-2.7z" fill="#68686c"/><path d="M228.4 372.8l-10-4.1l0-9.9l10 4.1z" fill="#6d6d71" stroke="#0c0c0c" stroke-width="0.55"/><path d="M210.2 320.1l-3.1-3.1l1.7-0.6l3 3z" fill="#8a8a92"/><path d="M333.4 315.9l-3.1 3.4l-1.7-0.6l3-3.3z" fill="#8a8a92"/><path d="M298.8 384.8l-11.5 2.5l0-9.9l11.5-2.5z" fill="#43444d" stroke="#0c0c0c" stroke-width="0.55"/><path d="M337 319.6l-3.3 3.6l-1.6-2.9l3.2-3.5z" fill="#8f91ab"/><path d="M203.1 328.9l-3.5-3.5l0.4-3.4l3.5 3.4z" fill="#8f8f94"/><path d="M335.3 316.8l-3.2 3.5l-1.8-1l3.1-3.4z" fill="#9d9eaf"/><path d="M208.5 320.7l-3.2-3.1l1.8-0.6l3.1 3.1z" fill="#8a8a92"/><path d="M323.6 316.9l-3.2 2.8l-1.6-0.7l3.1-2.7z" fill="#8a8a92"/><path d="M218.4 320.7l-3.3-2.6l1.1 0.5l3.2 2.6z" fill="#62637a"/><path d="M251 387.9l-11.7-2.1l0-9.9l11.7 2.1z" fill="#5e5e62" stroke="#0c0c0c" stroke-width="0.55"/><path d="M218.4 358.8l-8.7-5l0-9.9l8.7 5z" fill="#6f6f73" stroke="#0c0c0c" stroke-width="0.55"/><path d="M209.7 343.9l-7.4-5.8l0-9.9l7.4 5.7z" fill="#6e6e72" stroke="#0c0c0c" stroke-width="0.55"/><path d="M206.9 321.4l-3.3-3.3l1.7-0.5l3.2 3.1z" fill="#8a8a92"/><path d="M325.2 317.5l-3.2 2.9l-1.6-0.7l3.2-2.8z" fill="#8a8a92"/><path d="M216.8 321.5l-3.3-2.8l1.6-0.6l3.3 2.6z" fill="#8a8a92"/><path d="M203.5 325.4l-3.5-3.4l1.8-2.9l3.4 3.3z" fill="#aaaab0"/><path d="M205.2 322.4l-3.4-3.3l1.8-1l3.3 3.3z" fill="#9c9ca2"/><path d="M326.9 318.1l-3.4 3l-1.5-0.7l3.2-2.9z" fill="#8a8a92"/><path d="M287.3 387.3l-12 1.3l0-9.9l12-1.3z" fill="#3e3e43" stroke="#0c0c0c" stroke-width="0.55"/><path d="M215.3 322.2l-3.5-2.8l1.7-0.7l3.3 2.8z" fill="#8a8a92"/><path d="M263.1 388.8l-12.1-0.9l0-9.9l12.1 0.9z" fill="#535356" stroke="#0c0c0c" stroke-width="0.55"/><path d="M318.8 319l-3.5 2.6l-1 0.5l3.4-2.5z" fill="#616164"/><path d="M328.6 318.7l-3.5 3.1l-1.6-0.7l3.4-3z" fill="#8a8a92"/><path d="M334.2 326.6l-3.8 3.4l-0.4-3.5l3.7-3.3z" fill="#696b86"/><path d="M275.3 388.6l-12.2 0.2l0-9.9l12.2-0.2z" fill="#444447" stroke="#0c0c0c" stroke-width="0.55"/><path d="M309.6 371.4l-10.8 3.5l0-9.9l10.8-3.5z" fill="#464755" stroke="#0c0c0c" stroke-width="0.55"/><path d="M213.7 323l-3.5-2.9l1.6-0.7l3.5 2.8z" fill="#8a8a92"/><path d="M330.3 319.3l-3.6 3.2l-1.6-0.7l3.5-3.1z" fill="#8a8a92"/><path d="M222 323.2l-3.6-2.5l1 0.5l3.5 2.4z" fill="#5d5e74"/><path d="M320.4 319.7l-3.6 2.7l-1.5-0.8l3.5-2.6z" fill="#8a8a92"/><path d="M239.3 375.9l-10.9-3.1l0-9.9l10.9 3.1z" fill="#67676b" stroke="#0c0c0c" stroke-width="0.55"/><path d="M212.2 323.7l-3.7-3l1.7-0.6l3.5 2.9z" fill="#8a8a92"/><path d="M333.7 323.2l-3.7 3.3l-1.6-3l3.7-3.2z" fill="#9293ad"/><path d="M207.1 332.1l-4-3.2l0.4-3.5l3.9 3.2z" fill="#919196"/><path d="M332.1 320.3l-3.7 3.2l-1.7-1l3.6-3.2z" fill="#9e9faf"/><path d="M322 320.4l-3.7 2.8l-1.5-0.8l3.6-2.7z" fill="#8a8a92"/><path d="M220.5 324l-3.7-2.5l1.6-0.8l3.6 2.5z" fill="#8a8a92"/><path d="M210.6 324.4l-3.7-3l1.6-0.7l3.7 3z" fill="#8a8a92"/><path d="M319.3 357.1l-9.7 4.4l0-9.9l9.7-4.4z" fill="#47475a" stroke="#0c0c0c" stroke-width="0.55"/><path d="M323.5 321.1l-3.8 2.8l-1.4-0.7l3.7-2.8z" fill="#8a8a92"/><path d="M315.3 321.6l-3.8 2.4l-1 0.4l3.8-2.3z" fill="#59595d"/><path d="M207.4 328.6l-3.9-3.2l1.7-3l3.8 3.2z" fill="#ababb1"/><path d="M209 325.6l-3.8-3.2l1.7-1l3.7 3z" fill="#9d9da2"/><path d="M219.1 324.8l-3.8-2.6l1.5-0.7l3.7 2.5z" fill="#8a8a92"/><path d="M327.8 341.9l-8.5 5.3l0-10l8.5-5.2z" fill="#48495f" stroke="#0c0c0c" stroke-width="0.55"/><path d="M228.4 362.9l-10-4.1l0-9.9l10 4.1z" fill="#6d6d71" stroke="#0c0c0c" stroke-width="0.55"/><path d="M325.1 321.8l-3.9 2.9l-1.5-0.8l3.8-2.8z" fill="#8a8a92"/><path d="M225.9 325.4l-3.9-2.2l0.9 0.4l3.9 2.2z" fill="#58596d"/><path d="M217.7 325.7l-4-2.7l1.6-0.8l3.8 2.6z" fill="#8a8a92"/><path d="M316.8 322.4l-4 2.5l-1.3-0.9l3.8-2.4z" fill="#8a8a92"/><path d="M298.8 374.9l-11.5 2.5l0-9.9l11.5-2.5z" fill="#43444d" stroke="#0c0c0c" stroke-width="0.55"/><path d="M330.4 330l-4.3 3.2l-0.4-3.5l4.3-3.2z" fill="#6c6d87"/><path d="M251 378l-11.7-2.1l0-9.9l11.7 2.1z" fill="#5e5e62" stroke="#0c0c0c" stroke-width="0.55"/><path d="M218.4 348.9l-8.7-5l0-10l8.7 5.1z" fill="#6f6f73" stroke="#0c0c0c" stroke-width="0.55"/><path d="M326.7 322.5l-4 3l-1.5-0.8l3.9-2.9z" fill="#8a8a92"/><path d="M216.2 326.5l-4-2.8l1.5-0.7l4 2.7z" fill="#8a8a92"/><path d="M318.3 323.2l-4.1 2.5l-1.4-0.8l4-2.5z" fill="#8a8a92"/><path d="M224.6 326.3l-4.1-2.3l1.5-0.8l3.9 2.2z" fill="#8a8a92"/><path d="M328.4 323.5l-4.2 3.1l-1.5-1.1l4-3z" fill="#9fa0b0"/><path d="M211.5 335.1l-4.4-3l0.3-3.5l4.5 3z" fill="#929297"/><path d="M330 326.5l-4.3 3.2l-1.5-3.1l4.2-3.1z" fill="#9495ad"/><path d="M311.5 324l-4.2 2.2l-0.8 0.4l4-2.2z" fill="#515155"/><path d="M214.8 327.3l-4.2-2.9l1.6-0.7l4 2.8z" fill="#8a8a92"/><path d="M319.7 323.9l-4.2 2.7l-1.3-0.9l4.1-2.5z" fill="#8a8a92"/><path d="M223.3 327.2l-4.2-2.4l1.4-0.8l4.1 2.3z" fill="#8a8a92"/><path d="M287.3 377.4l-12 1.3l0-9.9l12-1.3z" fill="#3e3e43" stroke="#0c0c0c" stroke-width="0.55"/><path d="M230.2 327.5l-4.3-2.1l0.9 0.4l4.2 2.1z" fill="#525366"/><path d="M263.1 378.9l-12.1-0.9l0-9.9l12.1 0.9z" fill="#535356" stroke="#0c0c0c" stroke-width="0.55"/><path d="M213.3 328.5l-4.3-2.9l1.6-1.2l4.2 2.9z" fill="#9d9da3"/><path d="M211.9 331.6l-4.5-3l1.6-3l4.3 2.9z" fill="#acacb3"/><path d="M312.8 324.9l-4.3 2.2l-1.2-0.9l4.2-2.2z" fill="#8a8a92"/><path d="M321.2 324.7l-4.3 2.7l-1.4-0.8l4.2-2.7z" fill="#8a8a92"/><path d="M275.3 378.7l-12.2 0.2l0-9.9l12.2-0.2z" fill="#444447" stroke="#0c0c0c" stroke-width="0.55"/><path d="M222 328.1l-4.3-2.4l1.4-0.9l4.2 2.4z" fill="#8a8a92"/><path d="M309.6 361.5l-10.8 3.5l0-9.9l10.8-3.5z" fill="#464755" stroke="#0c0c0c" stroke-width="0.55"/><path d="M229 328.5l-4.4-2.2l1.3-0.9l4.3 2.1z" fill="#8a8a92"/><path d="M326.1 333.2l-4.7 2.9l-0.4-3.5l4.7-2.9z" fill="#6e6f87"/><path d="M314.2 325.7l-4.5 2.3l-1.2-0.9l4.3-2.2z" fill="#8a8a92"/><path d="M239.3 366l-10.9-3.1l0-9.9l10.9 3.1z" fill="#67676b" stroke="#0c0c0c" stroke-width="0.55"/><path d="M322.7 325.5l-4.5 2.7l-1.3-0.8l4.3-2.7z" fill="#8a8a92"/><path d="M307.3 326.2l-4.5 2l-0.7 0.3l4.4-1.9z" fill="#4a4a4d"/><path d="M220.7 329l-4.5-2.5l1.5-0.8l4.3 2.4z" fill="#8a8a92"/><path d="M234.8 329.3l-4.6-1.8l0.8 0.4l4.5 1.7z" fill="#4d4e60"/><path d="M227.9 329.4l-4.6-2.2l1.3-0.9l4.4 2.2z" fill="#8a8a92"/><path d="M324.2 326.6l-4.5 2.9l-1.5-1.3l4.5-2.7z" fill="#a0a0b0"/><path d="M315.5 326.6l-4.5 2.3l-1.3-0.9l4.5-2.3z" fill="#8a8a92"/><path d="M216.4 337.9l-4.9-2.8l0.4-3.5l4.8 2.8z" fill="#929298"/><path d="M325.7 329.7l-4.7 2.9l-1.3-3.1l4.5-2.9z" fill="#9697ae"/><path d="M219.4 329.9l-4.6-2.6l1.4-0.8l4.5 2.5z" fill="#8a8a92"/><path d="M319.3 347.2l-9.7 4.4l0-9.9l9.7-4.5z" fill="#47475a" stroke="#0c0c0c" stroke-width="0.55"/><path d="M308.5 327.1l-4.6 2l-1.1-0.9l4.5-2z" fill="#8a8a92"/><path d="M226.7 330.4l-4.7-2.3l1.3-0.9l4.6 2.2z" fill="#8a8a92"/><path d="M316.9 327.4l-4.7 2.5l-1.2-1l4.5-2.3z" fill="#8a8a92"/><path d="M218 331.2l-4.7-2.7l1.5-1.2l4.6 2.6z" fill="#9d9da3"/><path d="M233.8 330.3l-4.8-1.8l1.2-1l4.6 1.8z" fill="#8a8a92"/><path d="M228.4 353l-10-4.1l0-9.9l10 4.1z" fill="#6d6d71" stroke="#0c0c0c" stroke-width="0.55"/><path d="M302.8 328.2l-4.7 1.7l-0.7 0.3l4.7-1.7z" fill="#424245"/><path d="M216.7 334.4l-4.8-2.8l1.4-3.1l4.7 2.7z" fill="#adadb3"/><path d="M309.7 328l-4.7 2.1l-1.1-1l4.6-2z" fill="#8a8a92"/><path d="M298.8 365l-11.5 2.5l0-10l11.5-2.4z" fill="#43444d" stroke="#0c0c0c" stroke-width="0.55"/><path d="M239.6 330.9l-4.8-1.6l0.7 0.3l4.7 1.6z" fill="#484959"/><path d="M225.5 331.3l-4.8-2.3l1.3-0.9l4.7 2.3z" fill="#8a8a92"/><path d="M321.4 336.1l-5.2 2.7l-0.3-3.5l5.1-2.7z" fill="#707186"/><path d="M318.2 328.2l-4.8 2.6l-1.2-0.9l4.7-2.5z" fill="#8a8a92"/><path d="M251 368.1l-11.7-2.1l0-9.9l11.7 2.1z" fill="#5e5e62" stroke="#0c0c0c" stroke-width="0.55"/><path d="M232.7 331.3l-4.8-1.9l1.1-0.9l4.8 1.8z" fill="#8a8a92"/><path d="M303.9 329.1l-4.9 1.8l-0.9-1l4.7-1.7z" fill="#8a8a92"/><path d="M311 328.9l-4.9 2.2l-1.1-1l4.7-2.1z" fill="#8a8a92"/><path d="M298.1 329.9l-5 1.5l-0.5 0.2l4.8-1.4z" fill="#3b3b3d"/><path d="M319.7 329.5l-5 2.6l-1.3-1.3l4.8-2.6z" fill="#a0a1af"/><path d="M224.3 332.3l-4.9-2.4l1.3-0.9l4.8 2.3z" fill="#8a8a92"/><path d="M221.6 340.4l-5.2-2.5l0.3-3.5l5.2 2.5z" fill="#919197"/><path d="M238.7 331.9l-4.9-1.6l1-1l4.8 1.6z" fill="#8a8a92"/><path d="M321 332.6l-5.1 2.7l-1.2-3.2l5-2.6z" fill="#9798ad"/><path d="M231.7 332.4l-5-2l1.2-1l4.8 1.9z" fill="#8a8a92"/><path d="M305 330.1l-5.1 1.9l-0.9-1.1l4.9-1.8z" fill="#8a8a92"/><path d="M312.2 329.9l-5.1 2.2l-1-1l4.9-2.2z" fill="#8a8a92"/><path d="M287.3 367.5l-12 1.3l0-9.9l12-1.4z" fill="#3e3e43" stroke="#0c0c0c" stroke-width="0.55"/><path d="M263.1 369l-12.1-0.9l0-9.9l12.1 0.9z" fill="#535356" stroke="#0c0c0c" stroke-width="0.55"/><path d="M223.1 333.6l-5.1-2.4l1.4-1.3l4.9 2.4z" fill="#9d9da3"/><path d="M221.9 336.9l-5.2-2.5l1.3-3.2l5.1 2.4z" fill="#acacb2"/><path d="M299 330.9l-5.1 1.6l-0.8-1.1l5-1.5z" fill="#8a8a92"/><path d="M237.8 333l-5.1-1.7l1.1-1l4.9 1.6z" fill="#8a8a92"/><path d="M230.6 333.4l-5.1-2.1l1.2-0.9l5 2z" fill="#8a8a92"/><path d="M275.3 368.8l-12.2 0.2l0-9.9l12.2-0.2z" fill="#444447" stroke="#0c0c0c" stroke-width="0.55"/><path d="M309.6 351.6l-10.8 3.5l0-9.9l10.8-3.5z" fill="#464755" stroke="#0c0c0c" stroke-width="0.55"/><path d="M313.4 330.8l-5.2 2.3l-1.1-1l5.1-2.2z" fill="#8a8a92"/><path d="M306.1 331.1l-5.2 1.9l-1-1l5.1-1.9z" fill="#8a8a92"/><path d="M243.9 333.3l-5.2-1.4l0.9-1l5.1 1.3z" fill="#8a8a92"/><path d="M316.2 338.8l-5.5 2.4l-0.2-3.5l5.4-2.4z" fill="#707185"/><path d="M239.3 356.1l-10.9-3.1l0-9.9l10.9 3.1z" fill="#67676b" stroke="#0c0c0c" stroke-width="0.55"/><path d="M237 334.1l-5.3-1.7l1-1.1l5.1 1.7z" fill="#8a8a92"/><path d="M299.9 332l-5.2 1.5l-0.8-1l5.1-1.6z" fill="#8a8a92"/><path d="M229.6 334.4l-5.3-2.1l1.2-1l5.1 2.1z" fill="#8a8a92"/><path d="M314.7 332.1l-5.3 2.3l-1.2-1.3l5.2-2.3z" fill="#a1a1af"/><path d="M293.9 332.5l-5.3 1.2l-0.7-1.1l5.2-1.2z" fill="#8a8a92"/><path d="M227.2 342.7l-5.6-2.3l0.3-3.5l5.6 2.2z" fill="#909095"/><path d="M307.1 332.1l-5.3 1.9l-0.9-1l5.2-1.9z" fill="#8a8a92"/><path d="M315.9 335.3l-5.4 2.4l-1.1-3.3l5.3-2.3z" fill="#9898ac"/><path d="M243.2 334.4l-5.4-1.4l0.9-1.1l5.2 1.4z" fill="#8a8a92"/><path d="M249.3 334.4l-5.4-1.1l0.8-1.1l5.2 1z" fill="#8a8a92"/><path d="M228.5 335.8l-5.4-2.2l1.2-1.3l5.3 2.1z" fill="#9c9ca2"/><path d="M236.1 335.1l-5.5-1.7l1.1-1l5.3 1.7z" fill="#8a8a92"/><path d="M300.9 333l-5.5 1.6l-0.7-1.1l5.2-1.5z" fill="#8a8a92"/><path d="M227.5 339.1l-5.6-2.2l1.2-3.3l5.4 2.2z" fill="#aaaab1"/><path d="M288.6 333.7l-5.5 1l-0.5-1.2l5.3-0.9z" fill="#8a8a92"/><path d="M294.7 333.5l-5.5 1.3l-0.6-1.1l5.3-1.2z" fill="#8a8a92"/><path d="M308.2 333.1l-5.4 2l-1-1.1l5.3-1.9z" fill="#8a8a92"/><path d="M242.5 335.5l-5.5-1.4l0.8-1.1l5.4 1.4z" fill="#8a8a92"/><path d="M254.8 335.2l-5.5-0.8l0.6-1.2l5.3 0.8z" fill="#8a8a92"/><path d="M310.7 341.2l-5.8 2.2l-0.2-3.6l5.8-2.1z" fill="#707182"/><path d="M248.7 335.5l-5.5-1.1l0.7-1.1l5.4 1.1z" fill="#8a8a92"/><path d="M235.2 336.2l-5.6-1.8l1-1l5.5 1.7z" fill="#8a8a92"/><path d="M283.1 334.7l-5.6 0.7l-0.3-1.2l5.4-0.7z" fill="#8a8a92"/><path d="M301.8 334l-5.6 1.7l-0.8-1.1l5.5-1.6z" fill="#8a8a92"/><path d="M298.8 355.1l-11.5 2.4l0-9.9l11.5-2.4z" fill="#43444d" stroke="#0c0c0c" stroke-width="0.55"/><path d="M260.4 335.6l-5.6-0.4l0.4-1.2l5.5 0.5z" fill="#8a8a92"/><path d="M309.4 334.4l-5.7 2.1l-0.9-1.4l5.4-2z" fill="#a1a1ae"/><path d="M233.1 344.6l-5.9-1.9l0.3-3.6l5.9 1.9z" fill="#8d8d92"/><path d="M289.2 334.8l-5.7 1l-0.4-1.1l5.5-1z" fill="#8a8a92"/><path d="M295.4 334.6l-5.6 1.3l-0.6-1.1l5.5-1.3z" fill="#8a8a92"/><path d="M277.5 335.4l-5.7 0.4l-0.1-1.2l5.5-0.4z" fill="#8a8a92"/><path d="M251 358.2l-11.7-2.1l0-9.9l11.7 2z" fill="#5e5e62" stroke="#0c0c0c" stroke-width="0.55"/><path d="M310.5 337.7l-5.8 2.1l-1-3.3l5.7-2.1z" fill="#9798aa"/><path d="M241.7 336.6l-5.6-1.5l0.9-1l5.5 1.4z" fill="#8a8a92"/><path d="M266.1 335.8l-5.7-0.2l0.3-1.1l5.5 0.2z" fill="#8a8a92"/><path d="M254.4 336.3l-5.7-0.8l0.6-1.1l5.5 0.8z" fill="#8a8a92"/><path d="M271.8 335.8l-5.7 0l0.1-1.1l5.5-0.1z" fill="#8a8a92"/><path d="M248.2 336.6l-5.7-1.1l0.7-1.1l5.5 1.1z" fill="#8a8a92"/><path d="M234.3 337.6l-5.8-1.8l1.1-1.4l5.6 1.8z" fill="#9b9ba1"/><path d="M302.8 335.1l-5.8 1.7l-0.8-1.1l5.6-1.7z" fill="#8a8a92"/><path d="M283.5 335.8l-5.7 0.7l-0.3-1.1l5.6-0.7z" fill="#8a8a92"/><path d="M233.4 341l-5.9-1.9l1-3.3l5.8 1.8z" fill="#a8a8ae"/><path d="M260.2 336.8l-5.8-0.5l0.4-1.1l5.6 0.4z" fill="#8a8a92"/><path d="M296.2 335.7l-5.8 1.4l-0.6-1.2l5.6-1.3z" fill="#8a8a92"/><path d="M289.8 335.9l-5.8 1.1l-0.5-1.2l5.7-1z" fill="#8a8a92"/><path d="M304.9 343.4l-6.1 1.8l-0.2-3.6l6.1-1.8z" fill="#6f707f"/><path d="M241 337.7l-5.8-1.5l0.9-1.1l5.6 1.5z" fill="#8a8a92"/><path d="M277.8 336.5l-5.9 0.4l-0.1-1.1l5.7-0.4z" fill="#8a8a92"/><path d="M266.1 337l-5.9-0.2l0.2-1.2l5.7 0.2z" fill="#8a8a92"/><path d="M254 337.5l-5.8-0.9l0.5-1.1l5.7 0.8z" fill="#8a8a92"/><path d="M287.3 357.5l-12 1.4l0-9.9l12-1.4z" fill="#3e3e43" stroke="#0c0c0c" stroke-width="0.55"/><path d="M271.9 336.9l-5.8 0.1l0-1.2l5.7 0z" fill="#8a8a92"/><path d="M247.6 337.8l-5.9-1.2l0.8-1.1l5.7 1.1z" fill="#8a8a92"/><path d="M263.1 359.1l-12.1-0.9l0-10l12.1 1z" fill="#535356" stroke="#0c0c0c" stroke-width="0.55"/><path d="M303.7 336.5l-5.9 1.7l-0.8-1.4l5.8-1.7z" fill="#a0a1ad"/><path d="M239.3 346.2l-6.2-1.6l0.3-3.6l6.1 1.6z" fill="#89898e"/><path d="M284 337l-5.9 0.7l-0.3-1.2l5.7-0.7z" fill="#8a8a92"/><path d="M304.7 339.8l-6.1 1.8l-0.8-3.4l5.9-1.7z" fill="#9797a7"/><path d="M260 338l-6-0.5l0.4-1.2l5.8 0.5z" fill="#8a8a92"/><path d="M275.3 358.9l-12.2 0.2l0-9.9l12.2-0.2z" fill="#444447" stroke="#0c0c0c" stroke-width="0.55"/><path d="M297 336.8l-6 1.4l-0.6-1.1l5.8-1.4z" fill="#8a8a92"/><path d="M290.4 337.1l-6 1l-0.4-1.1l5.8-1.1z" fill="#8a8a92"/><path d="M240.2 339.2l-5.9-1.6l0.9-1.4l5.8 1.5z" fill="#9a9aa0"/><path d="M278.1 337.7l-6.1 0.4l-0.1-1.2l5.9-0.4z" fill="#8a8a92"/><path d="M266 338.2l-6-0.2l0.2-1.2l5.9 0.2z" fill="#8a8a92"/><path d="M253.6 338.6l-6-0.8l0.6-1.2l5.8 0.9z" fill="#8a8a92"/><path d="M239.5 342.6l-6.1-1.6l0.9-3.4l5.9 1.6z" fill="#a5a5ab"/><path d="M247 338.9l-6-1.2l0.7-1.1l5.9 1.2z" fill="#8a8a92"/><path d="M272 338.1l-6 0.1l0.1-1.2l5.8-0.1z" fill="#8a8a92"/><path d="M298.8 345.2l-6.3 1.5l-0.2-3.6l6.3-1.5z" fill="#6e6e7b"/><path d="M284.4 338.1l-6.1 0.8l-0.2-1.2l5.9-0.7z" fill="#8a8a92"/><path d="M245.7 347.5l-6.4-1.3l0.2-3.6l6.4 1.3z" fill="#848489"/><path d="M297.8 338.2l-6.1 1.5l-0.7-1.5l6-1.4z" fill="#a0a0ab"/><path d="M259.8 339.2l-6.2-0.6l0.4-1.1l6 0.5z" fill="#8a8a92"/><path d="M291 338.2l-6.1 1.1l-0.5-1.2l6-1z" fill="#8a8a92"/><path d="M298.6 341.6l-6.3 1.5l-0.6-3.4l6.1-1.5z" fill="#9696a4"/><path d="M278.3 338.9l-6.1 0.4l-0.2-1.2l6.1-0.4z" fill="#8a8a92"/><path d="M246.4 340.4l-6.2-1.2l0.8-1.5l6 1.2z" fill="#99999e"/><path d="M253.2 339.8l-6.2-0.9l0.6-1.1l6 0.8z" fill="#8a8a92"/><path d="M266 339.4l-6.2-0.2l0.2-1.2l6 0.2z" fill="#8a8a92"/><path d="M272.2 339.3l-6.2 0.1l0-1.2l6-0.1z" fill="#8a8a92"/><path d="M292.5 346.7l-6.6 1.1l-0.1-3.6l6.5-1.1z" fill="#6c6c76"/><path d="M245.9 343.9l-6.4-1.3l0.7-3.4l6.2 1.2z" fill="#a1a1a7"/><path d="M284.9 339.3l-6.3 0.7l-0.3-1.1l6.1-0.8z" fill="#8a8a92"/><path d="M252.3 348.4l-6.6-0.9l0.2-3.6l6.5 0.9z" fill="#7f7f83"/><path d="M291.7 339.7l-6.3 1.1l-0.5-1.5l6.1-1.1z" fill="#9f9faa"/><path d="M259.5 340.4l-6.3-0.6l0.4-1.2l6.2 0.6z" fill="#8a8a92"/><path d="M252.8 341.3l-6.4-0.9l0.6-1.5l6.2 0.9z" fill="#97979c"/><path d="M278.6 340l-6.3 0.5l-0.1-1.2l6.1-0.4z" fill="#8a8a92"/><path d="M292.3 343.1l-6.5 1.1l-0.4-3.4l6.3-1.1z" fill="#9494a0"/><path d="M265.9 340.6l-6.4-0.2l0.3-1.2l6.2 0.2z" fill="#8a8a92"/><path d="M285.9 347.8l-6.6 0.9l-0.1-3.6l6.6-0.9z" fill="#696970"/><path d="M272.3 340.5l-6.4 0.1l0.1-1.2l6.2-0.1z" fill="#8a8a92"/><path d="M259 349l-6.7-0.6l0.1-3.6l6.7 0.6z" fill="#78787d"/><path d="M252.4 344.8l-6.5-0.9l0.5-3.5l6.4 0.9z" fill="#9d9da2"/><path d="M285.4 340.8l-6.5 0.8l-0.3-1.6l6.3-0.7z" fill="#9e9ea8"/><path d="M279.3 348.7l-6.8 0.4l0-3.6l6.7-0.4z" fill="#65656a"/><path d="M259.3 341.9l-6.5-0.6l0.4-1.5l6.3 0.6z" fill="#98989e"/><path d="M265.8 349.2l-6.8-0.2l0.1-3.6l6.7 0.2z" fill="#717175"/><path d="M272.5 349.1l-6.7 0.1l0-3.6l6.7-0.1z" fill="#69696d"/><path d="M285.8 344.2l-6.6 0.9l-0.3-3.5l6.5-0.8z" fill="#91929b"/><path d="M278.9 341.6l-6.5 0.4l-0.1-1.5l6.3-0.5z" fill="#9d9da6"/><path d="M265.8 342.1l-6.5-0.2l0.2-1.5l6.4 0.2z" fill="#9a9aa1"/><path d="M259.1 345.4l-6.7-0.6l0.4-3.5l6.5 0.6z" fill="#97979d"/><path d="M272.4 342l-6.6 0.1l0.1-1.5l6.4-0.1z" fill="#9b9ba3"/><path d="M279.2 345.1l-6.7 0.4l-0.1-3.5l6.5-0.4z" fill="#8e8f96"/><path d="M265.8 345.6l-6.7-0.2l0.2-3.5l6.5 0.2z" fill="#919197"/><path d="M272.5 345.5l-6.7 0.1l0-3.5l6.6-0.1z" fill="#8b8b90"/></g><ellipse cx="268.0" cy="299.5" rx="6" ry="3.4" fill="#161616" opacity="0.75"/><g stroke-linejoin="round" stroke="#161616" stroke-width="0.6"><path d="M481.9 338.2l39.6 1.2l-7.7 11.7l-26.7-0.8z" fill="#9999a2"/><path d="M481.9 313.1l39.6 1.2l0 25.1l-39.6-1.2z" fill="#5b5b5e"/><path d="M477.8 302.3l49.8 1.5l-5.1 7.6l-41.3-1.2z" fill="#6e7ce0"/><path d="M448.3 351.2l33.6-13l5.2 12.1l-22.6 8.8z" fill="#9999a2"/><path d="M448.3 326.1l33.6-13l0 25.1l-33.6 13z" fill="#565767"/><path d="M521.5 339.4l30.6 14.9l-17.8 6.9l-20.5-10.1z" fill="#9999a2"/><path d="M481.2 310.2l41.3 1.2l-1 2.9l-39.6-1.2z" fill="#a9d9c8"/><path d="M521.5 314.3l30.6 14.9l0 25.1l-30.6-14.9z" fill="#7e7e82"/><path d="M435.6 318.6l42.2-16.3l3.4 7.9l-35.1 13.5z" fill="#6e7ce0"/><path d="M527.6 303.8l38.4 18.7l-11.5 4.5l-32-15.6z" fill="#6e7ce0"/><path d="M446.1 323.7l35.1-13.5l0.7 2.9l-33.6 13z" fill="#b4e7df"/><path d="M522.5 311.4l32 15.6l-2.4 2.2l-30.6-14.9z" fill="#b9edda"/><path d="M433.6 373.4l14.7-22.2l16.2 7.9l-9.9 14.9z" fill="#9999a2"/><path d="M552.1 354.3l9.9 22.9l-21-0.6l-6.7-15.4z" fill="#9999a2"/><path d="M433.6 348.2l14.7-22.1l0 25.1l-14.7 22.2z" fill="#7d7f9d"/><path d="M415.6 347.7l18.7-28.4l1.3-0.7l-18.4 27.8z" fill="#84a99c"/><path d="M497.8 349.8l-10.7-24.9l26.7 0.8z" fill="#a6dcc4" stroke="#161616" stroke-width="0.8"/><path d="M552.1 329.2l9.9 22.9l0 25.1l-9.9-22.9z" fill="#6c6c6f"/><path d="M417.2 346.4l18.4-27.8l10.5 5.1l-15.2 23.1z" fill="#6e7ce0"/><path d="M497.8 349.8l-33.3-16.2l22.6-8.7z" fill="#a6dcc4" stroke="#161616" stroke-width="0.8"/><path d="M430.9 346.8l15.2-23.1l2.2 2.4l-14.7 22.1z" fill="#abdcdd"/><path d="M497.8 349.8l16-24.1l20.5 10z" fill="#a6dcc4" stroke="#161616" stroke-width="0.8"/><path d="M567.4 323.3l12.6 29.3l-1.6-1.3l-12.4-28.8z" fill="#80a6b3"/><path d="M566 322.5l12.4 28.8l-13.7-0.4l-10.2-23.9z" fill="#6e7ce0"/><path d="M554.5 327l10.2 23.9l-2.7 1.2l-9.9-22.9z" fill="#b0e1cf"/><path d="M443.5 396.3l-9.9-22.9l21 0.6l6.7 15.4z" fill="#9999a2"/><path d="M428.2 440.5l-12.6-29.3l0-63.5l12.6 29.4z" fill="#6c6c6f"/><path d="M497.8 349.8l-43.2-1.3l9.9-14.9z" fill="#a6dcc4" stroke="#161616" stroke-width="0.8"/><path d="M497.8 349.8l36.5-14.1l6.7 15.4z" fill="#a6dcc4" stroke="#161616" stroke-width="0.8"/><path d="M562 377.2l-14.7 22.2l-16.2-7.9l9.9-14.9z" fill="#9999a2"/><path d="M461.3 389.4l-6.7-15.4l0-25.5l6.7 15.5z" fill="#6c6c6f"/><path d="M580 416.1l-18.7 28.4l0-63.4l18.7-28.5z" fill="#7d7f9d"/><path d="M468 460l-38.4-18.7l-1.4-0.8l39.2 19.1z" fill="#86b49e"/><path d="M541 376.6l-9.9 14.9l0-25.4l9.9-15z" fill="#7d7f9d"/><path d="M560 445.2l-42.2 16.3l0.4-0.3l43.1-16.7z" fill="#86b49e"/><path d="M497.8 349.8l-36.5 14.2l-6.7-15.5z" fill="#a6dcc4" stroke="#161616" stroke-width="0.8"/><path d="M497.8 349.8l43.2 1.3l-9.9 15z" fill="#a6dcc4" stroke="#161616" stroke-width="0.8"/><path d="M474.1 411.2l-30.6-14.9l17.8-6.9l20.5 10z" fill="#9999a2"/><path d="M441.1 370.7l-10.2-23.9l2.7 1.4l9.9 23z" fill="#93bdc2"/><path d="M517.8 461.5l-49.8-1.5l-0.6-0.4l50.8 1.6z" fill="#86b49e"/><path d="M429.6 375.2l-12.4-28.8l13.7 0.4l10.2 23.9z" fill="#6e7ce0"/><path d="M547.3 399.4l-33.6 13l-5.2-12.2l22.6-8.7z" fill="#9999a2"/><path d="M428.2 377.1l-12.6-29.4l1.6-1.3l12.4 28.8z" fill="#b1e3d0"/><path d="M481.8 399.4l-20.5-10l0-25.4l20.5 10z" fill="#7e7e82"/><path d="M497.8 349.8l-16 24.2l-20.5-10z" fill="#a6dcc4" stroke="#161616" stroke-width="0.8"/><path d="M531.1 391.5l-22.6 8.7l0-25.4l22.6-8.7z" fill="#565767"/><path d="M497.8 349.8l33.3 16.3l-22.6 8.7z" fill="#a6dcc4" stroke="#161616" stroke-width="0.8"/><path d="M564.7 350.9l-15.2 23.1l-2.2 0.3l14.7-22.2z" fill="#90b8a9"/><path d="M578.4 351.3l-18.4 27.8l-10.5-5.1l15.2-23.1z" fill="#6e7ce0"/><path d="M513.7 412.4l-39.6-1.2l7.7-11.8l26.7 0.8z" fill="#9999a2"/><path d="M497.8 349.8l10.7 25l-26.7-0.8z" fill="#a6dcc4" stroke="#161616" stroke-width="0.8"/><path d="M580 352.6l-18.7 28.5l-1.3-2l18.4-27.8z" fill="#a2d1d8"/><path d="M508.5 400.2l-26.7-0.8l0-25.4l26.7 0.8z" fill="#5b5b5e"/><path d="M467.4 459.6l-39.2-19.1l0-63.4l39.2 19.1z" fill="#7e7e82"/><path d="M561.3 444.5l-43.1 16.7l0-63.5l43.1-16.6z" fill="#565767"/><path d="M518.2 461.2l-50.8-1.6l0-63.4l50.8 1.5z" fill="#5b5b5e"/><path d="M473.1 386.3l-32-15.6l2.4 0.5l30.6 14.9z" fill="#749699"/><path d="M549.5 374l-35.1 13.5l-0.7-0.3l33.6-12.9z" fill="#648176"/><path d="M468 393.9l-38.4-18.7l11.5-4.5l32 15.6z" fill="#6e7ce0"/><path d="M467.4 396.2l-39.2-19.1l1.4-1.9l38.4 18.7z" fill="#bef3df"/><path d="M560 379.1l-42.2 16.3l-3.4-7.9l35.1-13.5z" fill="#6e7ce0"/><path d="M514.4 387.5l-41.3-1.2l1-0.2l39.6 1.1z" fill="#5b7572"/><path d="M561.3 381.1l-43.1 16.6l-0.4-2.3l42.2-16.3z" fill="#aedfdb"/><path d="M517.8 395.4l-49.8-1.5l5.1-7.6l41.3 1.2z" fill="#6e7ce0"/><path d="M518.2 397.7l-50.8-1.5l0.6-2.3l49.8 1.5z" fill="#a5d3c2"/></g><ellipse cx="497.8" cy="349.8" rx="2.4" ry="1.5" fill="#e8a0a8" stroke="#a06068" stroke-width="0.4"/><path d="M580.0 416.0L561.3 444.4M561.3 444.4L518.2 461.0M518.2 461.0L467.4 459.5M467.4 459.5L428.2 440.4M428.2 440.4L415.6 411.0" stroke="#8cb8a2" stroke-width="1.1" fill="none" stroke-linecap="round"/><g stroke-linejoin="round" stroke="#161616" stroke-width="0.8"><path d="M712.9 391.1l18.5-1.2l-0.4 9.9l-16.5 1z" fill="#a2a2a9"/><path d="M731.4 389.9l18.1 2.3l-2.4 9.6l-16.1-2z" fill="#adadb2"/><path d="M708.2 357.4l24.4-1.5l-0.2 0.7l-23.5 1.5z" fill="#6a8c83"/><path d="M695.8 395.6l17.1-4.5l1.6 9.7l-15.1 4.1z" fill="#a9aab8"/><path d="M712.6 378.5l18.9-1.2l-0.1 12.6l-18.5 1.2z" fill="#57575a"/><path d="M731.5 377.3l18.4 2.3l-0.4 12.6l-18.1-2.3z" fill="#747478"/><path d="M732.6 355.9l23.8 3l-1 0.6l-23-2.9z" fill="#719690"/><path d="M749.5 392.2l16 5.5l-4.2 9l-14.2-4.9z" fill="#babac0"/><path d="M699.4 404.9l15.1-4.1l1.4-0.2l-13.7 3.6z" fill="#4b4b4d"/><path d="M708.9 358.1l23.5-1.5l-0.3 3.1l-21.9 1.4z" fill="#6e7ce0"/><path d="M695.2 383.1l17.4-4.6l0.3 12.6l-17.1 4.5z" fill="#62626f"/><path d="M732.4 356.6l23 2.9l-2 2.9l-21.3-2.7z" fill="#6e7ce0"/><path d="M685.8 363.4l22.4-6l0.7 0.7l-21.6 5.8z" fill="#68897d"/><path d="M747.1 401.8l14.2 4.9l-3.5-0.8l-12.7-4.4z" fill="#5d5e6f"/><path d="M749.9 379.6l16.3 5.6l-0.7 12.5l-16-5.5z" fill="#85858a"/><path d="M681.9 403l13.9-7.4l3.6 9.3l-12.4 6.6z" fill="#aaabc0"/><path d="M710.2 361.1l21.9-1.4l-0.4 3.2l-20.1 1.3z" fill="#6e7ce0"/><path d="M712.3 366.8l19.2-1.2l0 11.7l-18.9 1.2z" fill="#58585c"/><path d="M687.3 363.9l21.6-5.8l1.3 3l-20.1 5.3z" fill="#6e7ce0"/><path d="M756.4 358.9l21 7.3l-1.8 0.3l-20.2-7z" fill="#7ba3a0"/><path d="M731.5 365.6l18.9 2.4l-0.5 11.6l-18.4-2.3z" fill="#757579"/><path d="M732.1 359.7l21.3 2.7l-1.9 3l-19.8-2.5z" fill="#6e7ce0"/><path d="M687 411.5l12.4-6.6l2.8-0.7l-11.1 6z" fill="#646468"/><path d="M711.6 364.2l20.1-1.3l-0.2 2.7l-19.2 1.2z" fill="#ade5d3"/><path d="M755.4 359.5l20.2 7l-3.3 2.4l-18.9-6.5z" fill="#6e7ce0"/><path d="M765.5 397.7l12.2 8.2l-5.5 8.1l-10.9-7.3z" fill="#bdbdc3"/><path d="M694.5 371.6l17.8-4.8l0.3 11.7l-17.4 4.6z" fill="#636370"/><path d="M731.7 362.9l19.8 2.5l-1.1 2.6l-18.9-2.4z" fill="#a9dfcb"/><path d="M690.1 366.4l20.1-5.3l1.4 3.1l-18.6 4.9z" fill="#6e7ce0"/><path d="M681 390.7l14.2-7.6l0.6 12.5l-13.9 7.4z" fill="#636478"/><path d="M761.3 406.7l10.9 7.3l-4.6-1.5l-9.8-6.6z" fill="#6f7085"/><path d="M750.4 368l16.6 5.7l-0.8 11.5l-16.3-5.6z" fill="#87878b"/><path d="M693 369.1l18.6-4.9l0.7 2.6l-17.8 4.8z" fill="#b1ebdd"/><path d="M667.4 373.2l18.4-9.8l1.5 0.5l-17.6 9.4z" fill="#799f91"/><path d="M753.4 362.4l18.9 6.5l-3.4 2.5l-17.4-6z" fill="#6e7ce0"/><path d="M766.2 385.2l12.6 8.4l-1.1 12.3l-12.2-8.2z" fill="#8a8a8f"/><path d="M751.5 365.4l17.4 6l-1.9 2.3l-16.6-5.7z" fill="#b0e9d3"/><path d="M669.7 373.3l17.6-9.4l2.8 2.5l-16.4 8.8z" fill="#6e7ce0"/><path d="M672.4 412.7l9.5-9.7l5.1 8.5l-8.4 8.5z" fill="#a4a5be"/><path d="M680 379.3l14.5-7.7l0.7 11.5l-14.2 7.6z" fill="#64657a"/><path d="M678.6 420l8.4-8.5l4.1-1.3l-7.5 7.6z" fill="#7f7f83"/><path d="M777.4 366.2l16.2 10.8l-2.4-0.1l-15.6-10.4z" fill="#87b3b1"/><path d="M652.2 479.7l-2.2-14.4l-0.4-8.6l2.3 14.5z" fill="#5b786d"/><path d="M673.7 375.2l16.4-8.8l2.9 2.7l-15.2 8.1z" fill="#6e7ce0"/><path d="M775.6 366.5l15.6 10.4l-4.4 1.7l-14.5-9.7z" fill="#6e7ce0"/><path d="M677.8 377.2l15.2-8.1l1.5 2.5l-14.5 7.7z" fill="#b2ece1"/><path d="M777.7 405.9l7.4 10.2l-6.4 6.9l-6.5-9z" fill="#b7b7bc"/><path d="M671.3 400.5l9.7-9.8l0.9 12.3l-9.5 9.7z" fill="#71738f"/><path d="M767 373.7l12.8 8.6l-1 11.3l-12.6-8.4z" fill="#8b8b90"/><path d="M772.2 414l6.5 9l-5.2-2.4l-5.9-8.1z" fill="#82839b"/><path d="M772.3 368.9l14.5 9.7l-4.5 1.8l-13.4-9z" fill="#6e7ce0"/><path d="M717.4 383l12.8-0.8l-0.3 0.1l-11.4 0.7z" fill="#a6dcc4"/><path d="M768.9 371.4l13.4 9l-2.5 1.9l-12.8-8.6z" fill="#b2ebd5"/><path d="M730.2 382.2l12.6 1.6l-1.7-0.1l-11.2-1.4z" fill="#a6dcc4"/><path d="M805.2 469.9l-5.3 14.3l0.3-8.6l5.4-14.2z" fill="#86b3c3"/><path d="M778.8 393.6l7.5 10.4l-1.2 12.1l-7.4-10.2z" fill="#818185"/><path d="M655 385.9l12.4-12.7l2.3 0.1l-12 12.2z" fill="#8ab6a5"/><path d="M705.5 386.2l11.9-3.2l1.1 0l-10.5 2.8z" fill="#a6dcc4"/><path d="M668.4 423.5l4-10.8l6.2 7.3l-3.6 9.7z" fill="#9798b4"/><path d="M675 429.7l3.6-9.7l5-2.2l-3.3 8.7z" fill="#97979c"/><path d="M670.1 389.3l9.9-10l1 11.4l-9.7 9.8z" fill="#71738f"/><path d="M742.8 383.8l11.1 3.8l-2.9-0.5l-9.9-3.4z" fill="#a6dcc4"/><path d="M657.7 385.5l12-12.2l4 1.9l-11.2 11.4z" fill="#6e7ce0"/><path d="M651.9 471.2l-2.3-14.5l0-24.5l2.3 14.5z" fill="#5f5f63"/><path d="M662.5 386.6l11.2-11.4l4.1 2l-10.3 10.5z" fill="#6e7ce0"/><path d="M695.9 391.3l9.6-5.1l2.5-0.4l-8.6 4.6z" fill="#a6dcc4"/><path d="M667.5 387.7l10.3-10.5l2.2 2.1l-9.9 10z" fill="#aee7e0"/><path d="M718.5 383l11.4-0.7l-0.7 6.1l-7.7 0.5z" fill="#a6dcc4"/><path d="M729.9 382.3l11.2 1.4l-4.4 5.7l-7.5-1z" fill="#a6dcc4"/><path d="M778.7 423l1.5 9.8l-5.3-3.4l-1.4-8.8z" fill="#9395ae"/><path d="M793.6 377l9.7 13.3l-2.8-0.5l-9.3-12.9z" fill="#93c3c1"/><path d="M785.1 416.1l1.7 11l-6.6 5.7l-1.5-9.8z" fill="#a6a6ac"/><path d="M779.8 382.3l7.7 10.6l-1.2 11.1l-7.5-10.4z" fill="#828286"/><path d="M708 385.8l10.5-2.8l3 5.9l-7.1 1.9z" fill="#a6dcc4"/><path d="M667.1 411.6l4.2-11.1l1.1 12.2l-4 10.8z" fill="#8789aa"/><path d="M753.9 387.6l8.5 5.7l-3.8-1.1l-7.6-5.1z" fill="#a6dcc4"/><path d="M791.2 376.9l9.3 12.9l-5 0.8l-8.7-12z" fill="#6e7ce0"/><path d="M741.1 383.7l9.9 3.4l-7.6 4.6l-6.7-2.3z" fill="#a6dcc4"/><path d="M661.9 493l-9.7-13.3l-0.3-8.5l9.7 13.3z" fill="#719587"/><path d="M786.8 378.6l8.7 12l-5.2 0.8l-8-11z" fill="#6e7ce0"/><path d="M782.3 380.4l8 11l-2.8 1.5l-7.7-10.6z" fill="#aee6d1"/><path d="M805.6 461.4l-5.4 14.2l0-24.4l5.4-14.3z" fill="#8788a9"/><path d="M699.4 390.4l8.6-4.6l6.4 5l-5.8 3.1z" fill="#a6dcc4"/><path d="M689.3 398l6.6-6.7l3.5-0.9l-5.9 5.9z" fill="#a6dcc4"/><path d="M773.5 420.6l1.4 8.8l-3.3-12l-1.3-8.2z" fill="#8f90b3"/><path d="M786.3 404l1.8 11.2l-1.3 11.9l-1.7-11z" fill="#6b6b6f"/><path d="M751 387.1l7.6 5.1l-10.1 2.9l-5.1-3.4z" fill="#a6dcc4"/><path d="M676.5 439.5l-1.5-9.8l5.3-3.2l1.4 8.8z" fill="#aaaab0"/><path d="M721.5 388.9l7.7-0.5l-0.8 6.6l-4.1 0.2z" fill="#a6dcc4"/><path d="M670.1 434.5l-1.7-11l6.6 6.2l1.5 9.8z" fill="#8586a3"/><path d="M729.2 388.4l7.5 1l-4.2 6.1l-4.1-0.5z" fill="#a6dcc4"/><path d="M665.9 400.6l4.2-11.3l1.2 11.2l-4.2 11.1z" fill="#8889aa"/><path d="M762.4 393.3l5.1 7.1l-4.4-2l-4.5-6.2z" fill="#a6dcc4"/><path d="M714.4 390.8l7.1-1.9l2.8 6.3l-3.8 1z" fill="#a6dcc4"/><path d="M799.9 484.2l-12.4 12.6l0.3-8.5l12.4-12.7z" fill="#7095a3"/><path d="M736.7 389.4l6.7 2.3l-7.4 5l-3.5-1.2z" fill="#a6dcc4"/><path d="M693.5 396.3l5.9-5.9l9.2 3.5l-4 4z" fill="#a6dcc4"/><path d="M649.6 400.1l5.4-14.2l2.7-0.4l-5.2 13.7z" fill="#99cab8"/><path d="M652.5 399.2l5.2-13.7l4.8 1.1l-4.8 12.8z" fill="#6e7ce0"/><path d="M708.6 393.9l5.8-3.1l6.1 5.4l-3.1 1.7z" fill="#a6dcc4"/><path d="M780.2 432.8l-3.6 9.7l-5-4.5l3.3-8.6z" fill="#a2a3bd"/><path d="M681.7 435.3l-1.4-8.8l3.3-11.8l1.3 8.2z" fill="#7d7d81"/><path d="M657.7 399.4l4.8-12.8l5 1.1l-4.5 11.9z" fill="#6e7ce0"/><path d="M663 399.6l4.5-11.9l2.6 1.6l-4.2 11.3z" fill="#a8deda"/><path d="M758.6 392.2l4.5 6.2l-11.5 0.9l-3.1-4.2z" fill="#a6dcc4"/><path d="M743.4 391.7l5.1 3.4l-9.8 3.4l-2.7-1.8z" fill="#a6dcc4"/><path d="M770.3 409.2l1.3 8.2l-2.9-9.4l-1.2-7.6z" fill="#8e90b2"/><path d="M786.8 427.1l-4 10.8l-6.2 4.6l3.6-9.7z" fill="#8e8e93"/><path d="M651.9 446.7l-2.3-14.5l0-23.8l2.3 14.5z" fill="#5f5f63"/><path d="M686.5 405.5l2.8-7.5l4.2-1.7l-2.5 6.7z" fill="#a6dcc4"/><path d="M787.5 392.9l1.8 11.4l-1.2 10.9l-1.8-11.2z" fill="#6c6c70"/><path d="M661.6 484.5l-9.7-13.3l0-24.5l9.7 13.4z" fill="#757579"/><path d="M704.6 397.9l4-4l8.8 4l-2.1 2.1z" fill="#a6dcc4"/><path d="M724.3 395.2l4.1-0.2l-0.5 5.4l-1.3 0z" fill="#a6dcc4"/><path d="M728.4 395l4.1 0.5l-3.4 5l-1.2-0.1z" fill="#a6dcc4"/><path d="M774.9 429.4l-3.3 8.6l-3-12.6l3-8z" fill="#8789a9"/><path d="M720.5 396.2l3.8-1l2.3 5.2l-1.2 0.4z" fill="#a6dcc4"/><path d="M748.5 395.1l3.1 4.2l-11.2 1.5l-1.7-2.3z" fill="#a6dcc4"/><path d="M691 403l2.5-6.7l11.1 1.6l-1.7 4.5z" fill="#a6dcc4"/><path d="M732.5 395.5l3.5 1.2l-5.8 4.2l-1.1-0.4z" fill="#a6dcc4"/><path d="M717.4 397.9l3.1-1.7l4.9 4.6l-1 0.5z" fill="#a6dcc4"/><path d="M803.3 390.3l2.3 14.5l-2.9-1l-2.2-14z" fill="#9ed2d0"/><path d="M767.5 400.4l1.2 7.6l-4.5-2.8l-1.1-6.8z" fill="#a6dcc4"/><path d="M736 396.7l2.7 1.8l-7.6 3l-0.9-0.6z" fill="#a6dcc4"/><path d="M800.5 389.8l2.2 14l-5.2-0.2l-2-13z" fill="#6e7ce0"/><path d="M678 503.8l-16.1-10.8l-0.3-8.5l16.2 10.8z" fill="#7aa092"/><path d="M683 448.5l-6.5-9l5.2-4.2l5.9 8.1z" fill="#b8b8be"/><path d="M790.3 391.4l1.9 12l-2.9 0.9l-1.8-11.4z" fill="#a6dbc7"/><path d="M795.5 390.6l2 13l-5.3-0.2l-1.9-12z" fill="#6e7ce0"/><path d="M715.3 400l2.1-2.1l7 3.4l-0.6 0.6z" fill="#a6dcc4"/><path d="M702.9 402.4l1.7-4.5l10.7 2.1l-0.9 2.4z" fill="#a6dcc4"/><path d="M684.9 422.9l-1.3-8.2l2.9-9.2l1.2 7.7z" fill="#808084"/><path d="M763.1 398.4l1.1 6.8l-11.9-1.3l-0.7-4.6z" fill="#a6dcc4"/><path d="M738.7 398.5l1.7 2.3l-8.8 1.4l-0.5-0.7z" fill="#a6dcc4"/><path d="M751.6 399.3l0.7 4.6l-11.5-0.7l-0.4-2.4z" fill="#a6dcc4"/><path d="M714.4 402.4l0.9-2.4l8.5 1.9l-0.3 0.8z" fill="#a6dcc4"/><path d="M677.5 444.7l-7.4-10.2l6.4 5l6.5 9z" fill="#6f718c"/><path d="M805.6 436.9l-5.4 14.3l0-23.8l5.4-14.3z" fill="#8788a9"/><path d="M800.2 475.6l-12.4 12.7l0-24.5l12.4-12.6z" fill="#70728d"/><path d="M740.4 400.8l0.4 2.4l-9.1-0.3l-0.1-0.7z" fill="#a6dcc4"/><path d="M729.1 400.5l1.1 0.4l0.9 0.6l0.5 0.7l0.1 0.7l-0.3 0.8l-0.6 0.7l-1 0.5l-1.2 0.3l-1.3 0.1l-1.2-0.2l-1.1-0.4l-0.9-0.5l-0.5-0.7l-0.1-0.8l0.3-0.8l0.6-0.6l1-0.5l1.2-0.4l1.3 0z" fill="#dca3ab" stroke="#7a4a50" stroke-width="0.4"/><path d="M687.6 443.4l-5.9-8.1l3.2-12.4l5.5 7.5z" fill="#929297"/><path d="M776.6 442.5l-8.4 8.5l-4.1-5.3l7.5-7.7z" fill="#adaec5"/><path d="M714.8 404.9l-0.4-2.5l9.1 0.3l0.1 0.8z" fill="#a6dcc4"/><path d="M687.7 413.2l-1.2-7.7l4.5-2.5l1.1 6.9z" fill="#a6dcc4"/><path d="M771.6 417.4l-3 8l-2.7-9.8l2.8-7.6z" fill="#8688a9"/><path d="M787.5 496.8l-18.3 9.7l0.2-8.4l18.4-9.8z" fill="#506b75"/><path d="M703.6 407l-0.7-4.6l11.5 0l0.4 2.5z" fill="#a6dcc4"/><path d="M740.8 403.2l-0.9 2.4l-8.5-1.9l0.3-0.8z" fill="#a6dcc4"/><path d="M692.1 409.9l-1.1-6.9l11.9-0.6l0.7 4.6z" fill="#a6dcc4"/><path d="M716.5 407.1l-1.7-2.2l8.8-1.4l0.5 0.7z" fill="#a6dcc4"/><path d="M651.9 422.9l-2.3-14.5l0-8.3l2.3 14.6z" fill="#5f7e73"/><path d="M752.3 403.9l-1.7 4.5l-10.7-2.8l0.9-2.4z" fill="#a6dcc4"/><path d="M739.9 405.6l-2.1 2.2l-7-3.4l0.6-0.7z" fill="#a6dcc4"/><path d="M782.8 437.9l-9.5 9.6l-5.1 3.5l8.4-8.5z" fill="#717174"/><path d="M771.6 438l-7.5 7.7l-2.6-13.1l7.1-7.2z" fill="#71738e"/><path d="M719.2 409l-2.7-1.9l7.6-2.9l0.9 0.5z" fill="#a6dcc4"/><path d="M764.2 405.2l-2.5 6.8l-11.1-3.6l1.7-4.5z" fill="#a6dcc4"/><path d="M768.7 408l-2.8 7.6l-4.2-3.6l2.5-6.8z" fill="#a6dcc4"/><path d="M737.8 407.8l-3.1 1.6l-4.9-4.5l1-0.5z" fill="#a6dcc4"/><path d="M664.9 411.6l-1.9-12l2.9 1l1.8 11.5z" fill="#9ed2d0"/><path d="M706.7 411.2l-3.1-4.2l11.2-2.1l1.7 2.2z" fill="#a6dcc4"/><path d="M722.7 410.2l-3.5-1.2l5.8-4.3l1.1 0.4z" fill="#a6dcc4"/><path d="M659.7 412.4l-2-13l5.3 0.2l1.9 12z" fill="#6e7ce0"/><path d="M693.9 455.8l-10.9-7.3l4.6-5.1l9.8 6.6z" fill="#bdbdc3"/><path d="M734.7 409.4l-3.8 1l-2.3-5.2l1.2-0.3z" fill="#a6dcc4"/><path d="M651.9 414.7l-2.3-14.6l2.9-0.9l2.2 14z" fill="#a6dbc7"/><path d="M654.7 413.2l-2.2-14l5.2 0.2l2 13z" fill="#6e7ce0"/><path d="M726.8 410.7l-4.1-0.5l3.4-5.1l1.2 0.2z" fill="#a6dcc4"/><path d="M730.9 410.4l-4.1 0.3l0.5-5.4l1.3-0.1z" fill="#a6dcc4"/><path d="M690.4 430.4l-5.5-7.5l2.8-9.7l5.1 7z" fill="#95959a"/><path d="M750.6 408.4l-4 4l-8.8-4.6l2.1-2.2z" fill="#a6dcc4"/><path d="M698.9 511l-20.9-7.2l-0.2-8.5l21 7.3z" fill="#759b8c"/><path d="M677.8 495.3l-16.2-10.8l0-24.4l16.2 10.8z" fill="#7e7e82"/><path d="M696.6 416.1l-4.5-6.2l11.5-2.9l3.1 4.2z" fill="#a6dcc4"/><path d="M697.4 450l-9.8-6.6l2.8-13l9.1 6.1z" fill="#9b9ba0"/><path d="M661.6 460.1l-9.7-13.4l0-23.8l9.7 13.4z" fill="#757579"/><path d="M768.2 451l-12.4 6.6l-2.8-5.9l11.1-6z" fill="#b2b3c6"/><path d="M711.8 414.7l-5.1-3.5l9.8-4.1l2.7 1.9z" fill="#a6dcc4"/><path d="M692.8 420.2l-5.1-7l4.4-3.3l4.5 6.2z" fill="#a6dcc4"/><path d="M689.7 452.9l-12.2-8.2l5.5 3.8l10.9 7.3z" fill="#5e5f76"/><path d="M805.6 413.1l-5.4 14.3l0-8.3l5.4-14.3z" fill="#87b4c4"/><path d="M768.6 425.4l-7.1 7.2l-2.2-10.4l6.6-6.6z" fill="#72738f"/><path d="M746.6 412.4l-5.8 3.1l-6.1-6.1l3.1-1.6z" fill="#a6dcc4"/><path d="M792.2 403.4l-4.5 11.9l-2.7 0.4l4.3-11.4z" fill="#99cab8"/><path d="M769.2 506.5l-22.3 6l0.1-8.4l22.4-6z" fill="#4f696a"/><path d="M761.7 412l-5.9 5.9l-9.2-5.5l4-4z" fill="#a6dcc4"/><path d="M797.5 403.6l-4.8 12.8l-5-1.1l4.5-11.9z" fill="#6e7ce0"/><path d="M718.5 417l-6.7-2.3l7.4-5.7l3.5 1.2z" fill="#a6dcc4"/><path d="M764.1 445.7l-11.1 6l-1.8-13.6l10.3-5.5z" fill="#77788d"/><path d="M802.7 403.8l-5.2 13.7l-4.8-1.1l4.8-12.8z" fill="#6e7ce0"/><path d="M740.8 415.5l-7.1 1.9l-2.8-7l3.8-1z" fill="#a6dcc4"/><path d="M787.8 488.3l-18.4 9.8l0-24.5l18.4-9.8z" fill="#55566a"/><path d="M765.9 415.6l-6.6 6.6l-3.5-4.3l5.9-5.9z" fill="#a6dcc4"/><path d="M805.6 404.8l-5.4 14.3l-2.7-1.6l5.2-13.7z" fill="#a8deda"/><path d="M708.1 460.7l-14.2-4.9l3.5-5.8l12.7 4.4z" fill="#babac0"/><path d="M726 417.9l-7.5-0.9l4.2-6.8l4.1 0.5z" fill="#a6dcc4"/><path d="M733.7 417.4l-7.7 0.5l0.8-7.2l4.1-0.3z" fill="#a6dcc4"/><path d="M722.7 514l-23.8-3l-0.1-8.4l23.8 3z" fill="#648377"/><path d="M704.2 421.2l-7.6-5.1l10.1-4.9l5.1 3.5z" fill="#a6dcc4"/><path d="M699.5 436.5l-9.1-6.1l2.4-10.2l8.5 5.8z" fill="#9e9ea3"/><path d="M746.9 512.5l-24.2 1.5l-0.1-8.4l24.4-1.5z" fill="#475d55"/><path d="M755.8 457.6l-15.1 4.1l-1.4-6.4l13.7-3.6z" fill="#b1b2c0"/><path d="M800.2 451.2l-12.4 12.6l0-23.7l12.4-12.7z" fill="#70728d"/><path d="M710.1 454.4l-12.7-4.4l2.1-13.5l11.8 4.2z" fill="#97979b"/><path d="M755.8 417.9l-8.6 4.6l-6.4-7l5.8-3.1z" fill="#a6dcc4"/><path d="M701.3 426l-8.5-5.8l3.8-4.1l7.6 5.1z" fill="#a6dcc4"/><path d="M724.2 462.7l-16.1-2l2-6.3l14.5 1.8z" fill="#b0b0b5"/><path d="M761.5 432.6l-10.3 5.5l-1.5-10.7l9.6-5.2z" fill="#7a7b91"/><path d="M753 451.7l-13.7 3.6l-0.8-13.8l12.7-3.4z" fill="#767684"/><path d="M740.7 461.7l-16.5 1l0.4-6.5l14.7-0.9z" fill="#ababb3"/><path d="M714.1 424.6l-9.9-3.4l7.6-6.5l6.7 2.3z" fill="#a6dcc4"/><path d="M698.8 502.6l-21-7.3l0-24.4l21 7.3z" fill="#7a7a7e"/><path d="M672.9 422.6l-8-11l2.8 0.5l7.7 10.6z" fill="#93c3c1"/><path d="M724.6 456.2l-14.5-1.8l1.2-13.7l13.5 1.6z" fill="#85858a"/><path d="M759.3 422.2l-9.6 5.2l-2.5-4.9l8.6-4.6z" fill="#a6dcc4"/><path d="M747.2 422.5l-10.5 2.8l-3-7.9l7.1-1.9z" fill="#a6dcc4"/><path d="M661.6 436.3l-9.7-13.4l0-8.2l9.7 13.3z" fill="#759b8c"/><path d="M739.3 455.3l-14.7 0.9l0.2-13.9l13.7-0.8z" fill="#6c6c70"/><path d="M668.4 424.4l-8.7-12l5.2-0.8l8 11z" fill="#6e7ce0"/><path d="M711.3 440.7l-11.8-4.2l1.8-10.5l11.1 3.8z" fill="#99999f"/><path d="M725.3 426l-11.2-1.4l4.4-7.6l7.5 0.9z" fill="#a6dcc4"/><path d="M736.7 425.3l-11.4 0.7l0.7-8.1l7.7-0.5z" fill="#a6dcc4"/><path d="M664 426.1l-9.3-12.9l5-0.8l8.7 12z" fill="#6e7ce0"/><path d="M769.4 498.1l-22.4 6l0-24.5l22.4-6z" fill="#545561"/><path d="M712.4 429.8l-11.1-3.8l2.9-4.8l9.9 3.4z" fill="#a6dcc4"/><path d="M751.2 438.1l-12.7 3.4l-0.7-10.9l11.9-3.2z" fill="#797a87"/><path d="M661.6 428l-9.7-13.3l2.8-1.5l9.3 12.9z" fill="#aee6d1"/><path d="M677.8 470.9l-16.2-10.8l0-23.8l16.2 10.8z" fill="#7e7e82"/><path d="M787.7 415.3l-10.3 10.5l-2.2-0.1l9.8-10z" fill="#8ab6a5"/><path d="M749.7 427.4l-11.9 3.2l-1.1-5.3l10.5-2.8z" fill="#a6dcc4"/><path d="M724.8 442.3l-13.5-1.6l1.1-10.9l12.6 1.6z" fill="#88888d"/><path d="M738.5 441.5l-13.7 0.8l0.2-10.9l12.8-0.8z" fill="#6f6f74"/><path d="M722.6 505.6l-23.8-3l0-24.4l23.8 3z" fill="#68686c"/><path d="M725 431.4l-12.6-1.6l1.7-5.2l11.2 1.4z" fill="#a6dcc4"/><path d="M792.7 416.4l-11.2 11.4l-4.1-2l10.3-10.5z" fill="#6e7ce0"/><path d="M800.2 427.4l-12.4 12.7l0-8.3l12.4-12.7z" fill="#7096a4"/><path d="M737.8 430.6l-12.8 0.8l0.3-5.4l11.4-0.7z" fill="#a6dcc4"/><path d="M747 504.1l-24.4 1.5l0-24.4l24.4-1.6z" fill="#4b4b4e"/><path d="M797.5 417.5l-12 12.2l-4-1.9l11.2-11.4z" fill="#6e7ce0"/><path d="M800.2 419.1l-12.4 12.7l-2.3-2.1l12-12.2z" fill="#aee7e0"/><path d="M787.8 463.8l-18.4 9.8l0-23.8l18.4-9.7z" fill="#55566a"/><path d="M686.3 431.6l-13.4-9l2.5 0.1l12.8 8.5z" fill="#87b3b1"/><path d="M682.9 434.1l-14.5-9.7l4.5-1.8l13.4 9z" fill="#6e7ce0"/><path d="M677.8 447.1l-16.2-10.8l0-8.3l16.2 10.8z" fill="#7ea797"/><path d="M777.4 425.8l-15.2 8.1l-1.5-0.5l14.5-7.7z" fill="#799f91"/><path d="M698.8 478.2l-21-7.3l0-23.8l21 7.3z" fill="#7a7a7e"/><path d="M679.6 436.5l-15.6-10.4l4.4-1.7l14.5 9.7z" fill="#6e7ce0"/><path d="M677.8 438.8l-16.2-10.8l2.4-1.9l15.6 10.4z" fill="#b2ebd5"/><path d="M781.5 427.8l-16.4 8.8l-2.9-2.7l15.2-8.1z" fill="#6e7ce0"/><path d="M769.4 473.6l-22.4 6l0-23.8l22.4-6z" fill="#545561"/><path d="M787.8 440.1l-18.4 9.7l0-8.2l18.4-9.8z" fill="#55727b"/><path d="M703.7 437.6l-17.4-6l1.9-0.4l16.6 5.8z" fill="#7ba3a0"/><path d="M785.5 429.7l-17.6 9.4l-2.8-2.5l16.4-8.8z" fill="#6e7ce0"/><path d="M722.6 481.2l-23.8-3l0-23.8l23.8 3z" fill="#68686c"/><path d="M787.8 431.8l-18.4 9.8l-1.5-2.5l17.6-9.4z" fill="#b2ece1"/><path d="M762.2 433.9l-18.6 4.9l-0.7-0.7l17.8-4.7z" fill="#68897d"/><path d="M747 479.6l-24.4 1.6l0-23.8l24.4-1.6z" fill="#4b4b4e"/><path d="M701.8 440.6l-18.9-6.5l3.4-2.5l17.4 6z" fill="#6e7ce0"/><path d="M723.5 440.1l-19.8-2.5l1.1-0.6l18.9 2.4z" fill="#719690"/><path d="M765.1 436.6l-20.1 5.3l-1.4-3.1l18.6-4.9z" fill="#6e7ce0"/><path d="M698.8 454.4l-21-7.3l0-8.3l21 7.3z" fill="#7aa192"/><path d="M743.6 438.8l-20.1 1.3l0.2-0.7l19.2-1.3z" fill="#6a8c83"/><path d="M699.8 443.5l-20.2-7l3.3-2.4l18.9 6.5z" fill="#6e7ce0"/><path d="M698.8 446.1l-21-7.3l1.8-2.3l20.2 7z" fill="#b0e9d3"/><path d="M723.1 443.3l-21.3-2.7l1.9-3l19.8 2.5z" fill="#6e7ce0"/><path d="M767.9 439.1l-21.6 5.8l-1.3-3l20.1-5.3z" fill="#6e7ce0"/><path d="M769.4 449.8l-22.4 6l0-8.2l22.4-6z" fill="#547070"/><path d="M745 441.9l-21.9 1.4l0.4-3.2l20.1-1.3z" fill="#6e7ce0"/><path d="M769.4 441.6l-22.4 6l-0.7-2.7l21.6-5.8z" fill="#b1ebdd"/><path d="M722.8 446.4l-23-2.9l2-2.9l21.3 2.7z" fill="#6e7ce0"/><path d="M722.6 457.4l-23.8-3l0-8.3l23.8 3z" fill="#68897d"/><path d="M746.3 444.9l-23.5 1.5l0.3-3.1l21.9-1.4z" fill="#6e7ce0"/><path d="M747 455.8l-24.4 1.6l0-8.3l24.4-1.5z" fill="#4b635a"/><path d="M722.6 449.1l-23.8-3l1-2.6l23 2.9z" fill="#a9dfcb"/><path d="M747 447.6l-24.4 1.5l0.2-2.7l23.5-1.5z" fill="#ade5d3"/></g><circle cx="588.8" cy="277.4" r="1.9" fill="#f0a030" stroke="#30200a" stroke-width="0.6"/><path d="M599.3 235.7L631.7 242.8" stroke="#d80808" stroke-width="1.1"/><path d="M643.4 245.4L631.0 245.7L632.3 239.9Z" fill="#d80808"/><path d="M594.7 224.2L605.0 208.7" stroke="#10dc10" stroke-width="1.1"/><path d="M610.9 200.0L607.7 210.5L602.4 206.9Z" fill="#10dc10"/><path d="M588.5 222.3L588.3 196.8" stroke="#1010f0" stroke-width="1.1"/><path d="M588.2 185.0L591.8 196.8L584.8 196.8Z" fill="#1010f0"/><circle cx="588.5" cy="233.3" r="11" fill="none" stroke="#e4e4e4" stroke-width="0.9"/><g transform="translate(387.3 305.2)"><circle r="7.2" fill="none" stroke="#fff" stroke-width="1.2"/><circle r="7.2" fill="none" stroke="#e01010" stroke-width="1.2" stroke-dasharray="2.8 2.85"/><path d="M-14.5 0H-4.5M4.5 0H14.5M0 -14.5V-4.5M0 4.5V14.5" stroke="#0a0a0a" stroke-width="0.9"/><rect x="1.6" y="-9.6" width="2.4" height="2.4" fill="#0a0a0a"/></g><path d="M63.8 89.7C62.2 89.9 56.8 89.7 53.8 90.8C50.9 92.0 47.7 94.6 46.3 96.7C44.9 98.8 44.5 99.4 45.5 103.3C46.5 107.2 49.7 114.4 52.2 120.0C54.7 125.6 57.9 132.0 60.5 136.7C63.1 141.3 66.8 146.1 68.0 148.0M48.8 134.7C50.5 135.8 55.6 139.4 58.8 141.7C62.1 143.9 66.8 147.2 68.3 148.3M66.8 121.7C67.0 123.9 67.8 130.6 68.0 135.0C68.2 139.4 68.3 146.1 68.3 148.3M74.7 81.7C75.8 81.3 79.3 79.7 81.3 79.7C83.4 79.7 85.9 80.5 87.2 81.7C88.5 82.8 89.2 84.9 89.2 86.7C89.2 88.5 88.1 91.0 87.2 92.5C86.2 94.0 84.0 95.3 83.3 95.8M112.5 76.7C110.8 78.1 102.1 82.6 102.2 85.3C102.3 88.0 111.2 91.6 113.0 92.8M124.7 77.5L125.5 86.7M135.5 76.7C135.9 78.1 137.7 82.5 138.0 85.0C138.3 87.5 137.7 90.1 137.2 91.7C136.7 93.2 135.4 94.0 135.0 94.5M145.8 78.7L155.8 77.5M152.7 72.5C152.4 74.2 151.7 79.2 151.3 82.5C150.9 85.8 150.4 90.8 150.2 92.5M159.7 82.5L164.2 81.7M157.7 89.7C158.0 90.4 158.4 92.9 159.7 93.8C160.9 94.8 164.2 95.1 165.2 95.3M175.2 77.5C175.4 78.8 175.7 82.6 176.3 85.0C176.9 87.4 178.4 90.6 178.8 91.7M184.3 80.0L185.5 86.7M203.8 69.2C203.1 71.0 200.7 76.5 199.7 80.0C198.6 83.5 197.4 87.9 197.5 90.0C197.6 92.1 199.0 92.4 200.5 92.5C202.0 92.6 205.2 91.8 206.3 90.8C207.4 89.9 207.0 87.4 207.2 86.7M195.5 78.3L204.7 77.5M195.8 84.2L203.8 83.3M219.7 80.8C219.1 82.1 217.4 86.8 216.3 88.3C215.2 89.9 213.7 90.4 213.0 90.0C212.3 89.6 211.5 87.4 212.2 85.8C212.9 84.3 215.5 81.8 217.2 80.8C218.8 79.9 220.6 79.4 222.2 80.0C223.7 80.6 225.5 82.5 226.3 84.2C227.2 85.8 227.0 89.0 227.2 90.0M317.5 68.0C315.5 68.1 309.3 67.8 305.5 68.7C301.7 69.6 297.4 71.2 294.7 73.3C291.9 75.5 289.7 78.3 288.8 81.7C288.0 85.0 288.3 89.4 289.7 93.3C291.1 97.2 294.1 101.2 297.2 105.0C300.2 108.8 306.2 114.0 308.0 115.8M298.0 113.3L308.5 116.3M304.7 101.7L308.8 116.3M326.8 58.0L343.0 60.8M327.2 65.8L343.8 66.7M338.0 66.7L336.3 75.8M343.0 66.7C342.9 67.8 341.9 71.7 342.5 73.3C343.1 75.0 344.2 76.2 346.3 76.7C348.5 77.2 354.0 76.4 355.5 76.3M376.3 60.8L363.0 75.0M362.2 62.5L371.8 71.7M383.0 67.5L384.2 73.3M391.3 66.7L392.5 72.5M400.5 70.0C399.9 70.8 399.2 73.5 397.2 75.0C395.1 76.5 389.5 78.5 388.0 79.2M411.3 63.0L417.2 65.8M412.2 70.0L415.8 73.3M408.8 84.2C410.5 83.6 416.1 82.5 418.8 80.8C421.6 79.2 424.4 75.3 425.5 74.2M431.3 80.8C432.4 80.8 437.0 79.3 438.0 80.3C439.0 81.4 437.3 85.9 437.2 87.0M426.3 86.3L443.0 88.7M547.6 138.9C546.1 139.6 541.2 140.9 538.8 142.7C536.5 144.5 534.6 147.1 533.6 149.7C532.6 152.2 532.3 155.3 533.0 157.8C533.7 160.4 534.9 163.1 537.7 164.8C540.4 166.6 547.4 167.8 549.3 168.3M538.3 170.1L549.9 168.3M545.3 159.0L549.9 168.3M563.9 122.3L555.2 132.8M563.9 122.3C565.6 123.4 575.4 125.6 573.8 129.3C572.3 132.9 557.8 141.6 554.6 144.1M581.1 127.5L581.1 138.0M592.5 127.5C592.4 129.0 592.8 133.9 591.9 136.3C591.0 138.6 588.0 140.6 587.3 141.5M598.9 136.3L607.7 136.3M614.7 131.6C616.4 131.7 625.3 130.5 625.2 132.2C625.1 133.8 615.9 139.9 614.1 141.5M623.4 137.4L632.2 144.1M458.0 228.7L466.2 230.7L474.4 235.5L481.3 238.9L487.4 231.1L490.9 241.0L495.7 256.7L486.8 258.8L474.4 262.2L478.5 254.7L470.3 251.3L457.3 246.7M405.8 275.6L411.5 286.2L419.0 298.5L412.9 304.6L425.2 305.6L438.2 305.3L444.3 295.7L447.8 288.9L434.8 288.2L430.7 280.7L424.9 273.6M685.1 277.3L697.5 280.9L706.9 283.6L708.6 276.9L717.1 282.2L727.8 288.9L730.9 292.9L726.9 298.3L715.3 304.5L703.8 312.0L704.6 302.7L697.5 299.1L688.2 295.6M593.5 423.8L601.8 426.8L612.8 429.7L615.7 420.3L623.1 428.9L631.3 440.4L636.6 447.7L626.4 452.7L612.4 457.2L602.2 460.0L605.4 449.4L597.6 448.1L588.6 447.7M386.4 466.6C386.5 464.2 386.0 455.7 387.0 451.8C388.1 447.9 389.5 445.4 392.8 443.3C396.0 441.2 401.6 440.2 406.5 439.1C411.5 437.9 419.8 437.0 422.4 436.5M411.8 432.1C413.7 432.8 423.6 434.3 422.9 436.5C422.2 438.8 410.1 444.0 407.6 445.4M380.0 481.1L397.0 482.5M389.2 481.9L390.0 501.6M382.2 500.1L398.1 502.7M402.3 493.1L402.7 504.8M402.7 497.4C403.5 496.8 406.1 494.2 407.6 494.2C409.1 494.2 411.0 495.4 411.8 497.4C412.7 499.3 412.7 504.4 412.9 505.9M426.0 499.5C425.1 499.9 420.9 500.7 420.3 501.6C419.7 502.5 421.5 503.9 422.4 504.8C423.4 505.7 426.0 506.0 426.0 506.9C426.0 507.8 423.0 509.6 422.4 510.1M432.0 505.9C433.6 505.5 440.6 504.7 441.5 503.7C442.4 502.8 438.9 500.1 437.3 500.1C435.7 500.1 432.7 502.3 432.0 503.7C431.3 505.2 431.4 508.2 433.0 509.0C434.6 509.9 440.1 509.0 441.5 509.0M455.3 500.6L456.4 510.1M448.9 502.3L459.5 501.0M406.5 523.9L422.4 524.3M415.4 517.9L415.0 532.4M392.8 551.0C393.6 550.0 395.9 543.8 398.1 545.1C400.2 546.4 404.2 556.6 405.5 558.9M404.4 543.0L407.6 547.2M409.7 542.5L412.9 546.8M424.6 555.7C425.8 554.3 430.2 546.7 432.0 547.2C433.7 547.7 434.6 556.9 435.2 558.9M438.3 545.1L440.5 549.3M443.6 544.7L445.8 548.5M454.2 547.2L453.2 559.9M461.7 546.8C461.7 549.0 461.0 558.1 462.1 559.9C463.2 561.8 467.4 558.2 468.4 557.8" fill="none" stroke="#080808" stroke-width="2.0" stroke-linecap="round" stroke-linejoin="round"/><text x="13.6" y="14.6" font-size="8" fill="#fff" font-family="Liberation Sans, sans-serif">User Ortho</text><text x="48.8" y="603.8" font-size="8.2" fill="#c2d634" font-family="Liberation Sans, sans-serif">(1) Cylinder.001</text><g stroke-width="1.3"><path d="M17.80000000000001 591.7L33.8 595.7" stroke="#e01818"/><path d="M17.80000000000001 591.7L24.5 583.3" stroke="#20d820"/><path d="M17.80000000000001 591.7L17.80000000000001 576.7" stroke="#2020e8"/></g><text x="36.3" y="594.7" font-size="7.5" fill="#e01818" font-family="Liberation Sans, sans-serif">x</text><text x="25.8" y="581.1" font-size="7.5" fill="#20d820" font-family="Liberation Sans, sans-serif">y</text><text x="18.4" y="576.1" font-size="7.5" fill="#2020e8" font-family="Liberation Sans, sans-serif">z</text></svg>
<div style="left:0px;top:646px;width:1040px;height:19px;background:#727272;border-top:1px solid #4a4a4a;"></div>
<div style="left:0px;top:664.4px;width:1040px;height:1.2px;background:#2c2c2c;"></div>
<div style="left:6.7px;top:648.6px;width:22.3px;height:13.0px;background:linear-gradient(#585858,#393939);box-shadow:0 0 0 0.7px #3a3a3a;border-radius:4px 4px 4px 4px;"></div>
<svg style="left:9.5px;top:650.2px" width="11" height="10.5" viewBox="0 0 11 10.5"><path d="M1 2.2L5.5 0.8L10 2.2V7.6L5.5 10L1 7.6Z" fill="#ededed" stroke="#444" stroke-width="0.5"/><path d="M5.5 3.6V10L10 7.6V2.2Z" fill="#a9a9a9"/></svg>
<svg style="left:21.6px;top:649.6px" width="6" height="11" viewBox="0 0 6 11"><path d="M3 0.6 L5.4 4.4 H0.6Z M3 10.4 L5.4 6.6 H0.6Z" fill="#ddd"/></svg>
<div style="left:38px;top:650.1px;height:12px;line-height:12px;font-size:7.9px;color:#111;white-space:pre;">View</div>
<div style="left:69.5px;top:650.1px;height:12px;line-height:12px;font-size:7.9px;color:#111;white-space:pre;">Select</div>
<div style="left:106px;top:650.1px;height:12px;line-height:12px;font-size:7.9px;color:#111;white-space:pre;">Add</div>
<div style="left:134.5px;top:650.1px;height:12px;line-height:12px;font-size:7.9px;color:#111;white-space:pre;">Mesh</div>
<div style="left:162px;top:648.6px;width:70.7px;height:13.0px;background:linear-gradient(#585858,#393939);box-shadow:0 0 0 0.7px #3a3a3a;border-radius:4px 4px 4px 4px;"></div>
<div style="left:180px;top:650.1px;height:12px;line-height:12px;font-size:7.9px;color:#fff;white-space:pre;">Edit Mode</div>
<svg style="left:223.2px;top:649.6px" width="6" height="11" viewBox="0 0 6 11"><path d="M3 0.6 L5.4 4.4 H0.6Z M3 10.4 L5.4 6.6 H0.6Z" fill="#e0e0e0"/></svg>
<svg style="left:164.5px;top:649.8000000000001px" width="12" height="11" viewBox="0 0 12 11"><path d="M1.5 3L6 1.2L10.5 3V8L6 10L1.5 8Z" fill="#bdbdbd" stroke="#555" stroke-width="0.5"/><circle cx="1.8" cy="3" r="1.1" fill="#f5a23c"/><circle cx="6" cy="1.4" r="1.1" fill="#f5a23c"/><circle cx="1.8" cy="8" r="1.1" fill="#f5a23c"/><circle cx="6" cy="9.7" r="1.1" fill="#f5a23c"/></svg>
<div style="left:236.5px;top:648.6px;width:22.5px;height:13.0px;background:linear-gradient(#585858,#393939);box-shadow:0 0 0 0.7px #3a3a3a;border-radius:4px 4px 4px 4px;"></div>
<div style="left:240.4px;top:650.8000000000001px;width:9px;height:9px;border-radius:50%;background:radial-gradient(circle at 40% 35%,#fff,#d0d0d0 60%,#999);"></div>
<svg style="left:251.5px;top:649.6px" width="6" height="11" viewBox="0 0 6 11"><path d="M3 0.6 L5.4 4.4 H0.6Z M3 10.4 L5.4 6.6 H0.6Z" fill="#ddd"/></svg>
<div style="left:263px;top:648.6px;width:22.5px;height:13.0px;background:linear-gradient(#585858,#393939);box-shadow:0 0 0 0.7px #3a3a3a;border-radius:4px 4px 4px 4px;"></div>
<div style="left:267px;top:650.2px;width:6px;height:6px;border-radius:50%;background:#e8e8e8;box-shadow:0 0 0 0.5px #222;"></div>
<div style="left:270.2px;top:653.8000000000001px;width:6.4px;height:6.4px;border-radius:50%;background:#e8e8e8;box-shadow:0 0 0 0.5px #222;"></div>
<div style="left:269px;top:652.8000000000001px;width:2.6px;height:2.6px;border-radius:50%;background:#3b7be8;"></div>
<svg style="left:278px;top:649.6px" width="6" height="11" viewBox="0 0 6 11"><path d="M3 0.6 L5.4 4.4 H0.6Z M3 10.4 L5.4 6.6 H0.6Z" fill="#ddd"/></svg>
<div style="left:289px;top:648.6px;width:14.5px;height:13.0px;background:linear-gradient(#585858,#393939);box-shadow:0 0 0 0.7px #3a3a3a;border-radius:4px 0px 0px 4px;"></div>
<svg style="left:290.2px;top:649.4px" width="12" height="12" viewBox="0 0 12 12"><path d="M6 6.8V1" stroke="#4a7bf0" stroke-width="1.3"/><path d="M6 6.8L1.2 10.4" stroke="#e03c3c" stroke-width="1.3"/><path d="M6 6.8L10.8 10.4" stroke="#4fc84a" stroke-width="1.3"/></svg>
<div style="left:303.5px;top:648.6px;width:14px;height:13.0px;background:linear-gradient(#4e78c4,#6a94e0);box-shadow:0 0 0 0.7px #3a3a3a;"></div>
<svg style="left:304.8px;top:649.8000000000001px" width="11" height="11" viewBox="0 0 11 11"><path d="M1.5 9.5L7 4" stroke="#1c2c55" stroke-width="1.5"/><path d="M4.5 2.2L9.2 1.8L8.8 6.5Z" fill="#3556a8" stroke="#16244a" stroke-width="0.7"/></svg>
<div style="left:317.5px;top:648.6px;width:14px;height:13.0px;background:linear-gradient(#585858,#393939);box-shadow:0 0 0 0.7px #3a3a3a;"></div>
<svg style="left:319px;top:650.1px" width="11" height="11" viewBox="0 0 11 11"><path d="M1.5 9.5Q2 2.5 9.5 1.8" stroke="#4a72c8" stroke-width="1.4" fill="none"/></svg>
<div style="left:331.5px;top:648.6px;width:14.5px;height:13.0px;background:linear-gradient(#585858,#393939);box-shadow:0 0 0 0.7px #3a3a3a;"></div>
<svg style="left:333px;top:650.0px" width="11" height="11" viewBox="0 0 11 11"><path d="M1.5 9.5L6.5 4.5" stroke="#4a72c8" stroke-width="1.5"/><rect x="5.6" y="1.6" width="4" height="3.8" fill="#4a72c8"/></svg>
<div style="left:346px;top:648.6px;width:52px;height:13.0px;background:linear-gradient(#585858,#393939);box-shadow:0 0 0 0.7px #3a3a3a;border-radius:0px 4px 4px 0px;"></div>
<div style="left:352px;top:650.1px;height:12px;line-height:12px;font-size:7.9px;color:#fff;white-space:pre;">Global</div>
<svg style="left:388.5px;top:649.6px" width="6" height="11" viewBox="0 0 6 11"><path d="M3 0.6 L5.4 4.4 H0.6Z M3 10.4 L5.4 6.6 H0.6Z" fill="#e0e0e0"/></svg>
<div style="left:401.5px;top:648.6px;width:14.3px;height:13.0px;background:linear-gradient(#a9a9a9,#8b8b8b);box-shadow:0 0 0 0.7px #3a3a3a;border-radius:4px 0px 0px 4px;"></div>
<div style="left:415.8px;top:648.6px;width:14px;height:13.0px;background:linear-gradient(#5d5d5d,#707070);box-shadow:0 0 0 0.7px #3a3a3a;"></div>
<div style="left:429.8px;top:648.6px;width:14px;height:13.0px;background:linear-gradient(#a9a9a9,#8b8b8b);box-shadow:0 0 0 0.7px #3a3a3a;border-radius:0px 4px 4px 0px;"></div>
<svg style="left:403.3px;top:649.8000000000001px" width="11" height="11" viewBox="0 0 11 11"><path d="M1.5 3L6.5 1.6L9.8 3.2V8.2L5 9.8L1.5 8Z" fill="#b9b9b9" stroke="#666" stroke-width="0.5"/><path d="M5 4.4V9.8L9.8 8.2V3.2Z" fill="#8d8d8d"/><circle cx="1.8" cy="3" r="1.2" fill="#f0a858"/></svg>
<svg style="left:417.3px;top:649.8000000000001px" width="11" height="11" viewBox="0 0 11 11"><path d="M1.5 3L6.5 1.6L9.8 3.2V8.2L5 9.8L1.5 8Z" fill="#b9b9b9" stroke="#666" stroke-width="0.5"/><path d="M5 4.4V9.8L9.8 8.2V3.2Z" fill="#8d8d8d"/><path d="M1.5 3V8" stroke="#f28a1c" stroke-width="1.5"/></svg>
<svg style="left:431.3px;top:649.8000000000001px" width="11" height="11" viewBox="0 0 11 11"><path d="M1.5 3L6.5 1.6L9.8 3.2V8.2L5 9.8L1.5 8Z" fill="#b9b9b9" stroke="#666" stroke-width="0.5"/><path d="M5 4.4V9.8L9.8 8.2V3.2Z" fill="#8d8d8d"/><path d="M1.5 3L5 4.4V9.8L1.5 8Z" fill="#e8b47c"/></svg>
<div style="left:448px;top:648.6px;width:14px;height:13.0px;background:linear-gradient(#585858,#393939);box-shadow:0 0 0 0.7px #3a3a3a;border-radius:4px 4px 4px 4px;"></div>
<svg style="left:449.5px;top:649.8000000000001px" width="11" height="11" viewBox="0 0 11 11"><circle cx="5.5" cy="5.5" r="2.8" fill="#e8e8e8"/><path d="M1 1h2M1 1v2M10 1h-2M10 1v2M1 10h2M1 10v-2M10 10h-2M10 10v-2M5.5 0.6v1.2M5.5 10.4v-1.2M0.6 5.5h1.2M10.4 5.5h-1.2" stroke="#e8e8e8" stroke-width="1"/></svg>
<div style="left:466px;top:648.6px;width:22.3px;height:13.0px;background:linear-gradient(#585858,#393939);box-shadow:0 0 0 0.7px #3a3a3a;border-radius:4px 4px 4px 4px;"></div>
<div style="left:470.4px;top:651.3000000000001px;width:8px;height:8px;border-radius:50%;background:#5c5c5c;box-shadow:0 0 0 0.6px #2a2a2a;"></div>
<div style="left:473px;top:653.9px;width:2.8px;height:2.8px;border-radius:50%;background:#3c3c3c;"></div>
<svg style="left:481px;top:649.6px" width="6" height="11" viewBox="0 0 6 11"><path d="M3 0.6 L5.4 4.4 H0.6Z M3 10.4 L5.4 6.6 H0.6Z" fill="#ddd"/></svg>
<div style="left:492.5px;top:648.6px;width:14px;height:13.0px;background:linear-gradient(#a9a9a9,#8b8b8b);box-shadow:0 0 0 0.7px #3a3a3a;border-radius:4px 0px 0px 4px;"></div>
<svg style="left:494px;top:650.0px" width="11" height="11" viewBox="0 0 11 11"><path d="M2 8.5L6.8 3.4Q8.6 2 9.6 3.6Q10.2 5 8.8 6.2L5 9.6" fill="none" stroke="#666" stroke-width="2"/><path d="M2 8.5L6.8 3.4Q8.6 2 9.6 3.6Q10.2 5 8.8 6.2L5 9.6" fill="none" stroke="#c9c9c9" stroke-width="0.9"/></svg>
<div style="left:506.5px;top:648.6px;width:22.5px;height:13.0px;background:linear-gradient(#585858,#393939);box-shadow:0 0 0 0.7px #3a3a3a;"></div>
<svg style="left:508.5px;top:650.6px" width="13" height="10" viewBox="0 0 13 10"><path d="M0.5 1.5V8.5M12.5 1.5V8.5M0.5 5H12.5" stroke="#d8d8d8" stroke-width="0.9"/><rect x="5.3" y="0.6" width="2.4" height="8.8" rx="1.1" fill="#4c8cf5"/><path d="M3.6 3.5V6.5M9.4 3.5V6.5" stroke="#d8d8d8" stroke-width="0.8"/></svg>
<svg style="left:521.8px;top:649.6px" width="6" height="11" viewBox="0 0 6 11"><path d="M3 0.6 L5.4 4.4 H0.6Z M3 10.4 L5.4 6.6 H0.6Z" fill="#ddd"/></svg>
<div style="left:529px;top:648.6px;width:14px;height:13.0px;background:linear-gradient(#a9a9a9,#8b8b8b);box-shadow:0 0 0 0.7px #3a3a3a;border-radius:0px 4px 4px 0px;"></div>
<svg style="left:530.5px;top:649.8000000000001px" width="11" height="11" viewBox="0 0 11 11"><path d="M1 5.5H10M1 8H10M1 10H10M5.5 5V10.5M8 5V10.5M3 5V10.5" stroke="#eee" stroke-width="0.6" stroke-dasharray="0.9 0.8"/><circle cx="4.5" cy="3.5" r="2.7" fill="#3b79e8" stroke="#fff" stroke-width="0.8"/><circle cx="4.5" cy="3.5" r="1" fill="#fff"/></svg>
<div style="left:547px;top:648.6px;width:14px;height:13.0px;background:linear-gradient(#a9a9a9,#8b8b8b);box-shadow:0 0 0 0.7px #3a3a3a;border-radius:4px 4px 4px 4px;"></div>
<svg style="left:548.5px;top:649.8000000000001px" width="11" height="11" viewBox="0 0 11 11"><path d="M1.5 9.5L9.5 1.5" stroke="#555" stroke-width="2.2"/><path d="M1.5 9.5L9.5 1.5" stroke="#eee" stroke-width="1"/><path d="M6.2 1.2H9.8V4.8" fill="none" stroke="#eee" stroke-width="1.1"/><path d="M4.8 9.8H1.2V6.2" fill="none" stroke="#eee" stroke-width="1.1"/><circle cx="9.6" cy="1.4" r="1.1" fill="#f0932c"/><circle cx="1.4" cy="9.6" r="1.1" fill="#f0932c"/></svg>
<div style="left:565.4px;top:648.6px;width:14px;height:13.0px;background:linear-gradient(#a9a9a9,#8b8b8b);box-shadow:0 0 0 0.7px #3a3a3a;border-radius:4px 0px 0px 4px;"></div>
<div style="left:579.4px;top:648.6px;width:13.8px;height:13.0px;background:linear-gradient(#a9a9a9,#8b8b8b);box-shadow:0 0 0 0.7px #3a3a3a;border-radius:0px 4px 4px 0px;"></div>
<svg style="left:566.8px;top:650.0px" width="11" height="11" viewBox="0 0 11 11"><rect x="0.8" y="3" width="9.2" height="6.6" rx="0.8" fill="#3c3c3c"/><rect x="3" y="1.6" width="3.6" height="1.8" fill="#3c3c3c"/><circle cx="5.2" cy="6.2" r="2.3" fill="#e8e8e8"/><circle cx="5.2" cy="6.2" r="1.1" fill="#c43c3c"/><circle cx="9.4" cy="2" r="1.5" fill="#f2e36a"/></svg>
<svg style="left:580.6px;top:650.0px" width="11" height="11" viewBox="0 0 11 11"><rect x="0.8" y="4" width="9.6" height="5.8" fill="#3c3c3c"/><path d="M0.8 3.6L10 1.2L10.4 2.6L1.2 5Z" fill="#2e2e2e"/><path d="M2.4 5.4h1.6M5.2 5.4h1.6M8 5.4h1.6M2.4 8.2h1.6M5.2 8.2h1.6M8 8.2h1.6" stroke="#e8e8e8" stroke-width="1"/><path d="M2.6 3.4l1.2-.3M5.4 2.7l1.2-.3M8.2 2l1.2-.3" stroke="#e8e8e8" stroke-width="0.9"/></svg>
<div style="left:0px;top:665.5px;width:1040px;height:34.5px;background:#424242;"></div>
<div style="left:179.749px;top:665.5px;width:759.201px;height:34.5px;background:#727272;"></div>
<div style="left:8.6px;top:665.5px;width:0.9px;height:34.5px;background:#3d3d3d;"></div><div style="left:23.8px;top:665.5px;width:0.9px;height:34.5px;background:#373737;"></div><div style="left:39.0px;top:665.5px;width:0.9px;height:34.5px;background:#3d3d3d;"></div><div style="left:54.3px;top:665.5px;width:0.9px;height:34.5px;background:#373737;"></div><div style="left:69.5px;top:665.5px;width:0.9px;height:34.5px;background:#3d3d3d;"></div><div style="left:84.8px;top:665.5px;width:0.9px;height:34.5px;background:#373737;"></div><div style="left:100.0px;top:665.5px;width:0.9px;height:34.5px;background:#3d3d3d;"></div><div style="left:115.3px;top:665.5px;width:0.9px;height:34.5px;background:#373737;"></div><div style="left:130.5px;top:665.5px;width:0.9px;height:34.5px;background:#3d3d3d;"></div><div style="left:145.8px;top:665.5px;width:0.9px;height:34.5px;background:#373737;"></div><div style="left:161.0px;top:665.5px;width:0.9px;height:34.5px;background:#3d3d3d;"></div><div style="left:176.2px;top:665.5px;width:0.9px;height:34.5px;background:#373737;"></div><div style="left:191.5px;top:665.5px;width:0.9px;height:34.5px;background:#6c6c6c;"></div><div style="left:206.7px;top:665.5px;width:0.9px;height:34.5px;background:#656565;"></div><div style="left:222.0px;top:665.5px;width:0.9px;height:34.5px;background:#6c6c6c;"></div><div style="left:237.2px;top:665.5px;width:0.9px;height:34.5px;background:#656565;"></div><div style="left:252.5px;top:665.5px;width:0.9px;height:34.5px;background:#6c6c6c;"></div><div style="left:267.7px;top:665.5px;width:0.9px;height:34.5px;background:#656565;"></div><div style="left:283.0px;top:665.5px;width:0.9px;height:34.5px;background:#6c6c6c;"></div><div style="left:298.2px;top:665.5px;width:0.9px;height:34.5px;background:#656565;"></div><div style="left:313.5px;top:665.5px;width:0.9px;height:34.5px;background:#6c6c6c;"></div><div style="left:328.7px;top:665.5px;width:0.9px;height:34.5px;background:#656565;"></div><div style="left:343.9px;top:665.5px;width:0.9px;height:34.5px;background:#6c6c6c;"></div><div style="left:359.2px;top:665.5px;width:0.9px;height:34.5px;background:#656565;"></div><div style="left:374.4px;top:665.5px;width:0.9px;height:34.5px;background:#6c6c6c;"></div><div style="left:389.7px;top:665.5px;width:0.9px;height:34.5px;background:#656565;"></div><div style="left:404.9px;top:665.5px;width:0.9px;height:34.5px;background:#6c6c6c;"></div><div style="left:420.2px;top:665.5px;width:0.9px;height:34.5px;background:#656565;"></div><div style="left:435.4px;top:665.5px;width:0.9px;height:34.5px;background:#6c6c6c;"></div><div style="left:450.7px;top:665.5px;width:0.9px;height:34.5px;background:#656565;"></div><div style="left:465.9px;top:665.5px;width:0.9px;height:34.5px;background:#6c6c6c;"></div><div style="left:481.1px;top:665.5px;width:0.9px;height:34.5px;background:#656565;"></div><div style="left:496.4px;top:665.5px;width:0.9px;height:34.5px;background:#6c6c6c;"></div><div style="left:511.6px;top:665.5px;width:0.9px;height:34.5px;background:#656565;"></div><div style="left:526.9px;top:665.5px;width:0.9px;height:34.5px;background:#6c6c6c;"></div><div style="left:542.1px;top:665.5px;width:0.9px;height:34.5px;background:#656565;"></div><div style="left:557.4px;top:665.5px;width:0.9px;height:34.5px;background:#6c6c6c;"></div><div style="left:572.6px;top:665.5px;width:0.9px;height:34.5px;background:#656565;"></div><div style="left:587.9px;top:665.5px;width:0.9px;height:34.5px;background:#6c6c6c;"></div><div style="left:603.1px;top:665.5px;width:0.9px;height:34.5px;background:#656565;"></div><div style="left:618.4px;top:665.5px;width:0.9px;height:34.5px;background:#6c6c6c;"></div><div style="left:633.6px;top:665.5px;width:0.9px;height:34.5px;background:#656565;"></div><div style="left:648.8px;top:665.5px;width:0.9px;height:34.5px;background:#6c6c6c;"></div><div style="left:664.1px;top:665.5px;width:0.9px;height:34.5px;background:#656565;"></div><div style="left:679.3px;top:665.5px;width:0.9px;height:34.5px;background:#6c6c6c;"></div><div style="left:694.6px;top:665.5px;width:0.9px;height:34.5px;background:#656565;"></div><div style="left:709.8px;top:665.5px;width:0.9px;height:34.5px;background:#6c6c6c;"></div><div style="left:725.1px;top:665.5px;width:0.9px;height:34.5px;background:#656565;"></div><div style="left:740.3px;top:665.5px;width:0.9px;height:34.5px;background:#6c6c6c;"></div><div style="left:755.6px;top:665.5px;width:0.9px;height:34.5px;background:#656565;"></div><div style="left:770.8px;top:665.5px;width:0.9px;height:34.5px;background:#6c6c6c;"></div><div style="left:786.0px;top:665.5px;width:0.9px;height:34.5px;background:#656565;"></div><div style="left:801.3px;top:665.5px;width:0.9px;height:34.5px;background:#6c6c6c;"></div><div style="left:816.5px;top:665.5px;width:0.9px;height:34.5px;background:#656565;"></div><div style="left:831.8px;top:665.5px;width:0.9px;height:34.5px;background:#6c6c6c;"></div><div style="left:847.0px;top:665.5px;width:0.9px;height:34.5px;background:#656565;"></div><div style="left:862.3px;top:665.5px;width:0.9px;height:34.5px;background:#6c6c6c;"></div><div style="left:877.5px;top:665.5px;width:0.9px;height:34.5px;background:#656565;"></div><div style="left:892.8px;top:665.5px;width:0.9px;height:34.5px;background:#6c6c6c;"></div><div style="left:908.0px;top:665.5px;width:0.9px;height:34.5px;background:#656565;"></div><div style="left:923.3px;top:665.5px;width:0.9px;height:34.5px;background:#6c6c6c;"></div><div style="left:938.5px;top:665.5px;width:0.9px;height:34.5px;background:#656565;"></div><div style="left:953.7px;top:665.5px;width:0.9px;height:34.5px;background:#3d3d3d;"></div><div style="left:969.0px;top:665.5px;width:0.9px;height:34.5px;background:#373737;"></div><div style="left:984.2px;top:665.5px;width:0.9px;height:34.5px;background:#3d3d3d;"></div><div style="left:999.5px;top:665.5px;width:0.9px;height:34.5px;background:#373737;"></div><div style="left:1014.7px;top:665.5px;width:0.9px;height:34.5px;background:#3d3d3d;"></div><div style="left:1030.0px;top:665.5px;width:0.9px;height:34.5px;background:#373737;"></div>
<div style="left:178.2px;top:665.5px;width:3.0px;height:34.5px;background:#5fe03c;"></div>
<div style="left:177.3px;top:665.5px;width:0.9px;height:34.5px;background:#2c2c2c;"></div>
<div style="left:0px;top:700px;width:1040px;height:11.5px;background:#727272;"></div>
<div style="left:3px;top:700.3px;width:1034px;height:9.8px;background:linear-gradient(#858585,#a2a2a2 40%,#8a8a8a);border-radius:4.9px;box-shadow:0 0 0 0.7px #474747;"></div>
<div style="left:3.6px;top:701px;width:8.4px;height:8.4px;background:#6e6e6e;border-radius:50%;box-shadow:0 0 0 0.5px #555;"></div>
<div style="left:12.000000000000028px;top:700.1px;height:12px;line-height:12px;font-size:8.200000000000001px;color:#0c0c0c;white-space:pre;width:30px;text-align:center;">-50</div>
<div style="left:42.26000000000002px;top:700.1px;height:12px;line-height:12px;font-size:8.200000000000001px;color:#0c0c0c;white-space:pre;width:30px;text-align:center;">-40</div>
<div style="left:72.52000000000001px;top:700.1px;height:12px;line-height:12px;font-size:8.200000000000001px;color:#0c0c0c;white-space:pre;width:30px;text-align:center;">-30</div>
<div style="left:102.78000000000002px;top:700.1px;height:12px;line-height:12px;font-size:8.200000000000001px;color:#0c0c0c;white-space:pre;width:30px;text-align:center;">-20</div>
<div style="left:133.04000000000002px;top:700.1px;height:12px;line-height:12px;font-size:8.200000000000001px;color:#0c0c0c;white-space:pre;width:30px;text-align:center;">-10</div>
<div style="left:163.3px;top:700.1px;height:12px;line-height:12px;font-size:8.200000000000001px;color:#0c0c0c;white-space:pre;width:30px;text-align:center;">0</div>
<div style="left:193.56px;top:700.1px;height:12px;line-height:12px;font-size:8.200000000000001px;color:#0c0c0c;white-space:pre;width:30px;text-align:center;">10</div>
<div style="left:223.82px;top:700.1px;height:12px;line-height:12px;font-size:8.200000000000001px;color:#0c0c0c;white-space:pre;width:30px;text-align:center;">20</div>
<div style="left:254.08000000000004px;top:700.1px;height:12px;line-height:12px;font-size:8.200000000000001px;color:#0c0c0c;white-space:pre;width:30px;text-align:center;">30</div>
<div style="left:284.34000000000003px;top:700.1px;height:12px;line-height:12px;font-size:8.200000000000001px;color:#0c0c0c;white-space:pre;width:30px;text-align:center;">40</div>
<div style="left:314.6px;top:700.1px;height:12px;line-height:12px;font-size:8.200000000000001px;color:#0c0c0c;white-space:pre;width:30px;text-align:center;">50</div>
<div style="left:344.86px;top:700.1px;height:12px;line-height:12px;font-size:8.200000000000001px;color:#0c0c0c;white-space:pre;width:30px;text-align:center;">60</div>
<div style="left:375.12px;top:700.1px;height:12px;line-height:12px;font-size:8.200000000000001px;color:#0c0c0c;white-space:pre;width:30px;text-align:center;">70</div>
<div style="left:405.38px;top:700.1px;height:12px;line-height:12px;font-size:8.200000000000001px;color:#0c0c0c;white-space:pre;width:30px;text-align:center;">80</div>
<div style="left:435.64px;top:700.1px;height:12px;line-height:12px;font-size:8.200000000000001px;color:#0c0c0c;white-space:pre;width:30px;text-align:center;">90</div>
<div style="left:465.9px;top:700.1px;height:12px;line-height:12px;font-size:8.200000000000001px;color:#0c0c0c;white-space:pre;width:30px;text-align:center;">100</div>
<div style="left:496.15999999999997px;top:700.1px;height:12px;line-height:12px;font-size:8.200000000000001px;color:#0c0c0c;white-space:pre;width:30px;text-align:center;">110</div>
<div style="left:526.4200000000001px;top:700.1px;height:12px;line-height:12px;font-size:8.200000000000001px;color:#0c0c0c;white-space:pre;width:30px;text-align:center;">120</div>
<div style="left:556.6800000000001px;top:700.1px;height:12px;line-height:12px;font-size:8.200000000000001px;color:#0c0c0c;white-space:pre;width:30px;text-align:center;">130</div>
<div style="left:586.94px;top:700.1px;height:12px;line-height:12px;font-size:8.200000000000001px;color:#0c0c0c;white-space:pre;width:30px;text-align:center;">140</div>
<div style="left:617.2px;top:700.1px;height:12px;line-height:12px;font-size:8.200000000000001px;color:#0c0c0c;white-space:pre;width:30px;text-align:center;">150</div>
<div style="left:647.46px;top:700.1px;height:12px;line-height:12px;font-size:8.200000000000001px;color:#0c0c0c;white-space:pre;width:30px;text-align:center;">160</div>
<div style="left:677.72px;top:700.1px;height:12px;line-height:12px;font-size:8.200000000000001px;color:#0c0c0c;white-space:pre;width:30px;text-align:center;">170</div>
<div style="left:707.98px;top:700.1px;height:12px;line-height:12px;font-size:8.200000000000001px;color:#0c0c0c;white-space:pre;width:30px;text-align:center;">180</div>
<div style="left:738.24px;top:700.1px;height:12px;line-height:12px;font-size:8.200000000000001px;color:#0c0c0c;white-space:pre;width:30px;text-align:center;">190</div>
<div style="left:768.5px;top:700.1px;height:12px;line-height:12px;font-size:8.200000000000001px;color:#0c0c0c;white-space:pre;width:30px;text-align:center;">200</div>
<div style="left:798.76px;top:700.1px;height:12px;line-height:12px;font-size:8.200000000000001px;color:#0c0c0c;white-space:pre;width:30px;text-align:center;">210</div>
<div style="left:829.02px;top:700.1px;height:12px;line-height:12px;font-size:8.200000000000001px;color:#0c0c0c;white-space:pre;width:30px;text-align:center;">220</div>
<div style="left:859.28px;top:700.1px;height:12px;line-height:12px;font-size:8.200000000000001px;color:#0c0c0c;white-space:pre;width:30px;text-align:center;">230</div>
<div style="left:889.54px;top:700.1px;height:12px;line-height:12px;font-size:8.200000000000001px;color:#0c0c0c;white-space:pre;width:30px;text-align:center;">240</div>
<div style="left:919.8px;top:700.1px;height:12px;line-height:12px;font-size:8.200000000000001px;color:#0c0c0c;white-space:pre;width:30px;text-align:center;">250</div>
<div style="left:950.06px;top:700.1px;height:12px;line-height:12px;font-size:8.200000000000001px;color:#0c0c0c;white-space:pre;width:30px;text-align:center;">260</div>
<div style="left:980.3199999999999px;top:700.1px;height:12px;line-height:12px;font-size:8.200000000000001px;color:#0c0c0c;white-space:pre;width:30px;text-align:center;">270</div>
<div style="left:1010.5799999999999px;top:700.1px;height:12px;line-height:12px;font-size:8.200000000000001px;color:#0c0c0c;white-space:pre;width:30px;text-align:center;">280</div>
<div style="left:0px;top:711.5px;width:1040px;height:19.5px;background:#727272;"></div>
<div style="left:6.7px;top:714.6px;width:22.3px;height:13.4px;background:linear-gradient(#585858,#393939);box-shadow:0 0 0 0.7px #3a3a3a;border-radius:4px 4px 4px 4px;"></div>
<svg style="left:9.6px;top:716.3000000000001px" width="10" height="10" viewBox="0 0 10 10"><circle cx="5" cy="5" r="4.5" fill="#f2f2f2" stroke="#999" stroke-width="0.5"/><path d="M5 5L2.8 7.4" stroke="#d02c2c" stroke-width="1"/><path d="M5 5V2" stroke="#555" stroke-width="0.7"/></svg>
<svg style="left:21.6px;top:715.8000000000001px" width="6" height="11" viewBox="0 0 6 11"><path d="M3 0.6 L5.4 4.4 H0.6Z M3 10.4 L5.4 6.6 H0.6Z" fill="#ddd"/></svg>
<div style="left:38px;top:716.3000000000001px;height:12px;line-height:12px;font-size:7.9px;color:#111;white-space:pre;">View</div>
<div style="left:70px;top:716.3000000000001px;height:12px;line-height:12px;font-size:7.9px;color:#111;white-space:pre;">Marker</div>
<div style="left:109.5px;top:716.3000000000001px;height:12px;line-height:12px;font-size:7.9px;color:#111;white-space:pre;">Frame</div>
<div style="left:146.5px;top:716.3000000000001px;height:12px;line-height:12px;font-size:7.9px;color:#111;white-space:pre;">Playback</div>
<div style="left:188.7px;top:714.6px;width:13.6px;height:13.4px;background:linear-gradient(#a9a9a9,#8b8b8b);box-shadow:0 0 0 0.7px #3a3a3a;border-radius:4px 0px 0px 4px;"></div>
<div style="left:202.3px;top:714.6px;width:13.7px;height:13.4px;background:linear-gradient(#a9a9a9,#8b8b8b);box-shadow:0 0 0 0.7px #3a3a3a;border-radius:0px 4px 4px 0px;"></div>
<svg style="left:190.5px;top:716.3000000000001px" width="10" height="10" viewBox="0 0 10 10"><circle cx="5" cy="5" r="4.4" fill="#f4f4f4" stroke="#444" stroke-width="0.7"/><path d="M5 5V0.8A4.2 4.2 0 0 1 9.2 5Z" fill="#f59a23"/><path d="M5 5L2.6 6.6" stroke="#c02222" stroke-width="0.9"/></svg>
<svg style="left:204.6px;top:715.8000000000001px" width="9" height="11" viewBox="0 0 9 11"><path d="M2.4 5V3.4Q2.4 1.2 4.5 1.2Q6.6 1.2 6.6 3.4V5" fill="none" stroke="#e8e8e8" stroke-width="1.3"/><rect x="1.2" y="4.8" width="6.6" height="5.2" rx="0.8" fill="#dcdcdc" stroke="#555" stroke-width="0.5"/></svg>
<div style="left:220.7px;top:714.6px;width:82.3px;height:13.4px;background:linear-gradient(#9f9f9f,#bdbdbd);box-shadow:0 0 0 0.7px #3a3a3a;border-radius:6.7px 0px 0px 6.7px;"></div>
<div style="left:231.7px;top:716.3000000000001px;height:12px;line-height:12px;font-size:8.200000000000001px;color:#0c0c0c;white-space:pre;">Start:</div>
<div style="left:220.7px;top:716.3000000000001px;height:12px;line-height:12px;font-size:8.200000000000001px;color:#0c0c0c;white-space:pre;width:71.3px;text-align:right;">1</div>
<svg style="left:223.89999999999998px;top:719.1px" width="4" height="5" viewBox="0 0 4 5"><path d="M3.4 0.4V4.6L0.5 2.5Z" fill="#7e7e7e"/></svg>
<svg style="left:295.8px;top:719.1px" width="4" height="5" viewBox="0 0 4 5"><path d="M0.6 0.4V4.6L3.5 2.5Z" fill="#7e7e7e"/></svg>
<div style="left:303px;top:714.6px;width:79.5px;height:13.4px;background:linear-gradient(#9f9f9f,#bdbdbd);box-shadow:0 0 0 0.7px #3a3a3a;border-radius:0px 6.7px 6.7px 0px;"></div>
<div style="left:314px;top:716.3000000000001px;height:12px;line-height:12px;font-size:8.200000000000001px;color:#0c0c0c;white-space:pre;">End:</div>
<div style="left:303px;top:716.3000000000001px;height:12px;line-height:12px;font-size:8.200000000000001px;color:#0c0c0c;white-space:pre;width:68.5px;text-align:right;">250</div>
<svg style="left:306.2px;top:719.1px" width="4" height="5" viewBox="0 0 4 5"><path d="M3.4 0.4V4.6L0.5 2.5Z" fill="#7e7e7e"/></svg>
<svg style="left:375.3px;top:719.1px" width="4" height="5" viewBox="0 0 4 5"><path d="M0.6 0.4V4.6L3.5 2.5Z" fill="#7e7e7e"/></svg>
<div style="left:386px;top:714.6px;width:60.5px;height:13.4px;background:linear-gradient(#9f9f9f,#bdbdbd);box-shadow:0 0 0 0.7px #3a3a3a;border-radius:6.7px 6.7px 6.7px 6.7px;"></div>
<div style="left:386px;top:716.3000000000001px;height:12px;line-height:12px;font-size:8.200000000000001px;color:#0c0c0c;white-space:pre;width:49.5px;text-align:right;">1</div>
<svg style="left:389.2px;top:719.1px" width="4" height="5" viewBox="0 0 4 5"><path d="M3.4 0.4V4.6L0.5 2.5Z" fill="#7e7e7e"/></svg>
<svg style="left:439.3px;top:719.1px" width="4" height="5" viewBox="0 0 4 5"><path d="M0.6 0.4V4.6L3.5 2.5Z" fill="#7e7e7e"/></svg>
<div style="left:462.5px;top:714.6px;width:14.17px;height:13.4px;background:linear-gradient(#a9a9a9,#8b8b8b);box-shadow:0 0 0 0.7px #3a3a3a;border-radius:4px 0px 0px 4px;"></div>
<svg style="left:464.4px;top:716.3000000000001px" width="10.5" height="10" viewBox="0 0 10.5 10"><path d="M1 1.5V8.5M5.6 1.5L2 5L5.6 8.5ZM9.6 1.5L6 5L9.6 8.5Z" fill="#f0f0f0" stroke="#333" stroke-width="0.8" stroke-linejoin="round"/></svg>
<div style="left:476.67px;top:714.6px;width:14.17px;height:13.4px;background:linear-gradient(#a9a9a9,#8b8b8b);box-shadow:0 0 0 0.7px #3a3a3a;border-radius:0px 0px 0px 0px;"></div>
<svg style="left:478.57px;top:716.3000000000001px" width="10.5" height="10" viewBox="0 0 10.5 10"><path d="M5 1.5L1 5L5 8.5ZM9.4 1.5L5.4 5L9.4 8.5Z" fill="#f0f0f0" stroke="#333" stroke-width="0.8" stroke-linejoin="round"/></svg>
<div style="left:490.84px;top:714.6px;width:14.17px;height:13.4px;background:linear-gradient(#a9a9a9,#8b8b8b);box-shadow:0 0 0 0.7px #3a3a3a;border-radius:0px 0px 0px 0px;"></div>
<svg style="left:492.73999999999995px;top:716.3000000000001px" width="10.5" height="10" viewBox="0 0 10.5 10"><path d="M8.5 1L1.8 5L8.5 9Z" fill="#f0f0f0" stroke="#333" stroke-width="0.8" stroke-linejoin="round"/></svg>
<div style="left:505.01px;top:714.6px;width:14.17px;height:13.4px;background:linear-gradient(#a9a9a9,#8b8b8b);box-shadow:0 0 0 0.7px #3a3a3a;border-radius:0px 0px 0px 0px;"></div>
<svg style="left:506.90999999999997px;top:716.3000000000001px" width="10.5" height="10" viewBox="0 0 10.5 10"><path d="M2 1L8.7 5L2 9Z" fill="#f0f0f0" stroke="#333" stroke-width="0.8" stroke-linejoin="round"/></svg>
<div style="left:519.18px;top:714.6px;width:14.17px;height:13.4px;background:linear-gradient(#a9a9a9,#8b8b8b);box-shadow:0 0 0 0.7px #3a3a3a;border-radius:0px 0px 0px 0px;"></div>
<svg style="left:521.0799999999999px;top:716.3000000000001px" width="10.5" height="10" viewBox="0 0 10.5 10"><path d="M1 1.5L5 5L1 8.5ZM5.4 1.5L9.4 5L5.4 8.5Z" fill="#f0f0f0" stroke="#333" stroke-width="0.8" stroke-linejoin="round"/></svg>
<div style="left:533.35px;top:714.6px;width:14.17px;height:13.4px;background:linear-gradient(#a9a9a9,#8b8b8b);box-shadow:0 0 0 0.7px #3a3a3a;border-radius:0px 4px 4px 0px;"></div>
<svg style="left:535.25px;top:716.3000000000001px" width="10.5" height="10" viewBox="0 0 10.5 10"><path d="M9.5 1.5V8.5M1 1.5L4.6 5L1 8.5ZM5 1.5L8.6 5L5 8.5Z" fill="#f0f0f0" stroke="#333" stroke-width="0.8" stroke-linejoin="round"/></svg>
<div style="left:551.5px;top:714.6px;width:82px;height:13.4px;background:linear-gradient(#585858,#393939);box-shadow:0 0 0 0.7px #3a3a3a;border-radius:4px 4px 4px 4px;"></div>
<div style="left:557.5px;top:716.3000000000001px;height:12px;line-height:12px;font-size:7.9px;color:#fff;white-space:pre;">No Sync</div>
<svg style="left:624.0px;top:715.8000000000001px" width="6" height="11" viewBox="0 0 6 11"><path d="M3 0.6 L5.4 4.4 H0.6Z M3 10.4 L5.4 6.6 H0.6Z" fill="#e0e0e0"/></svg>
<div style="left:645px;top:714.6px;width:14px;height:13.4px;background:linear-gradient(#a9a9a9,#8b8b8b);box-shadow:0 0 0 0.7px #3a3a3a;border-radius:4px 4px 4px 4px;"></div>
<div style="left:648.2px;top:717.5px;width:7.6px;height:7.6px;border-radius:50%;background:#e23c1e;box-shadow:0 0 0 1.1px #e8c8c0,0 0 0 1.6px #7a3a30;"></div>
<div style="left:663px;top:714.6px;width:22.8px;height:13.4px;background:linear-gradient(#585858,#393939);box-shadow:0 0 0 0.7px #3a3a3a;border-radius:4px 4px 4px 4px;"></div>
<svg style="left:666.5px;top:717.6px" width="8" height="8" viewBox="0 0 8 8"><path d="M4 0.6L7.4 4L4 7.4L0.6 4Z" fill="#f7c12c" stroke="#fff" stroke-width="0.6"/></svg>
<svg style="left:678px;top:715.8000000000001px" width="6" height="11" viewBox="0 0 6 11"><path d="M3 0.6 L5.4 4.4 H0.6Z M3 10.4 L5.4 6.6 H0.6Z" fill="#ddd"/></svg>
<div style="left:690px;top:714.6px;width:92.5px;height:13.4px;background:linear-gradient(#959595,#b6b6b6);box-shadow:0 0 0 0.7px #3a3a3a;border-radius:4px 0px 0px 4px;"></div>
<svg style="left:691.5px;top:715.6px" width="12" height="12" viewBox="0 0 12 12"><circle cx="4" cy="3.6" r="2.4" fill="none" stroke="#4a4a2a" stroke-width="1.8"/><circle cx="4" cy="3.6" r="2.4" fill="none" stroke="#e8dc9a" stroke-width="0.9"/><path d="M4.6 6V10.6H6.6M4.6 8.4H6.8" stroke="#4a4a2a" stroke-width="1.8" fill="none"/><path d="M4.6 6V10.6H6.6M4.6 8.4H6.8" stroke="#e8dc9a" stroke-width="0.8" fill="none"/></svg>
<div style="left:782.5px;top:714.6px;width:14px;height:13.4px;background:linear-gradient(#a9a9a9,#8b8b8b);box-shadow:0 0 0 0.7px #3a3a3a;"></div>
<div style="left:796.5px;top:714.6px;width:14.3px;height:13.4px;background:linear-gradient(#a9a9a9,#8b8b8b);box-shadow:0 0 0 0.7px #3a3a3a;border-radius:0px 4px 4px 0px;"></div>
<svg style="left:784px;top:716.0px" width="11" height="11" viewBox="0 0 11 11"><circle cx="7.6" cy="3.4" r="1.9" fill="none" stroke="#444" stroke-width="1.9"/><circle cx="7.6" cy="3.4" r="1.9" fill="none" stroke="#ddd" stroke-width="0.8"/><path d="M6.2 4.8L1.6 9.4" stroke="#444" stroke-width="1.9"/><path d="M6.2 4.8L1.6 9.4" stroke="#ddd" stroke-width="0.8"/></svg>
<svg style="left:798px;top:716.0px" width="11" height="11" viewBox="0 0 11 11"><circle cx="7.6" cy="3.4" r="1.9" fill="none" stroke="#ddd" stroke-width="0.9"/><path d="M6.2 4.8L1.6 9.4" stroke="#ddd" stroke-width="0.9"/><path d="M1.5 1.5L9.5 9.5M9.5 1.5L1.5 9.5" stroke="#d42c2c" stroke-width="1.3"/></svg>
<svg style="left:0px;top:655px" width="10" height="10" viewBox="0 0 10 10"><path d="M0 2L8 10M0 5L5 10M0 8L2 10" stroke="#d0d0d0" stroke-width="0.8"/><path d="M0 3.2L6.8 10M0 6.2L3.8 10" stroke="#333" stroke-width="0.8"/></svg>
<svg style="left:0px;top:721px" width="10" height="10" viewBox="0 0 10 10"><path d="M0 2L8 10M0 5L5 10M0 8L2 10" stroke="#d0d0d0" stroke-width="0.8"/><path d="M0 3.2L6.8 10M0 6.2L3.8 10" stroke="#333" stroke-width="0.8"/></svg>
<svg style="left:1030px;top:666px" width="10" height="10" viewBox="0 0 10 10"><path d="M2 0L10 8M5 0L10 5M8 0L10 2" stroke="#333" stroke-width="0.8"/><path d="M3.2 0L10 6.8M6.2 0L10 3.8" stroke="#c8c8c8" stroke-width="0.8"/></svg>
<div style="left:1039.4px;top:35px;width:1.8px;height:696px;background:#2c2c2c;"></div>
<div style="left:1041px;top:35px;width:159px;height:696px;background:#727272;"></div>
<div style="left:1047.2px;top:38px;width:22.6px;height:13.2px;background:linear-gradient(#585858,#393939);box-shadow:0 0 0 0.7px #3a3a3a;border-radius:4px 4px 4px 4px;"></div>
<svg style="left:1049.5px;top:39.6px" width="11" height="10" viewBox="0 0 11 10"><rect x="0.6" y="0.4" width="4.6" height="1.8" fill="#f5a23c"/><path d="M2 2.2V8.4H4M2 5H4" stroke="#ddd" stroke-width="0.7" fill="none"/><rect x="4.6" y="4" width="5.4" height="1.8" fill="#e6e6e6"/><rect x="4.6" y="7.4" width="5.4" height="1.8" fill="#e6e6e6"/></svg>
<svg style="left:1062.4px;top:39.1px" width="6" height="11" viewBox="0 0 6 11"><path d="M3 0.6 L5.4 4.4 H0.6Z M3 10.4 L5.4 6.6 H0.6Z" fill="#ddd"/></svg>
<div style="left:1078.3px;top:39.7px;height:12px;line-height:12px;font-size:7.9px;color:#111;white-space:pre;">View</div>
<div style="left:1110.5px;top:39.7px;height:12px;line-height:12px;font-size:7.9px;color:#111;white-space:pre;">Search</div>
<div style="left:1144px;top:38px;width:60px;height:13.2px;background:linear-gradient(#585858,#393939);box-shadow:0 0 0 0.7px #3a3a3a;border-radius:4px 0px 0px 4px;"></div>
<div style="left:1150px;top:39.7px;height:12px;line-height:12px;font-size:7.9px;color:#fff;white-space:pre;">All Scenes</div>
<div style="left:1041px;top:53.3px;width:159px;height:102px;background:#727272;"></div>
<div style="left:1041px;top:67.6px;width:159px;height:14.3px;background:#767676;"></div>
<div style="left:1041px;top:96.2px;width:159px;height:14.3px;background:#767676;"></div>
<div style="left:1041px;top:124.8px;width:159px;height:14.3px;background:#767676;"></div>
<div style="left:1041px;top:53.3px;width:104px;height:14.3px;background:#8a9097;"></div>
<div style="left:1145px;top:53.3px;width:0.9px;height:90px;background:#7d7d7d;"></div>
<div style="left:1159px;top:53.3px;width:0.9px;height:90px;background:#7d7d7d;"></div>
<div style="left:1173px;top:53.3px;width:0.9px;height:90px;background:#7d7d7d;"></div>
<div style="left:1062.2px;top:63.3px;width:0.8px;height:92px;background:#444;"></div>
<div style="left:1051px;top:62.05px;width:8px;height:0.8px;background:#444;"></div>
<svg style="left:1044.8px;top:58.949999999999996px" width="7" height="7" viewBox="0 0 7 7"><circle cx="3.5" cy="3.5" r="3" fill="#e6e6e6" stroke="#333" stroke-width="0.7"/><path d="M1.6 3.5H5.4" stroke="#222" stroke-width="0.8"/></svg>
<svg style="left:1055.5px;top:55.449999999999996px" width="15" height="14" viewBox="0 0 15 14"><circle cx="7.5" cy="7" r="6.6" fill="#aab0b8" opacity="0.8"/><circle cx="4.4" cy="3.6" r="1.7" fill="#e8e36a"/><path d="M8.4 3h3.4v6.6H8.4z" fill="#3f74e0"/><path d="M8.4 3h1.5v6.6H8.4z" fill="#a9c4f7"/><circle cx="6.4" cy="9.4" r="2.5" fill="#ececec" stroke="#222" stroke-width="0.6"/></svg>
<div style="left:1071.5px;top:57.15px;height:12px;line-height:12px;font-size:8.200000000000001px;color:#111;white-space:pre;">Scene</div>
<svg style="left:1059.0px;top:73.25px" width="7" height="7" viewBox="0 0 7 7"><circle cx="3.5" cy="3.5" r="3" fill="#e6e6e6" stroke="#333" stroke-width="0.7"/><path d="M1.6 3.5H5.4M3.5 1.6V5.4" stroke="#222" stroke-width="0.8"/></svg>
<div style="left:1086px;top:71.45px;height:12px;line-height:12px;font-size:8.200000000000001px;color:#111;white-space:pre;">RenderLayers</div>
<svg style="left:1059.0px;top:87.55000000000001px" width="7" height="7" viewBox="0 0 7 7"><circle cx="3.5" cy="3.5" r="3" fill="#e6e6e6" stroke="#333" stroke-width="0.7"/><path d="M1.6 3.5H5.4M3.5 1.6V5.4" stroke="#222" stroke-width="0.8"/></svg>
<div style="left:1086px;top:85.75000000000001px;height:12px;line-height:12px;font-size:8.200000000000001px;color:#111;white-space:pre;">GPencil</div>
<div style="left:1086px;top:100.05000000000001px;height:12px;line-height:12px;font-size:8.200000000000001px;color:#111;white-space:pre;">World</div>
<svg style="left:1059.0px;top:116.15px" width="7" height="7" viewBox="0 0 7 7"><circle cx="3.5" cy="3.5" r="3" fill="#e6e6e6" stroke="#333" stroke-width="0.7"/><path d="M1.6 3.5H5.4M3.5 1.6V5.4" stroke="#222" stroke-width="0.8"/></svg>
<div style="left:1086px;top:114.35000000000001px;height:12px;line-height:12px;font-size:8.200000000000001px;color:#111;white-space:pre;">Camera</div>
<svg style="left:1059.0px;top:130.45px" width="7" height="7" viewBox="0 0 7 7"><circle cx="3.5" cy="3.5" r="3" fill="#e6e6e6" stroke="#333" stroke-width="0.7"/><path d="M1.6 3.5H5.4M3.5 1.6V5.4" stroke="#222" stroke-width="0.8"/></svg>
<div style="left:1086px;top:128.64999999999998px;height:12px;line-height:12px;font-size:8.200000000000001px;color:#111;white-space:pre;">Cylinder</div>
<svg style="left:1071px;top:70.25px" width="13" height="13" viewBox="0 0 13 13"><rect x="3.2" y="3.6" width="8" height="7.6" fill="#cfc9a8" stroke="#444" stroke-width="0.5" transform="rotate(8 7 7)"/><rect x="2" y="2.4" width="8" height="7.6" fill="#d8d8d8" stroke="#444" stroke-width="0.5" transform="rotate(4 6 6)"/><rect x="1" y="1" width="8" height="7.6" fill="#f0f0f0" stroke="#444" stroke-width="0.5"/><path d="M4 2.4h2.6v3.8H4z" fill="#3f74e0"/><circle cx="3.6" cy="6" r="1.4" fill="#fff" stroke="#333" stroke-width="0.4"/></svg>
<div style="left:1141.5px;top:72.75px;width:1px;height:8px;background:#4a4a4a;"></div>
<svg style="left:1071px;top:84.55000000000001px" width="13" height="13" viewBox="0 0 13 13"><path d="M1.2 11.8L2.2 8.6L9 1.8L11.2 4L4.4 10.8Z" fill="#7ab03c" stroke="#2c2c1c" stroke-width="0.6"/><path d="M9 1.8L10 0.8L12.2 3L11.2 4Z" fill="#e0303a" stroke="#2c2c1c" stroke-width="0.5"/><path d="M1.2 11.8L2.2 8.6L4.4 10.8Z" fill="#ecd9a8"/></svg>
<div style="left:1120.4px;top:87.05000000000001px;width:1px;height:8px;background:#4a4a4a;"></div>
<div style="left:1133px;top:89.85000000000001px;width:2.4px;height:2.4px;background:#111;border-radius:50%;"></div>
<svg style="left:1071px;top:98.85000000000001px" width="13" height="13" viewBox="0 0 13 13"><circle cx="6.5" cy="6.5" r="5.8" fill="#3c6fc0" stroke="#d8dcec" stroke-width="1"/><path d="M3 4Q5 2 7 3.4Q8 5 6 6.4Q4 7 3.6 9Q2 7 3 4ZM8 6.6Q10 5.6 10.6 7.4Q10 9.6 8.4 10Q7.4 8.4 8 6.6Z" fill="#5aa84a"/></svg>
<div style="left:1066px;top:119.25px;width:6px;height:0.8px;background:#444;"></div>
<svg style="left:1071px;top:113.15px" width="13" height="13" viewBox="0 0 13 13"><circle cx="4" cy="3.6" r="2.3" fill="#f0a040" stroke="#a85c10" stroke-width="0.6"/><circle cx="8.6" cy="3.6" r="2.3" fill="#f0a040" stroke="#a85c10" stroke-width="0.6"/><rect x="2" y="6" width="8" height="5" rx="1" fill="#f0a040" stroke="#a85c10" stroke-width="0.6"/><path d="M10 8.4L12.4 7V10.4L10 9.4Z" fill="#f0a040" stroke="#a85c10" stroke-width="0.5"/></svg>
<div style="left:1121.2px;top:115.65px;width:1px;height:8px;background:#4a4a4a;"></div>
<svg style="left:1128px;top:112.65px" width="14" height="14" viewBox="0 0 14 14"><circle cx="7" cy="7" r="6.2" fill="#8c8c8c" stroke="#a6a6a6" stroke-width="0.8"/><path d="M3.4 6.4L7.6 3.2L10.4 6.8L6.4 9.8Z" fill="none" stroke="#a8a8a8" stroke-width="0.9"/></svg>
<div style="left:1066px;top:133.54999999999998px;width:6px;height:0.8px;background:#444;"></div>
<svg style="left:1071px;top:127.44999999999999px" width="13" height="13" viewBox="0 0 13 13"><path d="M2 2.4H11L6.5 11Z" fill="none" stroke="#f08a1c" stroke-width="1.5" stroke-linejoin="round"/><circle cx="2" cy="2.4" r="1.2" fill="#f8d8a8"/><circle cx="11" cy="2.4" r="1.2" fill="#f8d8a8"/><circle cx="6.5" cy="11" r="1.2" fill="#f8d8a8"/></svg>
<div style="left:1122.6px;top:129.95px;width:1px;height:8px;background:#4a4a4a;"></div>
<svg style="left:1130px;top:127.94999999999999px" width="12" height="12" viewBox="0 0 12 12"><path d="M1.4 2H10.6L6 10.4Z" fill="none" stroke="#4a4a4a" stroke-width="0.8"/><circle cx="1.4" cy="2" r="1" fill="#b8b8b8"/><circle cx="10.6" cy="2" r="1" fill="#b8b8b8"/><circle cx="6" cy="10.4" r="1" fill="#b8b8b8"/></svg>
<svg style="left:1147px;top:115.65px" width="11" height="8" viewBox="0 0 11 8"><path d="M0.6 4Q5.5 -1.4 10.4 4Q5.5 8.6 0.6 4Z" fill="#f4f4f4" stroke="#333" stroke-width="0.6"/><circle cx="5.5" cy="3.8" r="1.8" fill="#333"/></svg>
<svg style="left:1163px;top:114.15px" width="8" height="11" viewBox="0 0 8 11"><path d="M1 0.8V8.4L3 6.6L4.4 10L5.8 9.4L4.4 6.2H7Z" fill="#f4f4f4" stroke="#222" stroke-width="0.7"/></svg>
<svg style="left:1176px;top:114.65px" width="11" height="10" viewBox="0 0 11 10"><rect x="0.6" y="2" width="9.8" height="7.4" rx="0.8" fill="#3a3a3a"/><rect x="3" y="0.8" width="3.8" height="1.6" fill="#3a3a3a"/><circle cx="5.4" cy="5.7" r="2.5" fill="#e6e6e6"/><circle cx="5.4" cy="5.7" r="1.2" fill="#b83c3c"/><rect x="8" y="3" width="1.6" height="1.2" fill="#eee"/></svg>
<svg style="left:1147px;top:129.95px" width="11" height="8" viewBox="0 0 11 8"><path d="M0.6 4Q5.5 -1.4 10.4 4Q5.5 8.6 0.6 4Z" fill="#f4f4f4" stroke="#333" stroke-width="0.6"/><circle cx="5.5" cy="3.8" r="1.8" fill="#333"/></svg>
<svg style="left:1163px;top:128.45px" width="8" height="11" viewBox="0 0 8 11"><path d="M1 0.8V8.4L3 6.6L4.4 10L5.8 9.4L4.4 6.2H7Z" fill="#f4f4f4" stroke="#222" stroke-width="0.7"/></svg>
<svg style="left:1176px;top:128.95px" width="11" height="10" viewBox="0 0 11 10"><rect x="0.6" y="2" width="9.8" height="7.4" rx="0.8" fill="#3a3a3a"/><rect x="3" y="0.8" width="3.8" height="1.6" fill="#3a3a3a"/><circle cx="5.4" cy="5.7" r="2.5" fill="#e6e6e6"/><circle cx="5.4" cy="5.7" r="1.2" fill="#b83c3c"/><rect x="8" y="3" width="1.6" height="1.2" fill="#eee"/></svg>
<svg style="left:1071px;top:141.75000000000003px" width="13" height="5" viewBox="0 0 13 5"><path d="M2 3.5Q6.5 -0.5 11 3.5" fill="#f0a040" stroke="#a85c10" stroke-width="0.6"/></svg>
<div style="left:1188.6px;top:57px;width:7.6px;height:82px;background:#5e5e5e;border-radius:3.8px;"></div>
<div style="left:1188.6px;top:57px;width:7.6px;height:38px;background:linear-gradient(90deg,#7e7e7e,#9a9a9a 50%,#858585);border-radius:3.8px;box-shadow:0 0 0 0.6px #4a4a4a;"></div>
<div style="left:1041px;top:142.4px;width:159px;height:12.6px;background:#727272;"></div>
<div style="left:1044.3px;top:143.6px;width:140px;height:9px;background:#5a5a5a;border-radius:4.5px;box-shadow:0 0 0 0.6px #4a4a4a;"></div>
<div style="left:1044.3px;top:143.6px;width:94.7px;height:9px;background:linear-gradient(#8e8e8e,#7c7c7c);border-radius:4.5px;box-shadow:0 0 0 0.6px #444;"></div>
<svg style="left:1041px;top:146px" width="9" height="9" viewBox="0 0 9 9"><path d="M0 1.5L7.5 9M0 4.5L4.5 9M0 7.5L1.5 9" stroke="#d0d0d0" stroke-width="0.8"/><path d="M0 2.8L6.2 9M0 5.8L3.2 9" stroke="#2a2a2a" stroke-width="0.8"/></svg>
<div style="left:1029.5px;top:49.5px;width:10px;height:12px;background:#4a4a4a;border-radius:3px 0 0 3px;"></div>
<svg style="left:1031.5px;top:52.5px" width="6" height="6" viewBox="0 0 6 6"><path d="M3 0.5V5.5M0.5 3H5.5" stroke="#8e8e8e" stroke-width="1.1"/></svg>
<svg style="left:1030px;top:36px" width="10" height="10" viewBox="0 0 10 10"><path d="M2 0L10 8M5 0L10 5M8 0L10 2" stroke="#9a9a9a" stroke-width="0.8"/><path d="M3.2 0L10 6.8M6.2 0L10 3.8" stroke="#222" stroke-width="0.8"/></svg>
<svg style="left:1189px;top:36px" width="11" height="10" viewBox="0 0 11 10"><path d="M1 0L11 10M4 0L11 7M7 0L11 4" stroke="#c8c8c8" stroke-width="0.8"/><path d="M2.2 0L11 8.8M5.2 0L11 5.8" stroke="#2a2a2a" stroke-width="0.8"/></svg>
<div style="left:1041px;top:155px;width:159px;height:2.2px;background:#2a2a2a;"></div>
<div style="left:1041px;top:157.2px;width:159px;height:17px;background:#727272;"></div>
<div style="left:1047.3px;top:159px;width:22.6px;height:13.4px;background:linear-gradient(#585858,#393939);box-shadow:0 0 0 0.7px #3a3a3a;border-radius:4px 4px 4px 4px;"></div>
<svg style="left:1050px;top:161px" width="11" height="10" viewBox="0 0 11 10"><rect x="0.5" y="0.6" width="9.6" height="3.4" rx="1.2" fill="#e8e8e8"/><rect x="1.6" y="1.5" width="3" height="1.6" fill="#555"/><rect x="0.5" y="5.6" width="9.6" height="3.4" rx="1.2" fill="#e8e8e8"/><rect x="2" y="6.6" width="6.6" height="1.4" fill="#555"/></svg>
<svg style="left:1062.6px;top:160.2px" width="6" height="11" viewBox="0 0 6 11"><path d="M3 0.6 L5.4 4.4 H0.6Z M3 10.4 L5.4 6.6 H0.6Z" fill="#ddd"/></svg>
<div style="left:1076.0px;top:159px;width:14.12px;height:13.4px;background:linear-gradient(#585858,#393939);box-shadow:0 0 0 0.7px #3a3a3a;border-radius:4px 0px 0px 4px;"></div>
<div style="left:1090.12px;top:159px;width:14.12px;height:13.4px;background:linear-gradient(#585858,#393939);box-shadow:0 0 0 0.7px #3a3a3a;border-radius:0px 0px 0px 0px;"></div>
<div style="left:1104.24px;top:159px;width:14.12px;height:13.4px;background:linear-gradient(#585858,#393939);box-shadow:0 0 0 0.7px #3a3a3a;border-radius:0px 0px 0px 0px;"></div>
<div style="left:1118.36px;top:159px;width:14.12px;height:13.4px;background:linear-gradient(#585858,#393939);box-shadow:0 0 0 0.7px #3a3a3a;border-radius:0px 0px 0px 0px;"></div>
<div style="left:1132.48px;top:159px;width:14.12px;height:13.4px;background:linear-gradient(#4e78c4,#6a94e0);box-shadow:0 0 0 0.7px #3a3a3a;border-radius:0px 0px 0px 0px;"></div>
<div style="left:1146.6px;top:159px;width:14.12px;height:13.4px;background:linear-gradient(#585858,#393939);box-shadow:0 0 0 0.7px #3a3a3a;border-radius:0px 0px 0px 0px;"></div>
<div style="left:1160.72px;top:159px;width:14.12px;height:13.4px;background:linear-gradient(#585858,#393939);box-shadow:0 0 0 0.7px #3a3a3a;border-radius:0px 0px 0px 0px;"></div>
<div style="left:1174.84px;top:159px;width:14.12px;height:13.4px;background:linear-gradient(#585858,#393939);box-shadow:0 0 0 0.7px #3a3a3a;border-radius:0px 0px 0px 0px;"></div>
<div style="left:1188.96px;top:159px;width:14.12px;height:13.4px;background:linear-gradient(#585858,#393939);box-shadow:0 0 0 0.7px #3a3a3a;border-radius:0px 0px 0px 0px;"></div>
<svg style="left:1077.3px;top:160.2px" width="11.5" height="11" viewBox="0 0 11.5 11"><rect x="0.8" y="3" width="9.8" height="6.8" rx="0.8" fill="#4a4a4a" stroke="#888" stroke-width="0.4"/><rect x="3" y="1.6" width="3.6" height="1.8" fill="#666"/><circle cx="5.4" cy="6.4" r="2.4" fill="#8c8c8c"/><circle cx="5.4" cy="6.4" r="1.1" fill="#b83c3c"/></svg>
<svg style="left:1091.4199999999998px;top:160.2px" width="11.5" height="11" viewBox="0 0 11.5 11"><rect x="3" y="3.2" width="7.4" height="7" fill="#b8b08c" stroke="#333" stroke-width="0.4" transform="rotate(8 6 6)"/><rect x="1.8" y="2" width="7.4" height="7" fill="#c8c8c8" stroke="#333" stroke-width="0.4"/><rect x="0.8" y="0.8" width="7.4" height="7" fill="#e4e4e4" stroke="#333" stroke-width="0.4"/><path d="M3.6 2h2.4v3.4H3.6z" fill="#3f74e0"/><circle cx="3.2" cy="5.4" r="1.3" fill="#fff"/></svg>
<svg style="left:1105.54px;top:160.2px" width="11.5" height="11" viewBox="0 0 11.5 11"><circle cx="3" cy="2.6" r="1.5" fill="#d8d46a"/><path d="M6.4 2.4h3v5.6h-3z" fill="#3f74e0"/><path d="M6.4 2.4h1.3v5.6H6.4z" fill="#a9c4f7"/><circle cx="4.6" cy="8" r="2.2" fill="#d8d8d8" stroke="#222" stroke-width="0.5"/></svg>
<svg style="left:1119.6599999999999px;top:160.2px" width="11.5" height="11" viewBox="0 0 11.5 11"><circle cx="5.75" cy="5.5" r="4.6" fill="#3c6fc0" stroke="#aab4cc" stroke-width="0.8"/><path d="M3 3.4Q4.6 2 6 3Q6.8 4.4 5.2 5.4Q3.6 6 3.4 7.6Q2 6 3 3.4ZM7 5.6Q8.6 4.8 9 6.2Q8.6 8 7.4 8.4Q6.6 7 7 5.6Z" fill="#5aa84a"/></svg>
<svg style="left:1133.78px;top:160.2px" width="11.5" height="11" viewBox="0 0 11.5 11"><path d="M5.75 0.8L10.4 2.8V8L5.75 10.4L1.1 8V2.8Z" fill="#f2a03c" stroke="#fbe6c6" stroke-width="0.7"/><path d="M1.1 2.8L5.75 4.8L10.4 2.8L5.75 0.8Z" fill="#fbd8a4"/><path d="M5.75 4.8V10.4L10.4 8V2.8Z" fill="#d97e1c"/></svg>
<svg style="left:1147.8999999999999px;top:160.2px" width="11.5" height="11" viewBox="0 0 11.5 11"><ellipse cx="3.8" cy="7" rx="2.8" ry="1.9" fill="none" stroke="#bdbdbd" stroke-width="1.2" transform="rotate(-35 3.8 7)"/><ellipse cx="7.6" cy="4" rx="2.8" ry="1.9" fill="none" stroke="#bdbdbd" stroke-width="1.2" transform="rotate(-35 7.6 4)"/></svg>
<svg style="left:1162.02px;top:160.2px" width="11.5" height="11" viewBox="0 0 11.5 11"><path d="M1.6 9.8L6.4 4.8" stroke="#5a84d0" stroke-width="2"/><path d="M6.2 1.6Q8.4 0.4 10 2L8.2 3.4L8.8 4.8L10.6 3.6Q10.6 6 8.4 6.6Q6.4 6.6 6 4.6Q5.6 3 6.2 1.6Z" fill="#5a84d0"/></svg>
<svg style="left:1176.1399999999999px;top:160.2px" width="11.5" height="11" viewBox="0 0 11.5 11"><path d="M1.4 1.8H10.2L5.8 9.8Z" fill="none" stroke="#2a2a2a" stroke-width="0.8"/><circle cx="1.4" cy="1.8" r="1" fill="#bcbcbc"/><circle cx="10.2" cy="1.8" r="1" fill="#bcbcbc"/><circle cx="5.8" cy="9.8" r="1" fill="#bcbcbc"/></svg>
<svg style="left:1190.26px;top:160.2px" width="11.5" height="11" viewBox="0 0 11.5 11"><circle cx="6" cy="5.6" r="4.8" fill="#a8958e" stroke="#d8d0cc" stroke-width="0.6"/></svg>
<svg style="left:1189px;top:157.5px" width="11" height="10" viewBox="0 0 11 10"><path d="M1 0L11 10M4 0L11 7M7 0L11 4" stroke="#c8c8c8" stroke-width="0.8"/><path d="M2.2 0L11 8.8M5.2 0L11 5.8" stroke="#2a2a2a" stroke-width="0.8"/></svg>
<div style="left:1041px;top:174.3px;width:159px;height:0.8px;background:#5a5a5a;"></div>
<svg style="left:1047.5px;top:182.5px" width="12" height="12" viewBox="0 0 12 12"><path d="M0.8 11.2L4.4 7.6" stroke="#ddd" stroke-width="1.1"/><path d="M3 5.2L6.8 9L8 7L10.8 4.4L7.6 1.2L5 4Z" fill="#d8d8d8" stroke="#333" stroke-width="0.7"/></svg>
<svg style="left:1062.5px;top:182px" width="13" height="12" viewBox="0 0 13 12"><circle cx="3" cy="2.6" r="1.6" fill="#e8e36a"/><path d="M6.6 2.2h3.2v5.8H6.6z" fill="#3f74e0"/><path d="M6.6 2.2h1.4v5.8H6.6z" fill="#a9c4f7"/><circle cx="4.8" cy="8.2" r="2.4" fill="#ececec" stroke="#222" stroke-width="0.6"/></svg>
<svg style="left:1077.5px;top:186px" width="4" height="5" viewBox="0 0 4 5"><path d="M0.5 0.3V4.7L3.6 2.5Z" fill="#333"/></svg>
<svg style="left:1091.5px;top:183px" width="11" height="11" viewBox="0 0 11 11"><path d="M5.5 0.6L10.2 2.6V8L5.5 10.4L0.8 8V2.6Z" fill="#f2a03c" stroke="#fbe6c6" stroke-width="0.7"/><path d="M0.8 2.6L5.5 4.6L10.2 2.6L5.5 0.6Z" fill="#fbd8a4"/><path d="M5.5 4.6V10.4L10.2 8V2.6Z" fill="#d97e1c"/></svg>
<div style="left:1106.7px;top:183.6px;height:12px;line-height:12px;font-size:8.200000000000001px;color:#111;white-space:pre;">Cylinder.001</div>
<div style="left:1046.5px;top:206.8px;width:22.5px;height:13.4px;background:linear-gradient(#585858,#393939);box-shadow:0 0 0 0.7px #3a3a3a;border-radius:4px 0px 0px 4px;"></div>
<svg style="left:1049.6px;top:208.2px" width="10.5" height="10.5" viewBox="0 0 11 11"><path d="M5.5 0.6L10.2 2.6V8L5.5 10.4L0.8 8V2.6Z" fill="#f2a03c" stroke="#fbe6c6" stroke-width="0.7"/><path d="M0.8 2.6L5.5 4.6L10.2 2.6L5.5 0.6Z" fill="#fbd8a4"/><path d="M5.5 4.6V10.4L10.2 8V2.6Z" fill="#d97e1c"/></svg>
<svg style="left:1061.6px;top:208.0px" width="6" height="11" viewBox="0 0 6 11"><path d="M3 0.6 L5.4 4.4 H0.6Z M3 10.4 L5.4 6.6 H0.6Z" fill="#ddd"/></svg>
<div style="left:1069px;top:206.8px;width:125px;height:13.4px;background:linear-gradient(#959595,#b6b6b6);box-shadow:0 0 0 0.7px #3a3a3a;border-radius:0px 4px 4px 0px;"></div>
<div style="left:1074.2px;top:208.5px;height:12px;line-height:12px;font-size:8.200000000000001px;color:#111;white-space:pre;">Cylinder.001</div>
<div style="left:1044.5px;top:225.6px;width:152px;height:0.9px;background:#5c5c5c;"></div>
<svg style="left:1050px;top:232.3px" width="7" height="6" viewBox="0 0 7 6"><path d="M0.3 0.3H6.7L3.5 5.7Z" fill="#1a1a1a"/></svg>
<div style="left:1059.5px;top:230.2px;height:12px;line-height:12px;font-size:8.8px;color:#111;white-space:pre;">Transform</div>
<svg style="left:1184.5px;top:232.8px" width="9" height="5" viewBox="0 0 9 5"><path d="M0 0.5H9M0 2.5H9M0 4.5H9" stroke="#8c8c8c" stroke-width="0.7" stroke-dasharray="1.2 0.9"/></svg>
<div style="left:1051.8px;top:252.2px;height:12px;line-height:12px;font-size:8.1px;color:#111;white-space:pre;">Location:</div>
<div style="left:1103px;top:252.2px;height:12px;line-height:12px;font-size:8.1px;color:#111;white-space:pre;">Rotation:</div>
<div style="left:1154.6px;top:252.2px;height:12px;line-height:12px;font-size:8.1px;color:#111;white-space:pre;">Scale:</div>
<div style="left:1046.5px;top:263.8px;width:44.9px;height:14.15px;background:linear-gradient(#9f9f9f,#bdbdbd);box-shadow:0 0 0 0.7px #3a3a3a;border-radius:6.5px 6.5px 0px 0px;"></div>
<svg style="left:1051.1px;top:268.475px" width="4" height="5" viewBox="0 0 4 5"><path d="M3.4 0.4V4.6L0.5 2.5Z" fill="#858585"/></svg>
<svg style="left:1082.8000000000002px;top:268.475px" width="4" height="5" viewBox="0 0 4 5"><path d="M0.6 0.4V4.6L3.5 2.5Z" fill="#858585"/></svg>
<div style="left:1046.5px;top:265.875px;height:12px;line-height:12px;font-size:8.200000000000001px;color:#0c0c0c;white-space:pre;width:44.9px;text-align:center;">3.000</div>
<div style="left:1046.5px;top:277.95px;width:44.9px;height:14.15px;background:linear-gradient(#9f9f9f,#bdbdbd);box-shadow:0 0 0 0.7px #3a3a3a;border-radius:0px 0px 0px 0px;"></div>
<svg style="left:1051.1px;top:282.625px" width="4" height="5" viewBox="0 0 4 5"><path d="M3.4 0.4V4.6L0.5 2.5Z" fill="#858585"/></svg>
<svg style="left:1082.8000000000002px;top:282.625px" width="4" height="5" viewBox="0 0 4 5"><path d="M0.6 0.4V4.6L3.5 2.5Z" fill="#858585"/></svg>
<div style="left:1046.5px;top:280.025px;height:12px;line-height:12px;font-size:8.200000000000001px;color:#0c0c0c;white-space:pre;width:44.9px;text-align:center;">0.000</div>
<div style="left:1046.5px;top:292.1px;width:44.9px;height:14.15px;background:linear-gradient(#9f9f9f,#bdbdbd);box-shadow:0 0 0 0.7px #3a3a3a;border-radius:0px 0px 6.5px 6.5px;"></div>
<svg style="left:1051.1px;top:296.77500000000003px" width="4" height="5" viewBox="0 0 4 5"><path d="M3.4 0.4V4.6L0.5 2.5Z" fill="#858585"/></svg>
<svg style="left:1082.8000000000002px;top:296.77500000000003px" width="4" height="5" viewBox="0 0 4 5"><path d="M0.6 0.4V4.6L3.5 2.5Z" fill="#858585"/></svg>
<div style="left:1046.5px;top:294.175px;height:12px;line-height:12px;font-size:8.200000000000001px;color:#0c0c0c;white-space:pre;width:44.9px;text-align:center;">0.000</div>
<div style="left:1097.7px;top:263.8px;width:44.9px;height:14.15px;background:linear-gradient(#9f9f9f,#bdbdbd);box-shadow:0 0 0 0.7px #3a3a3a;border-radius:6.5px 6.5px 0px 0px;"></div>
<svg style="left:1102.3px;top:268.475px" width="4" height="5" viewBox="0 0 4 5"><path d="M3.4 0.4V4.6L0.5 2.5Z" fill="#858585"/></svg>
<svg style="left:1134.0000000000002px;top:268.475px" width="4" height="5" viewBox="0 0 4 5"><path d="M0.6 0.4V4.6L3.5 2.5Z" fill="#858585"/></svg>
<div style="left:1109.0px;top:265.875px;height:12px;line-height:12px;font-size:8.200000000000001px;color:#0c0c0c;white-space:pre;">X:</div>
<div style="left:1097.7px;top:265.875px;height:12px;line-height:12px;font-size:8.200000000000001px;color:#0c0c0c;white-space:pre;width:33.9px;text-align:right;">0°</div>
<div style="left:1097.7px;top:277.95px;width:44.9px;height:14.15px;background:linear-gradient(#9f9f9f,#bdbdbd);box-shadow:0 0 0 0.7px #3a3a3a;border-radius:0px 0px 0px 0px;"></div>
<svg style="left:1102.3px;top:282.625px" width="4" height="5" viewBox="0 0 4 5"><path d="M3.4 0.4V4.6L0.5 2.5Z" fill="#858585"/></svg>
<svg style="left:1134.0000000000002px;top:282.625px" width="4" height="5" viewBox="0 0 4 5"><path d="M0.6 0.4V4.6L3.5 2.5Z" fill="#858585"/></svg>
<div style="left:1109.0px;top:280.025px;height:12px;line-height:12px;font-size:8.200000000000001px;color:#0c0c0c;white-space:pre;">Y:</div>
<div style="left:1097.7px;top:280.025px;height:12px;line-height:12px;font-size:8.200000000000001px;color:#0c0c0c;white-space:pre;width:33.9px;text-align:right;">0°</div>
<div style="left:1097.7px;top:292.1px;width:44.9px;height:14.15px;background:linear-gradient(#9f9f9f,#bdbdbd);box-shadow:0 0 0 0.7px #3a3a3a;border-radius:0px 0px 6.5px 6.5px;"></div>
<svg style="left:1102.3px;top:296.77500000000003px" width="4" height="5" viewBox="0 0 4 5"><path d="M3.4 0.4V4.6L0.5 2.5Z" fill="#858585"/></svg>
<svg style="left:1134.0000000000002px;top:296.77500000000003px" width="4" height="5" viewBox="0 0 4 5"><path d="M0.6 0.4V4.6L3.5 2.5Z" fill="#858585"/></svg>
<div style="left:1109.0px;top:294.175px;height:12px;line-height:12px;font-size:8.200000000000001px;color:#0c0c0c;white-space:pre;">Z:</div>
<div style="left:1097.7px;top:294.175px;height:12px;line-height:12px;font-size:8.200000000000001px;color:#0c0c0c;white-space:pre;width:33.9px;text-align:right;">0°</div>
<div style="left:1148.9px;top:263.8px;width:44.9px;height:14.15px;background:linear-gradient(#9f9f9f,#bdbdbd);box-shadow:0 0 0 0.7px #3a3a3a;border-radius:6.5px 6.5px 0px 0px;"></div>
<svg style="left:1153.5px;top:268.475px" width="4" height="5" viewBox="0 0 4 5"><path d="M3.4 0.4V4.6L0.5 2.5Z" fill="#858585"/></svg>
<svg style="left:1185.2000000000003px;top:268.475px" width="4" height="5" viewBox="0 0 4 5"><path d="M0.6 0.4V4.6L3.5 2.5Z" fill="#858585"/></svg>
<div style="left:1148.9px;top:265.875px;height:12px;line-height:12px;font-size:8.200000000000001px;color:#0c0c0c;white-space:pre;width:44.9px;text-align:center;">1.000</div>
<div style="left:1148.9px;top:277.95px;width:44.9px;height:14.15px;background:linear-gradient(#9f9f9f,#bdbdbd);box-shadow:0 0 0 0.7px #3a3a3a;border-radius:0px 0px 0px 0px;"></div>
<svg style="left:1153.5px;top:282.625px" width="4" height="5" viewBox="0 0 4 5"><path d="M3.4 0.4V4.6L0.5 2.5Z" fill="#858585"/></svg>
<svg style="left:1185.2000000000003px;top:282.625px" width="4" height="5" viewBox="0 0 4 5"><path d="M0.6 0.4V4.6L3.5 2.5Z" fill="#858585"/></svg>
<div style="left:1148.9px;top:280.025px;height:12px;line-height:12px;font-size:8.200000000000001px;color:#0c0c0c;white-space:pre;width:44.9px;text-align:center;">1.000</div>
<div style="left:1148.9px;top:292.1px;width:44.9px;height:14.15px;background:linear-gradient(#9f9f9f,#bdbdbd);box-shadow:0 0 0 0.7px #3a3a3a;border-radius:0px 0px 6.5px 6.5px;"></div>
<svg style="left:1153.5px;top:296.77500000000003px" width="4" height="5" viewBox="0 0 4 5"><path d="M3.4 0.4V4.6L0.5 2.5Z" fill="#858585"/></svg>
<svg style="left:1185.2000000000003px;top:296.77500000000003px" width="4" height="5" viewBox="0 0 4 5"><path d="M0.6 0.4V4.6L3.5 2.5Z" fill="#858585"/></svg>
<div style="left:1148.9px;top:294.175px;height:12px;line-height:12px;font-size:8.200000000000001px;color:#0c0c0c;white-space:pre;width:44.9px;text-align:center;">1.000</div>
<div style="left:1051.8px;top:312.7px;height:12px;line-height:12px;font-size:8.1px;color:#111;white-space:pre;">Rotation ...</div>
<div style="left:1098.9px;top:310.6px;width:95.1px;height:13.3px;background:linear-gradient(#585858,#393939);box-shadow:0 0 0 0.7px #3a3a3a;border-radius:4px 4px 4px 4px;"></div>
<div style="left:1104.9px;top:312.25px;height:12px;line-height:12px;font-size:7.9px;color:#fff;white-space:pre;">XYZ Euler</div>
<svg style="left:1184.5px;top:311.75px" width="6" height="11" viewBox="0 0 6 11"><path d="M3 0.6 L5.4 4.4 H0.6Z M3 10.4 L5.4 6.6 H0.6Z" fill="#e0e0e0"/></svg>
<div style="left:1044.5px;top:329.6px;width:152px;height:0.9px;background:#5c5c5c;"></div>
<svg style="left:1050.5px;top:335.5px" width="6" height="7" viewBox="0 0 6 7"><path d="M0.3 0.3V6.7L5.7 3.5Z" fill="#1a1a1a"/></svg>
<div style="left:1059.5px;top:333.9px;height:12px;line-height:12px;font-size:8.8px;color:#111;white-space:pre;">Delta Transform</div>
<svg style="left:1184.5px;top:336.5px" width="9" height="5" viewBox="0 0 9 5"><path d="M0 0.5H9M0 2.5H9M0 4.5H9" stroke="#8c8c8c" stroke-width="0.7" stroke-dasharray="1.2 0.9"/></svg>
<div style="left:1044.5px;top:347px;width:152px;height:0.9px;background:#5c5c5c;"></div>
<svg style="left:1050.5px;top:352.8px" width="6" height="7" viewBox="0 0 6 7"><path d="M0.3 0.3V6.7L5.7 3.5Z" fill="#1a1a1a"/></svg>
<div style="left:1059.5px;top:351.2px;height:12px;line-height:12px;font-size:8.8px;color:#111;white-space:pre;">Transform Locks</div>
<svg style="left:1184.5px;top:353.8px" width="9" height="5" viewBox="0 0 9 5"><path d="M0 0.5H9M0 2.5H9M0 4.5H9" stroke="#8c8c8c" stroke-width="0.7" stroke-dasharray="1.2 0.9"/></svg>
<div style="left:1044.5px;top:364.4px;width:152px;height:0.9px;background:#5c5c5c;"></div>
<svg style="left:1050px;top:370.7px" width="7" height="6" viewBox="0 0 7 6"><path d="M0.3 0.3H6.7L3.5 5.7Z" fill="#1a1a1a"/></svg>
<div style="left:1059.5px;top:368.59999999999997px;height:12px;line-height:12px;font-size:8.8px;color:#111;white-space:pre;">Relations</div>
<svg style="left:1184.5px;top:371.2px" width="9" height="5" viewBox="0 0 9 5"><path d="M0 0.5H9M0 2.5H9M0 4.5H9" stroke="#8c8c8c" stroke-width="0.7" stroke-dasharray="1.2 0.9"/></svg>
<div style="left:1051.8px;top:389.7px;height:12px;line-height:12px;font-size:8.1px;color:#111;white-space:pre;">Layers:</div>
<div style="left:1128.5px;top:389.7px;height:12px;line-height:12px;font-size:8.1px;color:#111;white-space:pre;">Parent:</div>
<div style="left:1046.7px;top:404px;width:32.5px;height:20.6px;background:linear-gradient(#a9a9a9,#8b8b8b);box-shadow:0 0 0 0.7px #3a3a3a;border-radius:4px 4px 4px 4px;"></div>
<div style="left:1046.7px;top:404px;width:6.5px;height:10.3px;background:#5e5e5e;border-radius:4px 0 0 0;"></div>
<div style="left:1052.8px;top:404px;width:0.8px;height:20.6px;background:#4a4a4a;"></div>
<div style="left:1059.3px;top:404px;width:0.8px;height:20.6px;background:#4a4a4a;"></div>
<div style="left:1065.8px;top:404px;width:0.8px;height:20.6px;background:#4a4a4a;"></div>
<div style="left:1072.3px;top:404px;width:0.8px;height:20.6px;background:#4a4a4a;"></div>
<div style="left:1046.7px;top:414px;width:32.5px;height:0.8px;background:#4a4a4a;"></div>
<div style="left:1083.3px;top:404px;width:33.7px;height:20.6px;background:linear-gradient(#a9a9a9,#8b8b8b);box-shadow:0 0 0 0.7px #3a3a3a;border-radius:4px 4px 4px 4px;"></div>
<div style="left:1089.6399999999999px;top:404px;width:0.8px;height:20.6px;background:#4a4a4a;"></div>
<div style="left:1096.3799999999999px;top:404px;width:0.8px;height:20.6px;background:#4a4a4a;"></div>
<div style="left:1103.12px;top:404px;width:0.8px;height:20.6px;background:#4a4a4a;"></div>
<div style="left:1109.86px;top:404px;width:0.8px;height:20.6px;background:#4a4a4a;"></div>
<div style="left:1083.3px;top:414px;width:33.7px;height:0.8px;background:#4a4a4a;"></div>
<div style="left:1123px;top:404px;width:71.3px;height:12.8px;background:linear-gradient(#959595,#b6b6b6);box-shadow:0 0 0 0.7px #3a3a3a;border-radius:4px 4px 4px 4px;"></div>
<svg style="left:1126px;top:405.3px" width="10.2" height="10.2" viewBox="0 0 11 11"><path d="M5.5 0.6L10.2 2.6V8L5.5 10.4L0.8 8V2.6Z" fill="#f2a03c" stroke="#fbe6c6" stroke-width="0.7"/><path d="M0.8 2.6L5.5 4.6L10.2 2.6L5.5 0.6Z" fill="#fbd8a4"/><path d="M5.5 4.6V10.4L10.2 8V2.6Z" fill="#d97e1c"/></svg>
<svg style="left:1182px;top:405px" width="11" height="11" viewBox="0 0 11 11"><path d="M1.2 9.8L6 5" stroke="#222" stroke-width="1.4"/><path d="M5 3L8 6M6 4.2L8.4 1.8Q9.6 1 10 2.6L7.4 5.4" stroke="#222" stroke-width="1.5" fill="none"/></svg>
<div style="left:1123px;top:420px;width:71.3px;height:12.8px;background:linear-gradient(#6c6c6c,#626262);box-shadow:0 0 0 0.7px #555;border-radius:4px 4px 4px 4px;"></div>
<div style="left:1129px;top:421.3px;height:12px;line-height:12px;font-size:8.1px;color:#8e8e8e;white-space:pre;">Object</div>
<svg style="left:1184.5px;top:420.9px" width="6" height="11" viewBox="0 0 6 11"><path d="M3 0.6 L5.4 4.4 H0.6Z M3 10.4 L5.4 6.6 H0.6Z" fill="#8e8e8e"/></svg>
<div style="left:1046.7px;top:432.4px;width:70.3px;height:13.3px;background:linear-gradient(#9f9f9f,#bdbdbd);box-shadow:0 0 0 0.7px #3a3a3a;border-radius:6.6px 6.6px 6.6px 6.6px;"></div>
<svg style="left:1051px;top:436.6px" width="4" height="5" viewBox="0 0 4 5"><path d="M3.4 0.4V4.6L0.5 2.5Z" fill="#858585"/></svg>
<svg style="left:1108.6px;top:436.6px" width="4" height="5" viewBox="0 0 4 5"><path d="M0.6 0.4V4.6L3.5 2.5Z" fill="#858585"/></svg>
<div style="left:1058px;top:434.0px;height:12px;line-height:12px;font-size:8.1px;color:#0c0c0c;white-space:pre;">Pass Index:  0</div>
<div style="left:1044.5px;top:451.8px;width:152px;height:0.9px;background:#5c5c5c;"></div>
<svg style="left:1050.5px;top:457.4px" width="6" height="7" viewBox="0 0 6 7"><path d="M0.3 0.3V6.7L5.7 3.5Z" fill="#1a1a1a"/></svg>
<div style="left:1059.5px;top:455.79999999999995px;height:12px;line-height:12px;font-size:8.8px;color:#111;white-space:pre;">Relations Extras</div>
<svg style="left:1184.5px;top:458.4px" width="9" height="5" viewBox="0 0 9 5"><path d="M0 0.5H9M0 2.5H9M0 4.5H9" stroke="#8c8c8c" stroke-width="0.7" stroke-dasharray="1.2 0.9"/></svg>
<div style="left:1044.5px;top:469.2px;width:152px;height:0.9px;background:#5c5c5c;"></div>
<svg style="left:1050px;top:474.4px" width="7" height="6" viewBox="0 0 7 6"><path d="M0.3 0.3H6.7L3.5 5.7Z" fill="#1a1a1a"/></svg>
<div style="left:1059.5px;top:472.29999999999995px;height:12px;line-height:12px;font-size:8.8px;color:#111;white-space:pre;">Groups</div>
<svg style="left:1184.5px;top:474.9px" width="9" height="5" viewBox="0 0 9 5"><path d="M0 0.5H9M0 2.5H9M0 4.5H9" stroke="#8c8c8c" stroke-width="0.7" stroke-dasharray="1.2 0.9"/></svg>
<div style="left:1046.7px;top:492.6px;width:132.6px;height:13px;background:linear-gradient(#8a8a8a,#7c7c7c);box-shadow:0 0 0 0.7px #555;border-radius:4px 0px 0px 4px;"></div>
<div style="left:1046.7px;top:494.0px;height:12px;line-height:12px;font-size:8.1px;color:#4e4e4e;white-space:pre;width:132.6px;text-align:center;">Add to Group</div>
<div style="left:1179.3px;top:492.6px;width:14.5px;height:13px;background:linear-gradient(#8a8a8a,#7c7c7c);box-shadow:0 0 0 0.7px #555;border-radius:0px 4px 4px 0px;"></div>
<svg style="left:1182.5px;top:495px" width="8" height="8" viewBox="0 0 8 8"><path d="M4 0.6V7.4M0.6 4H7.4" stroke="#a4a4a4" stroke-width="1.2"/></svg>
<div style="left:1044.5px;top:511.8px;width:152px;height:0.9px;background:#5c5c5c;"></div>
<svg style="left:1050px;top:517.4px" width="7" height="6" viewBox="0 0 7 6"><path d="M0.3 0.3H6.7L3.5 5.7Z" fill="#1a1a1a"/></svg>
<div style="left:1059.5px;top:515.3000000000001px;height:12px;line-height:12px;font-size:8.8px;color:#111;white-space:pre;">Display</div>
<svg style="left:1184.5px;top:517.9px" width="9" height="5" viewBox="0 0 9 5"><path d="M0 0.5H9M0 2.5H9M0 4.5H9" stroke="#8c8c8c" stroke-width="0.7" stroke-dasharray="1.2 0.9"/></svg>
<div style="left:1049.3px;top:537.5px;width:9.4px;height:9.4px;background:linear-gradient(#4e4e4e,#404040);border-radius:2.4px;box-shadow:0 0 0 0.7px #2e2e2e;"></div>
<div style="left:1064.4px;top:537.3000000000001px;height:12px;line-height:12px;font-size:8.1px;color:#111;white-space:pre;">Name</div>
<div style="left:1049.3px;top:553.0999999999999px;width:9.4px;height:9.4px;background:linear-gradient(#4e4e4e,#404040);border-radius:2.4px;box-shadow:0 0 0 0.7px #2e2e2e;"></div>
<div style="left:1064.4px;top:552.9px;height:12px;line-height:12px;font-size:8.1px;color:#111;white-space:pre;">Axis</div>
<div style="left:1049.3px;top:568.5999999999999px;width:9.4px;height:9.4px;background:linear-gradient(#4e4e4e,#404040);border-radius:2.4px;box-shadow:0 0 0 0.7px #2e2e2e;"></div>
<svg style="left:1048.8px;top:566.3px" width="12" height="12" viewBox="0 0 12 12"><path d="M2.4 6.4L4.8 9.2L10 2" fill="none" stroke="#fff" stroke-width="1.5"/></svg>
<div style="left:1064.4px;top:568.4px;height:12px;line-height:12px;font-size:8.1px;color:#fff;white-space:pre;">Wire</div>
<div style="left:1049.3px;top:584.5999999999999px;width:9.4px;height:9.4px;background:linear-gradient(#4e4e4e,#404040);border-radius:2.4px;box-shadow:0 0 0 0.7px #2e2e2e;"></div>
<svg style="left:1048.8px;top:582.3px" width="12" height="12" viewBox="0 0 12 12"><path d="M2.4 6.4L4.8 9.2L10 2" fill="none" stroke="#fff" stroke-width="1.5"/></svg>
<div style="left:1064.4px;top:584.4px;height:12px;line-height:12px;font-size:8.1px;color:#fff;white-space:pre;">Draw All Ed...</div>
<div style="left:1125.6px;top:537.5px;width:9.4px;height:9.4px;background:linear-gradient(#4e4e4e,#404040);border-radius:2.4px;box-shadow:0 0 0 0.7px #2e2e2e;"></div>
<div style="left:1140.7px;top:537.3000000000001px;height:12px;line-height:12px;font-size:8.1px;color:#111;white-space:pre;">Bou</div>
<div style="left:1125.6px;top:553.0999999999999px;width:9.4px;height:9.4px;background:linear-gradient(#4e4e4e,#404040);border-radius:2.4px;box-shadow:0 0 0 0.7px #2e2e2e;"></div>
<div style="left:1140.7px;top:552.9px;height:12px;line-height:12px;font-size:8.1px;color:#111;white-space:pre;">Texture Space</div>
<div style="left:1125.6px;top:568.5999999999999px;width:9.4px;height:9.4px;background:linear-gradient(#4e4e4e,#404040);border-radius:2.4px;box-shadow:0 0 0 0.7px #2e2e2e;"></div>
<div style="left:1140.7px;top:568.4px;height:12px;line-height:12px;font-size:8.1px;color:#111;white-space:pre;">X-Ray</div>
<div style="left:1125.6px;top:584.5999999999999px;width:9.4px;height:9.4px;background:linear-gradient(#4e4e4e,#404040);border-radius:2.4px;box-shadow:0 0 0 0.7px #2e2e2e;"></div>
<div style="left:1140.7px;top:584.4px;height:12px;line-height:12px;font-size:8.1px;color:#111;white-space:pre;">Transparency</div>
<div style="left:1161.5px;top:536px;width:32.3px;height:12.4px;background:linear-gradient(#6c6c6c,#626262);box-shadow:0 0 0 0.7px #555;border-radius:4px 4px 4px 4px;"></div>
<div style="left:1167.5px;top:537.2px;height:12px;line-height:12px;font-size:8.1px;color:#8e8e8e;white-space:pre;">Box</div>
<svg style="left:1185px;top:536.7px" width="6" height="11" viewBox="0 0 6 11"><path d="M3 0.6 L5.4 4.4 H0.6Z M3 10.4 L5.4 6.6 H0.6Z" fill="#8e8e8e"/></svg>
<div style="left:1051.5px;top:602.1px;height:12px;line-height:12px;font-size:8.0px;color:#111;white-space:pre;">Maximum Draw ...</div>
<div style="left:1128.9px;top:602.1px;height:12px;line-height:12px;font-size:8.0px;color:#111;white-space:pre;">Object Color:</div>
<div style="left:1046.7px;top:615.8px;width:70.3px;height:13.4px;background:linear-gradient(#585858,#393939);box-shadow:0 0 0 0.7px #3a3a3a;border-radius:4px 4px 4px 4px;"></div>
<div style="left:1051.7px;top:617.5px;height:12px;line-height:12px;font-size:7.9px;color:#fff;white-space:pre;">Textured</div>
<svg style="left:1107.5px;top:617.0px" width="6" height="11" viewBox="0 0 6 11"><path d="M3 0.6 L5.4 4.4 H0.6Z M3 10.4 L5.4 6.6 H0.6Z" fill="#e0e0e0"/></svg>
<div style="left:1122.6px;top:615.8px;width:71.4px;height:13.4px;background:#fff;box-shadow:0 0 0 0.7px #3a3a3a;border-radius:4px 4px 4px 4px;"></div>
<div style="left:1044.5px;top:635px;width:152px;height:0.9px;background:#5c5c5c;"></div>
<svg style="left:1050px;top:641px" width="7" height="6" viewBox="0 0 7 6"><path d="M0.3 0.3H6.7L3.5 5.7Z" fill="#1a1a1a"/></svg>
<div style="left:1059.5px;top:638.9000000000001px;height:12px;line-height:12px;font-size:8.8px;color:#111;white-space:pre;">Duplication</div>
<svg style="left:1184.5px;top:641.5px" width="9" height="5" viewBox="0 0 9 5"><path d="M0 0.5H9M0 2.5H9M0 4.5H9" stroke="#8c8c8c" stroke-width="0.7" stroke-dasharray="1.2 0.9"/></svg>
<div style="left:1046.7px;top:658.2px;width:28.899999999999864px;height:13.6px;background:linear-gradient(#4e78c4,#6a94e0);box-shadow:0 0 0 0.7px #3a3a3a;border-radius:4px 0px 0px 4px;"></div>
<div style="left:1046.7px;top:660.0px;height:12px;line-height:12px;font-size:8.0px;color:#000;white-space:pre;width:28.899999999999864px;text-align:center;">None</div>
<div style="left:1075.6px;top:658.2px;width:29.200000000000045px;height:13.6px;background:linear-gradient(#585858,#393939);box-shadow:0 0 0 0.7px #3a3a3a;border-radius:0px 0px 0px 0px;"></div>
<div style="left:1075.6px;top:660.0px;height:12px;line-height:12px;font-size:8.0px;color:#fff;white-space:pre;width:29.200000000000045px;text-align:center;">Frames</div>
<div style="left:1104.8px;top:658.2px;width:30.0px;height:13.6px;background:linear-gradient(#585858,#393939);box-shadow:0 0 0 0.7px #3a3a3a;border-radius:0px 0px 0px 0px;"></div>
<div style="left:1104.8px;top:660.0px;height:12px;line-height:12px;font-size:8.0px;color:#fff;white-space:pre;width:30.0px;text-align:center;">Verts</div>
<div style="left:1134.8px;top:658.2px;width:29.600000000000136px;height:13.6px;background:linear-gradient(#585858,#393939);box-shadow:0 0 0 0.7px #3a3a3a;border-radius:0px 0px 0px 0px;"></div>
<div style="left:1134.8px;top:660.0px;height:12px;line-height:12px;font-size:8.0px;color:#fff;white-space:pre;width:29.600000000000136px;text-align:center;">Faces</div>
<div style="left:1164.4px;top:658.2px;width:29.59999999999991px;height:13.6px;background:linear-gradient(#585858,#393939);box-shadow:0 0 0 0.7px #3a3a3a;border-radius:0px 4px 4px 0px;"></div>
<div style="left:1164.4px;top:660.0px;height:12px;line-height:12px;font-size:8.0px;color:#fff;white-space:pre;width:29.59999999999991px;text-align:center;">Group</div>
<div style="left:1044.5px;top:678.4px;width:152px;height:0.9px;background:#5c5c5c;"></div>
<svg style="left:1050.5px;top:683.3px" width="6" height="7" viewBox="0 0 6 7"><path d="M0.3 0.3V6.7L5.7 3.5Z" fill="#1a1a1a"/></svg>
<div style="left:1059.5px;top:681.7px;height:12px;line-height:12px;font-size:8.8px;color:#111;white-space:pre;">Motion Paths</div>
<svg style="left:1184.5px;top:684.3px" width="9" height="5" viewBox="0 0 9 5"><path d="M0 0.5H9M0 2.5H9M0 4.5H9" stroke="#8c8c8c" stroke-width="0.7" stroke-dasharray="1.2 0.9"/></svg>
<div style="left:1044.5px;top:694.6px;width:152px;height:0.9px;background:#5c5c5c;"></div>
<svg style="left:1050.5px;top:700.5px" width="6" height="7" viewBox="0 0 6 7"><path d="M0.3 0.3V6.7L5.7 3.5Z" fill="#1a1a1a"/></svg>
<div style="left:1059.5px;top:698.9000000000001px;height:12px;line-height:12px;font-size:8.8px;color:#111;white-space:pre;">Custom Properties</div>
<svg style="left:1184.5px;top:701.5px" width="9" height="5" viewBox="0 0 9 5"><path d="M0 0.5H9M0 2.5H9M0 4.5H9" stroke="#8c8c8c" stroke-width="0.7" stroke-dasharray="1.2 0.9"/></svg>
<svg style="left:1041px;top:721px" width="10" height="10" viewBox="0 0 10 10"><path d="M0 2L8 10M0 5L5 10M0 8L2 10" stroke="#d0d0d0" stroke-width="0.8"/><path d="M0 3.2L6.8 10M0 6.2L3.8 10" stroke="#2a2a2a" stroke-width="0.8"/></svg>
</div></body></html>
